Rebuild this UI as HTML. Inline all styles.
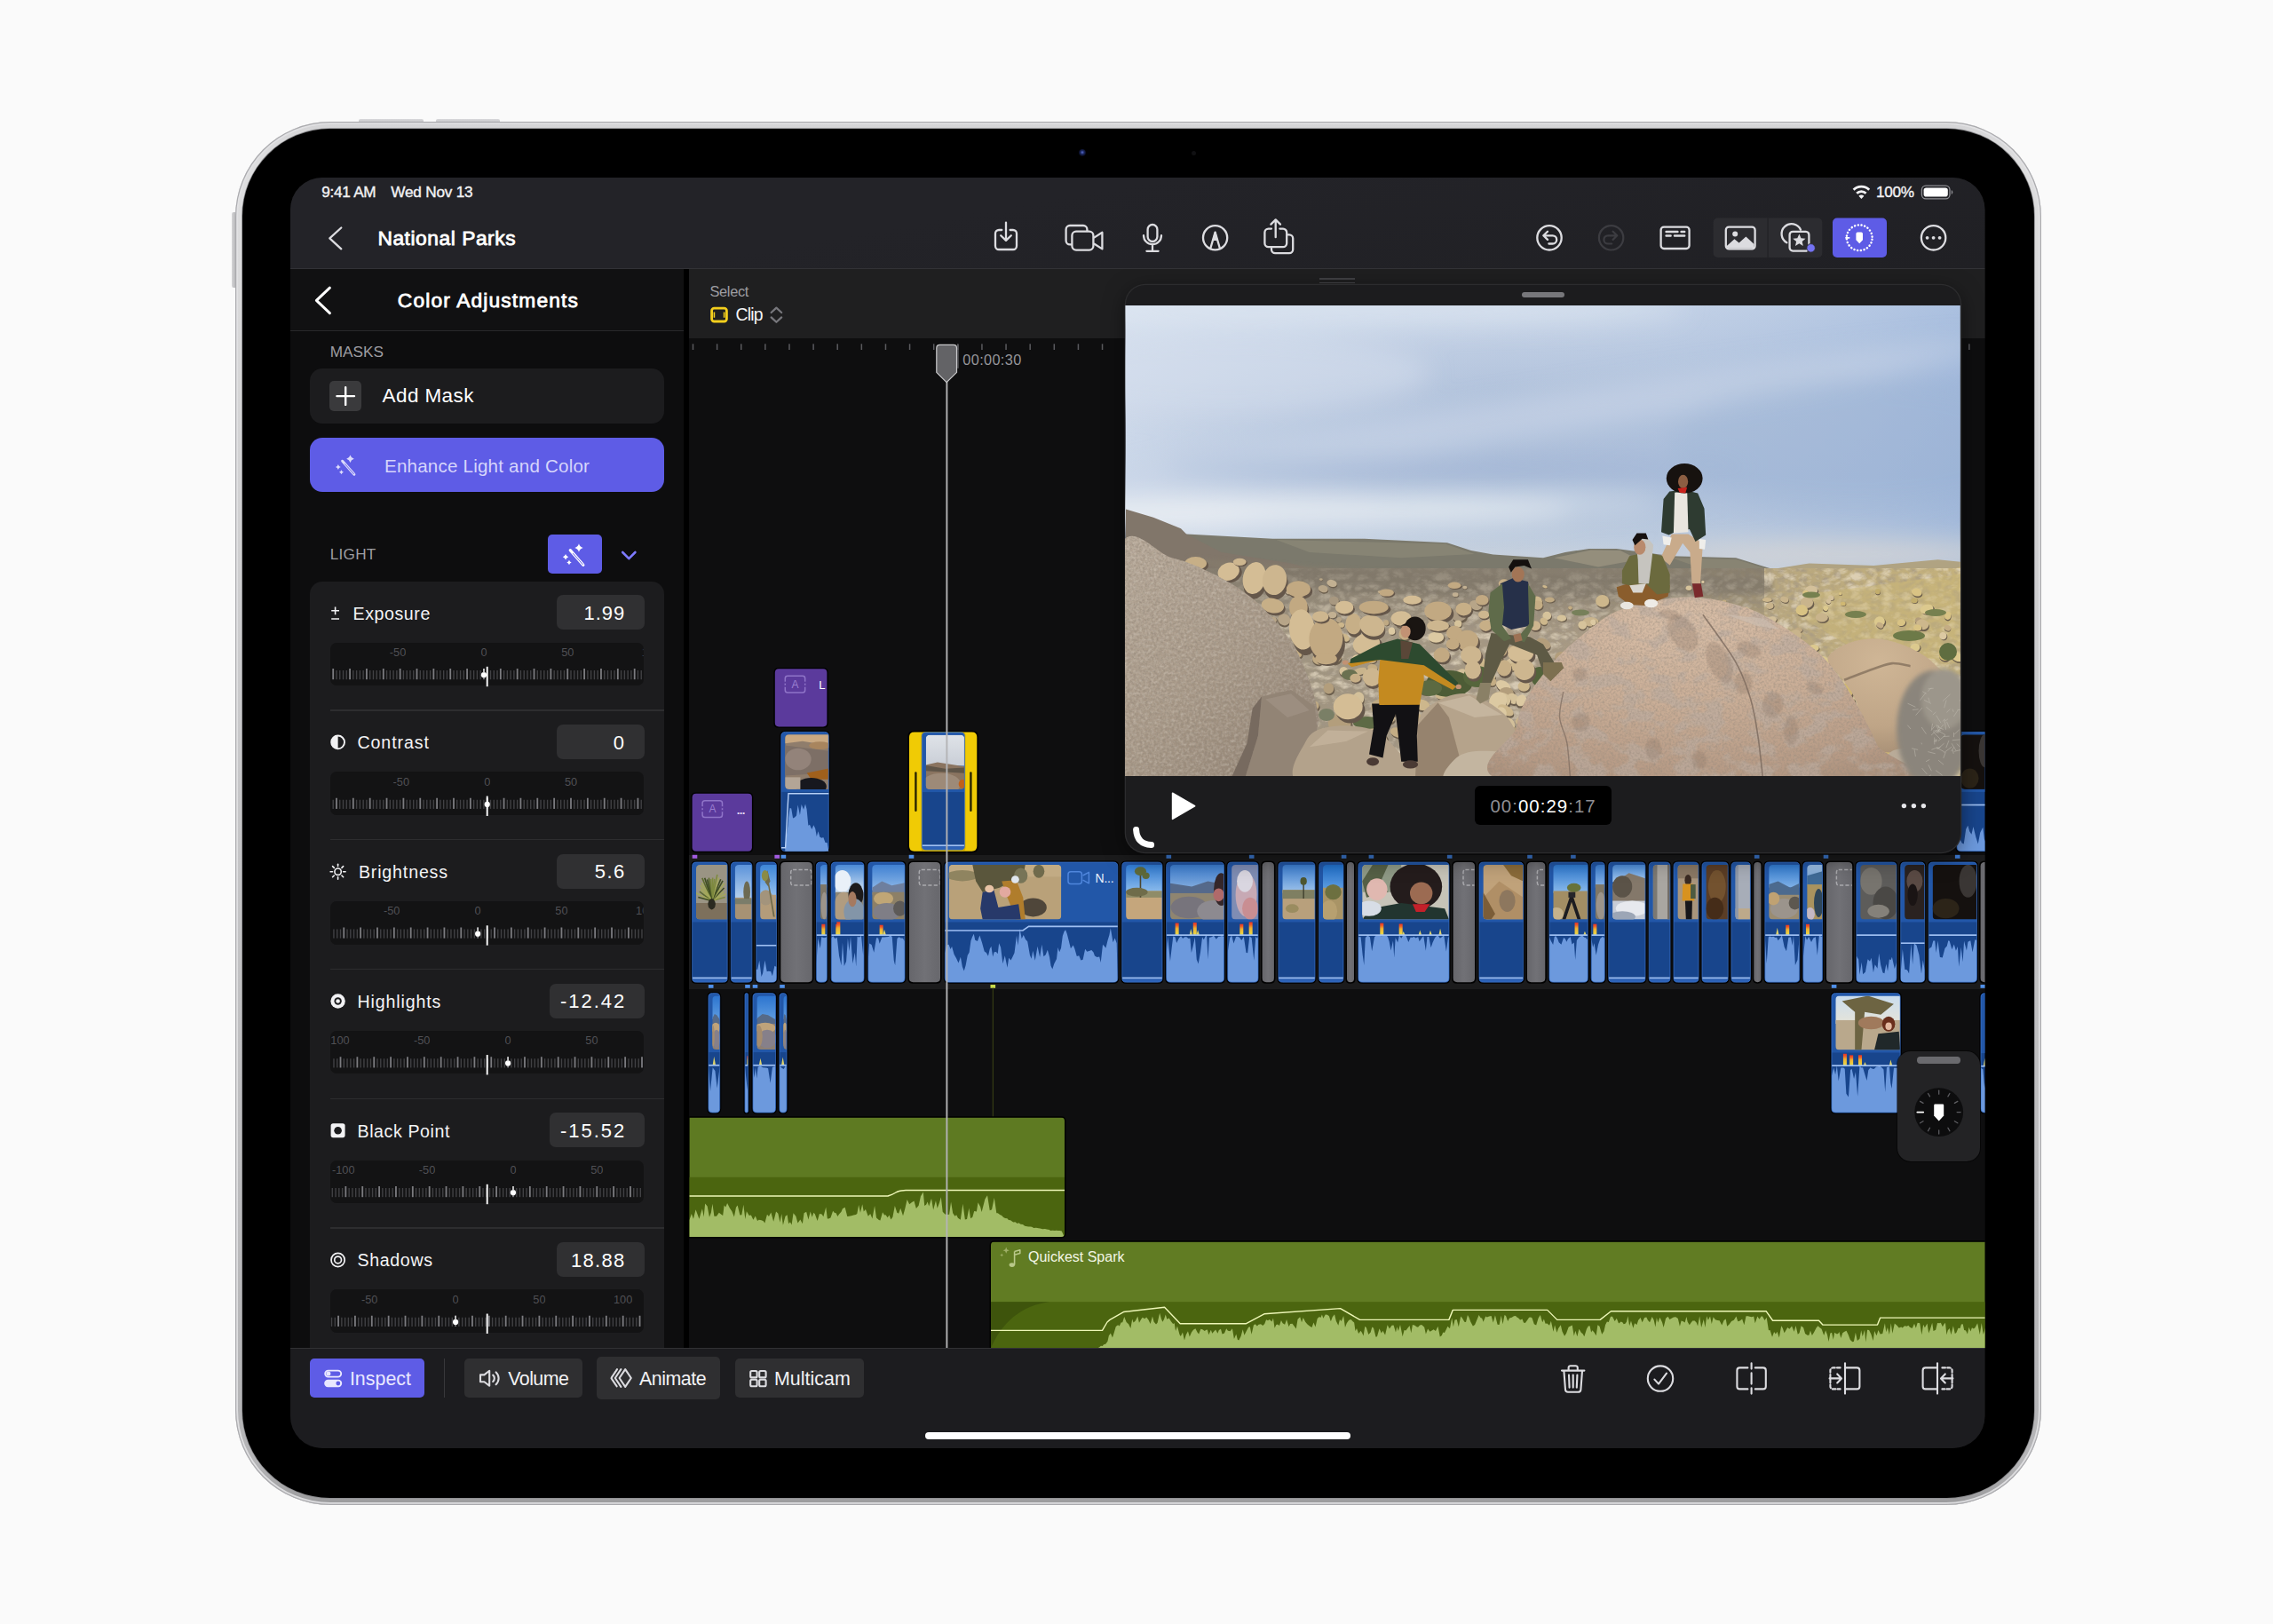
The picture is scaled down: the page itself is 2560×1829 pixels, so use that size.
<!DOCTYPE html><html lang="en"><head><meta charset="utf-8"><title>Final Cut Pro for iPad - Color Adjustments</title><style>
html,body{margin:0;padding:0}
body{width:2560px;height:1829px;background:#fafafa;position:relative;overflow:hidden;font-family:"Liberation Sans",Arial,sans-serif}
.t{position:absolute;white-space:nowrap;line-height:1;font-family:"Liberation Sans",Arial,sans-serif}
.sl{font-size:12.8px;color:#505054}
#screen{position:absolute;left:0;top:0;width:2560px;height:1829px;clip-path:inset(200px 324.5px 198px 327px round 36px)}
</style></head><body>
<div style="position:absolute;left:404.30px;top:133.60px;width:72.30px;height:6.00px;background:linear-gradient(#d9d9db,#b8b8ba);border-radius:2px 2px 0 0"></div>
<div style="position:absolute;left:490.90px;top:133.60px;width:72.30px;height:6.00px;background:linear-gradient(#d9d9db,#b8b8ba);border-radius:2px 2px 0 0"></div>
<div style="position:absolute;left:261.20px;top:238.60px;width:6.00px;height:85.70px;background:linear-gradient(90deg,#d5d5d7,#aaaaac);border-radius:2px 0 0 2px"></div>
<div style="position:absolute;left:264.60px;top:136.60px;width:2034.40px;height:1558.40px;border-radius:107px;background:linear-gradient(180deg,#d4d4d6 0%,#dededf 3%,#c6c6c8 50%,#b4b4b6 97%,#9a9a9c 100%);box-shadow:inset 0 0 0 1.2px rgba(168,168,171,.95), inset 0 0 0 3px rgba(226,226,228,.9)"></div>
<div style="position:absolute;left:272.80px;top:144.80px;width:2018.00px;height:1542.00px;border-radius:98.6px;background:#000;box-shadow:0 0 0 0.8px #8a8a8d"></div>
<div style="position:absolute;left:1215.00px;top:168.00px;width:8.00px;height:8.00px;border-radius:50%;background:radial-gradient(circle at 50% 45%,#5a6fd0 0,#1b2760 35%,#070a1a 70%,#000 100%)"></div>
<div style="position:absolute;left:1341.50px;top:169.50px;width:5.00px;height:5.00px;border-radius:50%;background:#101012"></div>
<div id="screen">
<div style="position:absolute;left:327px;top:200px;width:1909px;height:1431px;background:#0e0e0f"></div>
<div style="position:absolute;left:327.00px;top:303.20px;width:443.40px;height:1215.20px;background:#0d0d0e"></div>
<div style="position:absolute;left:327.00px;top:303.20px;width:443.40px;height:69.00px;background:#111112"></div>
<div style="position:absolute;left:327.00px;top:372.20px;width:443.40px;height:1.20px;background:#29292b"></div>
<div style="position:absolute;left:770.40px;top:303.20px;width:6.00px;height:1215.20px;background:#000"></div>
<div class="t " style="left:447.80px;top:326.70px;font-size:22.80px;font-weight:400;color:#fff;letter-spacing:1.136px;-webkit-text-stroke:0.8px #fff;">Color Adjustments</div>
<div class="t " style="left:371.80px;top:387.84px;font-size:17.20px;font-weight:400;color:#9d9da2;letter-spacing:-0.005px;">MASKS</div>
<div style="position:absolute;left:349.00px;top:415.40px;width:399.40px;height:61.20px;background:#1c1c1e;border-radius:14px"></div>
<div style="position:absolute;left:371.00px;top:429.40px;width:36.40px;height:33.40px;background:#3a3a3c;border-radius:5px"></div>
<div class="t " style="left:430.60px;top:435.05px;font-size:22.50px;font-weight:400;color:#fff;letter-spacing:0.394px;">Add Mask</div>
<div style="position:absolute;left:349.00px;top:493.30px;width:399.40px;height:61.00px;background:#5e5ce6;border-radius:14px"></div>
<div class="t " style="left:433.00px;top:514.76px;font-size:20.60px;font-weight:400;color:#d6d5fb;letter-spacing:0.192px;">Enhance Light and Color</div>
<div class="t " style="left:371.80px;top:616.24px;font-size:17.20px;font-weight:400;color:#9d9da2;letter-spacing:0.237px;">LIGHT</div>
<div style="position:absolute;left:617.40px;top:602.30px;width:61.00px;height:44.00px;background:#5e5ce6;border-radius:5px"></div>
<div style="position:absolute;left:349.00px;top:654.80px;width:399.40px;height:880.00px;background:#1c1c1e;border-radius:14px"></div>
<div class="t " style="left:397.50px;top:681.61px;font-size:19.60px;font-weight:400;color:#f4f4f6;letter-spacing:0.571px;">Exposure</div>
<div style="position:absolute;left:627.00px;top:670.30px;width:99.20px;height:39.10px;background:#303032;border-radius:7px"></div>
<div class="t " style="left:657.50px;top:679.88px;font-size:22.00px;font-weight:400;color:#fff;letter-spacing:0.994px;">1.99</div>
<div class="trk" style="position:absolute;left:372.00px;top:723.60px;width:353.20px;height:48.60px;background:#131314;border-radius:7px;overflow:hidden"></div>
<svg style="position:absolute;left:0;top:0;overflow:visible" width="1" height="1"><g><rect x="374.31" y="753.00" width="1.8" height="12.2" fill="#7c7c80"/><rect x="378.28" y="755.00" width="1.4" height="10.2" fill="#414144"/><rect x="382.05" y="755.00" width="1.4" height="10.2" fill="#414144"/><rect x="385.82" y="755.00" width="1.4" height="10.2" fill="#414144"/><rect x="389.59" y="755.00" width="1.4" height="10.2" fill="#414144"/><rect x="393.17" y="753.00" width="1.8" height="12.2" fill="#7c7c80"/><rect x="397.14" y="755.00" width="1.4" height="10.2" fill="#414144"/><rect x="400.91" y="755.00" width="1.4" height="10.2" fill="#414144"/><rect x="404.68" y="755.00" width="1.4" height="10.2" fill="#414144"/><rect x="408.45" y="755.00" width="1.4" height="10.2" fill="#414144"/><rect x="412.03" y="753.00" width="1.8" height="12.2" fill="#7c7c80"/><rect x="416.00" y="755.00" width="1.4" height="10.2" fill="#414144"/><rect x="419.77" y="755.00" width="1.4" height="10.2" fill="#414144"/><rect x="423.54" y="755.00" width="1.4" height="10.2" fill="#414144"/><rect x="427.31" y="755.00" width="1.4" height="10.2" fill="#414144"/><rect x="430.89" y="753.00" width="1.8" height="12.2" fill="#7c7c80"/><rect x="434.86" y="755.00" width="1.4" height="10.2" fill="#414144"/><rect x="438.63" y="755.00" width="1.4" height="10.2" fill="#414144"/><rect x="442.40" y="755.00" width="1.4" height="10.2" fill="#414144"/><rect x="446.17" y="755.00" width="1.4" height="10.2" fill="#414144"/><rect x="449.75" y="753.00" width="1.8" height="12.2" fill="#7c7c80"/><rect x="453.72" y="755.00" width="1.4" height="10.2" fill="#414144"/><rect x="457.49" y="755.00" width="1.4" height="10.2" fill="#414144"/><rect x="461.26" y="755.00" width="1.4" height="10.2" fill="#414144"/><rect x="465.03" y="755.00" width="1.4" height="10.2" fill="#414144"/><rect x="468.61" y="753.00" width="1.8" height="12.2" fill="#7c7c80"/><rect x="472.58" y="755.00" width="1.4" height="10.2" fill="#414144"/><rect x="476.35" y="755.00" width="1.4" height="10.2" fill="#414144"/><rect x="480.12" y="755.00" width="1.4" height="10.2" fill="#414144"/><rect x="483.89" y="755.00" width="1.4" height="10.2" fill="#414144"/><rect x="487.47" y="753.00" width="1.8" height="12.2" fill="#7c7c80"/><rect x="491.44" y="755.00" width="1.4" height="10.2" fill="#414144"/><rect x="495.21" y="755.00" width="1.4" height="10.2" fill="#414144"/><rect x="498.98" y="755.00" width="1.4" height="10.2" fill="#414144"/><rect x="502.75" y="755.00" width="1.4" height="10.2" fill="#414144"/><rect x="506.33" y="753.00" width="1.8" height="12.2" fill="#7c7c80"/><rect x="510.30" y="755.00" width="1.4" height="10.2" fill="#414144"/><rect x="514.07" y="755.00" width="1.4" height="10.2" fill="#414144"/><rect x="517.84" y="755.00" width="1.4" height="10.2" fill="#414144"/><rect x="521.61" y="755.00" width="1.4" height="10.2" fill="#414144"/><rect x="525.19" y="753.00" width="1.8" height="12.2" fill="#7c7c80"/><rect x="529.16" y="755.00" width="1.4" height="10.2" fill="#414144"/><rect x="532.93" y="755.00" width="1.4" height="10.2" fill="#414144"/><rect x="536.70" y="755.00" width="1.4" height="10.2" fill="#414144"/><rect x="540.47" y="755.00" width="1.4" height="10.2" fill="#414144"/><rect x="544.05" y="753.00" width="1.8" height="12.2" fill="#7c7c80"/><rect x="548.02" y="755.00" width="1.4" height="10.2" fill="#414144"/><rect x="551.79" y="755.00" width="1.4" height="10.2" fill="#414144"/><rect x="555.56" y="755.00" width="1.4" height="10.2" fill="#414144"/><rect x="559.33" y="755.00" width="1.4" height="10.2" fill="#414144"/><rect x="562.91" y="753.00" width="1.8" height="12.2" fill="#7c7c80"/><rect x="566.88" y="755.00" width="1.4" height="10.2" fill="#414144"/><rect x="570.65" y="755.00" width="1.4" height="10.2" fill="#414144"/><rect x="574.42" y="755.00" width="1.4" height="10.2" fill="#414144"/><rect x="578.19" y="755.00" width="1.4" height="10.2" fill="#414144"/><rect x="581.77" y="753.00" width="1.8" height="12.2" fill="#7c7c80"/><rect x="585.74" y="755.00" width="1.4" height="10.2" fill="#414144"/><rect x="589.51" y="755.00" width="1.4" height="10.2" fill="#414144"/><rect x="593.28" y="755.00" width="1.4" height="10.2" fill="#414144"/><rect x="597.05" y="755.00" width="1.4" height="10.2" fill="#414144"/><rect x="600.63" y="753.00" width="1.8" height="12.2" fill="#7c7c80"/><rect x="604.60" y="755.00" width="1.4" height="10.2" fill="#414144"/><rect x="608.37" y="755.00" width="1.4" height="10.2" fill="#414144"/><rect x="612.14" y="755.00" width="1.4" height="10.2" fill="#414144"/><rect x="615.91" y="755.00" width="1.4" height="10.2" fill="#414144"/><rect x="619.49" y="753.00" width="1.8" height="12.2" fill="#7c7c80"/><rect x="623.46" y="755.00" width="1.4" height="10.2" fill="#414144"/><rect x="627.23" y="755.00" width="1.4" height="10.2" fill="#414144"/><rect x="631.00" y="755.00" width="1.4" height="10.2" fill="#414144"/><rect x="634.77" y="755.00" width="1.4" height="10.2" fill="#414144"/><rect x="638.35" y="753.00" width="1.8" height="12.2" fill="#7c7c80"/><rect x="642.32" y="755.00" width="1.4" height="10.2" fill="#414144"/><rect x="646.09" y="755.00" width="1.4" height="10.2" fill="#414144"/><rect x="649.86" y="755.00" width="1.4" height="10.2" fill="#414144"/><rect x="653.63" y="755.00" width="1.4" height="10.2" fill="#414144"/><rect x="657.21" y="753.00" width="1.8" height="12.2" fill="#7c7c80"/><rect x="661.18" y="755.00" width="1.4" height="10.2" fill="#414144"/><rect x="664.95" y="755.00" width="1.4" height="10.2" fill="#414144"/><rect x="668.72" y="755.00" width="1.4" height="10.2" fill="#414144"/><rect x="672.49" y="755.00" width="1.4" height="10.2" fill="#414144"/><rect x="676.07" y="753.00" width="1.8" height="12.2" fill="#7c7c80"/><rect x="680.04" y="755.00" width="1.4" height="10.2" fill="#414144"/><rect x="683.81" y="755.00" width="1.4" height="10.2" fill="#414144"/><rect x="687.58" y="755.00" width="1.4" height="10.2" fill="#414144"/><rect x="691.35" y="755.00" width="1.4" height="10.2" fill="#414144"/><rect x="694.93" y="753.00" width="1.8" height="12.2" fill="#7c7c80"/><rect x="698.90" y="755.00" width="1.4" height="10.2" fill="#414144"/><rect x="702.67" y="755.00" width="1.4" height="10.2" fill="#414144"/><rect x="706.44" y="755.00" width="1.4" height="10.2" fill="#414144"/><rect x="710.21" y="755.00" width="1.4" height="10.2" fill="#414144"/><rect x="713.79" y="753.00" width="1.8" height="12.2" fill="#7c7c80"/><rect x="717.76" y="755.00" width="1.4" height="10.2" fill="#414144"/><rect x="721.53" y="755.00" width="1.4" height="10.2" fill="#414144"/><circle cx="544.95" cy="760.20" r="3.1" fill="#fff"/><rect x="544.15" y="753.00" width="1.6" height="5" fill="#d0d0d0"/><rect x="547.75" y="750.80" width="1.9" height="22.4" fill="#fff"/></g></svg>
<div class="t sl" style="left:438.80px;top:728.80px;clip-path:inset(-2px 0.00px -2px 0.00px)">-50</div>
<div class="t sl" style="left:541.39px;top:728.80px;clip-path:inset(-2px 0.00px -2px 0.00px)">0</div>
<div class="t sl" style="left:632.13px;top:728.80px;clip-path:inset(-2px 0.00px -2px 0.00px)">50</div>
<div class="t sl" style="left:722.87px;top:728.80px;clip-path:inset(-2px 19.63px -2px 0.00px)">100</div>
<div class="t " style="left:402.50px;top:827.36px;font-size:19.60px;font-weight:400;color:#f4f4f6;letter-spacing:0.903px;">Contrast</div>
<div style="position:absolute;left:627.00px;top:816.05px;width:99.20px;height:39.10px;background:#303032;border-radius:7px"></div>
<div class="t " style="left:690.80px;top:825.63px;font-size:22.00px;font-weight:400;color:#fff;letter-spacing:0.000px;">0</div>
<div class="trk" style="position:absolute;left:372.00px;top:869.35px;width:353.20px;height:48.60px;background:#131314;border-radius:7px;overflow:hidden"></div>
<svg style="position:absolute;left:0;top:0;overflow:visible" width="1" height="1"><g><rect x="374.49" y="900.75" width="1.4" height="10.2" fill="#414144"/><rect x="378.06" y="898.75" width="1.8" height="12.2" fill="#7c7c80"/><rect x="382.03" y="900.75" width="1.4" height="10.2" fill="#414144"/><rect x="385.80" y="900.75" width="1.4" height="10.2" fill="#414144"/><rect x="389.58" y="900.75" width="1.4" height="10.2" fill="#414144"/><rect x="393.35" y="900.75" width="1.4" height="10.2" fill="#414144"/><rect x="396.92" y="898.75" width="1.8" height="12.2" fill="#7c7c80"/><rect x="400.89" y="900.75" width="1.4" height="10.2" fill="#414144"/><rect x="404.66" y="900.75" width="1.4" height="10.2" fill="#414144"/><rect x="408.44" y="900.75" width="1.4" height="10.2" fill="#414144"/><rect x="412.21" y="900.75" width="1.4" height="10.2" fill="#414144"/><rect x="415.78" y="898.75" width="1.8" height="12.2" fill="#7c7c80"/><rect x="419.75" y="900.75" width="1.4" height="10.2" fill="#414144"/><rect x="423.52" y="900.75" width="1.4" height="10.2" fill="#414144"/><rect x="427.30" y="900.75" width="1.4" height="10.2" fill="#414144"/><rect x="431.07" y="900.75" width="1.4" height="10.2" fill="#414144"/><rect x="434.64" y="898.75" width="1.8" height="12.2" fill="#7c7c80"/><rect x="438.61" y="900.75" width="1.4" height="10.2" fill="#414144"/><rect x="442.38" y="900.75" width="1.4" height="10.2" fill="#414144"/><rect x="446.16" y="900.75" width="1.4" height="10.2" fill="#414144"/><rect x="449.93" y="900.75" width="1.4" height="10.2" fill="#414144"/><rect x="453.50" y="898.75" width="1.8" height="12.2" fill="#7c7c80"/><rect x="457.47" y="900.75" width="1.4" height="10.2" fill="#414144"/><rect x="461.24" y="900.75" width="1.4" height="10.2" fill="#414144"/><rect x="465.02" y="900.75" width="1.4" height="10.2" fill="#414144"/><rect x="468.79" y="900.75" width="1.4" height="10.2" fill="#414144"/><rect x="472.36" y="898.75" width="1.8" height="12.2" fill="#7c7c80"/><rect x="476.33" y="900.75" width="1.4" height="10.2" fill="#414144"/><rect x="480.10" y="900.75" width="1.4" height="10.2" fill="#414144"/><rect x="483.88" y="900.75" width="1.4" height="10.2" fill="#414144"/><rect x="487.65" y="900.75" width="1.4" height="10.2" fill="#414144"/><rect x="491.22" y="898.75" width="1.8" height="12.2" fill="#7c7c80"/><rect x="495.19" y="900.75" width="1.4" height="10.2" fill="#414144"/><rect x="498.96" y="900.75" width="1.4" height="10.2" fill="#414144"/><rect x="502.74" y="900.75" width="1.4" height="10.2" fill="#414144"/><rect x="506.51" y="900.75" width="1.4" height="10.2" fill="#414144"/><rect x="510.08" y="898.75" width="1.8" height="12.2" fill="#7c7c80"/><rect x="514.05" y="900.75" width="1.4" height="10.2" fill="#414144"/><rect x="517.82" y="900.75" width="1.4" height="10.2" fill="#414144"/><rect x="521.60" y="900.75" width="1.4" height="10.2" fill="#414144"/><rect x="525.37" y="900.75" width="1.4" height="10.2" fill="#414144"/><rect x="528.94" y="898.75" width="1.8" height="12.2" fill="#7c7c80"/><rect x="532.91" y="900.75" width="1.4" height="10.2" fill="#414144"/><rect x="536.68" y="900.75" width="1.4" height="10.2" fill="#414144"/><rect x="540.46" y="900.75" width="1.4" height="10.2" fill="#414144"/><rect x="544.23" y="900.75" width="1.4" height="10.2" fill="#414144"/><rect x="547.80" y="898.75" width="1.8" height="12.2" fill="#7c7c80"/><rect x="551.77" y="900.75" width="1.4" height="10.2" fill="#414144"/><rect x="555.54" y="900.75" width="1.4" height="10.2" fill="#414144"/><rect x="559.32" y="900.75" width="1.4" height="10.2" fill="#414144"/><rect x="563.09" y="900.75" width="1.4" height="10.2" fill="#414144"/><rect x="566.66" y="898.75" width="1.8" height="12.2" fill="#7c7c80"/><rect x="570.63" y="900.75" width="1.4" height="10.2" fill="#414144"/><rect x="574.40" y="900.75" width="1.4" height="10.2" fill="#414144"/><rect x="578.18" y="900.75" width="1.4" height="10.2" fill="#414144"/><rect x="581.95" y="900.75" width="1.4" height="10.2" fill="#414144"/><rect x="585.52" y="898.75" width="1.8" height="12.2" fill="#7c7c80"/><rect x="589.49" y="900.75" width="1.4" height="10.2" fill="#414144"/><rect x="593.26" y="900.75" width="1.4" height="10.2" fill="#414144"/><rect x="597.04" y="900.75" width="1.4" height="10.2" fill="#414144"/><rect x="600.81" y="900.75" width="1.4" height="10.2" fill="#414144"/><rect x="604.38" y="898.75" width="1.8" height="12.2" fill="#7c7c80"/><rect x="608.35" y="900.75" width="1.4" height="10.2" fill="#414144"/><rect x="612.12" y="900.75" width="1.4" height="10.2" fill="#414144"/><rect x="615.90" y="900.75" width="1.4" height="10.2" fill="#414144"/><rect x="619.67" y="900.75" width="1.4" height="10.2" fill="#414144"/><rect x="623.24" y="898.75" width="1.8" height="12.2" fill="#7c7c80"/><rect x="627.21" y="900.75" width="1.4" height="10.2" fill="#414144"/><rect x="630.98" y="900.75" width="1.4" height="10.2" fill="#414144"/><rect x="634.76" y="900.75" width="1.4" height="10.2" fill="#414144"/><rect x="638.53" y="900.75" width="1.4" height="10.2" fill="#414144"/><rect x="642.10" y="898.75" width="1.8" height="12.2" fill="#7c7c80"/><rect x="646.07" y="900.75" width="1.4" height="10.2" fill="#414144"/><rect x="649.84" y="900.75" width="1.4" height="10.2" fill="#414144"/><rect x="653.62" y="900.75" width="1.4" height="10.2" fill="#414144"/><rect x="657.39" y="900.75" width="1.4" height="10.2" fill="#414144"/><rect x="660.96" y="898.75" width="1.8" height="12.2" fill="#7c7c80"/><rect x="664.93" y="900.75" width="1.4" height="10.2" fill="#414144"/><rect x="668.70" y="900.75" width="1.4" height="10.2" fill="#414144"/><rect x="672.48" y="900.75" width="1.4" height="10.2" fill="#414144"/><rect x="676.25" y="900.75" width="1.4" height="10.2" fill="#414144"/><rect x="679.82" y="898.75" width="1.8" height="12.2" fill="#7c7c80"/><rect x="683.79" y="900.75" width="1.4" height="10.2" fill="#414144"/><rect x="687.56" y="900.75" width="1.4" height="10.2" fill="#414144"/><rect x="691.34" y="900.75" width="1.4" height="10.2" fill="#414144"/><rect x="695.11" y="900.75" width="1.4" height="10.2" fill="#414144"/><rect x="698.68" y="898.75" width="1.8" height="12.2" fill="#7c7c80"/><rect x="702.65" y="900.75" width="1.4" height="10.2" fill="#414144"/><rect x="706.42" y="900.75" width="1.4" height="10.2" fill="#414144"/><rect x="710.20" y="900.75" width="1.4" height="10.2" fill="#414144"/><rect x="713.97" y="900.75" width="1.4" height="10.2" fill="#414144"/><rect x="717.54" y="898.75" width="1.8" height="12.2" fill="#7c7c80"/><rect x="721.51" y="900.75" width="1.4" height="10.2" fill="#414144"/><circle cx="548.70" cy="905.95" r="3.1" fill="#fff"/><rect x="547.90" y="898.75" width="1.6" height="5" fill="#d0d0d0"/><rect x="547.75" y="896.55" width="1.9" height="22.4" fill="#fff"/></g></svg>
<div class="t sl" style="left:442.55px;top:874.55px;clip-path:inset(-2px 0.00px -2px 0.00px)">-50</div>
<div class="t sl" style="left:545.14px;top:874.55px;clip-path:inset(-2px 0.00px -2px 0.00px)">0</div>
<div class="t sl" style="left:635.88px;top:874.55px;clip-path:inset(-2px 0.00px -2px 0.00px)">50</div>
<div style="position:absolute;left:372.00px;top:799.40px;width:376.40px;height:1.30px;background:#2d2d2f"></div>
<div class="t " style="left:403.90px;top:973.11px;font-size:19.60px;font-weight:400;color:#f4f4f6;letter-spacing:0.844px;">Brightness</div>
<div style="position:absolute;left:627.00px;top:961.80px;width:99.20px;height:39.10px;background:#303032;border-radius:7px"></div>
<div class="t " style="left:669.70px;top:971.38px;font-size:22.00px;font-weight:400;color:#fff;letter-spacing:1.508px;">5.6</div>
<div class="trk" style="position:absolute;left:372.00px;top:1015.10px;width:353.20px;height:48.60px;background:#131314;border-radius:7px;overflow:hidden"></div>
<svg style="position:absolute;left:0;top:0;overflow:visible" width="1" height="1"><g><rect x="375.24" y="1046.50" width="1.4" height="10.2" fill="#414144"/><rect x="379.01" y="1046.50" width="1.4" height="10.2" fill="#414144"/><rect x="382.79" y="1046.50" width="1.4" height="10.2" fill="#414144"/><rect x="386.36" y="1044.50" width="1.8" height="12.2" fill="#7c7c80"/><rect x="390.33" y="1046.50" width="1.4" height="10.2" fill="#414144"/><rect x="394.10" y="1046.50" width="1.4" height="10.2" fill="#414144"/><rect x="397.87" y="1046.50" width="1.4" height="10.2" fill="#414144"/><rect x="401.65" y="1046.50" width="1.4" height="10.2" fill="#414144"/><rect x="405.22" y="1044.50" width="1.8" height="12.2" fill="#7c7c80"/><rect x="409.19" y="1046.50" width="1.4" height="10.2" fill="#414144"/><rect x="412.96" y="1046.50" width="1.4" height="10.2" fill="#414144"/><rect x="416.73" y="1046.50" width="1.4" height="10.2" fill="#414144"/><rect x="420.51" y="1046.50" width="1.4" height="10.2" fill="#414144"/><rect x="424.08" y="1044.50" width="1.8" height="12.2" fill="#7c7c80"/><rect x="428.05" y="1046.50" width="1.4" height="10.2" fill="#414144"/><rect x="431.82" y="1046.50" width="1.4" height="10.2" fill="#414144"/><rect x="435.59" y="1046.50" width="1.4" height="10.2" fill="#414144"/><rect x="439.37" y="1046.50" width="1.4" height="10.2" fill="#414144"/><rect x="442.94" y="1044.50" width="1.8" height="12.2" fill="#7c7c80"/><rect x="446.91" y="1046.50" width="1.4" height="10.2" fill="#414144"/><rect x="450.68" y="1046.50" width="1.4" height="10.2" fill="#414144"/><rect x="454.45" y="1046.50" width="1.4" height="10.2" fill="#414144"/><rect x="458.23" y="1046.50" width="1.4" height="10.2" fill="#414144"/><rect x="461.80" y="1044.50" width="1.8" height="12.2" fill="#7c7c80"/><rect x="465.77" y="1046.50" width="1.4" height="10.2" fill="#414144"/><rect x="469.54" y="1046.50" width="1.4" height="10.2" fill="#414144"/><rect x="473.31" y="1046.50" width="1.4" height="10.2" fill="#414144"/><rect x="477.09" y="1046.50" width="1.4" height="10.2" fill="#414144"/><rect x="480.66" y="1044.50" width="1.8" height="12.2" fill="#7c7c80"/><rect x="484.63" y="1046.50" width="1.4" height="10.2" fill="#414144"/><rect x="488.40" y="1046.50" width="1.4" height="10.2" fill="#414144"/><rect x="492.17" y="1046.50" width="1.4" height="10.2" fill="#414144"/><rect x="495.95" y="1046.50" width="1.4" height="10.2" fill="#414144"/><rect x="499.52" y="1044.50" width="1.8" height="12.2" fill="#7c7c80"/><rect x="503.49" y="1046.50" width="1.4" height="10.2" fill="#414144"/><rect x="507.26" y="1046.50" width="1.4" height="10.2" fill="#414144"/><rect x="511.03" y="1046.50" width="1.4" height="10.2" fill="#414144"/><rect x="514.81" y="1046.50" width="1.4" height="10.2" fill="#414144"/><rect x="518.38" y="1044.50" width="1.8" height="12.2" fill="#7c7c80"/><rect x="522.35" y="1046.50" width="1.4" height="10.2" fill="#414144"/><rect x="526.12" y="1046.50" width="1.4" height="10.2" fill="#414144"/><rect x="529.89" y="1046.50" width="1.4" height="10.2" fill="#414144"/><rect x="533.67" y="1046.50" width="1.4" height="10.2" fill="#414144"/><rect x="537.24" y="1044.50" width="1.8" height="12.2" fill="#7c7c80"/><rect x="541.21" y="1046.50" width="1.4" height="10.2" fill="#414144"/><rect x="544.98" y="1046.50" width="1.4" height="10.2" fill="#414144"/><rect x="548.75" y="1046.50" width="1.4" height="10.2" fill="#414144"/><rect x="552.53" y="1046.50" width="1.4" height="10.2" fill="#414144"/><rect x="556.10" y="1044.50" width="1.8" height="12.2" fill="#7c7c80"/><rect x="560.07" y="1046.50" width="1.4" height="10.2" fill="#414144"/><rect x="563.84" y="1046.50" width="1.4" height="10.2" fill="#414144"/><rect x="567.61" y="1046.50" width="1.4" height="10.2" fill="#414144"/><rect x="571.39" y="1046.50" width="1.4" height="10.2" fill="#414144"/><rect x="574.96" y="1044.50" width="1.8" height="12.2" fill="#7c7c80"/><rect x="578.93" y="1046.50" width="1.4" height="10.2" fill="#414144"/><rect x="582.70" y="1046.50" width="1.4" height="10.2" fill="#414144"/><rect x="586.47" y="1046.50" width="1.4" height="10.2" fill="#414144"/><rect x="590.25" y="1046.50" width="1.4" height="10.2" fill="#414144"/><rect x="593.82" y="1044.50" width="1.8" height="12.2" fill="#7c7c80"/><rect x="597.79" y="1046.50" width="1.4" height="10.2" fill="#414144"/><rect x="601.56" y="1046.50" width="1.4" height="10.2" fill="#414144"/><rect x="605.33" y="1046.50" width="1.4" height="10.2" fill="#414144"/><rect x="609.11" y="1046.50" width="1.4" height="10.2" fill="#414144"/><rect x="612.68" y="1044.50" width="1.8" height="12.2" fill="#7c7c80"/><rect x="616.65" y="1046.50" width="1.4" height="10.2" fill="#414144"/><rect x="620.42" y="1046.50" width="1.4" height="10.2" fill="#414144"/><rect x="624.19" y="1046.50" width="1.4" height="10.2" fill="#414144"/><rect x="627.97" y="1046.50" width="1.4" height="10.2" fill="#414144"/><rect x="631.54" y="1044.50" width="1.8" height="12.2" fill="#7c7c80"/><rect x="635.51" y="1046.50" width="1.4" height="10.2" fill="#414144"/><rect x="639.28" y="1046.50" width="1.4" height="10.2" fill="#414144"/><rect x="643.05" y="1046.50" width="1.4" height="10.2" fill="#414144"/><rect x="646.83" y="1046.50" width="1.4" height="10.2" fill="#414144"/><rect x="650.40" y="1044.50" width="1.8" height="12.2" fill="#7c7c80"/><rect x="654.37" y="1046.50" width="1.4" height="10.2" fill="#414144"/><rect x="658.14" y="1046.50" width="1.4" height="10.2" fill="#414144"/><rect x="661.91" y="1046.50" width="1.4" height="10.2" fill="#414144"/><rect x="665.69" y="1046.50" width="1.4" height="10.2" fill="#414144"/><rect x="669.26" y="1044.50" width="1.8" height="12.2" fill="#7c7c80"/><rect x="673.23" y="1046.50" width="1.4" height="10.2" fill="#414144"/><rect x="677.00" y="1046.50" width="1.4" height="10.2" fill="#414144"/><rect x="680.77" y="1046.50" width="1.4" height="10.2" fill="#414144"/><rect x="684.55" y="1046.50" width="1.4" height="10.2" fill="#414144"/><rect x="688.12" y="1044.50" width="1.8" height="12.2" fill="#7c7c80"/><rect x="692.09" y="1046.50" width="1.4" height="10.2" fill="#414144"/><rect x="695.86" y="1046.50" width="1.4" height="10.2" fill="#414144"/><rect x="699.63" y="1046.50" width="1.4" height="10.2" fill="#414144"/><rect x="703.41" y="1046.50" width="1.4" height="10.2" fill="#414144"/><rect x="706.98" y="1044.50" width="1.8" height="12.2" fill="#7c7c80"/><rect x="710.95" y="1046.50" width="1.4" height="10.2" fill="#414144"/><rect x="714.72" y="1046.50" width="1.4" height="10.2" fill="#414144"/><rect x="718.49" y="1046.50" width="1.4" height="10.2" fill="#414144"/><rect x="722.27" y="1046.50" width="1.4" height="10.2" fill="#414144"/><circle cx="538.14" cy="1051.70" r="3.1" fill="#fff"/><rect x="537.34" y="1044.50" width="1.6" height="5" fill="#d0d0d0"/><rect x="547.75" y="1042.30" width="1.9" height="22.4" fill="#fff"/></g></svg>
<div class="t sl" style="left:431.99px;top:1020.30px;clip-path:inset(-2px 0.00px -2px 0.00px)">-50</div>
<div class="t sl" style="left:534.58px;top:1020.30px;clip-path:inset(-2px 0.00px -2px 0.00px)">0</div>
<div class="t sl" style="left:625.32px;top:1020.30px;clip-path:inset(-2px 0.00px -2px 0.00px)">50</div>
<div class="t sl" style="left:716.06px;top:1020.30px;clip-path:inset(-2px 12.82px -2px 0.00px)">100</div>
<div style="position:absolute;left:372.00px;top:945.15px;width:376.40px;height:1.30px;background:#2d2d2f"></div>
<div class="t " style="left:402.50px;top:1118.86px;font-size:19.60px;font-weight:400;color:#f4f4f6;letter-spacing:0.870px;">Highlights</div>
<div style="position:absolute;left:618.80px;top:1107.55px;width:107.40px;height:39.10px;background:#303032;border-radius:7px"></div>
<div class="t " style="left:631.00px;top:1117.13px;font-size:22.00px;font-weight:400;color:#fff;letter-spacing:1.984px;">-12.42</div>
<div class="trk" style="position:absolute;left:372.00px;top:1160.85px;width:353.20px;height:48.60px;background:#131314;border-radius:7px;overflow:hidden"></div>
<svg style="position:absolute;left:0;top:0;overflow:visible" width="1" height="1"><g><rect x="375.28" y="1192.25" width="1.4" height="10.2" fill="#414144"/><rect x="379.05" y="1192.25" width="1.4" height="10.2" fill="#414144"/><rect x="382.62" y="1190.25" width="1.8" height="12.2" fill="#7c7c80"/><rect x="386.60" y="1192.25" width="1.4" height="10.2" fill="#414144"/><rect x="390.37" y="1192.25" width="1.4" height="10.2" fill="#414144"/><rect x="394.14" y="1192.25" width="1.4" height="10.2" fill="#414144"/><rect x="397.91" y="1192.25" width="1.4" height="10.2" fill="#414144"/><rect x="401.48" y="1190.25" width="1.8" height="12.2" fill="#7c7c80"/><rect x="405.46" y="1192.25" width="1.4" height="10.2" fill="#414144"/><rect x="409.23" y="1192.25" width="1.4" height="10.2" fill="#414144"/><rect x="413.00" y="1192.25" width="1.4" height="10.2" fill="#414144"/><rect x="416.77" y="1192.25" width="1.4" height="10.2" fill="#414144"/><rect x="420.34" y="1190.25" width="1.8" height="12.2" fill="#7c7c80"/><rect x="424.32" y="1192.25" width="1.4" height="10.2" fill="#414144"/><rect x="428.09" y="1192.25" width="1.4" height="10.2" fill="#414144"/><rect x="431.86" y="1192.25" width="1.4" height="10.2" fill="#414144"/><rect x="435.63" y="1192.25" width="1.4" height="10.2" fill="#414144"/><rect x="439.20" y="1190.25" width="1.8" height="12.2" fill="#7c7c80"/><rect x="443.18" y="1192.25" width="1.4" height="10.2" fill="#414144"/><rect x="446.95" y="1192.25" width="1.4" height="10.2" fill="#414144"/><rect x="450.72" y="1192.25" width="1.4" height="10.2" fill="#414144"/><rect x="454.49" y="1192.25" width="1.4" height="10.2" fill="#414144"/><rect x="458.06" y="1190.25" width="1.8" height="12.2" fill="#7c7c80"/><rect x="462.04" y="1192.25" width="1.4" height="10.2" fill="#414144"/><rect x="465.81" y="1192.25" width="1.4" height="10.2" fill="#414144"/><rect x="469.58" y="1192.25" width="1.4" height="10.2" fill="#414144"/><rect x="473.35" y="1192.25" width="1.4" height="10.2" fill="#414144"/><rect x="476.92" y="1190.25" width="1.8" height="12.2" fill="#7c7c80"/><rect x="480.90" y="1192.25" width="1.4" height="10.2" fill="#414144"/><rect x="484.67" y="1192.25" width="1.4" height="10.2" fill="#414144"/><rect x="488.44" y="1192.25" width="1.4" height="10.2" fill="#414144"/><rect x="492.21" y="1192.25" width="1.4" height="10.2" fill="#414144"/><rect x="495.78" y="1190.25" width="1.8" height="12.2" fill="#7c7c80"/><rect x="499.76" y="1192.25" width="1.4" height="10.2" fill="#414144"/><rect x="503.53" y="1192.25" width="1.4" height="10.2" fill="#414144"/><rect x="507.30" y="1192.25" width="1.4" height="10.2" fill="#414144"/><rect x="511.07" y="1192.25" width="1.4" height="10.2" fill="#414144"/><rect x="514.64" y="1190.25" width="1.8" height="12.2" fill="#7c7c80"/><rect x="518.62" y="1192.25" width="1.4" height="10.2" fill="#414144"/><rect x="522.39" y="1192.25" width="1.4" height="10.2" fill="#414144"/><rect x="526.16" y="1192.25" width="1.4" height="10.2" fill="#414144"/><rect x="529.93" y="1192.25" width="1.4" height="10.2" fill="#414144"/><rect x="533.50" y="1190.25" width="1.8" height="12.2" fill="#7c7c80"/><rect x="537.48" y="1192.25" width="1.4" height="10.2" fill="#414144"/><rect x="541.25" y="1192.25" width="1.4" height="10.2" fill="#414144"/><rect x="545.02" y="1192.25" width="1.4" height="10.2" fill="#414144"/><rect x="548.79" y="1192.25" width="1.4" height="10.2" fill="#414144"/><rect x="552.36" y="1190.25" width="1.8" height="12.2" fill="#7c7c80"/><rect x="556.34" y="1192.25" width="1.4" height="10.2" fill="#414144"/><rect x="560.11" y="1192.25" width="1.4" height="10.2" fill="#414144"/><rect x="563.88" y="1192.25" width="1.4" height="10.2" fill="#414144"/><rect x="567.65" y="1192.25" width="1.4" height="10.2" fill="#414144"/><rect x="571.22" y="1190.25" width="1.8" height="12.2" fill="#7c7c80"/><rect x="575.20" y="1192.25" width="1.4" height="10.2" fill="#414144"/><rect x="578.97" y="1192.25" width="1.4" height="10.2" fill="#414144"/><rect x="582.74" y="1192.25" width="1.4" height="10.2" fill="#414144"/><rect x="586.51" y="1192.25" width="1.4" height="10.2" fill="#414144"/><rect x="590.08" y="1190.25" width="1.8" height="12.2" fill="#7c7c80"/><rect x="594.06" y="1192.25" width="1.4" height="10.2" fill="#414144"/><rect x="597.83" y="1192.25" width="1.4" height="10.2" fill="#414144"/><rect x="601.60" y="1192.25" width="1.4" height="10.2" fill="#414144"/><rect x="605.37" y="1192.25" width="1.4" height="10.2" fill="#414144"/><rect x="608.94" y="1190.25" width="1.8" height="12.2" fill="#7c7c80"/><rect x="612.92" y="1192.25" width="1.4" height="10.2" fill="#414144"/><rect x="616.69" y="1192.25" width="1.4" height="10.2" fill="#414144"/><rect x="620.46" y="1192.25" width="1.4" height="10.2" fill="#414144"/><rect x="624.23" y="1192.25" width="1.4" height="10.2" fill="#414144"/><rect x="627.80" y="1190.25" width="1.8" height="12.2" fill="#7c7c80"/><rect x="631.78" y="1192.25" width="1.4" height="10.2" fill="#414144"/><rect x="635.55" y="1192.25" width="1.4" height="10.2" fill="#414144"/><rect x="639.32" y="1192.25" width="1.4" height="10.2" fill="#414144"/><rect x="643.09" y="1192.25" width="1.4" height="10.2" fill="#414144"/><rect x="646.66" y="1190.25" width="1.8" height="12.2" fill="#7c7c80"/><rect x="650.64" y="1192.25" width="1.4" height="10.2" fill="#414144"/><rect x="654.41" y="1192.25" width="1.4" height="10.2" fill="#414144"/><rect x="658.18" y="1192.25" width="1.4" height="10.2" fill="#414144"/><rect x="661.95" y="1192.25" width="1.4" height="10.2" fill="#414144"/><rect x="665.52" y="1190.25" width="1.8" height="12.2" fill="#7c7c80"/><rect x="669.50" y="1192.25" width="1.4" height="10.2" fill="#414144"/><rect x="673.27" y="1192.25" width="1.4" height="10.2" fill="#414144"/><rect x="677.04" y="1192.25" width="1.4" height="10.2" fill="#414144"/><rect x="680.81" y="1192.25" width="1.4" height="10.2" fill="#414144"/><rect x="684.38" y="1190.25" width="1.8" height="12.2" fill="#7c7c80"/><rect x="688.36" y="1192.25" width="1.4" height="10.2" fill="#414144"/><rect x="692.13" y="1192.25" width="1.4" height="10.2" fill="#414144"/><rect x="695.90" y="1192.25" width="1.4" height="10.2" fill="#414144"/><rect x="699.67" y="1192.25" width="1.4" height="10.2" fill="#414144"/><rect x="703.24" y="1190.25" width="1.8" height="12.2" fill="#7c7c80"/><rect x="707.22" y="1192.25" width="1.4" height="10.2" fill="#414144"/><rect x="710.99" y="1192.25" width="1.4" height="10.2" fill="#414144"/><rect x="714.76" y="1192.25" width="1.4" height="10.2" fill="#414144"/><rect x="718.53" y="1192.25" width="1.4" height="10.2" fill="#414144"/><rect x="722.10" y="1190.25" width="1.8" height="12.2" fill="#7c7c80"/><circle cx="572.12" cy="1197.45" r="3.1" fill="#fff"/><rect x="571.32" y="1190.25" width="1.6" height="5" fill="#d0d0d0"/><rect x="547.75" y="1188.05" width="1.9" height="22.4" fill="#fff"/></g></svg>
<div class="t sl" style="left:368.11px;top:1166.05px;clip-path:inset(-2px 0.00px -2px 4.49px)">-100</div>
<div class="t sl" style="left:465.97px;top:1166.05px;clip-path:inset(-2px 0.00px -2px 0.00px)">-50</div>
<div class="t sl" style="left:568.56px;top:1166.05px;clip-path:inset(-2px 0.00px -2px 0.00px)">0</div>
<div class="t sl" style="left:659.31px;top:1166.05px;clip-path:inset(-2px 0.00px -2px 0.00px)">50</div>
<div style="position:absolute;left:372.00px;top:1090.90px;width:376.40px;height:1.30px;background:#2d2d2f"></div>
<div class="t " style="left:402.50px;top:1264.61px;font-size:19.60px;font-weight:400;color:#f4f4f6;letter-spacing:0.595px;">Black Point</div>
<div style="position:absolute;left:618.80px;top:1253.30px;width:107.40px;height:39.10px;background:#303032;border-radius:7px"></div>
<div class="t " style="left:631.00px;top:1262.88px;font-size:22.00px;font-weight:400;color:#fff;letter-spacing:1.984px;">-15.52</div>
<div class="trk" style="position:absolute;left:372.00px;top:1306.60px;width:353.20px;height:48.60px;background:#131314;border-radius:7px;overflow:hidden"></div>
<svg style="position:absolute;left:0;top:0;overflow:visible" width="1" height="1"><g><rect x="373.58" y="1338.00" width="1.4" height="10.2" fill="#414144"/><rect x="377.35" y="1338.00" width="1.4" height="10.2" fill="#414144"/><rect x="381.13" y="1338.00" width="1.4" height="10.2" fill="#414144"/><rect x="384.90" y="1338.00" width="1.4" height="10.2" fill="#414144"/><rect x="388.47" y="1336.00" width="1.8" height="12.2" fill="#7c7c80"/><rect x="392.44" y="1338.00" width="1.4" height="10.2" fill="#414144"/><rect x="396.21" y="1338.00" width="1.4" height="10.2" fill="#414144"/><rect x="399.99" y="1338.00" width="1.4" height="10.2" fill="#414144"/><rect x="403.76" y="1338.00" width="1.4" height="10.2" fill="#414144"/><rect x="407.33" y="1336.00" width="1.8" height="12.2" fill="#7c7c80"/><rect x="411.30" y="1338.00" width="1.4" height="10.2" fill="#414144"/><rect x="415.07" y="1338.00" width="1.4" height="10.2" fill="#414144"/><rect x="418.85" y="1338.00" width="1.4" height="10.2" fill="#414144"/><rect x="422.62" y="1338.00" width="1.4" height="10.2" fill="#414144"/><rect x="426.19" y="1336.00" width="1.8" height="12.2" fill="#7c7c80"/><rect x="430.16" y="1338.00" width="1.4" height="10.2" fill="#414144"/><rect x="433.93" y="1338.00" width="1.4" height="10.2" fill="#414144"/><rect x="437.71" y="1338.00" width="1.4" height="10.2" fill="#414144"/><rect x="441.48" y="1338.00" width="1.4" height="10.2" fill="#414144"/><rect x="445.05" y="1336.00" width="1.8" height="12.2" fill="#7c7c80"/><rect x="449.02" y="1338.00" width="1.4" height="10.2" fill="#414144"/><rect x="452.79" y="1338.00" width="1.4" height="10.2" fill="#414144"/><rect x="456.57" y="1338.00" width="1.4" height="10.2" fill="#414144"/><rect x="460.34" y="1338.00" width="1.4" height="10.2" fill="#414144"/><rect x="463.91" y="1336.00" width="1.8" height="12.2" fill="#7c7c80"/><rect x="467.88" y="1338.00" width="1.4" height="10.2" fill="#414144"/><rect x="471.65" y="1338.00" width="1.4" height="10.2" fill="#414144"/><rect x="475.43" y="1338.00" width="1.4" height="10.2" fill="#414144"/><rect x="479.20" y="1338.00" width="1.4" height="10.2" fill="#414144"/><rect x="482.77" y="1336.00" width="1.8" height="12.2" fill="#7c7c80"/><rect x="486.74" y="1338.00" width="1.4" height="10.2" fill="#414144"/><rect x="490.51" y="1338.00" width="1.4" height="10.2" fill="#414144"/><rect x="494.29" y="1338.00" width="1.4" height="10.2" fill="#414144"/><rect x="498.06" y="1338.00" width="1.4" height="10.2" fill="#414144"/><rect x="501.63" y="1336.00" width="1.8" height="12.2" fill="#7c7c80"/><rect x="505.60" y="1338.00" width="1.4" height="10.2" fill="#414144"/><rect x="509.37" y="1338.00" width="1.4" height="10.2" fill="#414144"/><rect x="513.15" y="1338.00" width="1.4" height="10.2" fill="#414144"/><rect x="516.92" y="1338.00" width="1.4" height="10.2" fill="#414144"/><rect x="520.49" y="1336.00" width="1.8" height="12.2" fill="#7c7c80"/><rect x="524.46" y="1338.00" width="1.4" height="10.2" fill="#414144"/><rect x="528.23" y="1338.00" width="1.4" height="10.2" fill="#414144"/><rect x="532.01" y="1338.00" width="1.4" height="10.2" fill="#414144"/><rect x="535.78" y="1338.00" width="1.4" height="10.2" fill="#414144"/><rect x="539.35" y="1336.00" width="1.8" height="12.2" fill="#7c7c80"/><rect x="543.32" y="1338.00" width="1.4" height="10.2" fill="#414144"/><rect x="547.09" y="1338.00" width="1.4" height="10.2" fill="#414144"/><rect x="550.87" y="1338.00" width="1.4" height="10.2" fill="#414144"/><rect x="554.64" y="1338.00" width="1.4" height="10.2" fill="#414144"/><rect x="558.21" y="1336.00" width="1.8" height="12.2" fill="#7c7c80"/><rect x="562.18" y="1338.00" width="1.4" height="10.2" fill="#414144"/><rect x="565.95" y="1338.00" width="1.4" height="10.2" fill="#414144"/><rect x="569.73" y="1338.00" width="1.4" height="10.2" fill="#414144"/><rect x="573.50" y="1338.00" width="1.4" height="10.2" fill="#414144"/><rect x="577.07" y="1336.00" width="1.8" height="12.2" fill="#7c7c80"/><rect x="581.04" y="1338.00" width="1.4" height="10.2" fill="#414144"/><rect x="584.81" y="1338.00" width="1.4" height="10.2" fill="#414144"/><rect x="588.59" y="1338.00" width="1.4" height="10.2" fill="#414144"/><rect x="592.36" y="1338.00" width="1.4" height="10.2" fill="#414144"/><rect x="595.93" y="1336.00" width="1.8" height="12.2" fill="#7c7c80"/><rect x="599.90" y="1338.00" width="1.4" height="10.2" fill="#414144"/><rect x="603.67" y="1338.00" width="1.4" height="10.2" fill="#414144"/><rect x="607.45" y="1338.00" width="1.4" height="10.2" fill="#414144"/><rect x="611.22" y="1338.00" width="1.4" height="10.2" fill="#414144"/><rect x="614.79" y="1336.00" width="1.8" height="12.2" fill="#7c7c80"/><rect x="618.76" y="1338.00" width="1.4" height="10.2" fill="#414144"/><rect x="622.53" y="1338.00" width="1.4" height="10.2" fill="#414144"/><rect x="626.31" y="1338.00" width="1.4" height="10.2" fill="#414144"/><rect x="630.08" y="1338.00" width="1.4" height="10.2" fill="#414144"/><rect x="633.65" y="1336.00" width="1.8" height="12.2" fill="#7c7c80"/><rect x="637.62" y="1338.00" width="1.4" height="10.2" fill="#414144"/><rect x="641.39" y="1338.00" width="1.4" height="10.2" fill="#414144"/><rect x="645.17" y="1338.00" width="1.4" height="10.2" fill="#414144"/><rect x="648.94" y="1338.00" width="1.4" height="10.2" fill="#414144"/><rect x="652.51" y="1336.00" width="1.8" height="12.2" fill="#7c7c80"/><rect x="656.48" y="1338.00" width="1.4" height="10.2" fill="#414144"/><rect x="660.25" y="1338.00" width="1.4" height="10.2" fill="#414144"/><rect x="664.03" y="1338.00" width="1.4" height="10.2" fill="#414144"/><rect x="667.80" y="1338.00" width="1.4" height="10.2" fill="#414144"/><rect x="671.37" y="1336.00" width="1.8" height="12.2" fill="#7c7c80"/><rect x="675.34" y="1338.00" width="1.4" height="10.2" fill="#414144"/><rect x="679.11" y="1338.00" width="1.4" height="10.2" fill="#414144"/><rect x="682.89" y="1338.00" width="1.4" height="10.2" fill="#414144"/><rect x="686.66" y="1338.00" width="1.4" height="10.2" fill="#414144"/><rect x="690.23" y="1336.00" width="1.8" height="12.2" fill="#7c7c80"/><rect x="694.20" y="1338.00" width="1.4" height="10.2" fill="#414144"/><rect x="697.97" y="1338.00" width="1.4" height="10.2" fill="#414144"/><rect x="701.75" y="1338.00" width="1.4" height="10.2" fill="#414144"/><rect x="705.52" y="1338.00" width="1.4" height="10.2" fill="#414144"/><rect x="709.09" y="1336.00" width="1.8" height="12.2" fill="#7c7c80"/><rect x="713.06" y="1338.00" width="1.4" height="10.2" fill="#414144"/><rect x="716.83" y="1338.00" width="1.4" height="10.2" fill="#414144"/><rect x="720.61" y="1338.00" width="1.4" height="10.2" fill="#414144"/><circle cx="577.97" cy="1343.20" r="3.1" fill="#fff"/><rect x="577.17" y="1336.00" width="1.6" height="5" fill="#d0d0d0"/><rect x="547.75" y="1333.80" width="1.9" height="22.4" fill="#fff"/></g></svg>
<div class="t sl" style="left:373.96px;top:1311.80px;clip-path:inset(-2px 0.00px -2px 0.00px)">-100</div>
<div class="t sl" style="left:471.82px;top:1311.80px;clip-path:inset(-2px 0.00px -2px 0.00px)">-50</div>
<div class="t sl" style="left:574.41px;top:1311.80px;clip-path:inset(-2px 0.00px -2px 0.00px)">0</div>
<div class="t sl" style="left:665.15px;top:1311.80px;clip-path:inset(-2px 0.00px -2px 0.00px)">50</div>
<div style="position:absolute;left:372.00px;top:1236.65px;width:376.40px;height:1.30px;background:#2d2d2f"></div>
<div class="t " style="left:402.50px;top:1410.36px;font-size:19.60px;font-weight:400;color:#f4f4f6;letter-spacing:0.645px;">Shadows</div>
<div style="position:absolute;left:627.00px;top:1399.05px;width:99.20px;height:39.10px;background:#303032;border-radius:7px"></div>
<div class="t " style="left:643.00px;top:1408.63px;font-size:22.00px;font-weight:400;color:#fff;letter-spacing:1.311px;">18.88</div>
<div class="trk" style="position:absolute;left:372.00px;top:1452.35px;width:353.20px;height:48.60px;background:#131314;border-radius:7px;overflow:hidden"></div>
<svg style="position:absolute;left:0;top:0;overflow:visible" width="1" height="1"><g><rect x="372.83" y="1483.75" width="1.4" height="10.2" fill="#414144"/><rect x="376.60" y="1483.75" width="1.4" height="10.2" fill="#414144"/><rect x="380.17" y="1481.75" width="1.8" height="12.2" fill="#7c7c80"/><rect x="384.14" y="1483.75" width="1.4" height="10.2" fill="#414144"/><rect x="387.92" y="1483.75" width="1.4" height="10.2" fill="#414144"/><rect x="391.69" y="1483.75" width="1.4" height="10.2" fill="#414144"/><rect x="395.46" y="1483.75" width="1.4" height="10.2" fill="#414144"/><rect x="399.03" y="1481.75" width="1.8" height="12.2" fill="#7c7c80"/><rect x="403.00" y="1483.75" width="1.4" height="10.2" fill="#414144"/><rect x="406.78" y="1483.75" width="1.4" height="10.2" fill="#414144"/><rect x="410.55" y="1483.75" width="1.4" height="10.2" fill="#414144"/><rect x="414.32" y="1483.75" width="1.4" height="10.2" fill="#414144"/><rect x="417.89" y="1481.75" width="1.8" height="12.2" fill="#7c7c80"/><rect x="421.86" y="1483.75" width="1.4" height="10.2" fill="#414144"/><rect x="425.64" y="1483.75" width="1.4" height="10.2" fill="#414144"/><rect x="429.41" y="1483.75" width="1.4" height="10.2" fill="#414144"/><rect x="433.18" y="1483.75" width="1.4" height="10.2" fill="#414144"/><rect x="436.75" y="1481.75" width="1.8" height="12.2" fill="#7c7c80"/><rect x="440.72" y="1483.75" width="1.4" height="10.2" fill="#414144"/><rect x="444.50" y="1483.75" width="1.4" height="10.2" fill="#414144"/><rect x="448.27" y="1483.75" width="1.4" height="10.2" fill="#414144"/><rect x="452.04" y="1483.75" width="1.4" height="10.2" fill="#414144"/><rect x="455.61" y="1481.75" width="1.8" height="12.2" fill="#7c7c80"/><rect x="459.58" y="1483.75" width="1.4" height="10.2" fill="#414144"/><rect x="463.36" y="1483.75" width="1.4" height="10.2" fill="#414144"/><rect x="467.13" y="1483.75" width="1.4" height="10.2" fill="#414144"/><rect x="470.90" y="1483.75" width="1.4" height="10.2" fill="#414144"/><rect x="474.47" y="1481.75" width="1.8" height="12.2" fill="#7c7c80"/><rect x="478.44" y="1483.75" width="1.4" height="10.2" fill="#414144"/><rect x="482.22" y="1483.75" width="1.4" height="10.2" fill="#414144"/><rect x="485.99" y="1483.75" width="1.4" height="10.2" fill="#414144"/><rect x="489.76" y="1483.75" width="1.4" height="10.2" fill="#414144"/><rect x="493.33" y="1481.75" width="1.8" height="12.2" fill="#7c7c80"/><rect x="497.30" y="1483.75" width="1.4" height="10.2" fill="#414144"/><rect x="501.08" y="1483.75" width="1.4" height="10.2" fill="#414144"/><rect x="504.85" y="1483.75" width="1.4" height="10.2" fill="#414144"/><rect x="508.62" y="1483.75" width="1.4" height="10.2" fill="#414144"/><rect x="512.19" y="1481.75" width="1.8" height="12.2" fill="#7c7c80"/><rect x="516.16" y="1483.75" width="1.4" height="10.2" fill="#414144"/><rect x="519.94" y="1483.75" width="1.4" height="10.2" fill="#414144"/><rect x="523.71" y="1483.75" width="1.4" height="10.2" fill="#414144"/><rect x="527.48" y="1483.75" width="1.4" height="10.2" fill="#414144"/><rect x="531.05" y="1481.75" width="1.8" height="12.2" fill="#7c7c80"/><rect x="535.02" y="1483.75" width="1.4" height="10.2" fill="#414144"/><rect x="538.80" y="1483.75" width="1.4" height="10.2" fill="#414144"/><rect x="542.57" y="1483.75" width="1.4" height="10.2" fill="#414144"/><rect x="546.34" y="1483.75" width="1.4" height="10.2" fill="#414144"/><rect x="549.91" y="1481.75" width="1.8" height="12.2" fill="#7c7c80"/><rect x="553.88" y="1483.75" width="1.4" height="10.2" fill="#414144"/><rect x="557.66" y="1483.75" width="1.4" height="10.2" fill="#414144"/><rect x="561.43" y="1483.75" width="1.4" height="10.2" fill="#414144"/><rect x="565.20" y="1483.75" width="1.4" height="10.2" fill="#414144"/><rect x="568.77" y="1481.75" width="1.8" height="12.2" fill="#7c7c80"/><rect x="572.74" y="1483.75" width="1.4" height="10.2" fill="#414144"/><rect x="576.52" y="1483.75" width="1.4" height="10.2" fill="#414144"/><rect x="580.29" y="1483.75" width="1.4" height="10.2" fill="#414144"/><rect x="584.06" y="1483.75" width="1.4" height="10.2" fill="#414144"/><rect x="587.63" y="1481.75" width="1.8" height="12.2" fill="#7c7c80"/><rect x="591.60" y="1483.75" width="1.4" height="10.2" fill="#414144"/><rect x="595.38" y="1483.75" width="1.4" height="10.2" fill="#414144"/><rect x="599.15" y="1483.75" width="1.4" height="10.2" fill="#414144"/><rect x="602.92" y="1483.75" width="1.4" height="10.2" fill="#414144"/><rect x="606.49" y="1481.75" width="1.8" height="12.2" fill="#7c7c80"/><rect x="610.46" y="1483.75" width="1.4" height="10.2" fill="#414144"/><rect x="614.24" y="1483.75" width="1.4" height="10.2" fill="#414144"/><rect x="618.01" y="1483.75" width="1.4" height="10.2" fill="#414144"/><rect x="621.78" y="1483.75" width="1.4" height="10.2" fill="#414144"/><rect x="625.35" y="1481.75" width="1.8" height="12.2" fill="#7c7c80"/><rect x="629.32" y="1483.75" width="1.4" height="10.2" fill="#414144"/><rect x="633.10" y="1483.75" width="1.4" height="10.2" fill="#414144"/><rect x="636.87" y="1483.75" width="1.4" height="10.2" fill="#414144"/><rect x="640.64" y="1483.75" width="1.4" height="10.2" fill="#414144"/><rect x="644.21" y="1481.75" width="1.8" height="12.2" fill="#7c7c80"/><rect x="648.18" y="1483.75" width="1.4" height="10.2" fill="#414144"/><rect x="651.96" y="1483.75" width="1.4" height="10.2" fill="#414144"/><rect x="655.73" y="1483.75" width="1.4" height="10.2" fill="#414144"/><rect x="659.50" y="1483.75" width="1.4" height="10.2" fill="#414144"/><rect x="663.07" y="1481.75" width="1.8" height="12.2" fill="#7c7c80"/><rect x="667.04" y="1483.75" width="1.4" height="10.2" fill="#414144"/><rect x="670.82" y="1483.75" width="1.4" height="10.2" fill="#414144"/><rect x="674.59" y="1483.75" width="1.4" height="10.2" fill="#414144"/><rect x="678.36" y="1483.75" width="1.4" height="10.2" fill="#414144"/><rect x="681.93" y="1481.75" width="1.8" height="12.2" fill="#7c7c80"/><rect x="685.90" y="1483.75" width="1.4" height="10.2" fill="#414144"/><rect x="689.68" y="1483.75" width="1.4" height="10.2" fill="#414144"/><rect x="693.45" y="1483.75" width="1.4" height="10.2" fill="#414144"/><rect x="697.22" y="1483.75" width="1.4" height="10.2" fill="#414144"/><rect x="700.79" y="1481.75" width="1.8" height="12.2" fill="#7c7c80"/><rect x="704.76" y="1483.75" width="1.4" height="10.2" fill="#414144"/><rect x="708.54" y="1483.75" width="1.4" height="10.2" fill="#414144"/><rect x="712.31" y="1483.75" width="1.4" height="10.2" fill="#414144"/><rect x="716.08" y="1483.75" width="1.4" height="10.2" fill="#414144"/><rect x="719.65" y="1481.75" width="1.8" height="12.2" fill="#7c7c80"/><circle cx="513.09" cy="1488.95" r="3.1" fill="#fff"/><rect x="512.29" y="1481.75" width="1.6" height="5" fill="#d0d0d0"/><rect x="547.75" y="1479.55" width="1.9" height="22.4" fill="#fff"/></g></svg>
<div class="t sl" style="left:406.94px;top:1457.55px;clip-path:inset(-2px 0.00px -2px 0.00px)">-50</div>
<div class="t sl" style="left:509.53px;top:1457.55px;clip-path:inset(-2px 0.00px -2px 0.00px)">0</div>
<div class="t sl" style="left:600.27px;top:1457.55px;clip-path:inset(-2px 0.00px -2px 0.00px)">50</div>
<div class="t sl" style="left:691.01px;top:1457.55px;clip-path:inset(-2px 0.00px -2px 0.00px)">100</div>
<div style="position:absolute;left:372.00px;top:1382.40px;width:376.40px;height:1.30px;background:#2d2d2f"></div>
<svg style="position:absolute;left:0;top:0" width="2560" height="1829" viewBox="0 0 2560 1829"><path d="M355.4 324.6 L371.2 338.6 M355.4 352.4 L371.2 338.6" stroke="#fff" stroke-width="0" fill="none"/><path d="M371.4 324.2 L356.4 338.4 L371.4 352.6" stroke="#fff" stroke-width="3" stroke-linecap="round" stroke-linejoin="round" fill="none"/><path d="M379.4 446.1 H399 M389.2 436.3 V455.9" stroke="#fff" stroke-width="2.4" stroke-linecap="round" fill="none"/><path d="M385.63 519.19 L398.91 534.28" stroke="#dcdbfb" stroke-width="2.95" stroke-linecap="round" fill="none"/><path d="M388.58 522.63 L398.42 533.70" stroke="#5e5ce6" stroke-width="0.90" stroke-linecap="round" fill="none"/><path d="M394.48 512.46 Q395.42 515.79 398.75 516.73 Q395.42 517.67 394.48 520.99 Q393.55 517.67 390.22 516.73 Q393.55 515.79 394.48 512.46Z" fill="#dcdbfb"/><path d="M380.87 523.12 Q381.52 525.43 383.82 526.08 Q381.52 526.73 380.87 529.03 Q380.22 526.73 377.92 526.08 Q380.22 525.43 380.87 523.12Z" fill="#dcdbfb"/><path d="M384.48 529.36 Q385.02 531.27 386.94 531.82 Q385.02 532.36 384.48 534.28 Q383.94 532.36 382.02 531.82 Q383.94 531.27 384.48 529.36Z" fill="#dcdbfb"/><path d="M642.26 619.66 L656.84 636.22" stroke="#fff" stroke-width="3.24" stroke-linecap="round" fill="none"/><path d="M645.50 623.44 L656.30 635.59" stroke="#5e5ce6" stroke-width="0.99" stroke-linecap="round" fill="none"/><path d="M651.98 612.28 Q653.01 615.93 656.66 616.96 Q653.01 617.99 651.98 621.64 Q650.95 617.99 647.30 616.96 Q650.95 615.93 651.98 612.28Z" fill="#fff"/><path d="M637.04 623.98 Q637.75 626.51 640.28 627.22 Q637.75 627.93 637.04 630.46 Q636.33 627.93 633.80 627.22 Q636.33 626.51 637.04 623.98Z" fill="#fff"/><path d="M641.00 630.82 Q641.59 632.93 643.70 633.52 Q641.59 634.11 641.00 636.22 Q640.41 634.11 638.30 633.52 Q640.41 632.93 641.00 630.82Z" fill="#fff"/><path d="M701.2 622 L708.3 629.2 L715.4 622" stroke="#7d7aff" stroke-width="2.6" stroke-linecap="round" stroke-linejoin="round" fill="none"/><path d="M377.6 683.40 V692.20 M373.2 687.80 H382 M373.2 697.00 H382" stroke="#f2f2f4" stroke-width="1.6" fill="none"/><circle cx="380.6" cy="835.95" r="7.4" fill="none" stroke="#f2f2f4" stroke-width="1.9"/><path d="M380.6 828.5500000000001 A7.4 7.4 0 0 0 380.6 843.35 Z" fill="#f2f2f4"/><circle cx="380.6" cy="981.7" r="3.7" fill="none" stroke="#f2f2f4" stroke-width="1.6"/><path d="M386.70 981.70 L389.10 981.70" stroke="#f2f2f4" stroke-width="1.6" stroke-linecap="round"/><path d="M384.91 986.01 L386.61 987.71" stroke="#f2f2f4" stroke-width="1.6" stroke-linecap="round"/><path d="M380.60 987.80 L380.60 990.20" stroke="#f2f2f4" stroke-width="1.6" stroke-linecap="round"/><path d="M376.29 986.01 L374.59 987.71" stroke="#f2f2f4" stroke-width="1.6" stroke-linecap="round"/><path d="M374.50 981.70 L372.10 981.70" stroke="#f2f2f4" stroke-width="1.6" stroke-linecap="round"/><path d="M376.29 977.39 L374.59 975.69" stroke="#f2f2f4" stroke-width="1.6" stroke-linecap="round"/><path d="M380.60 975.60 L380.60 973.20" stroke="#f2f2f4" stroke-width="1.6" stroke-linecap="round"/><path d="M384.91 977.39 L386.61 975.69" stroke="#f2f2f4" stroke-width="1.6" stroke-linecap="round"/><circle cx="380.6" cy="1127.45" r="8.2" fill="#f2f2f4"/><circle cx="380.6" cy="1127.45" r="4.2" fill="#1c1c1e"/><circle cx="380.6" cy="1127.45" r="2.3" fill="#f2f2f4"/><rect x="372.6" y="1265.2" width="16" height="16" rx="2.6" fill="#f2f2f4"/><circle cx="380.6" cy="1273.2" r="4.3" fill="#1c1c1e"/><circle cx="380.6" cy="1418.95" r="7.6" fill="none" stroke="#f2f2f4" stroke-width="1.7"/><circle cx="380.6" cy="1418.95" r="3.9" fill="none" stroke="#f2f2f4" stroke-width="1.7"/></svg>
<div style="position:absolute;left:776.40px;top:303.20px;width:1460.00px;height:1215.20px;background:#0e0e0f"></div>
<div style="position:absolute;left:776.40px;top:303.20px;width:1460.00px;height:77.60px;background:#1f1f20"></div>
<div style="position:absolute;left:776.40px;top:962.60px;width:1460.00px;height:151.00px;background:#1b1b1c"></div>
<div class="t " style="left:799.40px;top:319.72px;font-size:16.40px;font-weight:400;color:#9d9da2;letter-spacing:-0.316px;">Select</div>
<div class="t " style="left:828.50px;top:344.98px;font-size:19.40px;font-weight:400;color:#f4f4f6;letter-spacing:-0.774px;">Clip</div>
<div class="t " style="left:1084.30px;top:396.50px;font-size:16.30px;font-weight:400;color:#96969b;letter-spacing:0.364px;">00:00:30</div>
<svg style="position:absolute;left:0;top:0" width="2560" height="1829" viewBox="0 0 2560 1829"><defs><linearGradient id="pk" x1="0" y1="1" x2="0" y2="0"><stop offset="0" stop-color="#e9dc4a"/><stop offset="0.55" stop-color="#f0b030"/><stop offset="0.8" stop-color="#ee5a28"/><stop offset="1" stop-color="#e83326"/></linearGradient></defs><rect x="779.75" y="387.3" width="1.5" height="6.7" fill="#5a5a5e"/><rect x="806.87" y="387.3" width="1.5" height="6.7" fill="#5a5a5e"/><rect x="833.99" y="387.3" width="1.5" height="6.7" fill="#5a5a5e"/><rect x="861.11" y="387.3" width="1.5" height="6.7" fill="#5a5a5e"/><rect x="888.23" y="387.3" width="1.5" height="6.7" fill="#5a5a5e"/><rect x="915.35" y="387.3" width="1.5" height="6.7" fill="#5a5a5e"/><rect x="942.47" y="387.3" width="1.5" height="6.7" fill="#5a5a5e"/><rect x="969.59" y="387.3" width="1.5" height="6.7" fill="#5a5a5e"/><rect x="996.71" y="387.3" width="1.5" height="6.7" fill="#5a5a5e"/><rect x="1023.83" y="387.3" width="1.5" height="6.7" fill="#5a5a5e"/><rect x="1050.95" y="387.3" width="1.5" height="6.7" fill="#5a5a5e"/><rect x="1078.07" y="387.3" width="1.5" height="6.7" fill="#5a5a5e"/><rect x="1105.19" y="387.3" width="1.5" height="6.7" fill="#5a5a5e"/><rect x="1132.31" y="387.3" width="1.5" height="6.7" fill="#5a5a5e"/><rect x="1159.43" y="387.3" width="1.5" height="6.7" fill="#5a5a5e"/><rect x="1186.55" y="387.3" width="1.5" height="6.7" fill="#5a5a5e"/><rect x="1213.67" y="387.3" width="1.5" height="6.7" fill="#5a5a5e"/><rect x="1240.79" y="387.3" width="1.5" height="6.7" fill="#5a5a5e"/><rect x="1267.91" y="387.3" width="1.5" height="6.7" fill="#5a5a5e"/><rect x="1295.03" y="387.3" width="1.5" height="6.7" fill="#5a5a5e"/><rect x="1322.15" y="387.3" width="1.5" height="6.7" fill="#5a5a5e"/><rect x="1349.27" y="387.3" width="1.5" height="6.7" fill="#5a5a5e"/><rect x="1376.39" y="387.3" width="1.5" height="6.7" fill="#5a5a5e"/><rect x="1403.51" y="387.3" width="1.5" height="6.7" fill="#5a5a5e"/><rect x="1430.63" y="387.3" width="1.5" height="6.7" fill="#5a5a5e"/><rect x="1457.75" y="387.3" width="1.5" height="6.7" fill="#5a5a5e"/><rect x="1484.87" y="387.3" width="1.5" height="6.7" fill="#5a5a5e"/><rect x="1511.99" y="387.3" width="1.5" height="6.7" fill="#5a5a5e"/><rect x="1539.11" y="387.3" width="1.5" height="6.7" fill="#5a5a5e"/><rect x="1566.23" y="387.3" width="1.5" height="6.7" fill="#5a5a5e"/><rect x="1593.35" y="387.3" width="1.5" height="6.7" fill="#5a5a5e"/><rect x="1620.47" y="387.3" width="1.5" height="6.7" fill="#5a5a5e"/><rect x="1647.59" y="387.3" width="1.5" height="6.7" fill="#5a5a5e"/><rect x="1674.71" y="387.3" width="1.5" height="6.7" fill="#5a5a5e"/><rect x="1701.83" y="387.3" width="1.5" height="6.7" fill="#5a5a5e"/><rect x="1728.95" y="387.3" width="1.5" height="6.7" fill="#5a5a5e"/><rect x="1756.07" y="387.3" width="1.5" height="6.7" fill="#5a5a5e"/><rect x="1783.19" y="387.3" width="1.5" height="6.7" fill="#5a5a5e"/><rect x="1810.31" y="387.3" width="1.5" height="6.7" fill="#5a5a5e"/><rect x="1837.43" y="387.3" width="1.5" height="6.7" fill="#5a5a5e"/><rect x="1864.55" y="387.3" width="1.5" height="6.7" fill="#5a5a5e"/><rect x="1891.67" y="387.3" width="1.5" height="6.7" fill="#5a5a5e"/><rect x="1918.79" y="387.3" width="1.5" height="6.7" fill="#5a5a5e"/><rect x="1945.91" y="387.3" width="1.5" height="6.7" fill="#5a5a5e"/><rect x="1973.03" y="387.3" width="1.5" height="6.7" fill="#5a5a5e"/><rect x="2000.15" y="387.3" width="1.5" height="6.7" fill="#5a5a5e"/><rect x="2027.27" y="387.3" width="1.5" height="6.7" fill="#5a5a5e"/><rect x="2054.39" y="387.3" width="1.5" height="6.7" fill="#5a5a5e"/><rect x="2081.51" y="387.3" width="1.5" height="6.7" fill="#5a5a5e"/><rect x="2108.63" y="387.3" width="1.5" height="6.7" fill="#5a5a5e"/><rect x="2135.75" y="387.3" width="1.5" height="6.7" fill="#5a5a5e"/><rect x="2162.87" y="387.3" width="1.5" height="6.7" fill="#5a5a5e"/><rect x="2189.99" y="387.3" width="1.5" height="6.7" fill="#5a5a5e"/><rect x="2217.11" y="387.3" width="1.5" height="6.7" fill="#5a5a5e"/><rect x="1078.2" y="387.8" width="1.5" height="27" fill="#5a5a5e"/><rect x="801.6" y="347.2" width="16.8" height="14.8" rx="2.8" fill="none" stroke="#f4cf1d" stroke-width="2.8"/><path d="M804.4 351.4 V357.8 M815.6 351.4 V357.8" stroke="#f4cf1d" stroke-width="1.6" fill="none"/><path d="M868.6 352 L874.4 346.6 L880.2 352 M868.6 357.4 L874.4 362.8 L880.2 357.4" stroke="#77777c" stroke-width="2.2" fill="none" stroke-linecap="round" stroke-linejoin="round"/><path d="M877.00 751.90 H927.20 Q932.80 751.90 932.80 757.50 V814.20 Q932.80 819.80 927.20 819.80 H877.00 Q871.40 819.80 871.40 814.20 V757.50 Q871.40 751.90 877.00 751.90Z" fill="#000"/><path d="M877.20 753.30 H927.00 Q931.40 753.30 931.40 757.70 V814.00 Q931.40 818.40 927.00 818.40 H877.20 Q872.80 818.40 872.80 814.00 V757.70 Q872.80 753.30 877.20 753.30Z" fill="#5b3a9c"/><rect x="884.30" y="761.30" width="22.4" height="18.8" rx="2.8" fill="none" stroke="#8f74c8" stroke-width="1.5"/><rect x="883.10" y="767.70" width="2.4" height="6" fill="#5b3a9c"/><rect x="905.50" y="767.70" width="2.4" height="6" fill="#5b3a9c"/><rect x="883.55" y="769.70" width="1.5" height="2" fill="#8f74c8"/><rect x="905.95" y="769.70" width="1.5" height="2" fill="#8f74c8"/><path d="M783.80 892.40 H842.70 Q848.30 892.40 848.30 898.00 V954.50 Q848.30 960.10 842.70 960.10 H783.80 Q778.20 960.10 778.20 954.50 V898.00 Q778.20 892.40 783.80 892.40Z" fill="#000"/><path d="M784.00 893.80 H842.50 Q846.90 893.80 846.90 898.20 V954.30 Q846.90 958.70 842.50 958.70 H784.00 Q779.60 958.70 779.60 954.30 V898.20 Q779.60 893.80 784.00 893.80Z" fill="#5b3a9c"/><rect x="791.10" y="901.80" width="22.4" height="18.8" rx="2.8" fill="none" stroke="#8f74c8" stroke-width="1.5"/><rect x="789.90" y="908.20" width="2.4" height="6" fill="#5b3a9c"/><rect x="812.30" y="908.20" width="2.4" height="6" fill="#5b3a9c"/><rect x="790.35" y="910.20" width="1.5" height="2" fill="#8f74c8"/><rect x="812.75" y="910.20" width="1.5" height="2" fill="#8f74c8"/><clipPath id="c0"><path d="M884.40 824.40 H928.70 Q933.30 824.40 933.30 829.00 V954.10 Q933.30 958.70 928.70 958.70 H884.40 Q879.80 958.70 879.80 954.10 V829.00 Q879.80 824.40 884.40 824.40Z"/></clipPath><path d="M884.20 822.80 H928.90 Q934.90 822.80 934.90 828.80 V954.30 Q934.90 960.30 928.90 960.30 H884.20 Q878.20 960.30 878.20 954.30 V828.80 Q878.20 822.80 884.20 822.80Z" fill="#000"/><g clip-path="url(#c0)"><rect x="879.80" y="824.40" width="53.50" height="134.30" fill="#18458c"/><rect x="879.80" y="824.40" width="53.50" height="67.50" fill="#2257a8"/><clipPath id="c1"><path d="M888.80 827.30 H941.30 V888.90 H888.80 Q884.20 888.90 884.20 884.30 V831.90 Q884.20 827.30 888.80 827.30Z"/></clipPath><g clip-path="url(#c1)"><rect x="884.20" y="827.30" width="49.10" height="61.60" fill="#8f7d6c" opacity="1"/><polygon points="884.20,827.30 933.30,827.30 933.30,839.62 903.84,834.69 884.20,837.16" fill="#c9a982" opacity="1"/><ellipse cx="923.48" cy="839.62" rx="12.28" ry="4.31" fill="#a8855e" opacity="1"/><polygon points="884.20,839.62 933.30,845.78 933.30,870.42 884.20,873.50" fill="#7d6f66" opacity="1"/><ellipse cx="898.93" cy="855.02" rx="14.73" ry="12.32" fill="#93837a" opacity="1"/><polygon points="908.75,870.42 933.30,865.49 933.30,877.81 913.66,877.81" fill="#a0601c" opacity="1"/><ellipse cx="913.66" cy="885.82" rx="17.19" ry="9.86" fill="#17181e" opacity="1"/><rect x="884.20" y="875.35" width="17.19" height="13.55" fill="#b3a596" opacity="1"/></g></g><path d="M884.40 824.40 H928.70 Q933.30 824.40 933.30 829.00 V954.10 Q933.30 958.70 928.70 958.70 H884.40 Q879.80 958.70 879.80 954.10 V829.00 Q879.80 824.40 884.40 824.40Z" fill="none" stroke="#3a70c8" stroke-width="1" opacity="0.75"/><path d="M884.20 958.70 L884.20 953.00 L887.40 930.00 L888.00 921.23 L889.65 909.98 L891.22 910.38 L893.09 921.61 L895.10 920.58 L897.03 918.38 L898.62 906.39 L900.95 918.05 L902.67 906.05 L905.12 911.83 L907.02 905.44 L908.56 911.33 L910.35 929.85 L911.97 928.63 L914.29 933.99 L916.37 929.21 L918.24 933.37 L919.80 941.94 L921.51 936.29 L923.44 942.76 L925.52 943.70 L927.32 942.93 L929.52 949.05 L931.59 948.89 L933.30 958.70Z" fill="#6c99dd"/><path d="M880 954.8 H884.6 L888 893.8 H933.3" fill="none" stroke="#b5cff6" stroke-width="1.4"/><path d="M1029.40 822.80 H1094.90 Q1101.90 822.80 1101.90 829.80 V953.30 Q1101.90 960.30 1094.90 960.30 H1029.40 Q1022.40 960.30 1022.40 953.30 V829.80 Q1022.40 822.80 1029.40 822.80Z" fill="#000"/><path d="M1029.60 824.40 H1094.70 Q1100.30 824.40 1100.30 830.00 V953.10 Q1100.30 958.70 1094.70 958.70 H1029.60 Q1024.00 958.70 1024.00 953.10 V830.00 Q1024.00 824.40 1029.60 824.40Z" fill="#f0cb05"/><path d="M1041.40 824.40 H1083.40 Q1087.40 824.40 1087.40 828.40 V954.70 Q1087.40 958.70 1083.40 958.70 H1041.40 Q1037.40 958.70 1037.40 954.70 V828.40 Q1037.40 824.40 1041.40 824.40Z" fill="#c9a800"/><clipPath id="c2"><path d="M1043.00 824.80 H1081.80 Q1086.40 824.80 1086.40 829.40 V952.40 Q1086.40 957.00 1081.80 957.00 H1043.00 Q1038.40 957.00 1038.40 952.40 V829.40 Q1038.40 824.80 1043.00 824.80Z"/></clipPath><g clip-path="url(#c2)"><rect x="1038.40" y="824.80" width="48.00" height="132.20" fill="#18458c"/><rect x="1038.40" y="824.80" width="48.00" height="67.30" fill="#2257a8"/><rect x="1038.40" y="951.40" width="48.00" height="1.9" fill="#9fc0f3"/><rect x="1038.40" y="953.30" width="48.00" height="3.7" fill="#2d62b6"/><clipPath id="c3"><path d="M1047.40 827.70 H1081.60 Q1086.20 827.70 1086.20 832.30 V884.50 Q1086.20 889.10 1081.60 889.10 H1047.40 Q1042.80 889.10 1042.80 884.50 V832.30 Q1042.80 827.70 1047.40 827.70Z"/></clipPath><g clip-path="url(#c3)"><linearGradient id="g4" x1="0" y1="0" x2="0" y2="1"><stop offset="0" stop-color="#dfe3e8"/><stop offset="1" stop-color="#c9ced6"/></linearGradient><rect x="1042.80" y="827.70" width="43.40" height="34.77" fill="url(#g4)"/><polygon points="1042.80,861.47 1055.82,858.40 1086.20,863.31 1086.20,889.10 1042.80,889.10" fill="#8a7460" opacity="1"/><polygon points="1042.80,862.08 1064.50,865.77 1086.20,864.54 1086.20,870.68 1042.80,868.22" fill="#5f5548" opacity="1"/><ellipse cx="1060.16" cy="882.96" rx="21.70" ry="12.28" fill="#9d8a78" opacity="1"/><ellipse cx="1084.03" cy="882.96" rx="4.34" ry="4.91" fill="#c0601a" opacity="1"/></g></g><path d="M1043.00 824.80 H1081.80 Q1086.40 824.80 1086.40 829.40 V952.40 Q1086.40 957.00 1081.80 957.00 H1043.00 Q1038.40 957.00 1038.40 952.40 V829.40 Q1038.40 824.80 1043.00 824.80Z" fill="none" stroke="#3a70c8" stroke-width="1" opacity="0.75"/><rect x="1030.2" y="869.3" width="2.4" height="44.6" rx="1.2" fill="#2a2500"/><rect x="1092.2" y="869.3" width="2.4" height="44.6" rx="1.2" fill="#2a2500"/><clipPath id="c5"><path d="M2208.60 824.40 H2237.40 Q2242.00 824.40 2242.00 829.00 V954.10 Q2242.00 958.70 2237.40 958.70 H2208.60 Q2204.00 958.70 2204.00 954.10 V829.00 Q2204.00 824.40 2208.60 824.40Z"/></clipPath><path d="M2208.40 822.80 H2237.60 Q2243.60 822.80 2243.60 828.80 V954.30 Q2243.60 960.30 2237.60 960.30 H2208.40 Q2202.40 960.30 2202.40 954.30 V828.80 Q2202.40 822.80 2208.40 822.80Z" fill="#000"/><g clip-path="url(#c5)"><rect x="2204.00" y="824.40" width="38.00" height="134.30" fill="#18458c"/><rect x="2204.00" y="824.40" width="38.00" height="67.50" fill="#2257a8"/><path d="M2204.00 958.70 L2204.00 935.00 L2205.72 925.52 L2207.13 944.26 L2209.69 949.42 L2211.77 950.55 L2214.18 933.78 L2216.41 929.68 L2218.17 936.16 L2220.44 939.83 L2222.46 931.03 L2225.36 942.82 L2227.76 950.41 L2230.22 937.74 L2233.21 931.70 L2234.92 945.04 L2237.33 950.64 L2239.36 949.20 L2240.77 950.42 L2242.00 950.70 L2242.00 958.70Z" fill="#6c99dd"/><rect x="2204.00" y="905.70" width="38.00" height="1.7" fill="#9fc0f3"/><clipPath id="c6"><path d="M2213.00 827.30 H2250.00 V888.90 H2213.00 Q2208.40 888.90 2208.40 884.30 V831.90 Q2208.40 827.30 2213.00 827.30Z"/></clipPath><g clip-path="url(#c6)"><rect x="2208.40" y="827.30" width="33.60" height="61.60" fill="#15110f" opacity="1"/><ellipse cx="2235.28" cy="845.78" rx="6.72" ry="18.48" fill="#3a3634" opacity="1"/><ellipse cx="2218.48" cy="876.58" rx="10.08" ry="11.09" fill="#2c2418" opacity="1"/></g></g><path d="M2208.60 824.40 H2237.40 Q2242.00 824.40 2242.00 829.00 V954.10 Q2242.00 958.70 2237.40 958.70 H2208.60 Q2204.00 958.70 2204.00 954.10 V829.00 Q2204.00 824.40 2208.60 824.40Z" fill="none" stroke="#3a70c8" stroke-width="1" opacity="0.75"/><rect x="779.70" y="962.8" width="5.6" height="4" fill="#a25be0"/><rect x="872.40" y="962.8" width="5.6" height="4" fill="#a25be0"/><rect x="879.60" y="962.8" width="5.6" height="4" fill="#4f8fe8"/><rect x="1023.70" y="962.8" width="5.6" height="4" fill="#4f8fe8"/><rect x="1313.50" y="962.8" width="5.6" height="4" fill="#3f7fdc"/><rect x="1406.90" y="962.8" width="5.6" height="4" fill="#3f7fdc"/><rect x="1510.80" y="962.8" width="5.6" height="4" fill="#3f7fdc"/><rect x="1541.60" y="962.8" width="5.6" height="4" fill="#3f7fdc"/><rect x="1629.90" y="962.8" width="5.6" height="4" fill="#3f7fdc"/><rect x="1720.20" y="962.8" width="5.6" height="4" fill="#3f7fdc"/><rect x="1769.10" y="962.8" width="5.6" height="4" fill="#3f7fdc"/><rect x="1975.90" y="962.8" width="5.6" height="4" fill="#3f7fdc"/><rect x="2053.70" y="962.8" width="5.6" height="4" fill="#3f7fdc"/><rect x="2201.90" y="962.8" width="5.6" height="4" fill="#3f7fdc"/><rect x="797.90" y="1109" width="5.6" height="3.8" fill="#4f8fe8"/><rect x="839.20" y="1109" width="5.6" height="3.8" fill="#4f8fe8"/><rect x="847.70" y="1109" width="5.6" height="3.8" fill="#4f8fe8"/><rect x="878.20" y="1109" width="5.6" height="3.8" fill="#4f8fe8"/><rect x="1115.50" y="1109" width="5.6" height="3.8" fill="#c8d84a"/><rect x="2062.80" y="1109" width="5.6" height="3.8" fill="#4f8fe8"/><rect x="2230.50" y="1109" width="5.6" height="3.8" fill="#4f8fe8"/><rect x="1117.8" y="1112.6" width="1" height="146" fill="#3d4517"/><clipPath id="c7"><path d="M784.20 971.00 H814.60 Q819.20 971.00 819.20 975.60 V1101.60 Q819.20 1106.20 814.60 1106.20 H784.20 Q779.60 1106.20 779.60 1101.60 V975.60 Q779.60 971.00 784.20 971.00Z"/></clipPath><path d="M784.00 969.40 H814.80 Q820.80 969.40 820.80 975.40 V1101.80 Q820.80 1107.80 814.80 1107.80 H784.00 Q778.00 1107.80 778.00 1101.80 V975.40 Q778.00 969.40 784.00 969.40Z" fill="#000"/><g clip-path="url(#c7)"><rect x="779.60" y="971.00" width="39.60" height="135.20" fill="#18458c"/><rect x="779.60" y="971.00" width="39.60" height="67.50" fill="#2257a8"/><rect x="779.60" y="1100.60" width="39.60" height="1.9" fill="#9fc0f3"/><rect x="779.60" y="1102.50" width="39.60" height="3.7" fill="#2d62b6"/><clipPath id="c8"><path d="M788.60 973.90 H827.20 V1035.50 H788.60 Q784.00 1035.50 784.00 1030.90 V978.50 Q784.00 973.90 788.60 973.90Z"/></clipPath><g clip-path="url(#c8)"><rect x="784.00" y="973.90" width="35.20" height="61.60" fill="#9a9484" opacity="1"/><rect x="784.00" y="1017.02" width="35.20" height="18.48" fill="#7d705c" opacity="1"/><path d="M801.60 1014.56 L816.74 1010.57" stroke="#7e8a3f" stroke-width="1.6"/><path d="M801.60 1014.56 L817.37 1006.68" stroke="#a3a85a" stroke-width="1.6"/><path d="M801.60 1014.56 L815.37 1004.16" stroke="#a3a85a" stroke-width="1.6"/><path d="M801.60 1014.56 L815.55 999.98" stroke="#3f4d22" stroke-width="1.6"/><path d="M801.60 1014.56 L815.81 994.83" stroke="#a3a85a" stroke-width="1.6"/><path d="M801.60 1014.56 L814.04 991.94" stroke="#3f4d22" stroke-width="1.6"/><path d="M801.60 1014.56 L811.72 990.27" stroke="#3f4d22" stroke-width="1.6"/><path d="M801.60 1014.56 L809.62 988.38" stroke="#a3a85a" stroke-width="1.6"/><path d="M801.60 1014.56 L807.82 985.01" stroke="#7e8a3f" stroke-width="1.6"/><path d="M801.60 1014.56 L804.64 989.91" stroke="#7e8a3f" stroke-width="1.6"/><path d="M801.60 1014.56 L802.66 988.41" stroke="#7e8a3f" stroke-width="1.6"/><path d="M801.60 1014.56 L800.60 989.95" stroke="#7e8a3f" stroke-width="1.6"/><path d="M801.60 1014.56 L798.41 988.67" stroke="#5c6b2e" stroke-width="1.6"/><path d="M801.60 1014.56 L796.51 990.39" stroke="#3f4d22" stroke-width="1.6"/><path d="M801.60 1014.56 L793.72 988.84" stroke="#3f4d22" stroke-width="1.6"/><path d="M801.60 1014.56 L790.89 988.85" stroke="#5c6b2e" stroke-width="1.6"/><path d="M801.60 1014.56 L790.32 994.05" stroke="#a3a85a" stroke-width="1.6"/><path d="M801.60 1014.56 L788.96 997.01" stroke="#a3a85a" stroke-width="1.6"/><path d="M801.60 1014.56 L788.71 1001.09" stroke="#a3a85a" stroke-width="1.6"/><path d="M801.60 1014.56 L787.90 1004.21" stroke="#5c6b2e" stroke-width="1.6"/><path d="M801.60 1014.56 L783.46 1005.50" stroke="#a3a85a" stroke-width="1.6"/><path d="M801.60 1014.56 L786.32 1010.53" stroke="#3f4d22" stroke-width="1.6"/><ellipse cx="801.60" cy="1018.25" rx="4.22" ry="6.16" fill="#2b2a20" opacity="1"/></g></g><path d="M784.20 971.00 H814.60 Q819.20 971.00 819.20 975.60 V1101.60 Q819.20 1106.20 814.60 1106.20 H784.20 Q779.60 1106.20 779.60 1101.60 V975.60 Q779.60 971.00 784.20 971.00Z" fill="none" stroke="#3a70c8" stroke-width="1" opacity="0.75"/><clipPath id="c9"><path d="M827.90 971.00 H842.30 Q846.90 971.00 846.90 975.60 V1101.60 Q846.90 1106.20 842.30 1106.20 H827.90 Q823.30 1106.20 823.30 1101.60 V975.60 Q823.30 971.00 827.90 971.00Z"/></clipPath><path d="M827.70 969.40 H842.50 Q848.50 969.40 848.50 975.40 V1101.80 Q848.50 1107.80 842.50 1107.80 H827.70 Q821.70 1107.80 821.70 1101.80 V975.40 Q821.70 969.40 827.70 969.40Z" fill="#000"/><g clip-path="url(#c9)"><rect x="823.30" y="971.00" width="23.60" height="135.20" fill="#18458c"/><rect x="823.30" y="971.00" width="23.60" height="67.50" fill="#2257a8"/><rect x="823.30" y="1100.60" width="23.60" height="1.9" fill="#9fc0f3"/><rect x="823.30" y="1102.50" width="23.60" height="3.7" fill="#2d62b6"/><clipPath id="c10"><path d="M832.30 973.90 H854.90 V1035.50 H832.30 Q827.70 1035.50 827.70 1030.90 V978.50 Q827.70 973.90 832.30 973.90Z"/></clipPath><g clip-path="url(#c10)"><linearGradient id="g11" x1="0" y1="0" x2="0" y2="1"><stop offset="0" stop-color="#5b93da"/><stop offset="1" stop-color="#b9d2ee"/></linearGradient><rect x="827.70" y="973.90" width="19.20" height="39.19" fill="url(#g11)"/><rect x="827.70" y="1010.86" width="19.20" height="24.64" fill="#a79274" opacity="1"/><ellipse cx="841.14" cy="1004.70" rx="3.84" ry="12.32" fill="#6d6a52" opacity="1"/><rect x="827.70" y="1012.09" width="19.20" height="6.16" fill="#7b7d6a" opacity="1"/></g></g><path d="M827.90 971.00 H842.30 Q846.90 971.00 846.90 975.60 V1101.60 Q846.90 1106.20 842.30 1106.20 H827.90 Q823.30 1106.20 823.30 1101.60 V975.60 Q823.30 971.00 827.90 971.00Z" fill="none" stroke="#3a70c8" stroke-width="1" opacity="0.75"/><clipPath id="c12"><path d="M856.30 971.00 H869.90 Q874.50 971.00 874.50 975.60 V1101.60 Q874.50 1106.20 869.90 1106.20 H856.30 Q851.70 1106.20 851.70 1101.60 V975.60 Q851.70 971.00 856.30 971.00Z"/></clipPath><path d="M856.10 969.40 H870.10 Q876.10 969.40 876.10 975.40 V1101.80 Q876.10 1107.80 870.10 1107.80 H856.10 Q850.10 1107.80 850.10 1101.80 V975.40 Q850.10 969.40 856.10 969.40Z" fill="#000"/><g clip-path="url(#c12)"><rect x="851.70" y="971.00" width="22.80" height="135.20" fill="#18458c"/><rect x="851.70" y="971.00" width="22.80" height="67.50" fill="#2257a8"/><clipPath id="c13"><path d="M860.70 973.90 H882.50 V1035.50 H860.70 Q856.10 1035.50 856.10 1030.90 V978.50 Q856.10 973.90 860.70 973.90Z"/></clipPath><g clip-path="url(#c13)"><linearGradient id="g14" x1="0" y1="0" x2="0" y2="1"><stop offset="0" stop-color="#3d86d8"/><stop offset="1" stop-color="#9cc4ee"/></linearGradient><rect x="856.10" y="973.90" width="18.40" height="37.96" fill="url(#g14)"/><rect x="856.10" y="1007.78" width="18.40" height="27.72" fill="#b39c7a" opacity="1"/><ellipse cx="862.54" cy="1010.86" rx="7.36" ry="8.62" fill="#a3947c" opacity="1"/><polygon points="864.38,980.06 867.51,992.38 866.22,994.84 872.66,1032.42 870.82,1032.42 865.30,998.54 861.62,993.61" fill="#6f6a4a" opacity="1"/><ellipse cx="861.62" cy="986.22" rx="3.68" ry="6.16" fill="#8a8b45" opacity="1"/></g></g><path d="M856.30 971.00 H869.90 Q874.50 971.00 874.50 975.60 V1101.60 Q874.50 1106.20 869.90 1106.20 H856.30 Q851.70 1106.20 851.70 1101.60 V975.60 Q851.70 971.00 856.30 971.00Z" fill="none" stroke="#3a70c8" stroke-width="1" opacity="0.75"/><clipPath id="c15"><path d="M856.30 971.00 H869.90 Q874.50 971.00 874.50 975.60 V1101.60 Q874.50 1106.20 869.90 1106.20 H856.30 Q851.70 1106.20 851.70 1101.60 V975.60 Q851.70 971.00 856.30 971.00Z"/></clipPath><g clip-path="url(#c15)"><path d="M851.70 1106.20 L851.70 1091.35 L853.08 1092.14 L855.25 1081.81 L857.55 1099.91 L859.13 1096.01 L861.47 1081.61 L863.76 1094.14 L865.16 1093.85 L868.12 1094.01 L869.88 1099.30 L872.43 1087.84 L874.50 1089.10 L874.50 1100.20 L874.50 1106.20Z" fill="#6c99dd"/><rect x="851.7" y="1064" width="22.799999999999955" height="1.6" fill="#9fc0f3"/></g><path d="M883.70 969.40 H910.40 Q916.40 969.40 916.40 975.40 V1101.80 Q916.40 1107.80 910.40 1107.80 H883.70 Q877.70 1107.80 877.70 1101.80 V975.40 Q877.70 969.40 883.70 969.40Z" fill="#000"/><linearGradient id="g16" x1="0" y1="0" x2="1" y2="0"><stop offset="0" stop-color="#66666b"/><stop offset="0.5" stop-color="#717176"/><stop offset="1" stop-color="#67676c"/></linearGradient><path d="M883.90 971.00 H910.20 Q914.80 971.00 914.80 975.60 V1101.60 Q914.80 1106.20 910.20 1106.20 H883.90 Q879.30 1106.20 879.30 1101.60 V975.60 Q879.30 971.00 883.90 971.00Z" fill="url(#g16)"/><clipPath id="c17"><rect x="879.3" y="971.0" width="35.0" height="40"/></clipPath><rect clip-path="url(#c17)" x="890.70" y="979.60" width="23.4" height="17.4" rx="2.4" fill="none" stroke="#a9a9ad" stroke-width="1.5" stroke-dasharray="4.2 2.2"/><clipPath id="c18"><path d="M924.00 971.00 H926.80 Q931.40 971.00 931.40 975.60 V1101.60 Q931.40 1106.20 926.80 1106.20 H924.00 Q919.40 1106.20 919.40 1101.60 V975.60 Q919.40 971.00 924.00 971.00Z"/></clipPath><path d="M923.80 969.40 H927.00 Q933.00 969.40 933.00 975.40 V1101.80 Q933.00 1107.80 927.00 1107.80 H923.80 Q917.80 1107.80 917.80 1101.80 V975.40 Q917.80 969.40 923.80 969.40Z" fill="#000"/><g clip-path="url(#c18)"><rect x="919.40" y="971.00" width="12.00" height="135.20" fill="#18458c"/><rect x="919.40" y="971.00" width="12.00" height="67.50" fill="#2257a8"/><path d="M919.40 1106.20 L919.40 1085.61 L921.28 1056.76 L923.79 1067.97 L925.24 1055.17 L927.99 1056.35 L930.16 1055.65 L931.40 1055.10 L931.40 1106.20Z" fill="#6c99dd"/><rect x="925.34" y="1040.76" width="4" height="12.34" fill="url(#pk)"/><rect x="919.40" y="1052.30" width="12.00" height="1.7" fill="#9fc0f3"/><clipPath id="c19"><path d="M928.40 973.90 H939.40 V1035.50 H928.40 Q923.80 1035.50 923.80 1030.90 V978.50 Q923.80 973.90 928.40 973.90Z"/></clipPath><g clip-path="url(#c19)"><linearGradient id="g20" x1="0" y1="0" x2="0" y2="1"><stop offset="0" stop-color="#3b7fd2"/><stop offset="1" stop-color="#8cb5e6"/></linearGradient><rect x="923.80" y="973.90" width="7.60" height="25.64" fill="url(#g20)"/><rect x="923.80" y="996.08" width="7.60" height="39.42" fill="#7f7767" opacity="1"/><ellipse cx="928.36" cy="1020.10" rx="3.80" ry="15.40" fill="#9c948a" opacity="1"/></g></g><path d="M924.00 971.00 H926.80 Q931.40 971.00 931.40 975.60 V1101.60 Q931.40 1106.20 926.80 1106.20 H924.00 Q919.40 1106.20 919.40 1101.60 V975.60 Q919.40 971.00 924.00 971.00Z" fill="none" stroke="#3a70c8" stroke-width="1" opacity="0.75"/><clipPath id="c21"><path d="M940.80 971.00 H968.40 Q973.00 971.00 973.00 975.60 V1101.60 Q973.00 1106.20 968.40 1106.20 H940.80 Q936.20 1106.20 936.20 1101.60 V975.60 Q936.20 971.00 940.80 971.00Z"/></clipPath><path d="M940.60 969.40 H968.60 Q974.60 969.40 974.60 975.40 V1101.80 Q974.60 1107.80 968.60 1107.80 H940.60 Q934.60 1107.80 934.60 1101.80 V975.40 Q934.60 969.40 940.60 969.40Z" fill="#000"/><g clip-path="url(#c21)"><rect x="936.20" y="971.00" width="36.80" height="135.20" fill="#18458c"/><rect x="936.20" y="971.00" width="36.80" height="67.50" fill="#2257a8"/><path d="M936.20 1106.20 L936.20 1056.56 L938.14 1053.90 L940.23 1057.06 L942.79 1056.02 L945.06 1076.40 L947.52 1087.22 L948.95 1061.56 L950.79 1088.01 L953.06 1082.68 L954.92 1056.44 L956.41 1071.18 L958.03 1054.84 L960.34 1085.20 L962.80 1072.81 L964.23 1088.59 L965.58 1054.96 L967.93 1055.48 L969.99 1053.72 L972.16 1075.87 L973.00 1055.10 L973.00 1106.20Z" fill="#6c99dd"/><rect x="941.26" y="1040.86" width="4" height="12.24" fill="url(#pk)"/><rect x="942.35" y="1038.25" width="4" height="14.85" fill="url(#pk)"/><rect x="936.20" y="1052.30" width="36.80" height="1.7" fill="#9fc0f3"/><clipPath id="c22"><path d="M945.20 973.90 H981.00 V1035.50 H945.20 Q940.60 1035.50 940.60 1030.90 V978.50 Q940.60 973.90 945.20 973.90Z"/></clipPath><g clip-path="url(#c22)"><linearGradient id="g23" x1="0" y1="0" x2="0" y2="1"><stop offset="0" stop-color="#4a8ad6"/><stop offset="1" stop-color="#d4e4f4"/></linearGradient><rect x="940.60" y="973.90" width="32.40" height="31.80" fill="url(#g23)"/><ellipse cx="948.70" cy="992.38" rx="9.72" ry="12.32" fill="#e9f0f8" opacity="1"/><rect x="940.60" y="1004.70" width="32.40" height="30.80" fill="#8a8577" opacity="1"/><ellipse cx="950.32" cy="1023.18" rx="11.34" ry="18.48" fill="#b09c80" opacity="1"/><ellipse cx="963.93" cy="1007.78" rx="8.42" ry="13.55" fill="#1d1b1c" opacity="1"/><ellipse cx="961.98" cy="1026.88" rx="11.66" ry="14.78" fill="#8395a8" opacity="1"/><ellipse cx="960.04" cy="1012.71" rx="4.54" ry="8.62" fill="#a57a60" opacity="1"/></g></g><path d="M940.80 971.00 H968.40 Q973.00 971.00 973.00 975.60 V1101.60 Q973.00 1106.20 968.40 1106.20 H940.80 Q936.20 1106.20 936.20 1101.60 V975.60 Q936.20 971.00 940.80 971.00Z" fill="none" stroke="#3a70c8" stroke-width="1" opacity="0.75"/><clipPath id="c24"><path d="M982.40 971.00 H1014.40 Q1019.00 971.00 1019.00 975.60 V1101.60 Q1019.00 1106.20 1014.40 1106.20 H982.40 Q977.80 1106.20 977.80 1101.60 V975.60 Q977.80 971.00 982.40 971.00Z"/></clipPath><path d="M982.20 969.40 H1014.60 Q1020.60 969.40 1020.60 975.40 V1101.80 Q1020.60 1107.80 1014.60 1107.80 H982.20 Q976.20 1107.80 976.20 1101.80 V975.40 Q976.20 969.40 982.20 969.40Z" fill="#000"/><g clip-path="url(#c24)"><rect x="977.80" y="971.00" width="41.20" height="135.20" fill="#18458c"/><rect x="977.80" y="971.00" width="41.20" height="67.50" fill="#2257a8"/><path d="M977.80 1106.20 L977.80 1080.38 L979.14 1062.54 L981.67 1064.02 L984.30 1072.63 L987.04 1056.36 L989.16 1056.61 L990.67 1062.85 L993.37 1055.53 L995.91 1055.56 L998.20 1055.17 L1000.59 1055.03 L1003.14 1053.33 L1004.74 1055.30 L1006.77 1081.67 L1008.17 1087.14 L1010.44 1057.12 L1012.55 1055.13 L1014.25 1056.60 L1017.03 1056.67 L1018.66 1060.05 L1019.00 1055.10 L1019.00 1106.20Z" fill="#6c99dd"/><rect x="990.61" y="1041.72" width="4" height="11.38" fill="url(#pk)"/><path d="M994.45 1053.10 L996.05 1046.76 L997.85 1053.10Z" fill="#dfd36a"/><rect x="977.80" y="1052.30" width="41.20" height="1.7" fill="#9fc0f3"/><clipPath id="c25"><path d="M986.80 973.90 H1027.00 V1035.50 H986.80 Q982.20 1035.50 982.20 1030.90 V978.50 Q982.20 973.90 986.80 973.90Z"/></clipPath><g clip-path="url(#c25)"><linearGradient id="g26" x1="0" y1="0" x2="0" y2="1"><stop offset="0" stop-color="#3f80d2"/><stop offset="1" stop-color="#8fb9e8"/></linearGradient><rect x="982.20" y="973.90" width="36.80" height="28.72" fill="url(#g26)"/><polygon points="982.20,999.77 993.24,992.38 1004.28,997.31 1019.00,994.23 1019.00,1007.78 982.20,1007.78" fill="#6e7f9e" opacity="1"/><rect x="982.20" y="1004.70" width="36.80" height="30.80" fill="#8d8067" opacity="1"/><ellipse cx="995.08" cy="1012.09" rx="11.04" ry="7.39" fill="#c0a676" opacity="1"/><ellipse cx="998.76" cy="1026.88" rx="15.46" ry="9.86" fill="#7f7e86" opacity="1"/><ellipse cx="1013.48" cy="1023.18" rx="7.36" ry="8.62" fill="#5d5a58" opacity="1"/></g></g><path d="M982.40 971.00 H1014.40 Q1019.00 971.00 1019.00 975.60 V1101.60 Q1019.00 1106.20 1014.40 1106.20 H982.40 Q977.80 1106.20 977.80 1101.60 V975.60 Q977.80 971.00 982.40 971.00Z" fill="none" stroke="#3a70c8" stroke-width="1" opacity="0.75"/><path d="M1028.30 969.40 H1054.60 Q1060.60 969.40 1060.60 975.40 V1101.80 Q1060.60 1107.80 1054.60 1107.80 H1028.30 Q1022.30 1107.80 1022.30 1101.80 V975.40 Q1022.30 969.40 1028.30 969.40Z" fill="#000"/><linearGradient id="g27" x1="0" y1="0" x2="1" y2="0"><stop offset="0" stop-color="#66666b"/><stop offset="0.5" stop-color="#717176"/><stop offset="1" stop-color="#67676c"/></linearGradient><path d="M1028.50 971.00 H1054.40 Q1059.00 971.00 1059.00 975.60 V1101.60 Q1059.00 1106.20 1054.40 1106.20 H1028.50 Q1023.90 1106.20 1023.90 1101.60 V975.60 Q1023.90 971.00 1028.50 971.00Z" fill="url(#g27)"/><clipPath id="c28"><rect x="1023.9" y="971.0" width="34.60000000000002" height="40"/></clipPath><rect clip-path="url(#c28)" x="1035.30" y="979.60" width="23.4" height="17.4" rx="2.4" fill="none" stroke="#a9a9ad" stroke-width="1.5" stroke-dasharray="4.2 2.2"/><clipPath id="c29"><path d="M1068.90 971.00 H1254.20 Q1258.80 971.00 1258.80 975.60 V1101.60 Q1258.80 1106.20 1254.20 1106.20 H1068.90 Q1064.30 1106.20 1064.30 1101.60 V975.60 Q1064.30 971.00 1068.90 971.00Z"/></clipPath><path d="M1068.70 969.40 H1254.40 Q1260.40 969.40 1260.40 975.40 V1101.80 Q1260.40 1107.80 1254.40 1107.80 H1068.70 Q1062.70 1107.80 1062.70 1101.80 V975.40 Q1062.70 969.40 1068.70 969.40Z" fill="#000"/><g clip-path="url(#c29)"><rect x="1064.30" y="971.00" width="194.50" height="135.20" fill="#18458c"/><rect x="1064.30" y="971.00" width="194.50" height="67.50" fill="#2257a8"/><clipPath id="c30"><path d="M1073.30 973.90 H1190.70 Q1195.30 973.90 1195.30 978.50 V1030.90 Q1195.30 1035.50 1190.70 1035.50 H1073.30 Q1068.70 1035.50 1068.70 1030.90 V978.50 Q1068.70 973.90 1073.30 973.90Z"/></clipPath><g clip-path="url(#c30)"><rect x="1068.70" y="973.90" width="126.60" height="61.60" fill="#b9a179" opacity="1"/><rect x="1068.70" y="973.90" width="126.60" height="13.55" fill="#c2ab84" opacity="1"/><ellipse cx="1083.89" cy="986.22" rx="17.72" ry="6.16" fill="#8f8460" opacity="1"/><ellipse cx="1169.98" cy="981.29" rx="6.33" ry="7.39" fill="#6f6a4c" opacity="1"/><ellipse cx="1163.65" cy="1021.95" rx="15.19" ry="10.47" fill="#4f463a" opacity="1"/><polygon points="1095.29,973.90 1154.79,973.90 1152.26,987.45 1139.60,992.38 1125.67,999.77 1106.68,1004.70 1099.08,992.38" fill="#5a563c" opacity="1"/><ellipse cx="1149.72" cy="986.22" rx="7.60" ry="8.62" fill="#777457" opacity="1"/><polygon points="1128.20,992.38 1144.66,991.15 1152.26,1010.86 1154.79,1035.50 1144.66,1035.50 1134.53,1010.86" fill="#b07d2c" opacity="1"/><polygon points="1106.68,1004.70 1119.34,1002.24 1124.40,1021.95 1147.19,1018.25 1149.72,1035.50 1106.68,1035.50 1104.15,1023.18" fill="#27396a" opacity="1"/><ellipse cx="1132.00" cy="1004.70" rx="6.33" ry="6.16" fill="#e2a9a0" opacity="1"/><ellipse cx="1114.28" cy="1001.00" rx="5.06" ry="4.31" fill="#e7c3a6" opacity="1"/><ellipse cx="1143.39" cy="990.53" rx="4.43" ry="4.31" fill="#dfe6ee" opacity="1"/></g></g><path d="M1068.90 971.00 H1254.20 Q1258.80 971.00 1258.80 975.60 V1101.60 Q1258.80 1106.20 1254.20 1106.20 H1068.90 Q1064.30 1106.20 1064.30 1101.60 V975.60 Q1064.30 971.00 1068.90 971.00Z" fill="none" stroke="#3a70c8" stroke-width="1" opacity="0.75"/><clipPath id="c31"><path d="M1068.90 971.00 H1254.20 Q1258.80 971.00 1258.80 975.60 V1101.60 Q1258.80 1106.20 1254.20 1106.20 H1068.90 Q1064.30 1106.20 1064.30 1101.60 V975.60 Q1064.30 971.00 1068.90 971.00Z"/></clipPath><path clip-path="url(#c31)" d="M1064.3 1106.2 L1064.30 1073.61 L1065.87 1064.61 L1068.59 1063.82 L1070.50 1068.90 L1072.09 1065.93 L1074.54 1074.64 L1077.18 1079.40 L1079.51 1084.49 L1081.90 1077.68 L1083.86 1088.75 L1085.76 1093.60 L1087.68 1087.04 L1089.72 1076.08 L1091.66 1072.53 L1093.47 1059.38 L1095.03 1055.16 L1096.75 1051.66 L1098.27 1058.81 L1100.93 1060.00 L1103.39 1053.57 L1105.98 1061.53 L1108.71 1071.57 L1110.86 1072.89 L1112.95 1076.75 L1114.74 1068.77 L1116.40 1065.84 L1118.17 1077.54 L1119.70 1072.31 L1121.95 1071.93 L1123.72 1074.17 L1125.14 1062.20 L1127.12 1066.88 L1129.39 1085.37 L1131.78 1076.36 L1134.54 1089.69 L1136.19 1078.84 L1138.47 1081.50 L1140.16 1078.31 L1142.50 1073.23 L1145.03 1053.59 L1146.48 1064.80 L1148.59 1046.35 L1150.71 1057.16 L1152.73 1053.02 L1155.04 1058.09 L1157.21 1060.26 L1159.97 1075.79 L1161.67 1079.63 L1163.35 1070.73 L1165.77 1081.67 L1168.55 1065.79 L1171.12 1078.07 L1173.40 1063.68 L1175.40 1077.31 L1177.73 1075.22 L1179.84 1069.86 L1182.08 1078.11 L1183.54 1087.82 L1185.32 1091.53 L1187.23 1085.39 L1190.01 1079.99 L1191.46 1067.05 L1193.16 1072.24 L1195.03 1067.66 L1196.82 1053.92 L1198.57 1048.94 L1200.10 1047.26 L1201.70 1051.53 L1203.65 1059.09 L1205.93 1068.34 L1208.67 1064.56 L1210.29 1068.16 L1212.79 1077.06 L1215.26 1076.14 L1217.35 1081.51 L1219.62 1080.80 L1222.17 1068.73 L1224.29 1071.70 L1226.67 1070.98 L1229.34 1070.08 L1231.54 1072.48 L1232.96 1076.40 L1235.48 1077.92 L1238.22 1077.41 L1239.74 1084.04 L1242.03 1063.81 L1243.96 1065.66 L1245.43 1067.86 L1247.57 1059.01 L1249.34 1053.16 L1250.84 1045.29 L1253.50 1061.35 L1255.63 1056.61 L1257.70 1062.17 L1258.8 1106.2Z" fill="#6c99dd"/><path d="M1064.3 1048 H1152 L1158.6 1043.4 H1258.8" fill="none" stroke="#9fc0f3" stroke-width="1.6"/><rect x="1203" y="981.8" width="15.4" height="13.6" rx="3" fill="none" stroke="#4f86dc" stroke-width="1.5"/><path d="M1219.6 986 L1226.4 982.4 V994.8 L1219.6 991.2" fill="none" stroke="#4f86dc" stroke-width="1.5" stroke-linejoin="round"/><clipPath id="c32"><path d="M1268.30 971.00 H1304.40 Q1309.00 971.00 1309.00 975.60 V1101.60 Q1309.00 1106.20 1304.40 1106.20 H1268.30 Q1263.70 1106.20 1263.70 1101.60 V975.60 Q1263.70 971.00 1268.30 971.00Z"/></clipPath><path d="M1268.10 969.40 H1304.60 Q1310.60 969.40 1310.60 975.40 V1101.80 Q1310.60 1107.80 1304.60 1107.80 H1268.10 Q1262.10 1107.80 1262.10 1101.80 V975.40 Q1262.10 969.40 1268.10 969.40Z" fill="#000"/><g clip-path="url(#c32)"><rect x="1263.70" y="971.00" width="45.30" height="135.20" fill="#18458c"/><rect x="1263.70" y="971.00" width="45.30" height="67.50" fill="#2257a8"/><rect x="1263.70" y="1100.60" width="45.30" height="1.9" fill="#9fc0f3"/><rect x="1263.70" y="1102.50" width="45.30" height="3.7" fill="#2d62b6"/><clipPath id="c33"><path d="M1272.70 973.90 H1317.00 V1035.50 H1272.70 Q1268.10 1035.50 1268.10 1030.90 V978.50 Q1268.10 973.90 1272.70 973.90Z"/></clipPath><g clip-path="url(#c33)"><linearGradient id="g34" x1="0" y1="0" x2="0" y2="1"><stop offset="0" stop-color="#2f7bd4"/><stop offset="1" stop-color="#8fbdec"/></linearGradient><rect x="1268.10" y="973.90" width="40.90" height="31.80" fill="url(#g34)"/><rect x="1268.10" y="1003.47" width="40.90" height="32.03" fill="#c5a67c" opacity="1"/><rect x="1268.10" y="1003.47" width="40.90" height="7.39" fill="#8f8c68" opacity="1"/><path d="M1284.46 1010.86 V981.29" stroke="#4b4630" stroke-width="1.6"/><ellipse cx="1284.46" cy="981.29" rx="6.54" ry="4.93" fill="#5f6a3a" opacity="1"/><ellipse cx="1290.60" cy="986.22" rx="4.09" ry="3.70" fill="#5f6a3a" opacity="1"/><ellipse cx="1280.37" cy="1004.70" rx="12.27" ry="4.93" fill="#6f6c4a" opacity="1"/></g></g><path d="M1268.30 971.00 H1304.40 Q1309.00 971.00 1309.00 975.60 V1101.60 Q1309.00 1106.20 1304.40 1106.20 H1268.30 Q1263.70 1106.20 1263.70 1101.60 V975.60 Q1263.70 971.00 1268.30 971.00Z" fill="none" stroke="#3a70c8" stroke-width="1" opacity="0.75"/><clipPath id="c35"><path d="M1318.20 971.00 H1374.00 Q1378.60 971.00 1378.60 975.60 V1101.60 Q1378.60 1106.20 1374.00 1106.20 H1318.20 Q1313.60 1106.20 1313.60 1101.60 V975.60 Q1313.60 971.00 1318.20 971.00Z"/></clipPath><path d="M1318.00 969.40 H1374.20 Q1380.20 969.40 1380.20 975.40 V1101.80 Q1380.20 1107.80 1374.20 1107.80 H1318.00 Q1312.00 1107.80 1312.00 1101.80 V975.40 Q1312.00 969.40 1318.00 969.40Z" fill="#000"/><g clip-path="url(#c35)"><rect x="1313.60" y="971.00" width="65.00" height="135.20" fill="#18458c"/><rect x="1313.60" y="971.00" width="65.00" height="67.50" fill="#2257a8"/><path d="M1313.60 1106.20 L1313.60 1073.50 L1315.27 1054.94 L1317.92 1082.76 L1319.68 1067.52 L1321.30 1054.43 L1323.64 1055.58 L1325.15 1062.05 L1328.01 1056.29 L1330.09 1054.24 L1332.14 1057.07 L1334.32 1055.25 L1336.38 1055.22 L1338.49 1057.08 L1340.40 1056.82 L1341.82 1073.02 L1343.54 1066.29 L1345.85 1055.38 L1347.74 1080.52 L1349.67 1085.47 L1352.06 1071.97 L1354.02 1055.43 L1355.85 1058.23 L1357.79 1053.88 L1359.11 1054.11 L1360.51 1080.13 L1361.94 1056.12 L1364.60 1055.15 L1366.96 1053.70 L1369.82 1057.79 L1372.35 1054.81 L1373.70 1054.70 L1376.40 1053.91 L1377.83 1054.74 L1378.60 1055.10 L1378.60 1106.20Z" fill="#6c99dd"/><rect x="1323.64" y="1039.54" width="4" height="13.56" fill="url(#pk)"/><rect x="1343.76" y="1039.07" width="4" height="14.03" fill="url(#pk)"/><path d="M1347.51 1053.10 L1349.11 1047.22 L1350.91 1053.10Z" fill="#dfd36a"/><path d="M1339.66 1053.10 L1341.26 1046.00 L1343.06 1053.10Z" fill="#dfd36a"/><rect x="1313.60" y="1052.30" width="65.00" height="1.7" fill="#9fc0f3"/><clipPath id="c36"><path d="M1322.60 973.90 H1386.60 V1035.50 H1322.60 Q1318.00 1035.50 1318.00 1030.90 V978.50 Q1318.00 973.90 1322.60 973.90Z"/></clipPath><g clip-path="url(#c36)"><linearGradient id="g37" x1="0" y1="0" x2="0" y2="1"><stop offset="0" stop-color="#3a7ccf"/><stop offset="1" stop-color="#7fa9dc"/></linearGradient><rect x="1318.00" y="973.90" width="60.60" height="25.64" fill="url(#g37)"/><polygon points="1318.00,994.84 1342.24,998.54 1360.42,992.38 1378.60,996.08 1378.60,1010.86 1318.00,1010.86" fill="#55698a" opacity="1"/><rect x="1318.00" y="1005.93" width="60.60" height="29.57" fill="#8f8570" opacity="1"/><ellipse cx="1339.21" cy="1021.95" rx="20.60" ry="12.32" fill="#77747c" opacity="1"/><ellipse cx="1366.48" cy="1026.26" rx="18.18" ry="12.32" fill="#8d8a90" opacity="1"/><ellipse cx="1375.57" cy="1001.62" rx="8.48" ry="18.48" fill="#35272a" opacity="1"/><ellipse cx="1372.54" cy="1007.78" rx="6.06" ry="7.39" fill="#b06a6a" opacity="1"/></g></g><path d="M1318.20 971.00 H1374.00 Q1378.60 971.00 1378.60 975.60 V1101.60 Q1378.60 1106.20 1374.00 1106.20 H1318.20 Q1313.60 1106.20 1313.60 1101.60 V975.60 Q1313.60 971.00 1318.20 971.00Z" fill="none" stroke="#3a70c8" stroke-width="1" opacity="0.75"/><clipPath id="c38"><path d="M1387.30 971.00 H1412.40 Q1417.00 971.00 1417.00 975.60 V1101.60 Q1417.00 1106.20 1412.40 1106.20 H1387.30 Q1382.70 1106.20 1382.70 1101.60 V975.60 Q1382.70 971.00 1387.30 971.00Z"/></clipPath><path d="M1387.10 969.40 H1412.60 Q1418.60 969.40 1418.60 975.40 V1101.80 Q1418.60 1107.80 1412.60 1107.80 H1387.10 Q1381.10 1107.80 1381.10 1101.80 V975.40 Q1381.10 969.40 1387.10 969.40Z" fill="#000"/><g clip-path="url(#c38)"><rect x="1382.70" y="971.00" width="34.30" height="135.20" fill="#18458c"/><rect x="1382.70" y="971.00" width="34.30" height="67.50" fill="#2257a8"/><path d="M1382.70 1106.20 L1382.70 1072.56 L1385.04 1056.55 L1387.12 1053.58 L1389.45 1062.52 L1392.05 1054.91 L1393.88 1054.81 L1396.05 1055.83 L1398.24 1058.88 L1400.84 1055.11 L1403.53 1072.94 L1405.17 1073.27 L1407.27 1054.54 L1409.66 1056.26 L1412.32 1081.85 L1414.24 1054.83 L1416.04 1056.97 L1417.00 1055.10 L1417.00 1106.20Z" fill="#6c99dd"/><rect x="1396.31" y="1040.70" width="4" height="12.40" fill="url(#pk)"/><rect x="1406.66" y="1038.45" width="4" height="14.65" fill="url(#pk)"/><rect x="1382.70" y="1052.30" width="34.30" height="1.7" fill="#9fc0f3"/><clipPath id="c39"><path d="M1391.70 973.90 H1425.00 V1035.50 H1391.70 Q1387.10 1035.50 1387.10 1030.90 V978.50 Q1387.10 973.90 1391.70 973.90Z"/></clipPath><g clip-path="url(#c39)"><rect x="1387.10" y="973.90" width="29.90" height="61.60" fill="#7f8db4" opacity="1"/><ellipse cx="1403.55" cy="1007.78" rx="11.96" ry="24.64" fill="#c7a9b4" opacity="1"/><ellipse cx="1402.05" cy="992.38" rx="8.97" ry="12.32" fill="#d9d6e0" opacity="1"/><ellipse cx="1408.03" cy="1023.18" rx="8.97" ry="12.32" fill="#c98e92" opacity="1"/></g></g><path d="M1387.30 971.00 H1412.40 Q1417.00 971.00 1417.00 975.60 V1101.60 Q1417.00 1106.20 1412.40 1106.20 H1387.30 Q1382.70 1106.20 1382.70 1101.60 V975.60 Q1382.70 971.00 1387.30 971.00Z" fill="none" stroke="#3a70c8" stroke-width="1" opacity="0.75"/><path d="M1426.00 969.40 H1430.50 Q1436.50 969.40 1436.50 975.40 V1101.80 Q1436.50 1107.80 1430.50 1107.80 H1426.00 Q1420.00 1107.80 1420.00 1101.80 V975.40 Q1420.00 969.40 1426.00 969.40Z" fill="#000"/><linearGradient id="g40" x1="0" y1="0" x2="1" y2="0"><stop offset="0" stop-color="#66666b"/><stop offset="0.5" stop-color="#717176"/><stop offset="1" stop-color="#67676c"/></linearGradient><path d="M1426.20 971.00 H1430.30 Q1434.90 971.00 1434.90 975.60 V1101.60 Q1434.90 1106.20 1430.30 1106.20 H1426.20 Q1421.60 1106.20 1421.60 1101.60 V975.60 Q1421.60 971.00 1426.20 971.00Z" fill="url(#g40)"/><clipPath id="c41"><path d="M1444.50 971.00 H1476.40 Q1481.00 971.00 1481.00 975.60 V1101.60 Q1481.00 1106.20 1476.40 1106.20 H1444.50 Q1439.90 1106.20 1439.90 1101.60 V975.60 Q1439.90 971.00 1444.50 971.00Z"/></clipPath><path d="M1444.30 969.40 H1476.60 Q1482.60 969.40 1482.60 975.40 V1101.80 Q1482.60 1107.80 1476.60 1107.80 H1444.30 Q1438.30 1107.80 1438.30 1101.80 V975.40 Q1438.30 969.40 1444.30 969.40Z" fill="#000"/><g clip-path="url(#c41)"><rect x="1439.90" y="971.00" width="41.10" height="135.20" fill="#18458c"/><rect x="1439.90" y="971.00" width="41.10" height="67.50" fill="#2257a8"/><rect x="1439.90" y="1100.60" width="41.10" height="1.9" fill="#9fc0f3"/><rect x="1439.90" y="1102.50" width="41.10" height="3.7" fill="#2d62b6"/><clipPath id="c42"><path d="M1448.90 973.90 H1489.00 V1035.50 H1448.90 Q1444.30 1035.50 1444.30 1030.90 V978.50 Q1444.30 973.90 1448.90 973.90Z"/></clipPath><g clip-path="url(#c42)"><linearGradient id="g43" x1="0" y1="0" x2="0" y2="1"><stop offset="0" stop-color="#3a7dd0"/><stop offset="1" stop-color="#9fc3ea"/></linearGradient><rect x="1444.30" y="973.90" width="36.70" height="31.80" fill="url(#g43)"/><rect x="1444.30" y="1002.24" width="36.70" height="33.26" fill="#b8a07c" opacity="1"/><rect x="1444.30" y="1002.24" width="36.70" height="9.86" fill="#7f7f62" opacity="1"/><path d="M1468.15 1012.09 V989.30" stroke="#3f3f2c" stroke-width="1.4"/><ellipse cx="1468.15" cy="992.38" rx="3.67" ry="4.31" fill="#4d5630" opacity="1"/><ellipse cx="1455.31" cy="1023.18" rx="7.34" ry="4.93" fill="#9a8c60" opacity="1"/></g></g><path d="M1444.50 971.00 H1476.40 Q1481.00 971.00 1481.00 975.60 V1101.60 Q1481.00 1106.20 1476.40 1106.20 H1444.50 Q1439.90 1106.20 1439.90 1101.60 V975.60 Q1439.90 971.00 1444.50 971.00Z" fill="none" stroke="#3a70c8" stroke-width="1" opacity="0.75"/><clipPath id="c44"><path d="M1490.20 971.00 H1508.40 Q1513.00 971.00 1513.00 975.60 V1101.60 Q1513.00 1106.20 1508.40 1106.20 H1490.20 Q1485.60 1106.20 1485.60 1101.60 V975.60 Q1485.60 971.00 1490.20 971.00Z"/></clipPath><path d="M1490.00 969.40 H1508.60 Q1514.60 969.40 1514.60 975.40 V1101.80 Q1514.60 1107.80 1508.60 1107.80 H1490.00 Q1484.00 1107.80 1484.00 1101.80 V975.40 Q1484.00 969.40 1490.00 969.40Z" fill="#000"/><g clip-path="url(#c44)"><rect x="1485.60" y="971.00" width="27.40" height="135.20" fill="#18458c"/><rect x="1485.60" y="971.00" width="27.40" height="67.50" fill="#2257a8"/><rect x="1485.60" y="1100.60" width="27.40" height="1.9" fill="#9fc0f3"/><rect x="1485.60" y="1102.50" width="27.40" height="3.7" fill="#2d62b6"/><clipPath id="c45"><path d="M1494.60 973.90 H1521.00 V1035.50 H1494.60 Q1490.00 1035.50 1490.00 1030.90 V978.50 Q1490.00 973.90 1494.60 973.90Z"/></clipPath><g clip-path="url(#c45)"><linearGradient id="g46" x1="0" y1="0" x2="0" y2="1"><stop offset="0" stop-color="#1f6fcb"/><stop offset="1" stop-color="#5f9de0"/></linearGradient><rect x="1490.00" y="973.90" width="23.00" height="28.72" fill="url(#g46)"/><rect x="1490.00" y="999.77" width="23.00" height="35.73" fill="#a99466" opacity="1"/><ellipse cx="1501.50" cy="1004.70" rx="9.20" ry="8.62" fill="#6d7040" opacity="1"/><ellipse cx="1496.90" cy="1026.26" rx="9.20" ry="12.32" fill="#b7a070" opacity="1"/></g></g><path d="M1490.20 971.00 H1508.40 Q1513.00 971.00 1513.00 975.60 V1101.60 Q1513.00 1106.20 1508.40 1106.20 H1490.20 Q1485.60 1106.20 1485.60 1101.60 V975.60 Q1485.60 971.00 1490.20 971.00Z" fill="none" stroke="#3a70c8" stroke-width="1" opacity="0.75"/><path d="M1521.00 969.40 H1521.00 Q1526.60 969.40 1526.60 975.00 V1102.20 Q1526.60 1107.80 1521.00 1107.80 H1521.00 Q1515.40 1107.80 1515.40 1102.20 V975.00 Q1515.40 969.40 1521.00 969.40Z" fill="#000"/><linearGradient id="g47" x1="0" y1="0" x2="1" y2="0"><stop offset="0" stop-color="#66666b"/><stop offset="0.5" stop-color="#717176"/><stop offset="1" stop-color="#67676c"/></linearGradient><path d="M1521.00 971.00 H1521.00 Q1525.00 971.00 1525.00 975.00 V1102.20 Q1525.00 1106.20 1521.00 1106.20 H1521.00 Q1517.00 1106.20 1517.00 1102.20 V975.00 Q1517.00 971.00 1521.00 971.00Z" fill="url(#g47)"/><clipPath id="c48"><path d="M1534.40 971.00 H1627.40 Q1632.00 971.00 1632.00 975.60 V1101.60 Q1632.00 1106.20 1627.40 1106.20 H1534.40 Q1529.80 1106.20 1529.80 1101.60 V975.60 Q1529.80 971.00 1534.40 971.00Z"/></clipPath><path d="M1534.20 969.40 H1627.60 Q1633.60 969.40 1633.60 975.40 V1101.80 Q1633.60 1107.80 1627.60 1107.80 H1534.20 Q1528.20 1107.80 1528.20 1101.80 V975.40 Q1528.20 969.40 1534.20 969.40Z" fill="#000"/><g clip-path="url(#c48)"><rect x="1529.80" y="971.00" width="102.20" height="135.20" fill="#18458c"/><rect x="1529.80" y="971.00" width="102.20" height="67.50" fill="#2257a8"/><path d="M1529.80 1106.20 L1529.80 1055.21 L1532.59 1055.21 L1534.64 1074.96 L1536.30 1087.03 L1537.77 1055.90 L1540.42 1053.44 L1542.97 1055.45 L1545.18 1071.35 L1548.02 1055.21 L1550.02 1053.50 L1551.80 1053.87 L1553.52 1053.10 L1555.68 1054.21 L1557.48 1054.07 L1559.62 1053.22 L1561.58 1053.32 L1563.19 1055.69 L1564.62 1060.26 L1566.52 1070.41 L1568.96 1059.54 L1570.28 1078.58 L1571.68 1056.09 L1574.21 1061.41 L1575.93 1053.54 L1578.23 1056.69 L1580.31 1053.33 L1582.56 1053.32 L1583.90 1054.76 L1586.33 1060.96 L1588.77 1055.38 L1590.20 1055.99 L1592.54 1054.97 L1594.34 1056.46 L1597.22 1055.36 L1598.64 1060.15 L1601.36 1056.14 L1603.27 1054.33 L1605.85 1070.87 L1607.47 1054.89 L1609.28 1055.00 L1611.59 1067.21 L1613.54 1061.38 L1616.13 1056.03 L1617.53 1054.55 L1619.36 1053.27 L1621.86 1056.80 L1623.63 1055.48 L1626.22 1053.36 L1628.84 1071.38 L1630.89 1056.26 L1632.00 1055.10 L1632.00 1106.20Z" fill="#6c99dd"/><path d="M1609.37 1053.10 L1610.97 1047.64 L1612.77 1053.10Z" fill="#dfd36a"/><path d="M1579.07 1053.10 L1580.67 1049.00 L1582.47 1053.10Z" fill="#dfd36a"/><path d="M1620.44 1053.10 L1622.04 1045.76 L1623.84 1053.10Z" fill="#dfd36a"/><path d="M1597.69 1053.10 L1599.29 1047.44 L1601.09 1053.10Z" fill="#dfd36a"/><rect x="1554.28" y="1039.63" width="4" height="13.47" fill="url(#pk)"/><rect x="1575.67" y="1040.48" width="4" height="12.62" fill="url(#pk)"/><rect x="1529.80" y="1052.30" width="102.20" height="1.7" fill="#9fc0f3"/><clipPath id="c49"><path d="M1538.80 973.90 H1640.00 V1035.50 H1538.80 Q1534.20 1035.50 1534.20 1030.90 V978.50 Q1534.20 973.90 1538.80 973.90Z"/></clipPath><g clip-path="url(#c49)"><rect x="1534.20" y="973.90" width="97.80" height="61.60" fill="#c7c4b8" opacity="1"/><rect x="1534.20" y="973.90" width="44.01" height="30.80" fill="#8f9a86" opacity="1"/><polygon points="1534.20,992.38 1545.94,973.90 1563.54,973.90 1553.76,995.46 1563.54,1004.70 1539.09,1010.86" fill="#566046" opacity="1"/><ellipse cx="1550.83" cy="1001.62" rx="11.74" ry="12.32" fill="#e0b8b0" opacity="1"/><ellipse cx="1594.84" cy="998.54" rx="29.34" ry="25.87" fill="#241c1c" opacity="1"/><ellipse cx="1600.70" cy="1005.93" rx="12.71" ry="12.32" fill="#9c6b52" opacity="1"/><polygon points="1534.20,1035.50 1543.98,1023.18 1578.21,1017.02 1627.11,1023.18 1632.00,1035.50" fill="#22352f" opacity="1"/><polygon points="1590.92,1018.25 1610.48,1018.25 1604.62,1026.88 1594.84,1026.88" fill="#c4202a" opacity="1"/><ellipse cx="1542.02" cy="1023.18" rx="13.69" ry="8.62" fill="#d7dde6" opacity="1"/></g></g><path d="M1534.40 971.00 H1627.40 Q1632.00 971.00 1632.00 975.60 V1101.60 Q1632.00 1106.20 1627.40 1106.20 H1534.40 Q1529.80 1106.20 1529.80 1101.60 V975.60 Q1529.80 971.00 1534.40 971.00Z" fill="none" stroke="#3a70c8" stroke-width="1" opacity="0.75"/><path d="M1641.00 969.40 H1656.60 Q1662.60 969.40 1662.60 975.40 V1101.80 Q1662.60 1107.80 1656.60 1107.80 H1641.00 Q1635.00 1107.80 1635.00 1101.80 V975.40 Q1635.00 969.40 1641.00 969.40Z" fill="#000"/><linearGradient id="g50" x1="0" y1="0" x2="1" y2="0"><stop offset="0" stop-color="#66666b"/><stop offset="0.5" stop-color="#717176"/><stop offset="1" stop-color="#67676c"/></linearGradient><path d="M1641.20 971.00 H1656.40 Q1661.00 971.00 1661.00 975.60 V1101.60 Q1661.00 1106.20 1656.40 1106.20 H1641.20 Q1636.60 1106.20 1636.60 1101.60 V975.60 Q1636.60 971.00 1641.20 971.00Z" fill="url(#g50)"/><clipPath id="c51"><rect x="1636.6" y="971.0" width="23.90000000000009" height="40"/></clipPath><rect clip-path="url(#c51)" x="1648.00" y="979.60" width="23.4" height="17.4" rx="2.4" fill="none" stroke="#a9a9ad" stroke-width="1.5" stroke-dasharray="4.2 2.2"/><clipPath id="c52"><path d="M1670.60 971.00 H1711.00 Q1715.60 971.00 1715.60 975.60 V1101.60 Q1715.60 1106.20 1711.00 1106.20 H1670.60 Q1666.00 1106.20 1666.00 1101.60 V975.60 Q1666.00 971.00 1670.60 971.00Z"/></clipPath><path d="M1670.40 969.40 H1711.20 Q1717.20 969.40 1717.20 975.40 V1101.80 Q1717.20 1107.80 1711.20 1107.80 H1670.40 Q1664.40 1107.80 1664.40 1101.80 V975.40 Q1664.40 969.40 1670.40 969.40Z" fill="#000"/><g clip-path="url(#c52)"><rect x="1666.00" y="971.00" width="49.60" height="135.20" fill="#18458c"/><rect x="1666.00" y="971.00" width="49.60" height="67.50" fill="#2257a8"/><rect x="1666.00" y="1100.60" width="49.60" height="1.9" fill="#9fc0f3"/><rect x="1666.00" y="1102.50" width="49.60" height="3.7" fill="#2d62b6"/><clipPath id="c53"><path d="M1675.00 973.90 H1723.60 V1035.50 H1675.00 Q1670.40 1035.50 1670.40 1030.90 V978.50 Q1670.40 973.90 1675.00 973.90Z"/></clipPath><g clip-path="url(#c53)"><rect x="1670.40" y="973.90" width="45.20" height="61.60" fill="#c0a27a" opacity="1"/><polygon points="1693.00,973.90 1715.60,973.90 1715.60,992.38 1702.04,986.22" fill="#8a6b3a" opacity="1"/><polygon points="1670.40,1010.86 1688.48,992.38 1715.60,1010.86 1715.60,1035.50 1670.40,1035.50" fill="#b08f66" opacity="1"/><ellipse cx="1697.52" cy="1014.56" rx="9.04" ry="12.32" fill="#8d775e" opacity="1"/><polygon points="1670.40,1004.70 1683.96,1029.34 1679.44,1035.50 1670.40,1035.50" fill="#7b5d38" opacity="1"/></g></g><path d="M1670.60 971.00 H1711.00 Q1715.60 971.00 1715.60 975.60 V1101.60 Q1715.60 1106.20 1711.00 1106.20 H1670.60 Q1666.00 1106.20 1666.00 1101.60 V975.60 Q1666.00 971.00 1670.60 971.00Z" fill="none" stroke="#3a70c8" stroke-width="1" opacity="0.75"/><path d="M1724.40 969.40 H1735.90 Q1741.90 969.40 1741.90 975.40 V1101.80 Q1741.90 1107.80 1735.90 1107.80 H1724.40 Q1718.40 1107.80 1718.40 1101.80 V975.40 Q1718.40 969.40 1724.40 969.40Z" fill="#000"/><linearGradient id="g54" x1="0" y1="0" x2="1" y2="0"><stop offset="0" stop-color="#66666b"/><stop offset="0.5" stop-color="#717176"/><stop offset="1" stop-color="#67676c"/></linearGradient><path d="M1724.60 971.00 H1735.70 Q1740.30 971.00 1740.30 975.60 V1101.60 Q1740.30 1106.20 1735.70 1106.20 H1724.60 Q1720.00 1106.20 1720.00 1101.60 V975.60 Q1720.00 971.00 1724.60 971.00Z" fill="url(#g54)"/><clipPath id="c55"><rect x="1720.0" y="971.0" width="19.799999999999955" height="40"/></clipPath><rect clip-path="url(#c55)" x="1731.40" y="979.60" width="23.4" height="17.4" rx="2.4" fill="none" stroke="#a9a9ad" stroke-width="1.5" stroke-dasharray="4.2 2.2"/><clipPath id="c56"><path d="M1749.50 971.00 H1783.70 Q1788.30 971.00 1788.30 975.60 V1101.60 Q1788.30 1106.20 1783.70 1106.20 H1749.50 Q1744.90 1106.20 1744.90 1101.60 V975.60 Q1744.90 971.00 1749.50 971.00Z"/></clipPath><path d="M1749.30 969.40 H1783.90 Q1789.90 969.40 1789.90 975.40 V1101.80 Q1789.90 1107.80 1783.90 1107.80 H1749.30 Q1743.30 1107.80 1743.30 1101.80 V975.40 Q1743.30 969.40 1749.30 969.40Z" fill="#000"/><g clip-path="url(#c56)"><rect x="1744.90" y="971.00" width="43.40" height="135.20" fill="#18458c"/><rect x="1744.90" y="971.00" width="43.40" height="67.50" fill="#2257a8"/><path d="M1744.90 1106.20 L1744.90 1055.15 L1746.83 1059.82 L1749.17 1064.03 L1750.72 1055.34 L1752.14 1053.93 L1754.11 1056.99 L1755.69 1061.29 L1758.42 1063.81 L1760.95 1056.22 L1762.72 1056.97 L1764.43 1060.67 L1766.03 1057.19 L1768.78 1055.18 L1770.48 1063.38 L1772.82 1061.38 L1774.18 1080.95 L1775.85 1059.00 L1778.55 1055.15 L1780.81 1053.88 L1782.23 1053.81 L1784.50 1055.76 L1785.81 1055.94 L1787.67 1058.27 L1788.30 1055.10 L1788.30 1106.20Z" fill="#6c99dd"/><path d="M1783.30 1053.10 L1784.90 1048.68 L1786.70 1053.10Z" fill="#dfd36a"/><rect x="1773.55" y="1039.05" width="4" height="14.05" fill="url(#pk)"/><rect x="1744.90" y="1052.30" width="43.40" height="1.7" fill="#9fc0f3"/><clipPath id="c57"><path d="M1753.90 973.90 H1796.30 V1035.50 H1753.90 Q1749.30 1035.50 1749.30 1030.90 V978.50 Q1749.30 973.90 1753.90 973.90Z"/></clipPath><g clip-path="url(#c57)"><linearGradient id="g58" x1="0" y1="0" x2="0" y2="1"><stop offset="0" stop-color="#2c78d0"/><stop offset="1" stop-color="#8ab9ea"/></linearGradient><rect x="1749.30" y="973.90" width="39.00" height="31.80" fill="url(#g58)"/><rect x="1749.30" y="1003.47" width="39.00" height="32.03" fill="#a38e64" opacity="1"/><ellipse cx="1772.70" cy="999.77" rx="7.80" ry="4.93" fill="#67733a" opacity="1"/><polygon points="1768.80,1007.78 1771.14,1007.78 1780.50,1035.50 1776.60,1035.50 1769.97,1015.79 1763.34,1035.50 1759.44,1035.50" fill="#1c1c20" opacity="1"/><rect x="1766.46" y="1004.70" width="7.80" height="6.16" fill="#26262a" opacity="1"/><ellipse cx="1753.20" cy="1029.34" rx="7.80" ry="7.39" fill="#c5b28c" opacity="1"/></g></g><path d="M1749.50 971.00 H1783.70 Q1788.30 971.00 1788.30 975.60 V1101.60 Q1788.30 1106.20 1783.70 1106.20 H1749.50 Q1744.90 1106.20 1744.90 1101.60 V975.60 Q1744.90 971.00 1749.50 971.00Z" fill="none" stroke="#3a70c8" stroke-width="1" opacity="0.75"/><clipPath id="c59"><path d="M1796.80 971.00 H1802.70 Q1807.30 971.00 1807.30 975.60 V1101.60 Q1807.30 1106.20 1802.70 1106.20 H1796.80 Q1792.20 1106.20 1792.20 1101.60 V975.60 Q1792.20 971.00 1796.80 971.00Z"/></clipPath><path d="M1796.60 969.40 H1802.90 Q1808.90 969.40 1808.90 975.40 V1101.80 Q1808.90 1107.80 1802.90 1107.80 H1796.60 Q1790.60 1107.80 1790.60 1101.80 V975.40 Q1790.60 969.40 1796.60 969.40Z" fill="#000"/><g clip-path="url(#c59)"><rect x="1792.20" y="971.00" width="15.10" height="135.20" fill="#18458c"/><rect x="1792.20" y="971.00" width="15.10" height="67.50" fill="#2257a8"/><path d="M1792.20 1106.20 L1792.20 1056.38 L1794.15 1067.02 L1795.58 1062.36 L1797.65 1075.67 L1800.02 1063.65 L1802.36 1057.03 L1805.24 1054.77 L1806.62 1056.63 L1807.30 1055.10 L1807.30 1106.20Z" fill="#6c99dd"/><rect x="1794.35" y="1040.67" width="4" height="12.43" fill="url(#pk)"/><rect x="1792.20" y="1052.30" width="15.10" height="1.7" fill="#9fc0f3"/><clipPath id="c60"><path d="M1801.20 973.90 H1815.30 V1035.50 H1801.20 Q1796.60 1035.50 1796.60 1030.90 V978.50 Q1796.60 973.90 1801.20 973.90Z"/></clipPath><g clip-path="url(#c60)"><linearGradient id="g61" x1="0" y1="0" x2="0" y2="1"><stop offset="0" stop-color="#3b7fd2"/><stop offset="1" stop-color="#8cb5e6"/></linearGradient><rect x="1796.60" y="973.90" width="10.70" height="25.64" fill="url(#g61)"/><rect x="1796.60" y="996.08" width="10.70" height="39.42" fill="#7f7767" opacity="1"/><ellipse cx="1803.02" cy="1020.10" rx="5.35" ry="15.40" fill="#9c948a" opacity="1"/></g></g><path d="M1796.80 971.00 H1802.70 Q1807.30 971.00 1807.30 975.60 V1101.60 Q1807.30 1106.20 1802.70 1106.20 H1796.80 Q1792.20 1106.20 1792.20 1101.60 V975.60 Q1792.20 971.00 1796.80 971.00Z" fill="none" stroke="#3a70c8" stroke-width="1" opacity="0.75"/><clipPath id="c62"><path d="M1816.30 971.00 H1848.40 Q1853.00 971.00 1853.00 975.60 V1101.60 Q1853.00 1106.20 1848.40 1106.20 H1816.30 Q1811.70 1106.20 1811.70 1101.60 V975.60 Q1811.70 971.00 1816.30 971.00Z"/></clipPath><path d="M1816.10 969.40 H1848.60 Q1854.60 969.40 1854.60 975.40 V1101.80 Q1854.60 1107.80 1848.60 1107.80 H1816.10 Q1810.10 1107.80 1810.10 1101.80 V975.40 Q1810.10 969.40 1816.10 969.40Z" fill="#000"/><g clip-path="url(#c62)"><rect x="1811.70" y="971.00" width="41.30" height="135.20" fill="#18458c"/><rect x="1811.70" y="971.00" width="41.30" height="67.50" fill="#2257a8"/><rect x="1811.70" y="1100.60" width="41.30" height="1.9" fill="#9fc0f3"/><rect x="1811.70" y="1102.50" width="41.30" height="3.7" fill="#2d62b6"/><clipPath id="c63"><path d="M1820.70 973.90 H1861.00 V1035.50 H1820.70 Q1816.10 1035.50 1816.10 1030.90 V978.50 Q1816.10 973.90 1820.70 973.90Z"/></clipPath><g clip-path="url(#c63)"><linearGradient id="g64" x1="0" y1="0" x2="0" y2="1"><stop offset="0" stop-color="#4a8bd8"/><stop offset="1" stop-color="#a5c8ee"/></linearGradient><rect x="1816.10" y="973.90" width="36.90" height="19.48" fill="url(#g64)"/><polygon points="1816.10,995.46 1834.55,983.14 1853.00,989.30 1853.00,1017.02 1816.10,1017.02" fill="#84786a" opacity="1"/><ellipse cx="1827.17" cy="998.54" rx="11.07" ry="12.32" fill="#5b5348" opacity="1"/><rect x="1816.10" y="1014.56" width="36.90" height="20.94" fill="#c9cdd6" opacity="1"/><ellipse cx="1838.24" cy="1023.18" rx="18.45" ry="8.62" fill="#e7e9ee" opacity="1"/><ellipse cx="1827.17" cy="1032.42" rx="14.76" ry="6.16" fill="#9ca6b6" opacity="1"/></g></g><path d="M1816.30 971.00 H1848.40 Q1853.00 971.00 1853.00 975.60 V1101.60 Q1853.00 1106.20 1848.40 1106.20 H1816.30 Q1811.70 1106.20 1811.70 1101.60 V975.60 Q1811.70 971.00 1816.30 971.00Z" fill="none" stroke="#3a70c8" stroke-width="1" opacity="0.75"/><clipPath id="c65"><path d="M1861.80 971.00 H1876.40 Q1881.00 971.00 1881.00 975.60 V1101.60 Q1881.00 1106.20 1876.40 1106.20 H1861.80 Q1857.20 1106.20 1857.20 1101.60 V975.60 Q1857.20 971.00 1861.80 971.00Z"/></clipPath><path d="M1861.60 969.40 H1876.60 Q1882.60 969.40 1882.60 975.40 V1101.80 Q1882.60 1107.80 1876.60 1107.80 H1861.60 Q1855.60 1107.80 1855.60 1101.80 V975.40 Q1855.60 969.40 1861.60 969.40Z" fill="#000"/><g clip-path="url(#c65)"><rect x="1857.20" y="971.00" width="23.80" height="135.20" fill="#18458c"/><rect x="1857.20" y="971.00" width="23.80" height="67.50" fill="#2257a8"/><rect x="1857.20" y="1100.60" width="23.80" height="1.9" fill="#9fc0f3"/><rect x="1857.20" y="1102.50" width="23.80" height="3.7" fill="#2d62b6"/><clipPath id="c66"><path d="M1866.20 973.90 H1889.00 V1035.50 H1866.20 Q1861.60 1035.50 1861.60 1030.90 V978.50 Q1861.60 973.90 1866.20 973.90Z"/></clipPath><g clip-path="url(#c66)"><rect x="1861.60" y="973.90" width="19.40" height="61.60" fill="#a9a6a1" opacity="1"/><rect x="1861.60" y="973.90" width="4.85" height="61.60" fill="#7b7872" opacity="1"/><rect x="1878.09" y="973.90" width="2.91" height="61.60" fill="#6f6a64" opacity="1"/></g></g><path d="M1861.80 971.00 H1876.40 Q1881.00 971.00 1881.00 975.60 V1101.60 Q1881.00 1106.20 1876.40 1106.20 H1861.80 Q1857.20 1106.20 1857.20 1101.60 V975.60 Q1857.20 971.00 1861.80 971.00Z" fill="none" stroke="#3a70c8" stroke-width="1" opacity="0.75"/><clipPath id="c67"><path d="M1889.60 971.00 H1908.40 Q1913.00 971.00 1913.00 975.60 V1101.60 Q1913.00 1106.20 1908.40 1106.20 H1889.60 Q1885.00 1106.20 1885.00 1101.60 V975.60 Q1885.00 971.00 1889.60 971.00Z"/></clipPath><path d="M1889.40 969.40 H1908.60 Q1914.60 969.40 1914.60 975.40 V1101.80 Q1914.60 1107.80 1908.60 1107.80 H1889.40 Q1883.40 1107.80 1883.40 1101.80 V975.40 Q1883.40 969.40 1889.40 969.40Z" fill="#000"/><g clip-path="url(#c67)"><rect x="1885.00" y="971.00" width="28.00" height="135.20" fill="#18458c"/><rect x="1885.00" y="971.00" width="28.00" height="67.50" fill="#2257a8"/><rect x="1885.00" y="1100.60" width="28.00" height="1.9" fill="#9fc0f3"/><rect x="1885.00" y="1102.50" width="28.00" height="3.7" fill="#2d62b6"/><clipPath id="c68"><path d="M1894.00 973.90 H1921.00 V1035.50 H1894.00 Q1889.40 1035.50 1889.40 1030.90 V978.50 Q1889.40 973.90 1894.00 973.90Z"/></clipPath><g clip-path="url(#c68)"><rect x="1889.40" y="973.90" width="23.60" height="61.60" fill="#a9957c" opacity="1"/><rect x="1889.40" y="973.90" width="23.60" height="15.40" fill="#8a7864" opacity="1"/><ellipse cx="1901.20" cy="991.15" rx="3.78" ry="6.16" fill="#3a2a22" opacity="1"/><polygon points="1895.30,995.46 1907.10,995.46 1908.28,1014.56 1894.59,1014.56" fill="#d8921f" opacity="1"/><rect x="1904.03" y="996.08" width="5.66" height="16.02" fill="#4d5a40" opacity="1"/><polygon points="1897.90,1014.56 1905.92,1014.56 1905.45,1035.50 1898.84,1035.50" fill="#17161a" opacity="1"/></g></g><path d="M1889.60 971.00 H1908.40 Q1913.00 971.00 1913.00 975.60 V1101.60 Q1913.00 1106.20 1908.40 1106.20 H1889.60 Q1885.00 1106.20 1885.00 1101.60 V975.60 Q1885.00 971.00 1889.60 971.00Z" fill="none" stroke="#3a70c8" stroke-width="1" opacity="0.75"/><clipPath id="c69"><path d="M1921.60 971.00 H1941.60 Q1946.20 971.00 1946.20 975.60 V1101.60 Q1946.20 1106.20 1941.60 1106.20 H1921.60 Q1917.00 1106.20 1917.00 1101.60 V975.60 Q1917.00 971.00 1921.60 971.00Z"/></clipPath><path d="M1921.40 969.40 H1941.80 Q1947.80 969.40 1947.80 975.40 V1101.80 Q1947.80 1107.80 1941.80 1107.80 H1921.40 Q1915.40 1107.80 1915.40 1101.80 V975.40 Q1915.40 969.40 1921.40 969.40Z" fill="#000"/><g clip-path="url(#c69)"><rect x="1917.00" y="971.00" width="29.20" height="135.20" fill="#18458c"/><rect x="1917.00" y="971.00" width="29.20" height="67.50" fill="#2257a8"/><rect x="1917.00" y="1100.60" width="29.20" height="1.9" fill="#9fc0f3"/><rect x="1917.00" y="1102.50" width="29.20" height="3.7" fill="#2d62b6"/><clipPath id="c70"><path d="M1926.00 973.90 H1954.20 V1035.50 H1926.00 Q1921.40 1035.50 1921.40 1030.90 V978.50 Q1921.40 973.90 1926.00 973.90Z"/></clipPath><g clip-path="url(#c70)"><rect x="1921.40" y="973.90" width="24.80" height="61.60" fill="#5b3d25" opacity="1"/><ellipse cx="1933.80" cy="998.54" rx="9.92" ry="18.48" fill="#73522f" opacity="1"/><ellipse cx="1931.32" cy="1023.18" rx="9.92" ry="12.32" fill="#452c18" opacity="1"/></g></g><path d="M1921.60 971.00 H1941.60 Q1946.20 971.00 1946.20 975.60 V1101.60 Q1946.20 1106.20 1941.60 1106.20 H1921.60 Q1917.00 1106.20 1917.00 1101.60 V975.60 Q1917.00 971.00 1921.60 971.00Z" fill="none" stroke="#3a70c8" stroke-width="1" opacity="0.75"/><clipPath id="c71"><path d="M1954.60 971.00 H1966.80 Q1971.40 971.00 1971.40 975.60 V1101.60 Q1971.40 1106.20 1966.80 1106.20 H1954.60 Q1950.00 1106.20 1950.00 1101.60 V975.60 Q1950.00 971.00 1954.60 971.00Z"/></clipPath><path d="M1954.40 969.40 H1967.00 Q1973.00 969.40 1973.00 975.40 V1101.80 Q1973.00 1107.80 1967.00 1107.80 H1954.40 Q1948.40 1107.80 1948.40 1101.80 V975.40 Q1948.40 969.40 1954.40 969.40Z" fill="#000"/><g clip-path="url(#c71)"><rect x="1950.00" y="971.00" width="21.40" height="135.20" fill="#18458c"/><rect x="1950.00" y="971.00" width="21.40" height="67.50" fill="#2257a8"/><rect x="1950.00" y="1100.60" width="21.40" height="1.9" fill="#9fc0f3"/><rect x="1950.00" y="1102.50" width="21.40" height="3.7" fill="#2d62b6"/><clipPath id="c72"><path d="M1959.00 973.90 H1979.40 V1035.50 H1959.00 Q1954.40 1035.50 1954.40 1030.90 V978.50 Q1954.40 973.90 1959.00 973.90Z"/></clipPath><g clip-path="url(#c72)"><rect x="1954.40" y="973.90" width="17.00" height="61.60" fill="#a7adb8" opacity="1"/><rect x="1954.40" y="1023.18" width="17.00" height="12.32" fill="#bda98a" opacity="1"/><rect x="1954.40" y="973.90" width="3.40" height="61.60" fill="#8e98a8" opacity="1"/></g></g><path d="M1954.60 971.00 H1966.80 Q1971.40 971.00 1971.40 975.60 V1101.60 Q1971.40 1106.20 1966.80 1106.20 H1954.60 Q1950.00 1106.20 1950.00 1101.60 V975.60 Q1950.00 971.00 1954.60 971.00Z" fill="none" stroke="#3a70c8" stroke-width="1" opacity="0.75"/><path d="M1979.40 969.40 H1979.40 Q1985.10 969.40 1985.10 975.10 V1102.10 Q1985.10 1107.80 1979.40 1107.80 H1979.40 Q1973.70 1107.80 1973.70 1102.10 V975.10 Q1973.70 969.40 1979.40 969.40Z" fill="#000"/><linearGradient id="g73" x1="0" y1="0" x2="1" y2="0"><stop offset="0" stop-color="#66666b"/><stop offset="0.5" stop-color="#717176"/><stop offset="1" stop-color="#67676c"/></linearGradient><path d="M1979.40 971.00 H1979.40 Q1983.50 971.00 1983.50 975.10 V1102.10 Q1983.50 1106.20 1979.40 1106.20 H1979.40 Q1975.30 1106.20 1975.30 1102.10 V975.10 Q1975.30 971.00 1979.40 971.00Z" fill="url(#g73)"/><clipPath id="c74"><path d="M1992.40 971.00 H2022.10 Q2026.70 971.00 2026.70 975.60 V1101.60 Q2026.70 1106.20 2022.10 1106.20 H1992.40 Q1987.80 1106.20 1987.80 1101.60 V975.60 Q1987.80 971.00 1992.40 971.00Z"/></clipPath><path d="M1992.20 969.40 H2022.30 Q2028.30 969.40 2028.30 975.40 V1101.80 Q2028.30 1107.80 2022.30 1107.80 H1992.20 Q1986.20 1107.80 1986.20 1101.80 V975.40 Q1986.20 969.40 1992.20 969.40Z" fill="#000"/><g clip-path="url(#c74)"><rect x="1987.80" y="971.00" width="38.90" height="135.20" fill="#18458c"/><rect x="1987.80" y="971.00" width="38.90" height="67.50" fill="#2257a8"/><path d="M1987.80 1106.20 L1987.80 1055.68 L1989.73 1084.91 L1991.72 1055.38 L1993.16 1054.56 L1995.70 1055.15 L1997.23 1054.69 L1999.45 1056.05 L2001.02 1055.72 L2002.60 1059.23 L2005.10 1056.32 L2006.88 1053.27 L2009.64 1066.46 L2011.96 1071.22 L2014.36 1055.66 L2017.03 1055.56 L2018.65 1064.80 L2020.01 1053.73 L2021.89 1086.95 L2024.49 1081.01 L2026.70 1055.10 L2026.70 1106.20Z" fill="#6c99dd"/><rect x="2011.24" y="1041.75" width="4" height="11.35" fill="url(#pk)"/><path d="M2000.14 1053.10 L2001.74 1044.81 L2003.54 1053.10Z" fill="#dfd36a"/><rect x="1987.80" y="1052.30" width="38.90" height="1.7" fill="#9fc0f3"/><clipPath id="c75"><path d="M1996.80 973.90 H2034.70 V1035.50 H1996.80 Q1992.20 1035.50 1992.20 1030.90 V978.50 Q1992.20 973.90 1996.80 973.90Z"/></clipPath><g clip-path="url(#c75)"><linearGradient id="g76" x1="0" y1="0" x2="0" y2="1"><stop offset="0" stop-color="#2f7ad0"/><stop offset="1" stop-color="#7fb0e6"/></linearGradient><rect x="1992.20" y="973.90" width="34.50" height="25.64" fill="url(#g76)"/><polygon points="1992.20,996.08 2002.55,992.38 2016.35,999.77 2026.70,994.84 2026.70,1010.86 1992.20,1010.86" fill="#4c6a8e" opacity="1"/><rect x="1992.20" y="1007.78" width="34.50" height="27.72" fill="#9a8c72" opacity="1"/><ellipse cx="2009.45" cy="1023.18" rx="15.53" ry="11.09" fill="#9b948c" opacity="1"/><ellipse cx="1997.38" cy="1012.09" rx="6.90" ry="7.39" fill="#c0a272" opacity="1"/><ellipse cx="2021.53" cy="1017.02" rx="6.90" ry="7.39" fill="#5d5850" opacity="1"/></g></g><path d="M1992.40 971.00 H2022.10 Q2026.70 971.00 2026.70 975.60 V1101.60 Q2026.70 1106.20 2022.10 1106.20 H1992.40 Q1987.80 1106.20 1987.80 1101.60 V975.60 Q1987.80 971.00 1992.40 971.00Z" fill="none" stroke="#3a70c8" stroke-width="1" opacity="0.75"/><clipPath id="c77"><path d="M2035.40 971.00 H2048.00 Q2052.60 971.00 2052.60 975.60 V1101.60 Q2052.60 1106.20 2048.00 1106.20 H2035.40 Q2030.80 1106.20 2030.80 1101.60 V975.60 Q2030.80 971.00 2035.40 971.00Z"/></clipPath><path d="M2035.20 969.40 H2048.20 Q2054.20 969.40 2054.20 975.40 V1101.80 Q2054.20 1107.80 2048.20 1107.80 H2035.20 Q2029.20 1107.80 2029.20 1101.80 V975.40 Q2029.20 969.40 2035.20 969.40Z" fill="#000"/><g clip-path="url(#c77)"><rect x="2030.80" y="971.00" width="21.80" height="135.20" fill="#18458c"/><rect x="2030.80" y="971.00" width="21.80" height="67.50" fill="#2257a8"/><path d="M2030.80 1106.20 L2030.80 1078.82 L2033.34 1054.33 L2035.04 1058.86 L2037.15 1055.10 L2040.03 1060.88 L2042.32 1056.45 L2044.91 1055.19 L2046.79 1076.04 L2048.89 1053.26 L2050.40 1054.35 L2052.60 1055.10 L2052.60 1106.20Z" fill="#6c99dd"/><rect x="2033.98" y="1040.83" width="4" height="12.27" fill="url(#pk)"/><rect x="2030.80" y="1052.30" width="21.80" height="1.7" fill="#9fc0f3"/><clipPath id="c78"><path d="M2039.80 973.90 H2060.60 V1035.50 H2039.80 Q2035.20 1035.50 2035.20 1030.90 V978.50 Q2035.20 973.90 2039.80 973.90Z"/></clipPath><g clip-path="url(#c78)"><linearGradient id="g79" x1="0" y1="0" x2="0" y2="1"><stop offset="0" stop-color="#9fc3ea"/><stop offset="1" stop-color="#6d95c4"/></linearGradient><rect x="2035.20" y="973.90" width="17.40" height="22.56" fill="url(#g79)"/><polygon points="2035.20,986.22 2052.60,981.29 2052.60,998.54 2035.20,998.54" fill="#3f6a96" opacity="1"/><rect x="2035.20" y="996.08" width="17.40" height="39.42" fill="#a9935e" opacity="1"/><ellipse cx="2048.25" cy="1017.02" rx="5.22" ry="16.02" fill="#2f4658" opacity="1"/><ellipse cx="2038.68" cy="1029.34" rx="5.22" ry="7.39" fill="#c4b8c4" opacity="1"/></g></g><path d="M2035.40 971.00 H2048.00 Q2052.60 971.00 2052.60 975.60 V1101.60 Q2052.60 1106.20 2048.00 1106.20 H2035.40 Q2030.80 1106.20 2030.80 1101.60 V975.60 Q2030.80 971.00 2035.40 971.00Z" fill="none" stroke="#3a70c8" stroke-width="1" opacity="0.75"/><path d="M2061.40 969.40 H2081.80 Q2087.80 969.40 2087.80 975.40 V1101.80 Q2087.80 1107.80 2081.80 1107.80 H2061.40 Q2055.40 1107.80 2055.40 1101.80 V975.40 Q2055.40 969.40 2061.40 969.40Z" fill="#000"/><linearGradient id="g80" x1="0" y1="0" x2="1" y2="0"><stop offset="0" stop-color="#66666b"/><stop offset="0.5" stop-color="#717176"/><stop offset="1" stop-color="#67676c"/></linearGradient><path d="M2061.60 971.00 H2081.60 Q2086.20 971.00 2086.20 975.60 V1101.60 Q2086.20 1106.20 2081.60 1106.20 H2061.60 Q2057.00 1106.20 2057.00 1101.60 V975.60 Q2057.00 971.00 2061.60 971.00Z" fill="url(#g80)"/><clipPath id="c81"><rect x="2057.0" y="971.0" width="28.699999999999818" height="40"/></clipPath><rect clip-path="url(#c81)" x="2068.40" y="979.60" width="23.4" height="17.4" rx="2.4" fill="none" stroke="#a9a9ad" stroke-width="1.5" stroke-dasharray="4.2 2.2"/><clipPath id="c82"><path d="M2095.40 971.00 H2131.40 Q2136.00 971.00 2136.00 975.60 V1101.60 Q2136.00 1106.20 2131.40 1106.20 H2095.40 Q2090.80 1106.20 2090.80 1101.60 V975.60 Q2090.80 971.00 2095.40 971.00Z"/></clipPath><path d="M2095.20 969.40 H2131.60 Q2137.60 969.40 2137.60 975.40 V1101.80 Q2137.60 1107.80 2131.60 1107.80 H2095.20 Q2089.20 1107.80 2089.20 1101.80 V975.40 Q2089.20 969.40 2095.20 969.40Z" fill="#000"/><g clip-path="url(#c82)"><rect x="2090.80" y="971.00" width="45.20" height="135.20" fill="#18458c"/><rect x="2090.80" y="971.00" width="45.20" height="67.50" fill="#2257a8"/><path d="M2090.80 1106.20 L2090.80 1076.43 L2093.17 1080.58 L2094.42 1097.86 L2096.73 1083.76 L2098.12 1097.19 L2100.92 1094.65 L2103.58 1080.19 L2106.01 1082.79 L2107.61 1078.79 L2109.91 1095.33 L2111.69 1086.30 L2114.52 1090.79 L2116.18 1073.67 L2118.24 1086.97 L2120.55 1095.60 L2122.42 1096.24 L2124.35 1085.58 L2126.05 1093.83 L2127.93 1080.29 L2129.60 1081.15 L2130.89 1077.84 L2133.83 1090.88 L2135.97 1083.88 L2136.00 1098.20 L2136.00 1106.20Z" fill="#6c99dd"/><rect x="2090.80" y="1052.30" width="45.20" height="1.7" fill="#9fc0f3"/><clipPath id="c83"><path d="M2099.80 973.90 H2144.00 V1035.50 H2099.80 Q2095.20 1035.50 2095.20 1030.90 V978.50 Q2095.20 973.90 2099.80 973.90Z"/></clipPath><g clip-path="url(#c83)"><rect x="2095.20" y="973.90" width="40.80" height="61.60" fill="#5d5c5a" opacity="1"/><ellipse cx="2107.44" cy="992.38" rx="12.24" ry="15.40" fill="#77746e" opacity="1"/><ellipse cx="2123.76" cy="1017.02" rx="14.28" ry="18.48" fill="#4a4845" opacity="1"/><ellipse cx="2115.60" cy="1026.26" rx="12.24" ry="7.39" fill="#85817a" opacity="1"/></g></g><path d="M2095.40 971.00 H2131.40 Q2136.00 971.00 2136.00 975.60 V1101.60 Q2136.00 1106.20 2131.40 1106.20 H2095.40 Q2090.80 1106.20 2090.80 1101.60 V975.60 Q2090.80 971.00 2095.40 971.00Z" fill="none" stroke="#3a70c8" stroke-width="1" opacity="0.75"/><clipPath id="c84"><path d="M2145.30 971.00 H2163.10 Q2167.70 971.00 2167.70 975.60 V1101.60 Q2167.70 1106.20 2163.10 1106.20 H2145.30 Q2140.70 1106.20 2140.70 1101.60 V975.60 Q2140.70 971.00 2145.30 971.00Z"/></clipPath><path d="M2145.10 969.40 H2163.30 Q2169.30 969.40 2169.30 975.40 V1101.80 Q2169.30 1107.80 2163.30 1107.80 H2145.10 Q2139.10 1107.80 2139.10 1101.80 V975.40 Q2139.10 969.40 2145.10 969.40Z" fill="#000"/><g clip-path="url(#c84)"><rect x="2140.70" y="971.00" width="27.00" height="135.20" fill="#18458c"/><rect x="2140.70" y="971.00" width="27.00" height="67.50" fill="#2257a8"/><clipPath id="c85"><path d="M2149.70 973.90 H2175.70 V1035.50 H2149.70 Q2145.10 1035.50 2145.10 1030.90 V978.50 Q2145.10 973.90 2149.70 973.90Z"/></clipPath><g clip-path="url(#c85)"><rect x="2145.10" y="973.90" width="22.60" height="61.60" fill="#2a2220" opacity="1"/><ellipse cx="2156.40" cy="992.38" rx="9.04" ry="12.32" fill="#5a4a44" opacity="1"/><ellipse cx="2154.14" cy="1007.78" rx="5.65" ry="12.32" fill="#1a1414" opacity="1"/></g></g><path d="M2145.30 971.00 H2163.10 Q2167.70 971.00 2167.70 975.60 V1101.60 Q2167.70 1106.20 2163.10 1106.20 H2145.30 Q2140.70 1106.20 2140.70 1101.60 V975.60 Q2140.70 971.00 2145.30 971.00Z" fill="none" stroke="#3a70c8" stroke-width="1" opacity="0.75"/><clipPath id="c86"><path d="M2145.30 971.00 H2163.10 Q2167.70 971.00 2167.70 975.60 V1101.60 Q2167.70 1106.20 2163.10 1106.20 H2145.30 Q2140.70 1106.20 2140.70 1101.60 V975.60 Q2140.70 971.00 2145.30 971.00Z"/></clipPath><g clip-path="url(#c86)"><path d="M2140.70 1106.20 L2140.70 1095.79 L2142.86 1068.97 L2145.39 1092.00 L2147.27 1092.09 L2148.73 1093.39 L2150.08 1096.39 L2152.39 1062.86 L2154.12 1086.32 L2155.88 1062.36 L2158.64 1064.68 L2161.46 1075.86 L2164.00 1096.61 L2165.73 1081.31 L2167.68 1092.26 L2167.70 1100.20 L2167.70 1106.20Z" fill="#6c99dd"/><rect x="2140.7" y="1061.4" width="27.0" height="1.6" fill="#9fc0f3"/></g><clipPath id="c87"><path d="M2176.80 971.00 H2221.90 Q2226.50 971.00 2226.50 975.60 V1101.60 Q2226.50 1106.20 2221.90 1106.20 H2176.80 Q2172.20 1106.20 2172.20 1101.60 V975.60 Q2172.20 971.00 2176.80 971.00Z"/></clipPath><path d="M2176.60 969.40 H2222.10 Q2228.10 969.40 2228.10 975.40 V1101.80 Q2228.10 1107.80 2222.10 1107.80 H2176.60 Q2170.60 1107.80 2170.60 1101.80 V975.40 Q2170.60 969.40 2176.60 969.40Z" fill="#000"/><g clip-path="url(#c87)"><rect x="2172.20" y="971.00" width="54.30" height="135.20" fill="#18458c"/><rect x="2172.20" y="971.00" width="54.30" height="67.50" fill="#2257a8"/><path d="M2172.20 1106.20 L2172.20 1069.30 L2173.57 1067.71 L2175.36 1066.65 L2177.32 1059.46 L2179.21 1059.62 L2180.53 1073.11 L2182.55 1059.53 L2184.91 1078.05 L2187.76 1078.53 L2190.49 1068.10 L2192.75 1065.43 L2194.32 1059.17 L2195.66 1059.63 L2198.42 1069.31 L2200.77 1063.39 L2202.90 1070.63 L2204.86 1065.88 L2206.26 1088.71 L2208.72 1066.78 L2210.62 1083.61 L2212.05 1059.75 L2214.95 1070.49 L2216.44 1060.80 L2219.25 1059.15 L2221.57 1072.18 L2224.34 1058.28 L2226.50 1059.10 L2226.50 1106.20Z" fill="#6c99dd"/><rect x="2172.20" y="1052.30" width="54.30" height="1.7" fill="#9fc0f3"/><clipPath id="c88"><path d="M2181.20 973.90 H2234.50 V1035.50 H2181.20 Q2176.60 1035.50 2176.60 1030.90 V978.50 Q2176.60 973.90 2181.20 973.90Z"/></clipPath><g clip-path="url(#c88)"><rect x="2176.60" y="973.90" width="49.90" height="61.60" fill="#15110f" opacity="1"/><ellipse cx="2216.52" cy="992.38" rx="9.98" ry="18.48" fill="#3a3634" opacity="1"/><ellipse cx="2191.57" cy="1023.18" rx="14.97" ry="11.09" fill="#2c2418" opacity="1"/></g></g><path d="M2176.80 971.00 H2221.90 Q2226.50 971.00 2226.50 975.60 V1101.60 Q2226.50 1106.20 2221.90 1106.20 H2176.80 Q2172.20 1106.20 2172.20 1101.60 V975.60 Q2172.20 971.00 2176.80 971.00Z" fill="none" stroke="#3a70c8" stroke-width="1" opacity="0.75"/><path d="M2235.00 969.40 H2237.60 Q2243.60 969.40 2243.60 975.40 V1101.80 Q2243.60 1107.80 2237.60 1107.80 H2235.00 Q2229.00 1107.80 2229.00 1101.80 V975.40 Q2229.00 969.40 2235.00 969.40Z" fill="#000"/><linearGradient id="g89" x1="0" y1="0" x2="1" y2="0"><stop offset="0" stop-color="#66666b"/><stop offset="0.5" stop-color="#717176"/><stop offset="1" stop-color="#67676c"/></linearGradient><path d="M2235.20 971.00 H2237.40 Q2242.00 971.00 2242.00 975.60 V1101.60 Q2242.00 1106.20 2237.40 1106.20 H2235.20 Q2230.60 1106.20 2230.60 1101.60 V975.60 Q2230.60 971.00 2235.20 971.00Z" fill="url(#g89)"/><clipPath id="c90"><path d="M802.50 1118.60 H806.10 Q810.70 1118.60 810.70 1123.20 V1248.40 Q810.70 1253.00 806.10 1253.00 H802.50 Q797.90 1253.00 797.90 1248.40 V1123.20 Q797.90 1118.60 802.50 1118.60Z"/></clipPath><path d="M802.30 1117.00 H806.30 Q812.30 1117.00 812.30 1123.00 V1248.60 Q812.30 1254.60 806.30 1254.60 H802.30 Q796.30 1254.60 796.30 1248.60 V1123.00 Q796.30 1117.00 802.30 1117.00Z" fill="#000"/><g clip-path="url(#c90)"><rect x="797.90" y="1118.60" width="12.80" height="134.40" fill="#18458c"/><rect x="797.90" y="1118.60" width="12.80" height="66.50" fill="#2257a8"/><path d="M797.90 1253.00 L797.90 1200.04 L800.01 1228.98 L802.66 1202.30 L805.42 1205.95 L807.68 1225.60 L810.46 1203.07 L810.70 1201.70 L810.70 1253.00Z" fill="#6c99dd"/><path d="M802.64 1199.70 L804.24 1189.86 L806.04 1199.70Z" fill="#dfd36a"/><rect x="797.90" y="1198.90" width="12.80" height="1.7" fill="#9fc0f3"/><clipPath id="c91"><path d="M806.90 1121.50 H818.70 V1182.10 H806.90 Q802.30 1182.10 802.30 1177.50 V1126.10 Q802.30 1121.50 806.90 1121.50Z"/></clipPath><g clip-path="url(#c91)"><linearGradient id="g92" x1="0" y1="0" x2="0" y2="1"><stop offset="0" stop-color="#2c74cf"/><stop offset="1" stop-color="#5d9be0"/></linearGradient><rect x="802.30" y="1121.50" width="8.40" height="26.45" fill="url(#g92)"/><polygon points="802.30,1146.95 804.82,1142.10 807.34,1143.32 810.70,1148.16 810.70,1155.44 802.30,1155.44" fill="#566a88" opacity="1"/><rect x="802.30" y="1153.01" width="8.40" height="29.09" fill="#8d7f74" opacity="1"/><ellipse cx="806.08" cy="1157.86" rx="4.62" ry="6.06" fill="#bfa37a" opacity="1"/><ellipse cx="806.92" cy="1169.98" rx="4.20" ry="10.30" fill="#86808a" opacity="1"/><ellipse cx="803.14" cy="1166.95" rx="1.68" ry="12.12" fill="#a58c6e" opacity="1"/></g></g><path d="M802.50 1118.60 H806.10 Q810.70 1118.60 810.70 1123.20 V1248.40 Q810.70 1253.00 806.10 1253.00 H802.50 Q797.90 1253.00 797.90 1248.40 V1123.20 Q797.90 1118.60 802.50 1118.60Z" fill="none" stroke="#3a70c8" stroke-width="1" opacity="0.75"/><clipPath id="c93"><path d="M840.80 1118.60 H840.80 Q842.60 1118.60 842.60 1120.40 V1251.20 Q842.60 1253.00 840.80 1253.00 H840.80 Q839.00 1253.00 839.00 1251.20 V1120.40 Q839.00 1118.60 840.80 1118.60Z"/></clipPath><path d="M840.80 1117.00 H840.80 Q844.20 1117.00 844.20 1120.40 V1251.20 Q844.20 1254.60 840.80 1254.60 H840.80 Q837.40 1254.60 837.40 1251.20 V1120.40 Q837.40 1117.00 840.80 1117.00Z" fill="#000"/><g clip-path="url(#c93)"><rect x="839.00" y="1118.60" width="3.60" height="134.40" fill="#18458c"/><rect x="839.00" y="1118.60" width="3.60" height="66.50" fill="#2257a8"/><path d="M839.00 1253.00 L839.00 1201.71 L841.83 1227.67 L842.60 1201.70 L842.60 1253.00Z" fill="#6c99dd"/><rect x="841.39" y="1189.26" width="4" height="10.44" fill="url(#pk)"/><rect x="839.00" y="1198.90" width="3.60" height="1.7" fill="#9fc0f3"/></g><path d="M840.80 1118.60 H840.80 Q842.60 1118.60 842.60 1120.40 V1251.20 Q842.60 1253.00 840.80 1253.00 H840.80 Q839.00 1253.00 839.00 1251.20 V1120.40 Q839.00 1118.60 840.80 1118.60Z" fill="none" stroke="#3a70c8" stroke-width="1" opacity="0.75"/><clipPath id="c94"><path d="M852.60 1118.60 H868.90 Q873.50 1118.60 873.50 1123.20 V1248.40 Q873.50 1253.00 868.90 1253.00 H852.60 Q848.00 1253.00 848.00 1248.40 V1123.20 Q848.00 1118.60 852.60 1118.60Z"/></clipPath><path d="M852.40 1117.00 H869.10 Q875.10 1117.00 875.10 1123.00 V1248.60 Q875.10 1254.60 869.10 1254.60 H852.40 Q846.40 1254.60 846.40 1248.60 V1123.00 Q846.40 1117.00 852.40 1117.00Z" fill="#000"/><g clip-path="url(#c94)"><rect x="848.00" y="1118.60" width="25.50" height="134.40" fill="#18458c"/><rect x="848.00" y="1118.60" width="25.50" height="66.50" fill="#2257a8"/><path d="M848.00 1253.00 L848.00 1200.39 L849.35 1213.66 L850.91 1202.50 L852.26 1214.59 L853.63 1201.74 L856.30 1200.50 L859.13 1202.36 L861.83 1202.54 L863.75 1202.72 L865.10 1203.34 L867.61 1219.83 L869.92 1202.10 L872.49 1200.88 L873.50 1201.70 L873.50 1253.00Z" fill="#6c99dd"/><path d="M854.83 1199.70 L856.43 1191.84 L858.23 1199.70Z" fill="#dfd36a"/><rect x="848.00" y="1198.90" width="25.50" height="1.7" fill="#9fc0f3"/><clipPath id="c95"><path d="M857.00 1121.50 H881.50 V1182.10 H857.00 Q852.40 1182.10 852.40 1177.50 V1126.10 Q852.40 1121.50 857.00 1121.50Z"/></clipPath><g clip-path="url(#c95)"><linearGradient id="g96" x1="0" y1="0" x2="0" y2="1"><stop offset="0" stop-color="#2c74cf"/><stop offset="1" stop-color="#5d9be0"/></linearGradient><rect x="852.40" y="1121.50" width="21.10" height="26.45" fill="url(#g96)"/><polygon points="852.40,1146.95 858.73,1142.10 865.06,1143.32 873.50,1148.16 873.50,1155.44 852.40,1155.44" fill="#566a88" opacity="1"/><rect x="852.40" y="1153.01" width="21.10" height="29.09" fill="#8d7f74" opacity="1"/><ellipse cx="861.89" cy="1157.86" rx="11.61" ry="6.06" fill="#bfa37a" opacity="1"/><ellipse cx="864.00" cy="1169.98" rx="10.55" ry="10.30" fill="#86808a" opacity="1"/><ellipse cx="854.51" cy="1166.95" rx="4.22" ry="12.12" fill="#a58c6e" opacity="1"/></g></g><path d="M852.60 1118.60 H868.90 Q873.50 1118.60 873.50 1123.20 V1248.40 Q873.50 1253.00 868.90 1253.00 H852.60 Q848.00 1253.00 848.00 1248.40 V1123.20 Q848.00 1118.60 852.60 1118.60Z" fill="none" stroke="#3a70c8" stroke-width="1" opacity="0.75"/><clipPath id="c97"><path d="M881.95 1118.60 H881.95 Q886.00 1118.60 886.00 1122.65 V1248.95 Q886.00 1253.00 881.95 1253.00 H881.95 Q877.90 1253.00 877.90 1248.95 V1122.65 Q877.90 1118.60 881.95 1118.60Z"/></clipPath><path d="M881.95 1117.00 H881.95 Q887.60 1117.00 887.60 1122.65 V1248.95 Q887.60 1254.60 881.95 1254.60 H881.95 Q876.30 1254.60 876.30 1248.95 V1122.65 Q876.30 1117.00 881.95 1117.00Z" fill="#000"/><g clip-path="url(#c97)"><rect x="877.90" y="1118.60" width="8.10" height="134.40" fill="#18458c"/><rect x="877.90" y="1118.60" width="8.10" height="66.50" fill="#2257a8"/><path d="M877.90 1253.00 L877.90 1199.89 L880.42 1202.78 L882.68 1203.89 L885.17 1199.82 L886.00 1201.70 L886.00 1253.00Z" fill="#6c99dd"/><path d="M880.01 1199.70 L881.61 1190.54 L883.41 1199.70Z" fill="#dfd36a"/><rect x="877.90" y="1198.90" width="8.10" height="1.7" fill="#9fc0f3"/><clipPath id="c98"><path d="M886.90 1121.50 H894.00 V1182.10 H886.90 Q882.30 1182.10 882.30 1177.50 V1126.10 Q882.30 1121.50 886.90 1121.50Z"/></clipPath><g clip-path="url(#c98)"><linearGradient id="g99" x1="0" y1="0" x2="0" y2="1"><stop offset="0" stop-color="#2c74cf"/><stop offset="1" stop-color="#5d9be0"/></linearGradient><rect x="882.30" y="1121.50" width="3.70" height="26.45" fill="url(#g99)"/><polygon points="882.30,1146.95 883.41,1142.10 884.52,1143.32 886.00,1148.16 886.00,1155.44 882.30,1155.44" fill="#566a88" opacity="1"/><rect x="882.30" y="1153.01" width="3.70" height="29.09" fill="#8d7f74" opacity="1"/><ellipse cx="883.96" cy="1157.86" rx="2.04" ry="6.06" fill="#bfa37a" opacity="1"/><ellipse cx="884.34" cy="1169.98" rx="1.85" ry="10.30" fill="#86808a" opacity="1"/><ellipse cx="882.67" cy="1166.95" rx="0.74" ry="12.12" fill="#a58c6e" opacity="1"/></g></g><path d="M881.95 1118.60 H881.95 Q886.00 1118.60 886.00 1122.65 V1248.95 Q886.00 1253.00 881.95 1253.00 H881.95 Q877.90 1253.00 877.90 1248.95 V1122.65 Q877.90 1118.60 881.95 1118.60Z" fill="none" stroke="#3a70c8" stroke-width="1" opacity="0.75"/><clipPath id="c100"><path d="M2067.50 1118.60 H2135.60 Q2140.20 1118.60 2140.20 1123.20 V1248.40 Q2140.20 1253.00 2135.60 1253.00 H2067.50 Q2062.90 1253.00 2062.90 1248.40 V1123.20 Q2062.90 1118.60 2067.50 1118.60Z"/></clipPath><path d="M2067.30 1117.00 H2135.80 Q2141.80 1117.00 2141.80 1123.00 V1248.60 Q2141.80 1254.60 2135.80 1254.60 H2067.30 Q2061.30 1254.60 2061.30 1248.60 V1123.00 Q2061.30 1117.00 2067.30 1117.00Z" fill="#000"/><g clip-path="url(#c100)"><rect x="2062.90" y="1118.60" width="77.30" height="134.40" fill="#18458c"/><rect x="2062.90" y="1118.60" width="77.30" height="66.90" fill="#2257a8"/><path d="M2062.90 1253.00 L2062.90 1211.82 L2065.34 1202.40 L2067.10 1210.29 L2068.86 1200.32 L2070.72 1217.38 L2073.34 1202.47 L2076.17 1202.41 L2077.73 1203.85 L2079.40 1231.68 L2081.92 1235.44 L2084.12 1205.00 L2085.57 1203.67 L2088.07 1215.10 L2089.96 1207.36 L2092.13 1234.80 L2094.44 1200.61 L2096.69 1202.52 L2098.05 1202.19 L2100.74 1211.36 L2102.55 1217.08 L2104.27 1205.15 L2106.59 1202.13 L2108.32 1203.41 L2110.61 1204.00 L2113.07 1201.49 L2114.74 1201.13 L2117.57 1200.76 L2119.92 1202.63 L2121.46 1204.46 L2123.20 1229.82 L2124.95 1201.96 L2126.27 1201.85 L2127.93 1201.28 L2129.26 1219.54 L2130.57 1226.06 L2132.99 1202.69 L2135.65 1202.71 L2138.35 1202.44 L2140.02 1202.45 L2140.20 1202.10 L2140.20 1253.00Z" fill="#6c99dd"/><rect x="2083.16" y="1188.39" width="4" height="11.71" fill="url(#pk)"/><path d="M2127.80 1200.10 L2129.40 1193.43 L2131.20 1200.10Z" fill="#dfd36a"/><rect x="2093.03" y="1188.26" width="4" height="11.84" fill="url(#pk)"/><rect x="2075.90" y="1186.76" width="4" height="13.34" fill="url(#pk)"/><path d="M2098.84 1200.10 L2100.44 1195.88 L2102.24 1200.10Z" fill="#dfd36a"/><rect x="2062.90" y="1199.30" width="77.30" height="1.7" fill="#9fc0f3"/><clipPath id="c101"><path d="M2071.90 1121.50 H2148.20 V1182.50 H2071.90 Q2067.30 1182.50 2067.30 1177.90 V1126.10 Q2067.30 1121.50 2071.90 1121.50Z"/></clipPath><g clip-path="url(#c101)"><linearGradient id="g102" x1="0" y1="0" x2="0" y2="1"><stop offset="0" stop-color="#c9dcee"/><stop offset="1" stop-color="#e6e4d8"/></linearGradient><rect x="2067.30" y="1121.50" width="72.90" height="31.50" fill="url(#g102)"/><rect x="2067.30" y="1148.95" width="72.90" height="33.55" fill="#b9a88c" opacity="1"/><polygon points="2074.59,1127.60 2103.75,1121.50 2132.91,1130.65 2118.33,1142.85 2100.11,1139.80 2096.46,1182.50 2089.17,1182.50 2089.17,1139.80" fill="#6d6442" opacity="1"/><ellipse cx="2107.39" cy="1152.00" rx="14.58" ry="7.32" fill="#a07a5c" opacity="1"/><ellipse cx="2127.08" cy="1153.22" rx="7.29" ry="8.54" fill="#6a2f1c" opacity="1"/><polygon points="2115.41,1164.20 2138.74,1161.76 2140.20,1182.50 2111.04,1182.50" fill="#20282a" opacity="1"/><ellipse cx="2127.08" cy="1155.66" rx="3.64" ry="4.27" fill="#e3b9a0" opacity="1"/></g></g><path d="M2067.50 1118.60 H2135.60 Q2140.20 1118.60 2140.20 1123.20 V1248.40 Q2140.20 1253.00 2135.60 1253.00 H2067.50 Q2062.90 1253.00 2062.90 1248.40 V1123.20 Q2062.90 1118.60 2067.50 1118.60Z" fill="none" stroke="#3a70c8" stroke-width="1" opacity="0.75"/><clipPath id="c103"><path d="M2235.60 1118.60 H2237.40 Q2242.00 1118.60 2242.00 1123.20 V1248.40 Q2242.00 1253.00 2237.40 1253.00 H2235.60 Q2231.00 1253.00 2231.00 1248.40 V1123.20 Q2231.00 1118.60 2235.60 1118.60Z"/></clipPath><path d="M2235.40 1117.00 H2237.60 Q2243.60 1117.00 2243.60 1123.00 V1248.60 Q2243.60 1254.60 2237.60 1254.60 H2235.40 Q2229.40 1254.60 2229.40 1248.60 V1123.00 Q2229.40 1117.00 2235.40 1117.00Z" fill="#000"/><g clip-path="url(#c103)"><rect x="2231.00" y="1118.60" width="11.00" height="134.40" fill="#18458c"/><rect x="2231.00" y="1118.60" width="11.00" height="67.50" fill="#2257a8"/><path d="M2231.00 1253.00 L2231.00 1202.77 L2233.36 1204.28 L2235.18 1225.38 L2237.94 1204.33 L2239.58 1204.51 L2241.20 1226.30 L2242.00 1202.70 L2242.00 1253.00Z" fill="#6c99dd"/><path d="M2233.82 1200.70 L2235.42 1191.47 L2237.22 1200.70Z" fill="#dfd36a"/><rect x="2231.00" y="1199.90" width="11.00" height="1.7" fill="#9fc0f3"/></g><path d="M2235.60 1118.60 H2237.40 Q2242.00 1118.60 2242.00 1123.20 V1248.40 Q2242.00 1253.00 2237.40 1253.00 H2235.60 Q2231.00 1253.00 2231.00 1248.40 V1123.20 Q2231.00 1118.60 2235.60 1118.60Z" fill="none" stroke="#3a70c8" stroke-width="1" opacity="0.75"/></svg>
<div class="t " style="left:922.20px;top:764.90px;font-size:13.00px;font-weight:400;color:#fff;letter-spacing:0.000px;">L</div>
<div class="t " style="left:891.50px;top:765.04px;font-size:12.00px;font-weight:400;color:#9a7fd0;letter-spacing:0.000px;">A</div>
<div class="t " style="left:798.50px;top:905.44px;font-size:12.00px;font-weight:400;color:#9a7fd0;letter-spacing:0.000px;">A</div>
<div class="t " style="left:829.80px;top:906.00px;font-size:13.00px;font-weight:700;color:#e4dcf6;letter-spacing:-0.617px;">...</div>
<div class="t " style="left:1233.60px;top:982.35px;font-size:14.00px;font-weight:400;color:#e8f0fc;letter-spacing:-0.260px;">N...</div>
<svg style="position:absolute;left:0;top:0" width="2560" height="1829" viewBox="0 0 2560 1829"><path d="M776.4 1257.1999999999998 H1195.0 Q1200.4 1257.1999999999998 1200.4 1262.6 V1389.0 Q1200.4 1394.4 1195.0 1394.4 H776.4Z" fill="#000"/><clipPath id="au1"><path d="M776.4 1258.6 H1195.0 Q1199.0 1258.6 1199.0 1262.6 V1389.0 Q1199.0 1393.0 1195.0 1393.0 H776.4Z"/></clipPath><g clip-path="url(#au1)"><rect x="776.4" y="1258.6" width="422.6" height="134.4000000000001" fill="#5e7a22"/><rect x="776.4" y="1325.8" width="422.6" height="67.20000000000005" fill="#4b650f"/><path d="M776.4 1393.0 L776.40 1374.25 L778.83 1367.08 L780.95 1372.83 L783.54 1362.34 L785.71 1368.02 L787.47 1372.69 L789.42 1365.88 L790.93 1361.24 L792.67 1370.41 L794.14 1355.58 L796.65 1358.39 L798.97 1370.79 L800.86 1365.75 L802.44 1355.76 L804.39 1369.64 L807.02 1369.68 L809.81 1365.87 L812.04 1367.41 L814.16 1369.09 L815.62 1357.52 L817.37 1359.62 L819.08 1355.04 L821.82 1360.48 L824.37 1364.30 L826.86 1370.49 L828.98 1359.64 L830.68 1357.51 L833.41 1368.41 L835.36 1368.13 L837.34 1356.78 L839.32 1372.99 L840.86 1364.22 L843.75 1369.08 L845.88 1368.60 L848.41 1373.71 L850.72 1369.54 L853.05 1375.08 L854.71 1373.64 L857.50 1374.23 L859.79 1375.18 L861.35 1377.47 L863.97 1367.67 L865.93 1370.04 L868.35 1365.43 L871.18 1375.68 L874.07 1364.50 L876.35 1366.71 L878.49 1376.79 L880.26 1367.12 L881.90 1379.79 L884.51 1369.65 L886.64 1368.16 L888.11 1378.35 L889.95 1376.22 L891.61 1379.61 L893.51 1366.29 L896.39 1369.66 L898.51 1377.60 L901.34 1373.40 L903.84 1378.34 L905.56 1366.24 L908.15 1364.72 L910.45 1373.44 L912.72 1364.62 L914.58 1370.85 L916.40 1365.75 L917.81 1367.26 L920.64 1375.03 L922.93 1366.99 L925.61 1367.57 L927.40 1370.16 L930.24 1359.51 L931.84 1372.42 L933.38 1372.39 L935.45 1371.48 L938.15 1363.79 L939.74 1365.76 L941.62 1366.26 L943.35 1370.10 L945.03 1367.61 L947.49 1364.63 L948.96 1361.35 L951.68 1359.78 L954.26 1370.03 L956.36 1369.85 L958.90 1369.19 L961.37 1368.54 L963.82 1367.99 L965.28 1367.11 L967.14 1357.08 L968.98 1365.68 L971.21 1356.30 L972.76 1364.39 L974.92 1361.97 L977.77 1369.71 L980.22 1366.97 L982.46 1372.61 L985.08 1357.90 L987.01 1371.39 L989.90 1373.93 L991.42 1374.43 L994.04 1365.16 L996.11 1368.51 L997.54 1368.36 L999.61 1371.16 L1001.59 1368.42 L1003.33 1373.61 L1005.38 1370.84 L1007.84 1358.12 L1010.32 1365.87 L1012.08 1366.70 L1014.21 1360.65 L1017.05 1369.35 L1019.17 1361.64 L1021.65 1350.90 L1024.21 1356.33 L1026.75 1354.25 L1029.44 1352.42 L1031.87 1360.89 L1034.64 1357.63 L1036.96 1347.15 L1039.81 1342.38 L1041.22 1358.08 L1043.09 1356.65 L1044.70 1353.41 L1046.22 1358.58 L1049.04 1349.71 L1051.13 1362.57 L1053.97 1352.18 L1055.67 1360.75 L1058.04 1354.38 L1059.83 1348.22 L1061.71 1364.80 L1064.38 1367.51 L1066.80 1367.94 L1069.10 1367.68 L1071.07 1353.39 L1073.17 1366.18 L1075.49 1369.72 L1077.15 1368.21 L1078.96 1371.82 L1081.80 1373.81 L1084.42 1355.75 L1086.88 1373.62 L1089.03 1373.09 L1091.34 1360.58 L1093.10 1372.16 L1095.32 1370.66 L1097.18 1364.03 L1099.92 1364.49 L1101.52 1354.32 L1104.16 1359.31 L1105.63 1364.93 L1107.64 1357.26 L1109.37 1350.53 L1112.04 1346.26 L1114.76 1363.25 L1117.04 1362.15 L1119.79 1348.96 L1122.33 1366.33 L1123.82 1366.37 L1126.13 1368.10 L1128.23 1369.07 L1130.14 1370.92 L1132.07 1371.90 L1134.41 1372.17 L1135.92 1374.11 L1138.08 1374.17 L1139.77 1375.50 L1141.26 1376.45 L1143.40 1376.32 L1145.78 1377.97 L1147.33 1377.34 L1149.54 1378.85 L1151.98 1379.12 L1154.17 1380.72 L1156.81 1381.23 L1158.27 1381.39 L1160.47 1381.51 L1162.13 1381.77 L1164.27 1383.06 L1166.94 1382.64 L1169.70 1383.35 L1171.43 1383.51 L1174.18 1384.34 L1176.95 1384.11 L1178.93 1384.45 L1181.74 1385.05 L1183.15 1385.89 L1185.47 1385.79 L1188.01 1386.02 L1189.65 1385.77 L1191.85 1386.07 L1193.56 1386.06 L1195.80 1386.60 L1198.31 1392.37 L1199.0 1393.0Z" fill="#a2bc66"/><path d="M776.4 1347 H1000 Q1006 1345 1009 1343 T1020 1340.6 H1199.0" fill="none" stroke="#eef7b8" stroke-width="1.5"/></g><path d="M1120.0 1397.1999999999998 H2242.0 V1518.3 H1114.6 V1402.6 Q1114.6 1397.1999999999998 1120.0 1397.1999999999998Z" fill="#000"/><clipPath id="au2"><path d="M1120.0 1398.6 H2242.0 V1518.3 H1116.0 V1402.6 Q1116.0 1398.6 1120.0 1398.6Z"/></clipPath><g clip-path="url(#au2)"><rect x="1116.0" y="1398.6" width="1126.0" height="119.70000000000005" fill="#617c23"/><rect x="1116.0" y="1466.2" width="1126.0" height="52.09999999999991" fill="#4b650f"/><path d="M1116.0 1518.3 C1128 1490 1150 1470 1182 1466.2 H1116.0 Z" fill="#3e540c"/><path d="M1236 1518.3 L1236.00 1518.30 L1237.87 1517.52 L1239.92 1515.78 L1241.73 1515.96 L1243.07 1514.22 L1245.18 1513.83 L1247.41 1510.82 L1248.86 1504.27 L1250.89 1501.50 L1252.91 1506.58 L1254.55 1501.52 L1256.75 1494.08 L1259.10 1492.17 L1260.75 1493.40 L1262.58 1489.48 L1264.25 1489.25 L1266.20 1483.07 L1268.65 1488.99 L1271.07 1491.27 L1273.40 1496.02 L1275.22 1485.41 L1276.53 1489.38 L1278.64 1487.68 L1281.34 1482.47 L1282.96 1489.87 L1285.40 1485.48 L1286.77 1483.79 L1289.23 1485.30 L1291.18 1483.53 L1293.35 1486.36 L1295.63 1490.89 L1297.98 1482.56 L1299.63 1488.84 L1302.04 1491.40 L1303.62 1489.63 L1306.16 1478.71 L1307.89 1485.28 L1309.40 1488.65 L1311.07 1485.74 L1312.78 1480.47 L1314.37 1485.63 L1316.67 1484.55 L1318.93 1488.21 L1321.14 1490.95 L1322.71 1490.21 L1324.09 1499.05 L1325.97 1493.50 L1328.50 1502.97 L1329.83 1504.91 L1331.97 1500.41 L1333.97 1509.48 L1335.79 1503.37 L1337.98 1499.37 L1339.77 1505.45 L1341.96 1500.59 L1343.98 1497.75 L1346.38 1496.31 L1348.58 1500.57 L1350.19 1502.56 L1352.31 1496.63 L1354.29 1497.21 L1356.71 1498.89 L1358.47 1497.67 L1359.84 1497.40 L1361.35 1503.17 L1363.84 1497.72 L1365.29 1501.74 L1366.76 1499.88 L1369.12 1497.55 L1371.40 1501.81 L1372.82 1497.94 L1374.96 1496.69 L1376.54 1502.40 L1378.99 1501.53 L1381.22 1496.28 L1382.94 1498.78 L1385.52 1499.26 L1387.92 1496.36 L1389.92 1508.05 L1392.30 1502.45 L1393.85 1508.75 L1395.26 1509.54 L1397.65 1504.82 L1399.69 1497.20 L1401.47 1503.84 L1403.69 1499.36 L1406.11 1494.84 L1407.81 1494.14 L1409.57 1502.72 L1411.92 1492.39 L1413.65 1491.18 L1415.88 1493.59 L1417.51 1491.81 L1420.02 1491.15 L1422.28 1493.03 L1424.25 1491.05 L1426.06 1486.34 L1428.05 1487.32 L1429.81 1485.97 L1432.39 1488.54 L1433.97 1484.62 L1435.57 1495.76 L1437.34 1491.92 L1438.96 1491.53 L1440.89 1492.89 L1442.93 1487.12 L1444.63 1490.19 L1447.09 1491.65 L1449.06 1486.09 L1451.61 1494.17 L1453.11 1491.00 L1455.50 1490.77 L1458.15 1494.34 L1459.79 1496.62 L1461.55 1485.84 L1464.22 1483.33 L1466.07 1489.17 L1467.75 1484.05 L1470.16 1488.65 L1472.51 1491.60 L1475.03 1493.42 L1477.48 1494.97 L1479.48 1489.50 L1481.50 1494.49 L1483.71 1484.92 L1485.94 1483.05 L1487.43 1484.06 L1488.92 1480.60 L1490.35 1484.78 L1492.72 1480.47 L1494.91 1480.68 L1496.92 1482.27 L1498.85 1488.29 L1500.72 1483.18 L1503.04 1480.13 L1504.83 1487.68 L1507.30 1492.84 L1508.96 1486.08 L1510.70 1488.00 L1513.18 1481.90 L1514.97 1494.93 L1516.76 1490.32 L1519.21 1486.76 L1521.60 1486.09 L1523.38 1488.08 L1525.16 1489.53 L1526.50 1499.01 L1528.04 1495.90 L1530.12 1501.99 L1532.60 1498.73 L1534.14 1501.16 L1535.58 1504.40 L1537.31 1493.65 L1538.91 1495.36 L1541.32 1502.94 L1543.66 1500.59 L1545.31 1494.42 L1547.03 1495.86 L1549.56 1505.79 L1550.97 1505.13 L1553.56 1496.25 L1555.83 1501.60 L1557.39 1498.64 L1560.06 1503.43 L1562.64 1492.22 L1564.94 1496.62 L1567.51 1492.82 L1569.58 1492.46 L1572.01 1500.47 L1573.35 1494.28 L1574.85 1498.96 L1577.03 1492.09 L1579.66 1505.15 L1581.58 1497.96 L1583.39 1498.48 L1585.25 1495.97 L1587.60 1493.00 L1589.31 1501.21 L1590.93 1492.12 L1593.51 1492.76 L1595.38 1494.33 L1597.05 1494.80 L1599.10 1492.42 L1601.15 1492.03 L1602.56 1493.14 L1604.19 1494.66 L1605.90 1502.59 L1608.12 1496.43 L1610.50 1499.82 L1612.24 1498.64 L1614.59 1497.34 L1616.94 1498.92 L1619.54 1493.77 L1621.78 1505.39 L1623.82 1503.93 L1625.25 1500.49 L1626.92 1500.97 L1628.82 1497.35 L1630.46 1493.69 L1632.98 1496.34 L1635.16 1484.22 L1636.87 1494.21 L1638.45 1486.39 L1640.73 1485.98 L1642.80 1494.25 L1645.20 1482.49 L1647.10 1484.68 L1649.36 1488.64 L1651.02 1488.94 L1652.93 1480.90 L1654.63 1484.11 L1656.21 1488.56 L1658.90 1493.46 L1661.08 1491.98 L1663.07 1487.16 L1665.62 1481.08 L1667.43 1484.08 L1669.20 1484.79 L1670.58 1488.71 L1673.22 1482.46 L1674.78 1483.58 L1677.20 1482.38 L1679.58 1481.88 L1681.71 1489.45 L1683.95 1481.22 L1686.59 1491.80 L1688.57 1492.03 L1690.71 1481.84 L1692.56 1491.28 L1694.51 1480.99 L1696.05 1482.00 L1698.17 1488.10 L1700.09 1484.46 L1702.74 1483.68 L1704.98 1482.17 L1707.00 1481.94 L1708.46 1483.61 L1709.92 1484.17 L1712.14 1486.57 L1714.55 1485.49 L1715.97 1489.56 L1717.83 1489.99 L1720.50 1486.19 L1722.15 1483.87 L1724.14 1483.40 L1725.59 1484.39 L1727.80 1491.19 L1730.17 1492.51 L1732.59 1484.57 L1734.79 1481.05 L1737.21 1489.21 L1738.88 1485.42 L1740.56 1490.80 L1742.46 1490.53 L1745.05 1492.78 L1746.88 1487.82 L1749.51 1499.68 L1751.07 1492.25 L1753.47 1500.82 L1755.17 1496.04 L1757.82 1492.25 L1759.50 1499.45 L1762.07 1504.77 L1764.03 1501.71 L1766.69 1494.52 L1768.31 1493.72 L1770.70 1492.60 L1772.77 1504.42 L1774.35 1498.85 L1776.39 1505.17 L1778.41 1496.69 L1780.98 1501.01 L1782.48 1501.96 L1784.34 1505.22 L1786.99 1496.72 L1788.87 1493.38 L1790.56 1493.18 L1792.09 1500.61 L1793.46 1498.36 L1795.60 1500.70 L1797.69 1504.37 L1799.39 1492.27 L1801.50 1493.83 L1804.19 1502.65 L1806.45 1499.14 L1808.09 1491.92 L1809.93 1488.59 L1811.75 1488.94 L1813.97 1482.63 L1816.02 1482.83 L1818.68 1487.93 L1820.80 1484.67 L1823.09 1490.57 L1825.67 1488.39 L1827.34 1489.17 L1828.71 1491.18 L1830.44 1490.73 L1831.93 1488.66 L1833.46 1482.29 L1835.13 1493.13 L1836.98 1487.48 L1839.38 1495.74 L1841.05 1490.29 L1843.44 1492.09 L1845.23 1486.77 L1847.62 1483.95 L1849.60 1489.25 L1852.10 1483.88 L1854.33 1483.61 L1855.85 1486.80 L1858.05 1489.36 L1860.68 1483.12 L1862.72 1486.85 L1864.39 1494.50 L1865.89 1484.05 L1867.24 1489.42 L1869.46 1483.67 L1872.06 1489.27 L1873.64 1494.99 L1876.13 1484.65 L1878.64 1482.85 L1880.43 1485.99 L1883.07 1484.48 L1884.91 1483.51 L1887.35 1483.29 L1889.84 1484.98 L1891.91 1493.68 L1893.58 1487.57 L1895.77 1488.34 L1897.65 1489.46 L1899.39 1483.05 L1900.70 1488.79 L1902.80 1492.20 L1904.32 1489.92 L1906.26 1487.52 L1908.72 1487.43 L1910.63 1489.45 L1912.14 1493.61 L1914.16 1482.31 L1916.14 1495.06 L1918.81 1486.09 L1920.48 1494.88 L1922.18 1482.23 L1923.82 1486.71 L1926.06 1482.43 L1927.83 1490.88 L1929.61 1483.22 L1931.91 1486.23 L1934.18 1486.91 L1936.62 1487.32 L1939.29 1492.46 L1941.60 1487.00 L1943.75 1485.43 L1945.16 1493.84 L1947.59 1491.60 L1950.09 1487.92 L1952.78 1486.75 L1955.45 1482.51 L1957.28 1488.23 L1959.73 1487.45 L1962.14 1485.39 L1964.38 1492.15 L1966.52 1482.23 L1968.74 1482.19 L1970.47 1482.74 L1972.84 1483.16 L1975.14 1482.46 L1976.73 1490.30 L1979.33 1482.46 L1981.49 1485.70 L1983.66 1482.49 L1984.98 1482.50 L1987.53 1487.00 L1989.69 1483.69 L1991.95 1498.17 L1993.52 1498.08 L1996.01 1505.77 L1998.10 1500.00 L1999.89 1502.41 L2001.62 1499.64 L2003.80 1506.53 L2006.20 1493.17 L2007.75 1495.74 L2009.60 1501.25 L2011.27 1498.60 L2013.20 1495.11 L2015.40 1496.75 L2018.07 1493.40 L2020.63 1499.87 L2022.57 1493.05 L2024.78 1502.83 L2026.57 1501.17 L2028.61 1493.13 L2031.12 1495.19 L2033.09 1502.05 L2035.61 1503.80 L2037.43 1503.67 L2038.94 1498.49 L2040.85 1504.03 L2043.16 1500.24 L2045.59 1495.62 L2047.52 1493.21 L2049.31 1494.88 L2051.63 1496.84 L2054.21 1504.10 L2056.14 1498.17 L2058.06 1503.52 L2059.56 1511.10 L2061.37 1501.60 L2063.07 1500.78 L2064.76 1508.64 L2066.16 1500.67 L2068.29 1502.24 L2070.05 1502.31 L2071.43 1499.97 L2073.34 1506.99 L2075.25 1501.34 L2077.46 1499.63 L2079.53 1498.79 L2081.70 1503.13 L2083.91 1509.04 L2086.32 1511.35 L2087.95 1510.63 L2089.87 1500.70 L2091.81 1509.97 L2094.45 1507.70 L2096.17 1498.16 L2097.75 1505.31 L2100.04 1497.83 L2101.34 1511.49 L2103.11 1497.71 L2105.07 1498.02 L2107.51 1502.98 L2109.66 1510.09 L2111.14 1498.99 L2113.54 1504.21 L2115.45 1498.10 L2117.62 1502.53 L2120.25 1501.97 L2122.92 1490.34 L2124.26 1500.24 L2125.91 1494.95 L2127.86 1503.12 L2129.78 1490.36 L2131.37 1501.70 L2133.81 1490.40 L2136.46 1492.84 L2138.78 1495.61 L2141.28 1494.46 L2142.62 1495.50 L2145.11 1493.36 L2147.57 1493.85 L2149.37 1492.68 L2150.99 1494.63 L2153.63 1496.03 L2156.01 1490.73 L2157.82 1495.86 L2159.66 1489.68 L2162.18 1490.32 L2164.40 1503.27 L2166.11 1491.63 L2167.87 1495.26 L2170.54 1490.44 L2172.18 1501.55 L2173.87 1497.30 L2176.18 1489.67 L2177.52 1498.93 L2180.11 1497.78 L2182.06 1490.12 L2184.10 1490.18 L2185.85 1489.76 L2187.87 1494.14 L2189.57 1491.13 L2190.96 1489.74 L2192.44 1503.30 L2193.79 1498.16 L2195.73 1495.98 L2197.45 1503.27 L2199.88 1493.27 L2201.79 1501.98 L2203.31 1501.11 L2205.47 1495.65 L2207.52 1496.03 L2208.95 1491.41 L2210.74 1491.13 L2212.16 1498.09 L2214.05 1498.60 L2215.90 1502.46 L2217.54 1494.81 L2219.43 1499.52 L2220.92 1495.32 L2222.85 1496.58 L2224.48 1495.27 L2227.16 1490.13 L2229.82 1502.98 L2231.75 1489.99 L2233.74 1502.90 L2235.04 1498.82 L2237.43 1490.22 L2239.58 1490.47 L2241.02 1494.94 L2242.0 1518.3Z" fill="#a2bc66"/><path d="M1116.00 1498.40 L1241.50 1498.40 L1247.00 1489.00 L1250.00 1486.37 L1265.40 1477.57 L1311.59 1472.29 L1329.19 1490.77 L1403.10 1490.77 L1423.78 1479.77 L1509.57 1473.61 L1531.57 1486.37 L1631.87 1486.37 L1636.27 1475.37 L1742.74 1475.37 L1753.74 1486.37 L1802.13 1486.37 L1814.45 1476.69 L1989.11 1476.69 L1996.59 1487.25 L2048.50 1487.25 L2052.90 1492.09 L2114.50 1492.09 L2117.58 1484.17 L2237.68 1484.17" fill="none" stroke="#eef7b8" stroke-width="1.4" stroke-linejoin="round"/></g><path d="M1142.6 1409.6 V1424.4 M1142.6 1409.6 L1148.8 1407.8 V1411.4 L1142.6 1413.2" fill="none" stroke="#b9c88a" stroke-width="1.6" stroke-linejoin="round"/><ellipse cx="1139.8" cy="1424.6" rx="3.2" ry="2.4" fill="#b9c88a"/><path d="M1133.2 1404.6 l1 2.6 2.6 1 -2.6 1 -1 2.6 -1 -2.6 -2.6 -1 2.6 -1Z M1128.2 1411.4 l.6 1.5 1.5 .6 -1.5 .6 -.6 1.5 -.6 -1.5 -1.5 -.6 1.5 -.6Z" fill="#9fb068"/></svg>
<div class="t " style="left:1158.00px;top:1408.46px;font-size:16.00px;font-weight:400;color:#f3f6e6;letter-spacing:0.001px;">Quickest Spark</div>
<svg style="position:absolute;left:0;top:0" width="2560" height="1829" viewBox="0 0 2560 1829"><rect x="1065.45" y="428" width="1.9" height="1090.4" fill="#b4b4b6"/><path d="M1058.4 388.4 H1073.9 Q1077.5 388.4 1077.5 392 V419.4 L1066.1 430.6 L1054.8 419.4 V392 Q1054.8 388.4 1058.4 388.4Z" fill="#636366" stroke="#c9c9cb" stroke-width="1.2" stroke-linejoin="round"/></svg>
<div style="position:absolute;left:2136.60px;top:1184.00px;width:93.80px;height:124.00px;background:#232325;border-radius:15px;box-shadow:0 0 0 1px rgba(0,0,0,.5)"></div>
<div style="position:absolute;left:2158.60px;top:1190.20px;width:49.40px;height:7.40px;background:#6a6a6e;border-radius:3.7px"></div>
<svg style="position:absolute;left:0;top:0" width="2560" height="1829" viewBox="0 0 2560 1829"><circle cx="2183.7" cy="1252.6" r="27.4" fill="#0d0d0e"/><path d="M2204.10 1252.60 L2208.10 1252.60" stroke="#5d5d61" stroke-width="1.3" stroke-linecap="round"/><path d="M2201.37 1262.80 L2204.83 1264.80" stroke="#5d5d61" stroke-width="1.3" stroke-linecap="round"/><path d="M2193.90 1270.27 L2195.90 1273.73" stroke="#5d5d61" stroke-width="1.3" stroke-linecap="round"/><path d="M2183.70 1273.00 L2183.70 1277.00" stroke="#5d5d61" stroke-width="1.3" stroke-linecap="round"/><path d="M2173.50 1270.27 L2171.50 1273.73" stroke="#5d5d61" stroke-width="1.3" stroke-linecap="round"/><path d="M2166.03 1262.80 L2162.57 1264.80" stroke="#5d5d61" stroke-width="1.3" stroke-linecap="round"/><path d="M2166.20 1252.60 L2159.30 1252.60" stroke="#fff" stroke-width="1.8" stroke-linecap="round"/><path d="M2166.03 1242.40 L2162.57 1240.40" stroke="#5d5d61" stroke-width="1.3" stroke-linecap="round"/><path d="M2173.50 1234.93 L2171.50 1231.47" stroke="#5d5d61" stroke-width="1.3" stroke-linecap="round"/><path d="M2183.70 1232.20 L2183.70 1228.20" stroke="#5d5d61" stroke-width="1.3" stroke-linecap="round"/><path d="M2193.90 1234.93 L2195.90 1231.47" stroke="#5d5d61" stroke-width="1.3" stroke-linecap="round"/><path d="M2201.37 1242.40 L2204.83 1240.40" stroke="#5d5d61" stroke-width="1.3" stroke-linecap="round"/><path d="M2179.4 1243.6 H2188 Q2189.2 1243.6 2189.2 1244.8 V1256.6 L2183.7 1262.6 L2178.2 1256.6 V1244.8 Q2178.2 1243.6 2179.4 1243.6Z" fill="#fff"/></svg>
<div style="position:absolute;left:1267.60px;top:321.00px;width:940.20px;height:639.00px;background:#1c1c1e;border-radius:22px;box-shadow:0 0 0 1.3px #2c2c2e, 0 6px 24px rgba(0,0,0,.5)"></div>
<div style="position:absolute;left:1714.20px;top:328.80px;width:47.40px;height:6.60px;background:#77777b;border-radius:3.3px"></div>
<div style="position:absolute;left:1486.40px;top:313.40px;width:40.00px;height:1.40px;background:#3c3c3f"></div>
<div style="position:absolute;left:1486.40px;top:317.60px;width:40.00px;height:1.40px;background:#3c3c3f"></div>
<svg style="position:absolute;left:0;top:0" width="2560" height="1000" viewBox="0 0 2560 1000"><defs><linearGradient id="sky" x1="0" y1="0" x2="0" y2="1"><stop offset="0" stop-color="#c8d5e8"/><stop offset="0.3" stop-color="#b0c1db"/><stop offset="0.62" stop-color="#a7bad7"/><stop offset="0.84" stop-color="#bdcbdd"/><stop offset="1" stop-color="#d4d7db"/></linearGradient><linearGradient id="skyr" x1="0" y1="0" x2="1" y2="0"><stop offset="0" stop-color="#e0e8f3" stop-opacity="0.62"/><stop offset="0.45" stop-color="#c6d3e6" stop-opacity="0.12"/><stop offset="1" stop-color="#93afd9" stop-opacity="0.55"/></linearGradient><radialGradient id="dome" cx="0.45" cy="0.12" r="1.0"><stop offset="0" stop-color="#d8bea7"/><stop offset="0.45" stop-color="#c9ad96"/><stop offset="0.8" stop-color="#b69a85"/><stop offset="1" stop-color="#a18874"/></radialGradient><linearGradient id="bigl" x1="0.1" y1="0" x2="0.9" y2="1"><stop offset="0" stop-color="#b5a797"/><stop offset="0.5" stop-color="#a69786"/><stop offset="1" stop-color="#8a7b6c"/></linearGradient><radialGradient id="b2" cx="0.4" cy="0.2" r="0.95"><stop offset="0" stop-color="#cfb696"/><stop offset="0.6" stop-color="#bfa587"/><stop offset="1" stop-color="#9d866e"/></radialGradient><linearGradient id="fld" x1="0" y1="0" x2="1" y2="0"><stop offset="0" stop-color="#9b917e"/><stop offset="0.55" stop-color="#a89a84"/><stop offset="0.78" stop-color="#b8a77f"/><stop offset="1" stop-color="#c4b17c"/></linearGradient><filter id="grain" x="0" y="0" width="1" height="1"><feTurbulence type="fractalNoise" baseFrequency="0.4" numOctaves="2" seed="4" result="n"/><feColorMatrix in="n" type="matrix" values="0 0 0 0 0.3  0 0 0 0 0.25  0 0 0 0 0.2  1.1 1.1 0 0 -0.92"/><feComposite operator="in" in2="SourceGraphic"/></filter><filter id="grainl" x="0" y="0" width="1" height="1"><feTurbulence type="fractalNoise" baseFrequency="0.3" numOctaves="2" seed="9" result="n"/><feColorMatrix in="n" type="matrix" values="0 0 0 0 0.93  0 0 0 0 0.88  0 0 0 0 0.8  0 1.2 1.2 0 -0.98"/><feComposite operator="in" in2="SourceGraphic"/></filter><filter id="mott" x="0" y="0" width="1" height="1"><feTurbulence type="fractalNoise" baseFrequency="0.035 0.05" numOctaves="3" seed="23" result="n"/><feColorMatrix in="n" type="matrix" values="0 0 0 0 0.5  0 0 0 0 0.42  0 0 0 0 0.36  0 0 7 0 -3.35"/><feComposite operator="in" in2="SourceGraphic"/></filter><filter id="rocky" x="0" y="0" width="1" height="1"><feTurbulence type="turbulence" baseFrequency="0.06 0.09" numOctaves="3" seed="11" result="n"/><feColorMatrix in="n" type="matrix" values="0 0 0 0 0.83  0 0 0 0 0.74  0 0 0 0 0.58  2.2 0 0 0 -0.5"/><feComposite operator="in" in2="SourceGraphic"/></filter><filter id="rocky2" x="0" y="0" width="1" height="1"><feTurbulence type="turbulence" baseFrequency="0.08 0.11" numOctaves="2" seed="5" result="n"/><feColorMatrix in="n" type="matrix" values="0 0 0 0 0.35  0 0 0 0 0.3  0 0 0 0 0.24  0 2.4 0 0 -0.3"/><feComposite operator="in" in2="SourceGraphic"/></filter><filter id="soft" x="-20%" y="-80%" width="140%" height="260%"><feGaussianBlur stdDeviation="14"/></filter><filter id="soft3" x="-20%" y="-20%" width="140%" height="140%"><feGaussianBlur stdDeviation="2.4"/></filter><filter id="soft1"><feGaussianBlur stdDeviation="0.8"/></filter><clipPath id="vclip"><rect x="1267.6" y="344.0" width="940.2000000000003" height="529.8"/></clipPath></defs><g clip-path="url(#vclip)"><rect x="1267.6" y="344.0" width="940.2000000000003" height="310" fill="url(#sky)"/><rect x="1267.6" y="344.0" width="940.2000000000003" height="310" fill="url(#skyr)"/><g filter="url(#soft)"><ellipse cx="1440" cy="575" rx="330" ry="16" fill="#e6ebf1" opacity="0.95"/><ellipse cx="1320" cy="582" rx="120" ry="13" fill="#eaeef3" opacity="0.9"/><ellipse cx="1700" cy="566" rx="170" ry="9" fill="#dde5ee" opacity="0.7"/><ellipse cx="1720" cy="470" rx="520" ry="22" transform="rotate(-9 1720 470)" fill="#c9d5e7" opacity="0.6"/><ellipse cx="1500" cy="348" rx="400" ry="20" fill="#e0e8f2" opacity="0.6"/><ellipse cx="1380" cy="420" rx="230" ry="44" fill="#d5dfed" opacity="0.55"/><ellipse cx="2090" cy="500" rx="210" ry="75" fill="#9fb3d2" opacity="0.32"/><ellipse cx="1640" cy="528" rx="330" ry="13" fill="#9fb4d3" opacity="0.5"/><ellipse cx="2080" cy="624" rx="200" ry="14" fill="#d9d7d4" opacity="0.8"/></g><polygon points="1336.2,601.4 1433.4,606.7 1536.8,606.7 1629.9,611.3 1656.8,620.0 1681.6,624.5 1738.0,628.2 1738.0,628.2 1762.8,622.0 1789.7,617.9 1820.7,617.9 1882.7,626.2 1955.1,628.2 1996.5,641.1 1996.5,667.5 1336.2,667.5" fill="#7b796c" /><polygon points="1437.6,608.0 1627.8,612.5 1660.9,624.1 1578.2,628.2 1474.8,622.0" fill="#8b8877" opacity="0.75"/><polygon points="1750.4,628.2 1791.8,619.6 1824.8,620.0 1845.5,630.3 1800.0,638.6" fill="#a09783" opacity="0.7"/><polygon points="1882.7,628.2 1955.1,629.9 1994.4,641.9 1924.1,642.7" fill="#8f8976" opacity="0.7"/><polygon points="1996.5,641.1 2037.8,634.4 2110.2,636.9 2182.6,630.3 2208.0,632.8 2208.0,667.5 1996.5,667.5" fill="#b0a382" /><polygon points="1996.5,651.0 2013.0,642.7 2031.6,646.8 2048.2,657.2" fill="#c1a98c" /><polygon points="2118.5,659.3 2135.0,646.8 2151.6,657.2 2155.7,667.5 2118.5,667.5" fill="#bfae8c" /><polygon points="2164.0,657.2 2186.7,644.8 2208.0,638.6 2208.0,675.8 2164.0,675.8" fill="#c8b57e" /><polygon points="1268.0,573.4 1299.0,582.7 1330.0,595.2 1336.2,601.4 1375.5,622.0 1454.1,634.4 1536.8,657.2 1268.0,659.3" fill="#81766a" /><rect x="1267.6" y="640" width="940.2000000000003" height="240" fill="url(#fld)"/><polygon points="1336.2,628.2 1536.8,642.7 1738.0,646.8 1862.1,646.8 1996.5,651.0 1996.5,667.5 1738.0,675.8 1516.1,667.5 1392.1,646.8" fill="#857c6c" opacity="0.8" filter="url(#soft3)"/><rect x="1267.6" y="640" width="940.2000000000003" height="238" fill="#fff" filter="url(#rocky2)" opacity="0.55"/><rect x="1267.6" y="640" width="940.2000000000003" height="238" fill="#fff" filter="url(#rocky)" opacity="0.7"/><linearGradient id="farf" x1="0" y1="0" x2="0" y2="1"><stop offset="0" stop-color="#7d7568" stop-opacity="0.8"/><stop offset="1" stop-color="#7d7568" stop-opacity="0"/></linearGradient><rect x="1267" y="640" width="720" height="74" fill="url(#farf)"/><polygon points="2048.2,667.5 2208.0,646.8 2208.0,746.1 2089.5,731.6 2027.5,694.4" fill="#cdb877" opacity="0.45"/><ellipse cx="1488.1" cy="653.1" rx="2.0" ry="1.4" fill="#6b5e4d"/><ellipse cx="1487.8" cy="652.6" rx="2.0" ry="1.4" fill="#b7a588"/><ellipse cx="1842.6" cy="654.2" rx="1.8" ry="1.9" fill="#6b5e4d" transform="rotate(30 1842 654)"/><ellipse cx="1842.3" cy="653.6" rx="1.8" ry="1.9" fill="#cdb78c" transform="rotate(30 1842 654)"/><ellipse cx="1918.1" cy="655.9" rx="1.7" ry="1.7" fill="#6b5e4d"/><ellipse cx="1917.9" cy="655.4" rx="1.7" ry="1.7" fill="#dcc9a2"/><ellipse cx="1501.0" cy="658.1" rx="5.8" ry="3.9" fill="#6b5e4d" transform="rotate(15 1500 657)"/><ellipse cx="1500.0" cy="656.9" rx="5.8" ry="3.9" fill="#c2b092" transform="rotate(15 1500 657)"/><ellipse cx="1740.4" cy="661.3" rx="2.8" ry="1.5" fill="#6b5e4d" transform="rotate(15 1740 661)"/><ellipse cx="1739.9" cy="660.8" rx="2.8" ry="1.5" fill="#cdb78c" transform="rotate(15 1740 661)"/><ellipse cx="1650.2" cy="662.2" rx="2.6" ry="1.8" fill="#6b5e4d"/><ellipse cx="1649.8" cy="661.6" rx="2.6" ry="1.8" fill="#c2b092"/><ellipse cx="1902.6" cy="663.0" rx="3.5" ry="2.7" fill="#6b5e4d"/><ellipse cx="1902.1" cy="662.2" rx="3.5" ry="2.7" fill="#d6c39b"/><ellipse cx="1491.1" cy="664.3" rx="5.6" ry="4.0" fill="#6b5e4d" transform="rotate(15 1490 663)"/><ellipse cx="1490.2" cy="663.1" rx="5.6" ry="4.0" fill="#b7a588" transform="rotate(15 1490 663)"/><ellipse cx="1452.1" cy="666.0" rx="4.1" ry="4.6" fill="#6b5e4d" transform="rotate(15 1451 665)"/><ellipse cx="1451.4" cy="664.6" rx="4.1" ry="4.6" fill="#c2b092" transform="rotate(15 1451 665)"/><ellipse cx="2041.1" cy="666.6" rx="7.1" ry="5.5" fill="#6b5e4d"/><ellipse cx="2040.0" cy="665.0" rx="7.1" ry="5.5" fill="#d3c09a"/><ellipse cx="1295.3" cy="667.2" rx="6.2" ry="5.0" fill="#6b5e4d" transform="rotate(30 1294 666)"/><ellipse cx="1294.3" cy="665.7" rx="6.2" ry="5.0" fill="#b7a588" transform="rotate(30 1294 666)"/><ellipse cx="1276.5" cy="666.5" rx="4.3" ry="2.6" fill="#6b5e4d" transform="rotate(30 1276 666)"/><ellipse cx="1275.8" cy="665.7" rx="4.3" ry="2.6" fill="#a89880" transform="rotate(30 1276 666)"/><ellipse cx="2115.4" cy="667.2" rx="3.0" ry="3.0" fill="#6b5e4d" transform="rotate(15 2115 666)"/><ellipse cx="2114.9" cy="666.3" rx="3.0" ry="3.0" fill="#c2ad6c" transform="rotate(15 2115 666)"/><ellipse cx="1438.9" cy="667.7" rx="4.6" ry="3.6" fill="#6b5e4d" transform="rotate(-15 1438 667)"/><ellipse cx="1438.2" cy="666.6" rx="4.6" ry="3.6" fill="#a89880" transform="rotate(-15 1438 667)"/><ellipse cx="1555.2" cy="667.0" rx="3.0" ry="1.5" fill="#6b5e4d"/><ellipse cx="1554.7" cy="666.6" rx="3.0" ry="1.5" fill="#c2b092"/><ellipse cx="2159.8" cy="668.5" rx="6.0" ry="4.4" fill="#6b5e4d" transform="rotate(15 2159 667)"/><ellipse cx="2158.8" cy="667.1" rx="6.0" ry="4.4" fill="#d9c384" transform="rotate(15 2159 667)"/><ellipse cx="2034.1" cy="668.3" rx="3.4" ry="2.7" fill="#6b5e4d"/><ellipse cx="2033.6" cy="667.5" rx="3.4" ry="2.7" fill="#d9c384"/><ellipse cx="1280.0" cy="669.1" rx="3.5" ry="2.8" fill="#6b5e4d" transform="rotate(15 1279 668)"/><ellipse cx="1279.4" cy="668.3" rx="3.5" ry="2.8" fill="#c2b092" transform="rotate(15 1279 668)"/><ellipse cx="2073.0" cy="669.4" rx="1.9" ry="1.7" fill="#6b5e4d"/><ellipse cx="2072.7" cy="668.8" rx="1.9" ry="1.7" fill="#d9c384"/><ellipse cx="1319.5" cy="670.0" rx="3.2" ry="3.2" fill="#6b5e4d" transform="rotate(-15 1319 669)"/><ellipse cx="1319.0" cy="669.1" rx="3.2" ry="3.2" fill="#b7a588" transform="rotate(-15 1319 669)"/><ellipse cx="1639.8" cy="670.4" rx="3.4" ry="2.4" fill="#6b5e4d"/><ellipse cx="1639.2" cy="669.7" rx="3.4" ry="2.4" fill="#c2b092"/><ellipse cx="1361.9" cy="673.8" rx="3.5" ry="4.0" fill="#6b5e4d"/><ellipse cx="1361.4" cy="672.6" rx="3.5" ry="4.0" fill="#c2b092"/><ellipse cx="2062.8" cy="674.2" rx="3.3" ry="2.6" fill="#6b5e4d"/><ellipse cx="2062.3" cy="673.4" rx="3.3" ry="2.6" fill="#d3c09a"/><ellipse cx="2010.7" cy="676.2" rx="4.7" ry="3.4" fill="#6b5e4d" transform="rotate(15 2010 675)"/><ellipse cx="2009.9" cy="675.2" rx="4.7" ry="3.4" fill="#c9b48c" transform="rotate(15 2010 675)"/><ellipse cx="1327.8" cy="676.1" rx="3.4" ry="2.9" fill="#6b5e4d"/><ellipse cx="1327.3" cy="675.3" rx="3.4" ry="2.9" fill="#c2b092"/><ellipse cx="1746.3" cy="676.4" rx="5.5" ry="3.0" fill="#6b5e4d"/><ellipse cx="1745.4" cy="675.5" rx="5.5" ry="3.0" fill="#bfa983"/><ellipse cx="1991.2" cy="676.3" rx="5.4" ry="2.5" fill="#6b5e4d"/><ellipse cx="1990.3" cy="675.6" rx="5.4" ry="2.5" fill="#cdb78c"/><ellipse cx="2156.7" cy="677.1" rx="3.6" ry="2.9" fill="#6b5e4d"/><ellipse cx="2156.1" cy="676.3" rx="3.6" ry="2.9" fill="#c2ad6c"/><ellipse cx="1503.3" cy="677.9" rx="5.5" ry="4.8" fill="#6b5e4d"/><ellipse cx="1502.4" cy="676.5" rx="5.5" ry="4.8" fill="#a89880"/><ellipse cx="1805.9" cy="678.9" rx="7.6" ry="6.8" fill="#6b5e4d"/><ellipse cx="1804.7" cy="676.9" rx="7.6" ry="6.8" fill="#cdb78c"/><ellipse cx="2060.0" cy="678.3" rx="2.8" ry="2.6" fill="#6b5e4d" transform="rotate(30 2060 677)"/><ellipse cx="2059.6" cy="677.5" rx="2.8" ry="2.6" fill="#d3c09a" transform="rotate(30 2060 677)"/><ellipse cx="1731.8" cy="679.4" rx="6.1" ry="6.0" fill="#6b5e4d"/><ellipse cx="1730.8" cy="677.6" rx="6.1" ry="6.0" fill="#cdb78c"/><ellipse cx="1942.5" cy="678.5" rx="2.5" ry="2.2" fill="#6b5e4d"/><ellipse cx="1942.1" cy="677.8" rx="2.5" ry="2.2" fill="#c4ad84"/><ellipse cx="2036.2" cy="680.5" rx="7.1" ry="6.4" fill="#6b5e4d"/><ellipse cx="2035.0" cy="678.5" rx="7.1" ry="6.4" fill="#c9b48c"/><ellipse cx="2076.3" cy="680.5" rx="3.0" ry="2.2" fill="#6b5e4d"/><ellipse cx="2075.8" cy="679.9" rx="3.0" ry="2.2" fill="#d0b873"/><ellipse cx="1689.4" cy="681.6" rx="3.0" ry="2.3" fill="#6b5e4d"/><ellipse cx="1688.9" cy="681.0" rx="3.0" ry="2.3" fill="#a89880"/><ellipse cx="1663.2" cy="683.1" rx="7.2" ry="5.3" fill="#6b5e4d" transform="rotate(15 1662 682)"/><ellipse cx="1662.0" cy="681.5" rx="7.2" ry="5.3" fill="#b7a588" transform="rotate(15 1662 682)"/><ellipse cx="1732.7" cy="683.2" rx="5.8" ry="5.1" fill="#6b5e4d"/><ellipse cx="1731.8" cy="681.6" rx="5.8" ry="5.1" fill="#c4ad84"/><ellipse cx="1900.0" cy="683.8" rx="6.4" ry="5.2" fill="#6b5e4d"/><ellipse cx="1899.0" cy="682.2" rx="6.4" ry="5.2" fill="#b39e7c"/><ellipse cx="1284.1" cy="684.1" rx="4.6" ry="6.1" fill="#6b5e4d"/><ellipse cx="1283.4" cy="682.2" rx="4.6" ry="6.1" fill="#c2b092"/><ellipse cx="1993.9" cy="683.4" rx="4.3" ry="3.6" fill="#6b5e4d" transform="rotate(-15 1993 682)"/><ellipse cx="1993.2" cy="682.3" rx="4.3" ry="3.6" fill="#c9b48c" transform="rotate(-15 1993 682)"/><ellipse cx="1833.8" cy="684.9" rx="4.5" ry="3.9" fill="#6b5e4d" transform="rotate(30 1833 684)"/><ellipse cx="1833.1" cy="683.8" rx="4.5" ry="3.9" fill="#cdb78c" transform="rotate(30 1833 684)"/><ellipse cx="1324.8" cy="685.2" rx="6.8" ry="3.8" fill="#6b5e4d" transform="rotate(-15 1324 684)"/><ellipse cx="1323.7" cy="684.0" rx="6.8" ry="3.8" fill="#b7a588" transform="rotate(-15 1324 684)"/><ellipse cx="1768.8" cy="685.3" rx="2.4" ry="2.2" fill="#6b5e4d"/><ellipse cx="1768.5" cy="684.6" rx="2.4" ry="2.2" fill="#c4ad84"/><ellipse cx="2056.7" cy="685.9" rx="3.0" ry="2.9" fill="#6b5e4d" transform="rotate(30 2056 685)"/><ellipse cx="2056.2" cy="685.0" rx="3.0" ry="2.9" fill="#dcc98e" transform="rotate(30 2056 685)"/><ellipse cx="1872.2" cy="686.8" rx="6.3" ry="5.1" fill="#6b5e4d"/><ellipse cx="1871.2" cy="685.3" rx="6.3" ry="5.1" fill="#b39e7c"/><ellipse cx="1464.6" cy="687.7" rx="4.3" ry="5.5" fill="#6b5e4d"/><ellipse cx="1463.9" cy="686.0" rx="4.3" ry="5.5" fill="#c2b092"/><ellipse cx="2171.2" cy="687.6" rx="7.5" ry="5.2" fill="#6b5e4d" transform="rotate(-15 2170 686)"/><ellipse cx="2170.0" cy="686.0" rx="7.5" ry="5.2" fill="#dcc98e" transform="rotate(-15 2170 686)"/><ellipse cx="1968.2" cy="686.8" rx="3.0" ry="2.0" fill="#6b5e4d" transform="rotate(30 1968 686)"/><ellipse cx="1967.7" cy="686.1" rx="3.0" ry="2.0" fill="#cdb78c" transform="rotate(30 1968 686)"/><ellipse cx="2030.3" cy="689.0" rx="6.7" ry="6.1" fill="#6b5e4d"/><ellipse cx="2029.3" cy="687.2" rx="6.7" ry="6.1" fill="#d9c384"/><ellipse cx="2184.7" cy="689.5" rx="3.8" ry="3.2" fill="#6b5e4d"/><ellipse cx="2184.1" cy="688.6" rx="3.8" ry="3.2" fill="#d9c384"/><ellipse cx="1841.9" cy="690.8" rx="3.9" ry="3.9" fill="#6b5e4d"/><ellipse cx="1841.3" cy="689.7" rx="3.9" ry="3.9" fill="#dcc9a2"/><ellipse cx="1294.0" cy="692.3" rx="5.4" ry="5.3" fill="#6b5e4d" transform="rotate(30 1293 691)"/><ellipse cx="1293.2" cy="690.7" rx="5.4" ry="5.3" fill="#a89880" transform="rotate(30 1293 691)"/><ellipse cx="1862.4" cy="692.7" rx="5.5" ry="5.0" fill="#6b5e4d"/><ellipse cx="1861.6" cy="691.2" rx="5.5" ry="5.0" fill="#d3c09a"/><ellipse cx="1701.8" cy="692.7" rx="3.7" ry="4.7" fill="#6b5e4d" transform="rotate(15 1701 691)"/><ellipse cx="1701.2" cy="691.3" rx="3.7" ry="4.7" fill="#dcc9a2" transform="rotate(15 1701 691)"/><ellipse cx="1501.3" cy="693.7" rx="5.0" ry="3.7" fill="#6b5e4d"/><ellipse cx="1500.5" cy="692.6" rx="5.0" ry="3.7" fill="#c2b092"/><ellipse cx="1644.2" cy="694.9" rx="8.8" ry="7.3" fill="#6b5e4d"/><ellipse cx="1642.8" cy="692.7" rx="8.8" ry="7.3" fill="#a89880"/><ellipse cx="2194.6" cy="694.8" rx="3.6" ry="4.5" fill="#6b5e4d" transform="rotate(15 2194 693)"/><ellipse cx="2194.0" cy="693.4" rx="3.6" ry="4.5" fill="#d9c384" transform="rotate(15 2194 693)"/><ellipse cx="1743.1" cy="694.9" rx="4.9" ry="4.7" fill="#6b5e4d"/><ellipse cx="1742.3" cy="693.5" rx="4.9" ry="4.7" fill="#d6c39b"/><ellipse cx="1822.7" cy="694.3" rx="2.6" ry="2.4" fill="#6b5e4d"/><ellipse cx="1822.3" cy="693.6" rx="2.6" ry="2.4" fill="#bfa983"/><ellipse cx="1695.7" cy="695.2" rx="4.1" ry="3.5" fill="#6b5e4d"/><ellipse cx="1695.1" cy="694.2" rx="4.1" ry="3.5" fill="#a89880"/><ellipse cx="2052.9" cy="696.9" rx="7.0" ry="5.2" fill="#6b5e4d"/><ellipse cx="2051.8" cy="695.4" rx="7.0" ry="5.2" fill="#c9b48c"/><ellipse cx="1406.2" cy="697.2" rx="4.7" ry="3.7" fill="#6b5e4d" transform="rotate(30 1405 696)"/><ellipse cx="1405.4" cy="696.1" rx="4.7" ry="3.7" fill="#a89880" transform="rotate(30 1405 696)"/><ellipse cx="1759.8" cy="697.4" rx="5.2" ry="3.7" fill="#6b5e4d"/><ellipse cx="1758.9" cy="696.2" rx="5.2" ry="3.7" fill="#d6c39b"/><ellipse cx="1403.8" cy="698.8" rx="11.2" ry="7.2" fill="#6b5e4d" transform="rotate(15 1402 697)"/><ellipse cx="1402.0" cy="696.6" rx="11.2" ry="7.2" fill="#c2b092" transform="rotate(15 1402 697)"/><ellipse cx="1468.2" cy="699.2" rx="8.9" ry="7.2" fill="#6b5e4d"/><ellipse cx="1466.8" cy="697.0" rx="8.9" ry="7.2" fill="#a89880"/><ellipse cx="1297.7" cy="698.2" rx="4.6" ry="2.9" fill="#6b5e4d"/><ellipse cx="1297.0" cy="697.3" rx="4.6" ry="2.9" fill="#a89880"/><ellipse cx="1677.6" cy="698.1" rx="4.1" ry="2.5" fill="#6b5e4d" transform="rotate(-15 1677 697)"/><ellipse cx="1677.0" cy="697.4" rx="4.1" ry="2.5" fill="#c2b092" transform="rotate(-15 1677 697)"/><ellipse cx="1997.0" cy="698.6" rx="4.8" ry="3.4" fill="#6b5e4d"/><ellipse cx="1996.2" cy="697.6" rx="4.8" ry="3.4" fill="#d3c09a"/><ellipse cx="1447.2" cy="699.6" rx="7.1" ry="6.4" fill="#6b5e4d" transform="rotate(30 1446 698)"/><ellipse cx="1446.1" cy="697.7" rx="7.1" ry="6.4" fill="#b7a588" transform="rotate(30 1446 698)"/><ellipse cx="1508.4" cy="699.0" rx="2.8" ry="3.2" fill="#6b5e4d" transform="rotate(30 1508 698)"/><ellipse cx="1508.0" cy="698.0" rx="2.8" ry="3.2" fill="#b7a588" transform="rotate(30 1508 698)"/><ellipse cx="1434.7" cy="699.3" rx="3.7" ry="3.4" fill="#6b5e4d" transform="rotate(-15 1434 698)"/><ellipse cx="1434.1" cy="698.2" rx="3.7" ry="3.4" fill="#b7a588" transform="rotate(-15 1434 698)"/><ellipse cx="1380.5" cy="699.9" rx="4.4" ry="3.4" fill="#6b5e4d" transform="rotate(30 1380 699)"/><ellipse cx="1379.8" cy="698.8" rx="4.4" ry="3.4" fill="#a89880" transform="rotate(30 1380 699)"/><ellipse cx="2161.6" cy="700.2" rx="4.1" ry="3.8" fill="#6b5e4d" transform="rotate(15 2161 699)"/><ellipse cx="2161.0" cy="699.1" rx="4.1" ry="3.8" fill="#b39e7c" transform="rotate(15 2161 699)"/><ellipse cx="1330.1" cy="700.9" rx="7.6" ry="5.9" fill="#6b5e4d" transform="rotate(30 1329 699)"/><ellipse cx="1328.9" cy="699.1" rx="7.6" ry="5.9" fill="#b7a588" transform="rotate(30 1329 699)"/><ellipse cx="1613.1" cy="700.3" rx="3.9" ry="3.9" fill="#6b5e4d" transform="rotate(-15 1612 699)"/><ellipse cx="1612.4" cy="699.1" rx="3.9" ry="3.9" fill="#b7a588" transform="rotate(-15 1612 699)"/><ellipse cx="1739.4" cy="701.1" rx="4.5" ry="3.9" fill="#6b5e4d" transform="rotate(30 1739 700)"/><ellipse cx="1738.7" cy="699.9" rx="4.5" ry="3.9" fill="#cdb78c" transform="rotate(30 1739 700)"/><ellipse cx="2117.8" cy="701.8" rx="6.0" ry="5.7" fill="#6b5e4d" transform="rotate(-15 2117 700)"/><ellipse cx="2116.9" cy="700.0" rx="6.0" ry="5.7" fill="#dcc98e" transform="rotate(-15 2117 700)"/><ellipse cx="1793.0" cy="701.9" rx="9.0" ry="5.2" fill="#6b5e4d"/><ellipse cx="1791.6" cy="700.3" rx="9.0" ry="5.2" fill="#c9b48c"/><ellipse cx="1851.4" cy="703.1" rx="6.5" ry="8.2" fill="#6b5e4d" transform="rotate(30 1850 701)"/><ellipse cx="1850.4" cy="700.7" rx="6.5" ry="8.2" fill="#c4ad84" transform="rotate(30 1850 701)"/><ellipse cx="1795.0" cy="701.9" rx="3.2" ry="3.4" fill="#6b5e4d" transform="rotate(-15 1795 701)"/><ellipse cx="1794.5" cy="700.8" rx="3.2" ry="3.4" fill="#dcc9a2" transform="rotate(-15 1795 701)"/><ellipse cx="2142.1" cy="702.5" rx="4.8" ry="3.8" fill="#6b5e4d" transform="rotate(-15 2141 701)"/><ellipse cx="2141.3" cy="701.3" rx="4.8" ry="3.8" fill="#d9c384" transform="rotate(-15 2141 701)"/><ellipse cx="1980.9" cy="702.4" rx="4.4" ry="3.3" fill="#6b5e4d" transform="rotate(15 1980 701)"/><ellipse cx="1980.2" cy="701.4" rx="4.4" ry="3.3" fill="#c9b48c" transform="rotate(15 1980 701)"/><ellipse cx="1561.9" cy="702.5" rx="3.1" ry="3.2" fill="#6b5e4d" transform="rotate(-15 1561 702)"/><ellipse cx="1561.4" cy="701.5" rx="3.1" ry="3.2" fill="#bfa983" transform="rotate(-15 1561 702)"/><ellipse cx="1642.9" cy="703.7" rx="4.2" ry="4.0" fill="#6b5e4d"/><ellipse cx="1642.2" cy="702.5" rx="4.2" ry="4.0" fill="#d6c39b"/><ellipse cx="1872.7" cy="704.2" rx="5.7" ry="5.6" fill="#6b5e4d"/><ellipse cx="1871.7" cy="702.5" rx="5.7" ry="5.6" fill="#cdb78c"/><ellipse cx="1302.8" cy="703.8" rx="3.6" ry="4.3" fill="#6b5e4d"/><ellipse cx="1302.2" cy="702.5" rx="3.6" ry="4.3" fill="#dcc9a2"/><ellipse cx="2166.4" cy="704.9" rx="7.2" ry="5.8" fill="#6b5e4d" transform="rotate(15 2165 703)"/><ellipse cx="2165.2" cy="703.2" rx="7.2" ry="5.8" fill="#cdb78c" transform="rotate(15 2165 703)"/><ellipse cx="1577.1" cy="704.2" rx="3.7" ry="3.3" fill="#6b5e4d" transform="rotate(15 1576 703)"/><ellipse cx="1576.5" cy="703.2" rx="3.7" ry="3.3" fill="#c4ad84" transform="rotate(15 1576 703)"/><ellipse cx="1783.0" cy="705.3" rx="4.9" ry="4.8" fill="#6b5e4d" transform="rotate(15 1782 704)"/><ellipse cx="1782.2" cy="703.9" rx="4.9" ry="4.8" fill="#d6c39b" transform="rotate(15 1782 704)"/><ellipse cx="1510.9" cy="704.8" rx="3.8" ry="2.9" fill="#6b5e4d"/><ellipse cx="1510.3" cy="703.9" rx="3.8" ry="2.9" fill="#cdb78c"/><ellipse cx="2118.1" cy="704.9" rx="4.1" ry="3.0" fill="#6b5e4d" transform="rotate(30 2117 704)"/><ellipse cx="2117.4" cy="704.0" rx="4.1" ry="3.0" fill="#c4ad84" transform="rotate(30 2117 704)"/><ellipse cx="1497.3" cy="706.9" rx="5.8" ry="3.6" fill="#6b5e4d"/><ellipse cx="1496.3" cy="705.9" rx="5.8" ry="3.6" fill="#cdb78c"/><ellipse cx="2160.5" cy="708.0" rx="4.6" ry="3.5" fill="#6b5e4d"/><ellipse cx="2159.7" cy="707.0" rx="4.6" ry="3.5" fill="#d9c384"/><ellipse cx="2194.1" cy="707.9" rx="3.8" ry="3.2" fill="#6b5e4d" transform="rotate(30 2193 707)"/><ellipse cx="2193.5" cy="707.0" rx="3.8" ry="3.2" fill="#c4ad84" transform="rotate(30 2193 707)"/><ellipse cx="1795.0" cy="710.1" rx="5.0" ry="3.2" fill="#6b5e4d" transform="rotate(-15 1794 709)"/><ellipse cx="1794.2" cy="709.1" rx="5.0" ry="3.2" fill="#d6c39b" transform="rotate(-15 1794 709)"/><ellipse cx="2026.5" cy="710.2" rx="4.1" ry="2.6" fill="#6b5e4d"/><ellipse cx="2025.9" cy="709.4" rx="4.1" ry="2.6" fill="#bfa983"/><ellipse cx="1813.5" cy="710.3" rx="3.4" ry="2.5" fill="#6b5e4d" transform="rotate(30 1813 710)"/><ellipse cx="1813.0" cy="709.6" rx="3.4" ry="2.5" fill="#cdb78c" transform="rotate(30 1813 710)"/><ellipse cx="1949.6" cy="711.0" rx="4.4" ry="4.6" fill="#6b5e4d"/><ellipse cx="1948.9" cy="709.6" rx="4.4" ry="4.6" fill="#c4ad84"/><ellipse cx="1927.5" cy="710.9" rx="5.3" ry="3.4" fill="#6b5e4d"/><ellipse cx="1926.6" cy="709.9" rx="5.3" ry="3.4" fill="#d3c09a"/><ellipse cx="1568.2" cy="711.9" rx="3.8" ry="4.1" fill="#6b5e4d" transform="rotate(-15 1568 711)"/><ellipse cx="1567.6" cy="710.6" rx="3.8" ry="4.1" fill="#dcc9a2" transform="rotate(-15 1568 711)"/><ellipse cx="1408.1" cy="711.8" rx="5.0" ry="2.8" fill="#6b5e4d" transform="rotate(-15 1407 711)"/><ellipse cx="1407.3" cy="710.9" rx="5.0" ry="2.8" fill="#d6c39b" transform="rotate(-15 1407 711)"/><ellipse cx="1949.6" cy="712.6" rx="7.2" ry="5.0" fill="#6b5e4d" transform="rotate(-15 1948 711)"/><ellipse cx="1948.5" cy="711.1" rx="7.2" ry="5.0" fill="#d3c09a" transform="rotate(-15 1948 711)"/><ellipse cx="1373.4" cy="712.9" rx="5.0" ry="5.0" fill="#6b5e4d"/><ellipse cx="1372.6" cy="711.4" rx="5.0" ry="5.0" fill="#c4ad84"/><ellipse cx="1591.8" cy="713.0" rx="5.3" ry="4.3" fill="#6b5e4d"/><ellipse cx="1591.0" cy="711.7" rx="5.3" ry="4.3" fill="#c9b48c"/><ellipse cx="1813.7" cy="714.2" rx="9.2" ry="5.4" fill="#6b5e4d" transform="rotate(15 1812 713)"/><ellipse cx="1812.2" cy="712.6" rx="9.2" ry="5.4" fill="#c4ad84" transform="rotate(15 1812 713)"/><ellipse cx="1583.2" cy="716.1" rx="6.6" ry="6.7" fill="#6b5e4d"/><ellipse cx="1582.1" cy="714.1" rx="6.6" ry="6.7" fill="#c4ad84"/><ellipse cx="1340.6" cy="715.4" rx="3.9" ry="3.6" fill="#6b5e4d" transform="rotate(30 1340 714)"/><ellipse cx="1340.0" cy="714.3" rx="3.9" ry="3.6" fill="#c9b48c" transform="rotate(30 1340 714)"/><ellipse cx="1876.0" cy="715.5" rx="3.6" ry="3.1" fill="#6b5e4d" transform="rotate(-15 1875 715)"/><ellipse cx="1875.4" cy="714.5" rx="3.6" ry="3.1" fill="#d3c09a" transform="rotate(-15 1875 715)"/><ellipse cx="1585.4" cy="715.4" rx="4.3" ry="2.7" fill="#6b5e4d"/><ellipse cx="1584.7" cy="714.5" rx="4.3" ry="2.7" fill="#c9b48c"/><ellipse cx="2188.9" cy="717.4" rx="4.1" ry="4.2" fill="#6b5e4d" transform="rotate(-15 2188 716)"/><ellipse cx="2188.3" cy="716.2" rx="4.1" ry="4.2" fill="#dcc9a2" transform="rotate(-15 2188 716)"/><ellipse cx="2001.0" cy="718.2" rx="4.2" ry="4.2" fill="#6b5e4d" transform="rotate(30 2000 717)"/><ellipse cx="2000.4" cy="716.9" rx="4.2" ry="4.2" fill="#bfa983" transform="rotate(30 2000 717)"/><ellipse cx="2022.6" cy="719.5" rx="6.8" ry="8.1" fill="#6b5e4d" transform="rotate(30 2022 717)"/><ellipse cx="2021.5" cy="717.0" rx="6.8" ry="8.1" fill="#c9b48c" transform="rotate(30 2022 717)"/><ellipse cx="1432.1" cy="719.0" rx="5.4" ry="3.9" fill="#6b5e4d"/><ellipse cx="1431.3" cy="717.8" rx="5.4" ry="3.9" fill="#bfa983"/><ellipse cx="1618.7" cy="719.6" rx="8.9" ry="6.0" fill="#6b5e4d"/><ellipse cx="1617.3" cy="717.8" rx="8.9" ry="6.0" fill="#dcc9a2"/><ellipse cx="1640.0" cy="718.8" rx="4.9" ry="3.4" fill="#6b5e4d"/><ellipse cx="1639.2" cy="717.8" rx="4.9" ry="3.4" fill="#c9b48c"/><ellipse cx="1515.3" cy="719.1" rx="6.1" ry="4.0" fill="#6b5e4d" transform="rotate(30 1514 718)"/><ellipse cx="1514.3" cy="717.9" rx="6.1" ry="4.0" fill="#cdb78c" transform="rotate(30 1514 718)"/><ellipse cx="1696.6" cy="721.3" rx="3.5" ry="4.3" fill="#6b5e4d" transform="rotate(30 1696 720)"/><ellipse cx="1696.1" cy="720.0" rx="3.5" ry="4.3" fill="#d6c39b" transform="rotate(30 1696 720)"/><ellipse cx="1312.0" cy="723.1" rx="5.6" ry="3.2" fill="#6b5e4d" transform="rotate(-15 1311 722)"/><ellipse cx="1311.1" cy="722.2" rx="5.6" ry="3.2" fill="#c4ad84" transform="rotate(-15 1311 722)"/><ellipse cx="1357.4" cy="723.5" rx="5.5" ry="3.4" fill="#6b5e4d" transform="rotate(15 1357 722)"/><ellipse cx="1356.5" cy="722.5" rx="5.5" ry="3.4" fill="#b39e7c" transform="rotate(15 1357 722)"/><ellipse cx="1335.6" cy="724.1" rx="8.3" ry="5.4" fill="#6b5e4d" transform="rotate(30 1334 723)"/><ellipse cx="1334.3" cy="722.5" rx="8.3" ry="5.4" fill="#d6c39b" transform="rotate(30 1334 723)"/><ellipse cx="1965.6" cy="726.0" rx="10.1" ry="5.6" fill="#6b5e4d"/><ellipse cx="1964.0" cy="724.4" rx="10.1" ry="5.6" fill="#c4ad84"/><ellipse cx="1739.7" cy="726.3" rx="8.6" ry="5.5" fill="#6b5e4d" transform="rotate(30 1738 725)"/><ellipse cx="1738.3" cy="724.6" rx="8.6" ry="5.5" fill="#b39e7c" transform="rotate(30 1738 725)"/><ellipse cx="1992.5" cy="726.8" rx="8.0" ry="5.0" fill="#6b5e4d"/><ellipse cx="1991.2" cy="725.3" rx="8.0" ry="5.0" fill="#dcc9a2"/><ellipse cx="1892.4" cy="727.7" rx="5.5" ry="5.8" fill="#6b5e4d" transform="rotate(15 1892 726)"/><ellipse cx="1891.5" cy="725.9" rx="5.5" ry="5.8" fill="#d3c09a" transform="rotate(15 1892 726)"/><ellipse cx="1421.9" cy="729.7" rx="4.3" ry="4.4" fill="#6b5e4d"/><ellipse cx="1421.3" cy="728.4" rx="4.3" ry="4.4" fill="#d6c39b"/><ellipse cx="1841.2" cy="730.3" rx="5.5" ry="4.1" fill="#6b5e4d" transform="rotate(-15 1840 729)"/><ellipse cx="1840.3" cy="729.0" rx="5.5" ry="4.1" fill="#dcc9a2" transform="rotate(-15 1840 729)"/><ellipse cx="2157.7" cy="730.6" rx="5.6" ry="4.5" fill="#6b5e4d" transform="rotate(-15 2157 729)"/><ellipse cx="2156.8" cy="729.3" rx="5.6" ry="4.5" fill="#dcc98e" transform="rotate(-15 2157 729)"/><ellipse cx="1941.2" cy="730.8" rx="6.1" ry="3.9" fill="#6b5e4d" transform="rotate(-15 1940 730)"/><ellipse cx="1940.2" cy="729.7" rx="6.1" ry="3.9" fill="#d3c09a" transform="rotate(-15 1940 730)"/><ellipse cx="1903.4" cy="731.9" rx="8.7" ry="7.3" fill="#6b5e4d"/><ellipse cx="1902.1" cy="729.7" rx="8.7" ry="7.3" fill="#d3c09a"/><ellipse cx="2043.4" cy="730.9" rx="6.2" ry="3.7" fill="#6b5e4d"/><ellipse cx="2042.5" cy="729.8" rx="6.2" ry="3.7" fill="#dcc98e"/><ellipse cx="1411.7" cy="731.8" rx="8.0" ry="5.5" fill="#6b5e4d" transform="rotate(30 1410 730)"/><ellipse cx="1410.5" cy="730.1" rx="8.0" ry="5.5" fill="#bfa983" transform="rotate(30 1410 730)"/><ellipse cx="1870.9" cy="733.0" rx="9.8" ry="8.4" fill="#6b5e4d" transform="rotate(30 1869 731)"/><ellipse cx="1869.3" cy="730.5" rx="9.8" ry="8.4" fill="#cdb78c" transform="rotate(30 1869 731)"/><ellipse cx="1845.8" cy="733.0" rx="6.2" ry="6.7" fill="#6b5e4d" transform="rotate(30 1845 731)"/><ellipse cx="1844.8" cy="731.0" rx="6.2" ry="6.7" fill="#dcc9a2" transform="rotate(30 1845 731)"/><ellipse cx="1890.4" cy="732.5" rx="6.2" ry="3.4" fill="#6b5e4d" transform="rotate(15 1889 731)"/><ellipse cx="1889.4" cy="731.4" rx="6.2" ry="3.4" fill="#bfa983" transform="rotate(15 1889 731)"/><ellipse cx="1703.2" cy="733.4" rx="4.8" ry="4.5" fill="#6b5e4d" transform="rotate(-15 1702 732)"/><ellipse cx="1702.4" cy="732.1" rx="4.8" ry="4.5" fill="#bfa983" transform="rotate(-15 1702 732)"/><ellipse cx="2077.7" cy="733.4" rx="5.6" ry="3.0" fill="#6b5e4d"/><ellipse cx="2076.8" cy="732.5" rx="5.6" ry="3.0" fill="#b39e7c"/><ellipse cx="1584.9" cy="734.3" rx="6.4" ry="5.7" fill="#6b5e4d" transform="rotate(-15 1584 733)"/><ellipse cx="1583.9" cy="732.6" rx="6.4" ry="5.7" fill="#b39e7c" transform="rotate(-15 1584 733)"/><ellipse cx="1449.3" cy="736.0" rx="9.2" ry="7.6" fill="#6b5e4d" transform="rotate(-15 1448 734)"/><ellipse cx="1447.9" cy="733.7" rx="9.2" ry="7.6" fill="#bfa983" transform="rotate(-15 1448 734)"/><ellipse cx="1330.2" cy="735.1" rx="7.2" ry="3.8" fill="#6b5e4d" transform="rotate(-15 1329 734)"/><ellipse cx="1329.0" cy="734.0" rx="7.2" ry="3.8" fill="#dcc9a2" transform="rotate(-15 1329 734)"/><ellipse cx="1381.6" cy="736.3" rx="5.5" ry="5.0" fill="#6b5e4d" transform="rotate(30 1381 735)"/><ellipse cx="1380.8" cy="734.8" rx="5.5" ry="5.0" fill="#d6c39b" transform="rotate(30 1381 735)"/><ellipse cx="2142.2" cy="737.4" rx="6.8" ry="4.4" fill="#6b5e4d"/><ellipse cx="2141.1" cy="736.1" rx="6.8" ry="4.4" fill="#cdb78c"/><ellipse cx="1502.3" cy="739.3" rx="11.2" ry="8.3" fill="#6b5e4d" transform="rotate(30 1500 737)"/><ellipse cx="1500.5" cy="736.8" rx="11.2" ry="8.3" fill="#b39e7c" transform="rotate(30 1500 737)"/><ellipse cx="1459.5" cy="738.5" rx="8.1" ry="5.1" fill="#6b5e4d"/><ellipse cx="1458.2" cy="737.0" rx="8.1" ry="5.1" fill="#c4ad84"/><ellipse cx="1376.0" cy="738.9" rx="6.4" ry="6.0" fill="#6b5e4d"/><ellipse cx="1375.0" cy="737.1" rx="6.4" ry="6.0" fill="#bfa983"/><ellipse cx="1277.5" cy="739.7" rx="6.0" ry="5.2" fill="#6b5e4d"/><ellipse cx="1276.6" cy="738.2" rx="6.0" ry="5.2" fill="#cdb78c"/><ellipse cx="2190.9" cy="740.3" rx="6.2" ry="5.2" fill="#6b5e4d" transform="rotate(15 2190 739)"/><ellipse cx="2189.9" cy="738.8" rx="6.2" ry="5.2" fill="#d0b873" transform="rotate(15 2190 739)"/><ellipse cx="2072.4" cy="740.7" rx="9.5" ry="6.2" fill="#6b5e4d" transform="rotate(-15 2071 739)"/><ellipse cx="2070.9" cy="738.9" rx="9.5" ry="6.2" fill="#d6c39b" transform="rotate(-15 2071 739)"/><ellipse cx="1561.3" cy="739.9" rx="5.0" ry="3.3" fill="#6b5e4d" transform="rotate(-15 1560 739)"/><ellipse cx="1560.5" cy="738.9" rx="5.0" ry="3.3" fill="#d3c09a" transform="rotate(-15 1560 739)"/><ellipse cx="2034.6" cy="740.5" rx="6.3" ry="5.1" fill="#6b5e4d" transform="rotate(30 2034 739)"/><ellipse cx="2033.6" cy="739.0" rx="6.3" ry="5.1" fill="#c2ad6c" transform="rotate(30 2034 739)"/><ellipse cx="2205.0" cy="741.1" rx="7.7" ry="4.7" fill="#6b5e4d" transform="rotate(30 2204 740)"/><ellipse cx="2203.7" cy="739.7" rx="7.7" ry="4.7" fill="#dcc98e" transform="rotate(30 2204 740)"/><ellipse cx="1810.0" cy="742.7" rx="6.9" ry="4.9" fill="#6b5e4d" transform="rotate(-15 1809 741)"/><ellipse cx="1808.9" cy="741.3" rx="6.9" ry="4.9" fill="#c4ad84" transform="rotate(-15 1809 741)"/><ellipse cx="1798.5" cy="742.6" rx="6.4" ry="4.1" fill="#6b5e4d" transform="rotate(30 1798 741)"/><ellipse cx="1797.5" cy="741.3" rx="6.4" ry="4.1" fill="#bfa983" transform="rotate(30 1798 741)"/><ellipse cx="1334.1" cy="743.7" rx="5.8" ry="6.2" fill="#6b5e4d"/><ellipse cx="1333.2" cy="741.8" rx="5.8" ry="6.2" fill="#c9b48c"/><ellipse cx="1423.9" cy="742.9" rx="5.3" ry="3.2" fill="#6b5e4d" transform="rotate(-15 1423 742)"/><ellipse cx="1423.0" cy="741.9" rx="5.3" ry="3.2" fill="#d3c09a" transform="rotate(-15 1423 742)"/><ellipse cx="1761.4" cy="744.2" rx="9.3" ry="7.5" fill="#6b5e4d" transform="rotate(30 1760 742)"/><ellipse cx="1759.9" cy="741.9" rx="9.3" ry="7.5" fill="#b39e7c" transform="rotate(30 1760 742)"/><ellipse cx="2040.5" cy="744.8" rx="10.3" ry="7.6" fill="#6b5e4d"/><ellipse cx="2038.8" cy="742.5" rx="10.3" ry="7.6" fill="#d9c384"/><ellipse cx="1527.8" cy="744.3" rx="4.7" ry="5.7" fill="#6b5e4d" transform="rotate(30 1527 743)"/><ellipse cx="1527.0" cy="742.6" rx="4.7" ry="5.7" fill="#dcc9a2" transform="rotate(30 1527 743)"/><ellipse cx="1485.2" cy="744.7" rx="6.4" ry="4.8" fill="#6b5e4d" transform="rotate(30 1484 743)"/><ellipse cx="1484.2" cy="743.2" rx="6.4" ry="4.8" fill="#bfa983" transform="rotate(30 1484 743)"/><ellipse cx="1684.6" cy="744.7" rx="8.9" ry="4.6" fill="#6b5e4d" transform="rotate(-15 1683 743)"/><ellipse cx="1683.2" cy="743.3" rx="8.9" ry="4.6" fill="#cdb78c" transform="rotate(-15 1683 743)"/><ellipse cx="1663.8" cy="745.0" rx="5.7" ry="4.9" fill="#6b5e4d"/><ellipse cx="1662.9" cy="743.5" rx="5.7" ry="4.9" fill="#dcc9a2"/><ellipse cx="1546.3" cy="744.7" rx="4.7" ry="3.4" fill="#6b5e4d" transform="rotate(-15 1546 744)"/><ellipse cx="1545.6" cy="743.7" rx="4.7" ry="3.4" fill="#bfa983" transform="rotate(-15 1546 744)"/><ellipse cx="1582.8" cy="746.3" rx="5.7" ry="4.4" fill="#6b5e4d"/><ellipse cx="1581.8" cy="745.0" rx="5.7" ry="4.4" fill="#d3c09a"/><ellipse cx="1773.7" cy="746.6" rx="6.4" ry="4.7" fill="#6b5e4d" transform="rotate(-15 1773 745)"/><ellipse cx="1772.7" cy="745.2" rx="6.4" ry="4.7" fill="#d3c09a" transform="rotate(-15 1773 745)"/><ellipse cx="2023.4" cy="746.4" rx="4.7" ry="3.9" fill="#6b5e4d" transform="rotate(15 2023 745)"/><ellipse cx="2022.7" cy="745.3" rx="4.7" ry="3.9" fill="#dcc98e" transform="rotate(15 2023 745)"/><ellipse cx="1718.2" cy="747.2" rx="4.7" ry="6.3" fill="#6b5e4d" transform="rotate(30 1717 745)"/><ellipse cx="1717.4" cy="745.3" rx="4.7" ry="6.3" fill="#cdb78c" transform="rotate(30 1717 745)"/><ellipse cx="1368.5" cy="747.9" rx="9.0" ry="7.7" fill="#6b5e4d" transform="rotate(-15 1367 746)"/><ellipse cx="1367.0" cy="745.6" rx="9.0" ry="7.7" fill="#dcc9a2" transform="rotate(-15 1367 746)"/><ellipse cx="1767.8" cy="747.4" rx="6.9" ry="5.5" fill="#6b5e4d" transform="rotate(15 1767 746)"/><ellipse cx="1766.7" cy="745.8" rx="6.9" ry="5.5" fill="#cdb78c" transform="rotate(15 1767 746)"/><ellipse cx="2051.8" cy="748.7" rx="10.2" ry="7.7" fill="#6b5e4d"/><ellipse cx="2050.2" cy="746.4" rx="10.2" ry="7.7" fill="#dcc98e"/><ellipse cx="1835.8" cy="748.5" rx="8.1" ry="5.7" fill="#6b5e4d" transform="rotate(-15 1834 747)"/><ellipse cx="1834.5" cy="746.8" rx="8.1" ry="5.7" fill="#c4ad84" transform="rotate(-15 1834 747)"/><ellipse cx="1872.3" cy="748.7" rx="9.5" ry="5.3" fill="#6b5e4d"/><ellipse cx="1870.8" cy="747.1" rx="9.5" ry="5.3" fill="#bfa983"/><ellipse cx="1910.4" cy="749.2" rx="5.3" ry="6.5" fill="#6b5e4d" transform="rotate(30 1910 747)"/><ellipse cx="1909.5" cy="747.3" rx="5.3" ry="6.5" fill="#dcc9a2" transform="rotate(30 1910 747)"/><ellipse cx="2045.4" cy="748.7" rx="6.1" ry="4.8" fill="#6b5e4d"/><ellipse cx="2044.4" cy="747.3" rx="6.1" ry="4.8" fill="#dcc98e"/><ellipse cx="1704.2" cy="749.6" rx="7.4" ry="6.5" fill="#6b5e4d"/><ellipse cx="1703.0" cy="747.7" rx="7.4" ry="6.5" fill="#d3c09a"/><ellipse cx="2041.8" cy="750.3" rx="6.4" ry="5.0" fill="#6b5e4d"/><ellipse cx="2040.8" cy="748.8" rx="6.4" ry="5.0" fill="#dcc98e"/><ellipse cx="1677.4" cy="750.4" rx="6.3" ry="4.4" fill="#6b5e4d"/><ellipse cx="1676.4" cy="749.1" rx="6.3" ry="4.4" fill="#d3c09a"/><ellipse cx="1667.5" cy="752.0" rx="8.1" ry="9.0" fill="#6b5e4d" transform="rotate(30 1666 749)"/><ellipse cx="1666.2" cy="749.3" rx="8.1" ry="9.0" fill="#cdb78c" transform="rotate(30 1666 749)"/><ellipse cx="1810.7" cy="752.5" rx="12.5" ry="8.9" fill="#6b5e4d" transform="rotate(30 1809 750)"/><ellipse cx="1808.7" cy="749.8" rx="12.5" ry="8.9" fill="#d3c09a" transform="rotate(30 1809 750)"/><ellipse cx="1792.8" cy="752.7" rx="6.0" ry="7.2" fill="#6b5e4d" transform="rotate(30 1792 751)"/><ellipse cx="1791.8" cy="750.5" rx="6.0" ry="7.2" fill="#c9b48c" transform="rotate(30 1792 751)"/><ellipse cx="1756.1" cy="751.8" rx="6.7" ry="3.5" fill="#6b5e4d"/><ellipse cx="1755.0" cy="750.7" rx="6.7" ry="3.5" fill="#d3c09a"/><ellipse cx="2001.1" cy="752.8" rx="6.0" ry="6.2" fill="#6b5e4d" transform="rotate(15 2000 751)"/><ellipse cx="2000.1" cy="750.9" rx="6.0" ry="6.2" fill="#cdb78c" transform="rotate(15 2000 751)"/><ellipse cx="1704.0" cy="752.6" rx="5.6" ry="4.4" fill="#6b5e4d" transform="rotate(-15 1703 751)"/><ellipse cx="1703.1" cy="751.3" rx="5.6" ry="4.4" fill="#cdb78c" transform="rotate(-15 1703 751)"/><ellipse cx="1546.9" cy="753.5" rx="5.7" ry="4.2" fill="#6b5e4d" transform="rotate(15 1546 752)"/><ellipse cx="1546.0" cy="752.3" rx="5.7" ry="4.2" fill="#c4ad84" transform="rotate(15 1546 752)"/><ellipse cx="1756.6" cy="753.8" rx="6.2" ry="4.9" fill="#6b5e4d" transform="rotate(30 1756 752)"/><ellipse cx="1755.7" cy="752.4" rx="6.2" ry="4.9" fill="#cdb78c" transform="rotate(30 1756 752)"/><ellipse cx="1721.1" cy="754.0" rx="7.4" ry="4.2" fill="#6b5e4d"/><ellipse cx="1719.9" cy="752.8" rx="7.4" ry="4.2" fill="#bfa983"/><ellipse cx="1388.4" cy="754.3" rx="4.6" ry="4.7" fill="#6b5e4d"/><ellipse cx="1387.6" cy="752.9" rx="4.6" ry="4.7" fill="#bfa983"/><ellipse cx="2081.3" cy="754.6" rx="7.3" ry="5.2" fill="#6b5e4d"/><ellipse cx="2080.2" cy="753.1" rx="7.3" ry="5.2" fill="#dcc98e"/><ellipse cx="1749.5" cy="756.4" rx="8.3" ry="6.4" fill="#6b5e4d" transform="rotate(30 1748 754)"/><ellipse cx="1748.2" cy="754.5" rx="8.3" ry="6.4" fill="#dcc9a2" transform="rotate(30 1748 754)"/><ellipse cx="1366.5" cy="757.1" rx="8.4" ry="6.0" fill="#6b5e4d"/><ellipse cx="1365.1" cy="755.3" rx="8.4" ry="6.0" fill="#c9b48c"/><ellipse cx="2171.0" cy="757.0" rx="6.2" ry="5.3" fill="#6b5e4d" transform="rotate(15 2170 755)"/><ellipse cx="2170.0" cy="755.4" rx="6.2" ry="5.3" fill="#d9c384" transform="rotate(15 2170 755)"/><ellipse cx="1514.2" cy="757.2" rx="5.0" ry="4.9" fill="#6b5e4d" transform="rotate(30 1513 756)"/><ellipse cx="1513.4" cy="755.8" rx="5.0" ry="4.9" fill="#d6c39b" transform="rotate(30 1513 756)"/><ellipse cx="1533.3" cy="757.2" rx="7.8" ry="4.0" fill="#6b5e4d" transform="rotate(-15 1532 756)"/><ellipse cx="1532.0" cy="756.0" rx="7.8" ry="4.0" fill="#c9b48c" transform="rotate(-15 1532 756)"/><ellipse cx="2087.0" cy="758.3" rx="7.3" ry="5.4" fill="#6b5e4d" transform="rotate(-15 2086 757)"/><ellipse cx="2085.8" cy="756.7" rx="7.3" ry="5.4" fill="#c2ad6c" transform="rotate(-15 2086 757)"/><ellipse cx="1916.2" cy="758.4" rx="7.7" ry="5.4" fill="#6b5e4d" transform="rotate(15 1915 757)"/><ellipse cx="1915.0" cy="756.7" rx="7.7" ry="5.4" fill="#d6c39b" transform="rotate(15 1915 757)"/><ellipse cx="1375.4" cy="758.4" rx="5.2" ry="3.8" fill="#6b5e4d" transform="rotate(15 1375 757)"/><ellipse cx="1374.5" cy="757.3" rx="5.2" ry="3.8" fill="#c4ad84" transform="rotate(15 1375 757)"/><ellipse cx="1454.9" cy="759.9" rx="4.6" ry="5.5" fill="#6b5e4d" transform="rotate(-15 1454 758)"/><ellipse cx="1454.2" cy="758.2" rx="4.6" ry="5.5" fill="#d6c39b" transform="rotate(-15 1454 758)"/><ellipse cx="1327.9" cy="760.0" rx="5.0" ry="5.7" fill="#6b5e4d" transform="rotate(-15 1327 758)"/><ellipse cx="1327.1" cy="758.3" rx="5.0" ry="5.7" fill="#d6c39b" transform="rotate(-15 1327 758)"/><ellipse cx="2042.6" cy="760.4" rx="8.6" ry="6.1" fill="#6b5e4d"/><ellipse cx="2041.2" cy="758.6" rx="8.6" ry="6.1" fill="#c9b48c"/><ellipse cx="1987.5" cy="761.7" rx="11.2" ry="9.7" fill="#6b5e4d" transform="rotate(15 1986 759)"/><ellipse cx="1985.7" cy="758.8" rx="11.2" ry="9.7" fill="#cdb78c" transform="rotate(15 1986 759)"/><ellipse cx="1307.5" cy="761.2" rx="7.8" ry="5.2" fill="#6b5e4d"/><ellipse cx="1306.2" cy="759.7" rx="7.8" ry="5.2" fill="#dcc9a2"/><ellipse cx="1812.7" cy="761.3" rx="6.3" ry="4.7" fill="#6b5e4d" transform="rotate(30 1812 760)"/><ellipse cx="1811.7" cy="759.9" rx="6.3" ry="4.7" fill="#dcc9a2" transform="rotate(30 1812 760)"/><ellipse cx="1583.8" cy="762.3" rx="9.6" ry="7.2" fill="#6b5e4d" transform="rotate(30 1582 760)"/><ellipse cx="1582.3" cy="760.1" rx="9.6" ry="7.2" fill="#d3c09a" transform="rotate(30 1582 760)"/><ellipse cx="1671.0" cy="763.2" rx="11.7" ry="9.8" fill="#6b5e4d"/><ellipse cx="1669.1" cy="760.2" rx="11.7" ry="9.8" fill="#d3c09a"/><ellipse cx="2110.8" cy="761.7" rx="6.7" ry="4.8" fill="#6b5e4d" transform="rotate(15 2110 760)"/><ellipse cx="2109.7" cy="760.3" rx="6.7" ry="4.8" fill="#dcc9a2" transform="rotate(15 2110 760)"/><ellipse cx="1764.9" cy="762.2" rx="5.8" ry="5.7" fill="#6b5e4d"/><ellipse cx="1763.9" cy="760.5" rx="5.8" ry="5.7" fill="#b39e7c"/><ellipse cx="1678.3" cy="762.4" rx="7.3" ry="3.7" fill="#6b5e4d" transform="rotate(15 1677 761)"/><ellipse cx="1677.1" cy="761.2" rx="7.3" ry="3.7" fill="#d6c39b" transform="rotate(15 1677 761)"/><ellipse cx="1405.0" cy="762.5" rx="7.3" ry="3.8" fill="#6b5e4d" transform="rotate(-15 1404 761)"/><ellipse cx="1403.8" cy="761.4" rx="7.3" ry="3.8" fill="#dcc9a2" transform="rotate(-15 1404 761)"/><ellipse cx="1344.5" cy="763.3" rx="6.6" ry="5.4" fill="#6b5e4d"/><ellipse cx="1343.4" cy="761.7" rx="6.6" ry="5.4" fill="#b39e7c"/><ellipse cx="1755.6" cy="763.1" rx="7.6" ry="3.9" fill="#6b5e4d" transform="rotate(15 1754 762)"/><ellipse cx="1754.4" cy="761.9" rx="7.6" ry="3.9" fill="#cdb78c" transform="rotate(15 1754 762)"/><ellipse cx="1618.6" cy="763.7" rx="8.9" ry="5.9" fill="#6b5e4d" transform="rotate(30 1617 762)"/><ellipse cx="1617.2" cy="762.0" rx="8.9" ry="5.9" fill="#b39e7c" transform="rotate(30 1617 762)"/><ellipse cx="1648.0" cy="764.7" rx="8.1" ry="8.7" fill="#6b5e4d" transform="rotate(-15 1647 762)"/><ellipse cx="1646.8" cy="762.0" rx="8.1" ry="8.7" fill="#d3c09a" transform="rotate(-15 1647 762)"/><ellipse cx="1616.0" cy="764.0" rx="6.9" ry="5.7" fill="#6b5e4d" transform="rotate(30 1615 762)"/><ellipse cx="1614.9" cy="762.3" rx="6.9" ry="5.7" fill="#bfa983" transform="rotate(30 1615 762)"/><ellipse cx="1719.5" cy="764.1" rx="6.4" ry="4.4" fill="#6b5e4d"/><ellipse cx="1718.5" cy="762.8" rx="6.4" ry="4.4" fill="#c4ad84"/><ellipse cx="1620.3" cy="765.7" rx="8.3" ry="8.2" fill="#6b5e4d"/><ellipse cx="1618.9" cy="763.2" rx="8.3" ry="8.2" fill="#b39e7c"/><ellipse cx="1565.2" cy="765.2" rx="7.2" ry="6.2" fill="#6b5e4d" transform="rotate(15 1564 763)"/><ellipse cx="1564.1" cy="763.3" rx="7.2" ry="6.2" fill="#c4ad84" transform="rotate(15 1564 763)"/><ellipse cx="1662.3" cy="766.7" rx="9.5" ry="6.6" fill="#6b5e4d"/><ellipse cx="1660.8" cy="764.7" rx="9.5" ry="6.6" fill="#d6c39b"/><ellipse cx="1326.9" cy="768.4" rx="12.5" ry="10.8" fill="#6b5e4d"/><ellipse cx="1324.9" cy="765.2" rx="12.5" ry="10.8" fill="#bfa983"/><ellipse cx="1374.3" cy="767.5" rx="11.6" ry="7.0" fill="#6b5e4d" transform="rotate(30 1372 765)"/><ellipse cx="1372.5" cy="765.4" rx="11.6" ry="7.0" fill="#d6c39b" transform="rotate(30 1372 765)"/><ellipse cx="1868.8" cy="767.7" rx="7.6" ry="6.7" fill="#6b5e4d"/><ellipse cx="1867.6" cy="765.7" rx="7.6" ry="6.7" fill="#cdb78c"/><ellipse cx="1679.9" cy="768.4" rx="6.8" ry="5.1" fill="#6b5e4d" transform="rotate(30 1679 767)"/><ellipse cx="1678.9" cy="766.9" rx="6.8" ry="5.1" fill="#c4ad84" transform="rotate(30 1679 767)"/><ellipse cx="1735.9" cy="768.3" rx="5.0" ry="3.9" fill="#6b5e4d"/><ellipse cx="1735.1" cy="767.1" rx="5.0" ry="3.9" fill="#c4ad84"/><ellipse cx="1279.2" cy="769.0" rx="7.2" ry="4.8" fill="#6b5e4d"/><ellipse cx="1278.0" cy="767.5" rx="7.2" ry="4.8" fill="#c9b48c"/><ellipse cx="1872.0" cy="769.2" rx="5.4" ry="5.4" fill="#6b5e4d"/><ellipse cx="1871.1" cy="767.6" rx="5.4" ry="5.4" fill="#c9b48c"/><ellipse cx="2040.9" cy="770.6" rx="8.5" ry="8.7" fill="#6b5e4d"/><ellipse cx="2039.5" cy="768.0" rx="8.5" ry="8.7" fill="#dcc98e"/><ellipse cx="1337.2" cy="770.3" rx="6.3" ry="6.2" fill="#6b5e4d"/><ellipse cx="1336.2" cy="768.4" rx="6.3" ry="6.2" fill="#c9b48c"/><ellipse cx="1592.2" cy="770.4" rx="5.9" ry="4.9" fill="#6b5e4d"/><ellipse cx="1591.2" cy="768.9" rx="5.9" ry="4.9" fill="#c4ad84"/><ellipse cx="1640.3" cy="770.5" rx="8.6" ry="5.1" fill="#6b5e4d" transform="rotate(15 1639 769)"/><ellipse cx="1639.0" cy="769.0" rx="8.6" ry="5.1" fill="#cdb78c" transform="rotate(15 1639 769)"/><ellipse cx="1780.1" cy="770.9" rx="7.6" ry="5.5" fill="#6b5e4d" transform="rotate(-15 1779 769)"/><ellipse cx="1778.9" cy="769.2" rx="7.6" ry="5.5" fill="#cdb78c" transform="rotate(-15 1779 769)"/><ellipse cx="2083.5" cy="771.0" rx="7.8" ry="4.4" fill="#6b5e4d" transform="rotate(30 2082 770)"/><ellipse cx="2082.2" cy="769.7" rx="7.8" ry="4.4" fill="#d6c39b" transform="rotate(30 2082 770)"/><ellipse cx="1430.0" cy="771.7" rx="8.5" ry="6.6" fill="#6b5e4d" transform="rotate(-15 1429 770)"/><ellipse cx="1428.6" cy="769.7" rx="8.5" ry="6.6" fill="#dcc9a2" transform="rotate(-15 1429 770)"/><ellipse cx="1735.7" cy="771.1" rx="5.3" ry="4.1" fill="#6b5e4d"/><ellipse cx="1734.8" cy="769.9" rx="5.3" ry="4.1" fill="#c4ad84"/><ellipse cx="1753.8" cy="772.2" rx="8.6" ry="6.8" fill="#6b5e4d"/><ellipse cx="1752.4" cy="770.2" rx="8.6" ry="6.8" fill="#dcc9a2"/><ellipse cx="1813.5" cy="771.8" rx="6.8" ry="4.5" fill="#6b5e4d" transform="rotate(30 1812 770)"/><ellipse cx="1812.4" cy="770.4" rx="6.8" ry="4.5" fill="#c4ad84" transform="rotate(30 1812 770)"/><ellipse cx="1443.3" cy="772.4" rx="7.4" ry="6.2" fill="#6b5e4d" transform="rotate(30 1442 770)"/><ellipse cx="1442.1" cy="770.5" rx="7.4" ry="6.2" fill="#d6c39b" transform="rotate(30 1442 770)"/><ellipse cx="1823.5" cy="771.9" rx="8.4" ry="4.7" fill="#6b5e4d" transform="rotate(-15 1822 771)"/><ellipse cx="1822.1" cy="770.5" rx="8.4" ry="4.7" fill="#c4ad84" transform="rotate(-15 1822 771)"/><ellipse cx="2094.0" cy="771.8" rx="8.0" ry="4.1" fill="#6b5e4d" transform="rotate(30 2093 771)"/><ellipse cx="2092.7" cy="770.6" rx="8.0" ry="4.1" fill="#dcc98e" transform="rotate(30 2093 771)"/><ellipse cx="2097.6" cy="773.5" rx="6.9" ry="7.6" fill="#6b5e4d" transform="rotate(-15 2096 771)"/><ellipse cx="2096.4" cy="771.3" rx="6.9" ry="7.6" fill="#d9c384" transform="rotate(-15 2096 771)"/><ellipse cx="1610.7" cy="772.8" rx="10.4" ry="4.8" fill="#6b5e4d" transform="rotate(-15 1609 771)"/><ellipse cx="1609.1" cy="771.4" rx="10.4" ry="4.8" fill="#b39e7c" transform="rotate(-15 1609 771)"/><ellipse cx="2093.9" cy="773.6" rx="8.3" ry="7.2" fill="#6b5e4d" transform="rotate(-15 2093 771)"/><ellipse cx="2092.6" cy="771.5" rx="8.3" ry="7.2" fill="#dcc98e" transform="rotate(-15 2093 771)"/><ellipse cx="2177.6" cy="773.3" rx="8.1" ry="5.9" fill="#6b5e4d"/><ellipse cx="2176.3" cy="771.5" rx="8.1" ry="5.9" fill="#c2ad6c"/><ellipse cx="1569.0" cy="773.0" rx="5.8" ry="4.4" fill="#6b5e4d"/><ellipse cx="1568.0" cy="771.7" rx="5.8" ry="4.4" fill="#c4ad84"/><ellipse cx="1652.3" cy="773.0" rx="5.2" ry="4.1" fill="#6b5e4d"/><ellipse cx="1651.5" cy="771.8" rx="5.2" ry="4.1" fill="#dcc9a2"/><ellipse cx="1317.3" cy="773.8" rx="7.3" ry="5.5" fill="#6b5e4d" transform="rotate(-15 1316 772)"/><ellipse cx="1316.1" cy="772.2" rx="7.3" ry="5.5" fill="#d3c09a" transform="rotate(-15 1316 772)"/><ellipse cx="1694.9" cy="774.1" rx="8.8" ry="5.7" fill="#6b5e4d" transform="rotate(30 1693 772)"/><ellipse cx="1693.5" cy="772.4" rx="8.8" ry="5.7" fill="#dcc9a2" transform="rotate(30 1693 772)"/><ellipse cx="2014.6" cy="774.0" rx="5.9" ry="4.3" fill="#6b5e4d" transform="rotate(30 2014 773)"/><ellipse cx="2013.7" cy="772.8" rx="5.9" ry="4.3" fill="#d9c384" transform="rotate(30 2014 773)"/><ellipse cx="1717.2" cy="774.5" rx="6.7" ry="5.9" fill="#6b5e4d"/><ellipse cx="1716.2" cy="772.8" rx="6.7" ry="5.9" fill="#cdb78c"/><ellipse cx="2163.3" cy="775.6" rx="11.5" ry="9.2" fill="#6b5e4d"/><ellipse cx="2161.5" cy="772.8" rx="11.5" ry="9.2" fill="#dcc9a2"/><ellipse cx="1605.8" cy="775.2" rx="9.9" ry="7.5" fill="#6b5e4d" transform="rotate(30 1604 773)"/><ellipse cx="1604.2" cy="773.0" rx="9.9" ry="7.5" fill="#b39e7c" transform="rotate(30 1604 773)"/><ellipse cx="2051.9" cy="775.9" rx="8.7" ry="9.8" fill="#6b5e4d"/><ellipse cx="2050.5" cy="773.0" rx="8.7" ry="9.8" fill="#bfa983"/><ellipse cx="2082.5" cy="774.3" rx="8.3" ry="4.0" fill="#6b5e4d" transform="rotate(-15 2081 773)"/><ellipse cx="2081.2" cy="773.2" rx="8.3" ry="4.0" fill="#c2ad6c" transform="rotate(-15 2081 773)"/><ellipse cx="1982.8" cy="775.5" rx="6.5" ry="6.5" fill="#6b5e4d"/><ellipse cx="1981.8" cy="773.6" rx="6.5" ry="6.5" fill="#dcc9a2"/><ellipse cx="1377.8" cy="775.3" rx="5.5" ry="4.7" fill="#6b5e4d" transform="rotate(15 1377 774)"/><ellipse cx="1377.0" cy="773.9" rx="5.5" ry="4.7" fill="#c9b48c" transform="rotate(15 1377 774)"/><ellipse cx="2146.2" cy="776.3" rx="5.8" ry="7.0" fill="#6b5e4d"/><ellipse cx="2145.3" cy="774.2" rx="5.8" ry="7.0" fill="#bfa983"/><ellipse cx="1623.8" cy="776.6" rx="10.6" ry="7.5" fill="#6b5e4d" transform="rotate(15 1622 774)"/><ellipse cx="1622.1" cy="774.4" rx="10.6" ry="7.5" fill="#dcc9a2" transform="rotate(15 1622 774)"/><ellipse cx="1839.6" cy="775.9" rx="5.0" ry="5.1" fill="#6b5e4d"/><ellipse cx="1838.8" cy="774.4" rx="5.0" ry="5.1" fill="#b39e7c"/><ellipse cx="1792.3" cy="775.9" rx="7.6" ry="4.7" fill="#6b5e4d"/><ellipse cx="1791.1" cy="774.5" rx="7.6" ry="4.7" fill="#b39e7c"/><ellipse cx="1308.6" cy="777.1" rx="9.7" ry="6.1" fill="#6b5e4d" transform="rotate(-15 1307 775)"/><ellipse cx="1307.1" cy="775.3" rx="9.7" ry="6.1" fill="#d3c09a" transform="rotate(-15 1307 775)"/><ellipse cx="1497.4" cy="777.2" rx="5.8" ry="6.1" fill="#6b5e4d"/><ellipse cx="1496.4" cy="775.4" rx="5.8" ry="6.1" fill="#b39e7c"/><ellipse cx="1810.0" cy="778.0" rx="7.0" ry="6.5" fill="#6b5e4d" transform="rotate(15 1809 776)"/><ellipse cx="1808.9" cy="776.1" rx="7.0" ry="6.5" fill="#c9b48c" transform="rotate(15 1809 776)"/><ellipse cx="1310.3" cy="777.7" rx="8.7" ry="4.3" fill="#6b5e4d" transform="rotate(15 1309 776)"/><ellipse cx="1308.9" cy="776.4" rx="8.7" ry="4.3" fill="#dcc9a2" transform="rotate(15 1309 776)"/><ellipse cx="1306.7" cy="778.4" rx="5.1" ry="5.1" fill="#6b5e4d" transform="rotate(-15 1306 777)"/><ellipse cx="1305.9" cy="776.9" rx="5.1" ry="5.1" fill="#c9b48c" transform="rotate(-15 1306 777)"/><ellipse cx="2127.9" cy="779.5" rx="5.9" ry="7.3" fill="#6b5e4d"/><ellipse cx="2126.9" cy="777.3" rx="5.9" ry="7.3" fill="#d6c39b"/><ellipse cx="1871.3" cy="779.4" rx="8.5" ry="6.6" fill="#6b5e4d"/><ellipse cx="1870.0" cy="777.4" rx="8.5" ry="6.6" fill="#cdb78c"/><ellipse cx="1870.6" cy="779.9" rx="7.6" ry="7.3" fill="#6b5e4d" transform="rotate(-15 1869 778)"/><ellipse cx="1869.3" cy="777.7" rx="7.6" ry="7.3" fill="#d3c09a" transform="rotate(-15 1869 778)"/><ellipse cx="2004.9" cy="779.6" rx="7.9" ry="5.9" fill="#6b5e4d" transform="rotate(30 2004 778)"/><ellipse cx="2003.7" cy="777.9" rx="7.9" ry="5.9" fill="#cdb78c" transform="rotate(30 2004 778)"/><ellipse cx="2077.7" cy="780.6" rx="10.9" ry="8.4" fill="#6b5e4d" transform="rotate(15 2076 778)"/><ellipse cx="2076.0" cy="778.1" rx="10.9" ry="8.4" fill="#d0b873" transform="rotate(15 2076 778)"/><ellipse cx="1403.8" cy="780.2" rx="6.7" ry="6.3" fill="#6b5e4d"/><ellipse cx="1402.8" cy="778.3" rx="6.7" ry="6.3" fill="#d3c09a"/><ellipse cx="1283.0" cy="781.2" rx="8.4" ry="7.0" fill="#6b5e4d"/><ellipse cx="1281.6" cy="779.1" rx="8.4" ry="7.0" fill="#d6c39b"/><ellipse cx="1282.9" cy="783.2" rx="9.6" ry="6.8" fill="#6b5e4d" transform="rotate(-15 1281 781)"/><ellipse cx="1281.3" cy="781.2" rx="9.6" ry="6.8" fill="#dcc9a2" transform="rotate(-15 1281 781)"/><ellipse cx="1943.6" cy="783.5" rx="10.6" ry="6.0" fill="#6b5e4d"/><ellipse cx="1941.9" cy="781.7" rx="10.6" ry="6.0" fill="#d3c09a"/><ellipse cx="1697.5" cy="784.3" rx="8.9" ry="7.8" fill="#6b5e4d" transform="rotate(-15 1696 782)"/><ellipse cx="1696.0" cy="781.9" rx="8.9" ry="7.8" fill="#b39e7c" transform="rotate(-15 1696 782)"/><ellipse cx="2129.6" cy="784.0" rx="10.1" ry="5.1" fill="#6b5e4d"/><ellipse cx="2128.0" cy="782.4" rx="10.1" ry="5.1" fill="#dcc9a2"/><ellipse cx="1626.0" cy="784.1" rx="8.2" ry="5.4" fill="#6b5e4d"/><ellipse cx="1624.7" cy="782.5" rx="8.2" ry="5.4" fill="#cdb78c"/><ellipse cx="2049.5" cy="785.1" rx="8.2" ry="4.8" fill="#6b5e4d" transform="rotate(-15 2048 784)"/><ellipse cx="2048.2" cy="783.6" rx="8.2" ry="4.8" fill="#dcc98e" transform="rotate(-15 2048 784)"/><ellipse cx="2011.4" cy="786.6" rx="9.2" ry="9.3" fill="#6b5e4d"/><ellipse cx="2009.9" cy="783.8" rx="9.2" ry="9.3" fill="#cdb78c"/><ellipse cx="1421.9" cy="786.0" rx="9.0" ry="7.2" fill="#6b5e4d" transform="rotate(15 1420 784)"/><ellipse cx="1420.4" cy="783.8" rx="9.0" ry="7.2" fill="#c4ad84" transform="rotate(15 1420 784)"/><ellipse cx="1851.3" cy="786.1" rx="7.7" ry="7.3" fill="#6b5e4d"/><ellipse cx="1850.0" cy="783.9" rx="7.7" ry="7.3" fill="#c4ad84"/><ellipse cx="1394.5" cy="785.6" rx="8.1" ry="5.2" fill="#6b5e4d"/><ellipse cx="1393.2" cy="784.1" rx="8.1" ry="5.2" fill="#dcc9a2"/><ellipse cx="1399.8" cy="785.5" rx="5.8" ry="4.7" fill="#6b5e4d"/><ellipse cx="1398.9" cy="784.1" rx="5.8" ry="4.7" fill="#d6c39b"/><ellipse cx="1955.6" cy="785.9" rx="6.8" ry="5.2" fill="#6b5e4d"/><ellipse cx="1954.6" cy="784.3" rx="6.8" ry="5.2" fill="#dcc9a2"/><ellipse cx="1688.3" cy="786.5" rx="7.4" ry="5.3" fill="#6b5e4d"/><ellipse cx="1687.1" cy="784.9" rx="7.4" ry="5.3" fill="#b39e7c"/><ellipse cx="1304.1" cy="786.6" rx="5.1" ry="4.1" fill="#6b5e4d" transform="rotate(-15 1303 785)"/><ellipse cx="1303.3" cy="785.3" rx="5.1" ry="4.1" fill="#c9b48c" transform="rotate(-15 1303 785)"/><ellipse cx="1287.0" cy="787.6" rx="7.8" ry="6.7" fill="#6b5e4d" transform="rotate(30 1286 786)"/><ellipse cx="1285.7" cy="785.6" rx="7.8" ry="6.7" fill="#c9b48c" transform="rotate(30 1286 786)"/><ellipse cx="1817.8" cy="787.5" rx="6.4" ry="4.3" fill="#6b5e4d" transform="rotate(-15 1817 786)"/><ellipse cx="1816.8" cy="786.2" rx="6.4" ry="4.3" fill="#d3c09a" transform="rotate(-15 1817 786)"/><ellipse cx="1591.2" cy="788.1" rx="7.9" ry="4.8" fill="#6b5e4d"/><ellipse cx="1590.0" cy="786.7" rx="7.9" ry="4.8" fill="#bfa983"/><ellipse cx="1530.9" cy="789.1" rx="6.4" ry="7.5" fill="#6b5e4d" transform="rotate(15 1530 787)"/><ellipse cx="1529.8" cy="786.8" rx="6.4" ry="7.5" fill="#d3c09a" transform="rotate(15 1530 787)"/><ellipse cx="1760.2" cy="789.0" rx="5.3" ry="6.9" fill="#6b5e4d" transform="rotate(30 1759 787)"/><ellipse cx="1759.4" cy="786.9" rx="5.3" ry="6.9" fill="#c4ad84" transform="rotate(30 1759 787)"/><ellipse cx="1704.9" cy="788.7" rx="7.0" ry="5.7" fill="#6b5e4d" transform="rotate(30 1704 787)"/><ellipse cx="1703.8" cy="787.0" rx="7.0" ry="5.7" fill="#d6c39b" transform="rotate(30 1704 787)"/><ellipse cx="2076.5" cy="789.7" rx="9.8" ry="8.9" fill="#6b5e4d" transform="rotate(30 2075 787)"/><ellipse cx="2074.9" cy="787.0" rx="9.8" ry="8.9" fill="#d9c384" transform="rotate(30 2075 787)"/><ellipse cx="1463.0" cy="789.9" rx="10.5" ry="7.0" fill="#6b5e4d"/><ellipse cx="1461.3" cy="787.8" rx="10.5" ry="7.0" fill="#dcc9a2"/><ellipse cx="1693.9" cy="790.4" rx="8.9" ry="8.0" fill="#6b5e4d" transform="rotate(15 1692 788)"/><ellipse cx="1692.4" cy="788.0" rx="8.9" ry="8.0" fill="#d6c39b" transform="rotate(15 1692 788)"/><ellipse cx="1438.1" cy="790.3" rx="9.1" ry="7.4" fill="#6b5e4d"/><ellipse cx="1436.6" cy="788.1" rx="9.1" ry="7.4" fill="#cdb78c"/><ellipse cx="1875.5" cy="791.3" rx="10.4" ry="9.2" fill="#6b5e4d"/><ellipse cx="1873.9" cy="788.6" rx="10.4" ry="9.2" fill="#d3c09a"/><ellipse cx="1399.9" cy="791.0" rx="11.2" ry="7.8" fill="#6b5e4d" transform="rotate(30 1398 789)"/><ellipse cx="1398.1" cy="788.7" rx="11.2" ry="7.8" fill="#c9b48c" transform="rotate(30 1398 789)"/><ellipse cx="1714.0" cy="790.8" rx="5.5" ry="6.8" fill="#6b5e4d" transform="rotate(30 1713 789)"/><ellipse cx="1713.2" cy="788.7" rx="5.5" ry="6.8" fill="#dcc9a2" transform="rotate(30 1713 789)"/><ellipse cx="2206.4" cy="791.1" rx="11.9" ry="7.5" fill="#6b5e4d" transform="rotate(30 2205 789)"/><ellipse cx="2204.5" cy="788.8" rx="11.9" ry="7.5" fill="#d9c384" transform="rotate(30 2205 789)"/><ellipse cx="2194.2" cy="791.8" rx="7.0" ry="8.7" fill="#6b5e4d" transform="rotate(15 2193 789)"/><ellipse cx="2193.1" cy="789.2" rx="7.0" ry="8.7" fill="#d0b873" transform="rotate(15 2193 789)"/><ellipse cx="2068.1" cy="791.4" rx="13.8" ry="6.6" fill="#6b5e4d" transform="rotate(-15 2066 789)"/><ellipse cx="2065.9" cy="789.4" rx="13.8" ry="6.6" fill="#c4ad84" transform="rotate(-15 2066 789)"/><ellipse cx="1688.7" cy="793.3" rx="9.7" ry="11.1" fill="#6b5e4d" transform="rotate(30 1687 790)"/><ellipse cx="1687.1" cy="789.9" rx="9.7" ry="11.1" fill="#dcc9a2" transform="rotate(30 1687 790)"/><ellipse cx="2065.5" cy="792.6" rx="9.6" ry="8.3" fill="#6b5e4d" transform="rotate(15 2064 790)"/><ellipse cx="2064.0" cy="790.1" rx="9.6" ry="8.3" fill="#dcc98e" transform="rotate(15 2064 790)"/><ellipse cx="1825.5" cy="791.7" rx="7.6" ry="5.1" fill="#6b5e4d" transform="rotate(-15 1824 790)"/><ellipse cx="1824.3" cy="790.2" rx="7.6" ry="5.1" fill="#c9b48c" transform="rotate(-15 1824 790)"/><ellipse cx="1516.9" cy="792.3" rx="7.4" ry="5.7" fill="#6b5e4d" transform="rotate(15 1516 791)"/><ellipse cx="1515.7" cy="790.6" rx="7.4" ry="5.7" fill="#bfa983" transform="rotate(15 1516 791)"/><ellipse cx="2082.2" cy="792.6" rx="8.0" ry="5.7" fill="#6b5e4d" transform="rotate(-15 2081 791)"/><ellipse cx="2080.9" cy="790.9" rx="8.0" ry="5.7" fill="#d9c384" transform="rotate(-15 2081 791)"/><ellipse cx="2033.0" cy="793.3" rx="7.5" ry="7.6" fill="#6b5e4d" transform="rotate(-15 2032 791)"/><ellipse cx="2031.8" cy="791.0" rx="7.5" ry="7.6" fill="#d0b873" transform="rotate(-15 2032 791)"/><ellipse cx="2171.9" cy="793.8" rx="10.3" ry="7.4" fill="#6b5e4d" transform="rotate(-15 2170 792)"/><ellipse cx="2170.2" cy="791.6" rx="10.3" ry="7.4" fill="#dcc98e" transform="rotate(-15 2170 792)"/><ellipse cx="1363.8" cy="794.0" rx="6.8" ry="6.7" fill="#6b5e4d"/><ellipse cx="1362.7" cy="792.0" rx="6.8" ry="6.7" fill="#dcc9a2"/><ellipse cx="1765.6" cy="793.8" rx="9.5" ry="5.4" fill="#6b5e4d"/><ellipse cx="1764.0" cy="792.2" rx="9.5" ry="5.4" fill="#cdb78c"/><ellipse cx="1329.2" cy="794.5" rx="5.9" ry="7.1" fill="#6b5e4d" transform="rotate(30 1328 792)"/><ellipse cx="1328.3" cy="792.4" rx="5.9" ry="7.1" fill="#c4ad84" transform="rotate(30 1328 792)"/><ellipse cx="1881.5" cy="794.0" rx="8.1" ry="4.9" fill="#6b5e4d" transform="rotate(15 1880 793)"/><ellipse cx="1880.2" cy="792.6" rx="8.1" ry="4.9" fill="#dcc9a2" transform="rotate(15 1880 793)"/><ellipse cx="2177.8" cy="794.8" rx="5.8" ry="6.6" fill="#6b5e4d" transform="rotate(15 2177 793)"/><ellipse cx="2176.9" cy="792.9" rx="5.8" ry="6.6" fill="#d3c09a" transform="rotate(15 2177 793)"/><ellipse cx="1727.9" cy="794.9" rx="8.6" ry="5.0" fill="#6b5e4d" transform="rotate(-15 1727 793)"/><ellipse cx="1726.5" cy="793.4" rx="8.6" ry="5.0" fill="#b39e7c" transform="rotate(-15 1727 793)"/><ellipse cx="1602.8" cy="795.6" rx="9.3" ry="6.1" fill="#6b5e4d" transform="rotate(15 1601 794)"/><ellipse cx="1601.3" cy="793.8" rx="9.3" ry="6.1" fill="#cdb78c" transform="rotate(15 1601 794)"/><ellipse cx="1996.0" cy="795.9" rx="8.5" ry="6.5" fill="#6b5e4d" transform="rotate(-15 1995 794)"/><ellipse cx="1994.7" cy="794.0" rx="8.5" ry="6.5" fill="#d3c09a" transform="rotate(-15 1995 794)"/><ellipse cx="1997.7" cy="795.9" rx="7.9" ry="6.2" fill="#6b5e4d" transform="rotate(15 1996 794)"/><ellipse cx="1996.4" cy="794.0" rx="7.9" ry="6.2" fill="#bfa983" transform="rotate(15 1996 794)"/><ellipse cx="1479.1" cy="796.7" rx="7.7" ry="6.1" fill="#6b5e4d"/><ellipse cx="1477.9" cy="794.8" rx="7.7" ry="6.1" fill="#bfa983"/><ellipse cx="1522.5" cy="797.6" rx="9.1" ry="7.1" fill="#6b5e4d"/><ellipse cx="1521.1" cy="795.5" rx="9.1" ry="7.1" fill="#c4ad84"/><ellipse cx="2176.1" cy="797.3" rx="8.5" ry="5.2" fill="#6b5e4d" transform="rotate(15 2175 796)"/><ellipse cx="2174.7" cy="795.7" rx="8.5" ry="5.2" fill="#c2ad6c" transform="rotate(15 2175 796)"/><ellipse cx="1561.9" cy="799.6" rx="15.5" ry="10.2" fill="#6b5e4d"/><ellipse cx="1559.4" cy="796.5" rx="15.5" ry="10.2" fill="#bfa983"/><ellipse cx="1877.5" cy="799.7" rx="7.4" ry="8.9" fill="#6b5e4d"/><ellipse cx="1876.4" cy="797.0" rx="7.4" ry="8.9" fill="#dcc9a2"/><ellipse cx="2173.7" cy="799.4" rx="8.5" ry="6.5" fill="#6b5e4d" transform="rotate(15 2172 797)"/><ellipse cx="2172.4" cy="797.4" rx="8.5" ry="6.5" fill="#c4ad84" transform="rotate(15 2172 797)"/><ellipse cx="1958.8" cy="800.4" rx="6.4" ry="7.4" fill="#6b5e4d" transform="rotate(30 1958 798)"/><ellipse cx="1957.8" cy="798.2" rx="6.4" ry="7.4" fill="#bfa983" transform="rotate(30 1958 798)"/><ellipse cx="2181.1" cy="800.5" rx="12.4" ry="6.2" fill="#6b5e4d" transform="rotate(30 2179 799)"/><ellipse cx="2179.1" cy="798.6" rx="12.4" ry="6.2" fill="#d9c384" transform="rotate(30 2179 799)"/><ellipse cx="1299.4" cy="800.8" rx="8.7" ry="6.9" fill="#6b5e4d"/><ellipse cx="1298.0" cy="798.8" rx="8.7" ry="6.9" fill="#b39e7c"/><ellipse cx="2162.0" cy="800.7" rx="6.1" ry="6.2" fill="#6b5e4d" transform="rotate(-15 2161 799)"/><ellipse cx="2161.0" cy="798.8" rx="6.1" ry="6.2" fill="#c2ad6c" transform="rotate(-15 2161 799)"/><ellipse cx="1856.5" cy="801.4" rx="11.0" ry="7.8" fill="#6b5e4d"/><ellipse cx="1854.8" cy="799.1" rx="11.0" ry="7.8" fill="#c9b48c"/><ellipse cx="2156.9" cy="801.6" rx="10.7" ry="7.6" fill="#6b5e4d"/><ellipse cx="2155.2" cy="799.4" rx="10.7" ry="7.6" fill="#dcc98e"/><ellipse cx="1854.4" cy="802.8" rx="8.8" ry="11.3" fill="#6b5e4d" transform="rotate(30 1853 799)"/><ellipse cx="1853.0" cy="799.4" rx="8.8" ry="11.3" fill="#dcc9a2" transform="rotate(30 1853 799)"/><ellipse cx="1353.3" cy="802.4" rx="11.4" ry="8.2" fill="#6b5e4d"/><ellipse cx="1351.5" cy="799.9" rx="11.4" ry="8.2" fill="#c9b48c"/><ellipse cx="1697.3" cy="801.6" rx="9.8" ry="5.2" fill="#6b5e4d" transform="rotate(30 1696 800)"/><ellipse cx="1695.8" cy="800.0" rx="9.8" ry="5.2" fill="#cdb78c" transform="rotate(30 1696 800)"/><ellipse cx="1661.7" cy="802.4" rx="8.0" ry="5.0" fill="#6b5e4d" transform="rotate(30 1660 801)"/><ellipse cx="1660.4" cy="800.9" rx="8.0" ry="5.0" fill="#d6c39b" transform="rotate(30 1660 801)"/><ellipse cx="1432.9" cy="803.1" rx="6.8" ry="6.6" fill="#6b5e4d"/><ellipse cx="1431.8" cy="801.1" rx="6.8" ry="6.6" fill="#c9b48c"/><ellipse cx="1942.0" cy="803.3" rx="6.5" ry="5.4" fill="#6b5e4d" transform="rotate(30 1941 802)"/><ellipse cx="1941.0" cy="801.7" rx="6.5" ry="5.4" fill="#c9b48c" transform="rotate(30 1941 802)"/><ellipse cx="1319.8" cy="803.0" rx="8.0" ry="4.5" fill="#6b5e4d"/><ellipse cx="1318.5" cy="801.7" rx="8.0" ry="4.5" fill="#c9b48c"/><ellipse cx="1983.2" cy="803.5" rx="8.3" ry="5.0" fill="#6b5e4d"/><ellipse cx="1981.8" cy="802.0" rx="8.3" ry="5.0" fill="#d3c09a"/><ellipse cx="1269.3" cy="805.9" rx="9.6" ry="10.2" fill="#6b5e4d"/><ellipse cx="1267.8" cy="802.8" rx="9.6" ry="10.2" fill="#d3c09a"/><ellipse cx="2167.2" cy="805.5" rx="12.6" ry="7.9" fill="#6b5e4d"/><ellipse cx="2165.2" cy="803.1" rx="12.6" ry="7.9" fill="#d9c384"/><ellipse cx="1772.1" cy="805.5" rx="8.6" ry="5.0" fill="#6b5e4d"/><ellipse cx="1770.7" cy="804.0" rx="8.6" ry="5.0" fill="#c4ad84"/><ellipse cx="1764.7" cy="806.2" rx="7.1" ry="5.8" fill="#6b5e4d"/><ellipse cx="1763.5" cy="804.5" rx="7.1" ry="5.8" fill="#b39e7c"/><ellipse cx="1771.1" cy="806.0" rx="8.9" ry="4.8" fill="#6b5e4d"/><ellipse cx="1769.7" cy="804.6" rx="8.9" ry="4.8" fill="#c9b48c"/><ellipse cx="1320.1" cy="807.1" rx="9.3" ry="7.6" fill="#6b5e4d" transform="rotate(30 1319 805)"/><ellipse cx="1318.6" cy="804.8" rx="9.3" ry="7.6" fill="#dcc9a2" transform="rotate(30 1319 805)"/><ellipse cx="1813.2" cy="808.0" rx="9.3" ry="8.8" fill="#6b5e4d"/><ellipse cx="1811.7" cy="805.3" rx="9.3" ry="8.8" fill="#b39e7c"/><ellipse cx="1689.5" cy="808.6" rx="7.7" ry="10.1" fill="#6b5e4d" transform="rotate(30 1688 806)"/><ellipse cx="1688.3" cy="805.6" rx="7.7" ry="10.1" fill="#dcc9a2" transform="rotate(30 1688 806)"/><ellipse cx="1454.2" cy="808.0" rx="6.0" ry="7.7" fill="#6b5e4d" transform="rotate(30 1453 806)"/><ellipse cx="1453.3" cy="805.7" rx="6.0" ry="7.7" fill="#bfa983" transform="rotate(30 1453 806)"/><ellipse cx="1443.0" cy="807.7" rx="8.6" ry="6.1" fill="#6b5e4d"/><ellipse cx="1441.6" cy="805.8" rx="8.6" ry="6.1" fill="#c4ad84"/><ellipse cx="1469.5" cy="808.1" rx="7.1" ry="6.7" fill="#6b5e4d"/><ellipse cx="1468.4" cy="806.0" rx="7.1" ry="6.7" fill="#d3c09a"/><ellipse cx="2036.2" cy="808.1" rx="8.6" ry="6.9" fill="#6b5e4d" transform="rotate(-15 2035 806)"/><ellipse cx="2034.8" cy="806.1" rx="8.6" ry="6.9" fill="#dcc98e" transform="rotate(-15 2035 806)"/><ellipse cx="2001.4" cy="808.3" rx="8.2" ry="5.7" fill="#6b5e4d" transform="rotate(15 2000 807)"/><ellipse cx="2000.1" cy="806.6" rx="8.2" ry="5.7" fill="#b39e7c" transform="rotate(15 2000 807)"/><ellipse cx="1563.3" cy="808.5" rx="9.9" ry="6.2" fill="#6b5e4d" transform="rotate(30 1562 807)"/><ellipse cx="1561.7" cy="806.6" rx="9.9" ry="6.2" fill="#c9b48c" transform="rotate(30 1562 807)"/><ellipse cx="1949.9" cy="810.4" rx="8.0" ry="8.9" fill="#6b5e4d"/><ellipse cx="1948.6" cy="807.7" rx="8.0" ry="8.9" fill="#c9b48c"/><ellipse cx="1417.9" cy="809.4" rx="8.0" ry="5.2" fill="#6b5e4d" transform="rotate(15 1417 808)"/><ellipse cx="1416.7" cy="807.8" rx="8.0" ry="5.2" fill="#b39e7c" transform="rotate(15 1417 808)"/><ellipse cx="1821.2" cy="810.3" rx="9.4" ry="6.8" fill="#6b5e4d" transform="rotate(15 1820 808)"/><ellipse cx="1819.7" cy="808.2" rx="9.4" ry="6.8" fill="#cdb78c" transform="rotate(15 1820 808)"/><ellipse cx="1985.6" cy="811.2" rx="8.0" ry="8.2" fill="#6b5e4d"/><ellipse cx="1984.4" cy="808.7" rx="8.0" ry="8.2" fill="#c4ad84"/><ellipse cx="1594.4" cy="810.9" rx="8.9" ry="7.2" fill="#6b5e4d" transform="rotate(30 1593 809)"/><ellipse cx="1593.0" cy="808.7" rx="8.9" ry="7.2" fill="#c4ad84" transform="rotate(30 1593 809)"/><ellipse cx="1392.4" cy="812.5" rx="10.8" ry="11.6" fill="#6b5e4d"/><ellipse cx="1390.7" cy="809.0" rx="10.8" ry="11.6" fill="#d6c39b"/><ellipse cx="1891.2" cy="813.4" rx="10.4" ry="7.9" fill="#6b5e4d"/><ellipse cx="1889.5" cy="811.1" rx="10.4" ry="7.9" fill="#bfa983"/><ellipse cx="1951.5" cy="813.3" rx="13.7" ry="6.7" fill="#6b5e4d" transform="rotate(-15 1949 811)"/><ellipse cx="1949.3" cy="811.3" rx="13.7" ry="6.7" fill="#d3c09a" transform="rotate(-15 1949 811)"/><ellipse cx="1586.8" cy="813.5" rx="7.4" ry="7.1" fill="#6b5e4d" transform="rotate(-15 1586 811)"/><ellipse cx="1585.6" cy="811.4" rx="7.4" ry="7.1" fill="#cdb78c" transform="rotate(-15 1586 811)"/><ellipse cx="1752.1" cy="815.0" rx="14.2" ry="11.7" fill="#6b5e4d" transform="rotate(-15 1750 812)"/><ellipse cx="1749.8" cy="811.5" rx="14.2" ry="11.7" fill="#bfa983" transform="rotate(-15 1750 812)"/><ellipse cx="1715.6" cy="813.2" rx="7.7" ry="5.0" fill="#6b5e4d" transform="rotate(-15 1714 812)"/><ellipse cx="1714.4" cy="811.7" rx="7.7" ry="5.0" fill="#c9b48c" transform="rotate(-15 1714 812)"/><ellipse cx="1432.8" cy="813.9" rx="9.7" ry="6.7" fill="#6b5e4d"/><ellipse cx="1431.2" cy="811.9" rx="9.7" ry="6.7" fill="#b39e7c"/><ellipse cx="2081.9" cy="814.3" rx="8.4" ry="7.5" fill="#6b5e4d"/><ellipse cx="2080.6" cy="812.0" rx="8.4" ry="7.5" fill="#c9b48c"/><ellipse cx="2155.6" cy="815.7" rx="8.6" ry="6.8" fill="#6b5e4d"/><ellipse cx="2154.3" cy="813.7" rx="8.6" ry="6.8" fill="#c4ad84"/><ellipse cx="1882.8" cy="816.5" rx="8.6" ry="8.1" fill="#6b5e4d" transform="rotate(-15 1881 814)"/><ellipse cx="1881.4" cy="814.0" rx="8.6" ry="8.1" fill="#b39e7c" transform="rotate(-15 1881 814)"/><ellipse cx="1987.0" cy="816.4" rx="8.4" ry="7.9" fill="#6b5e4d" transform="rotate(30 1986 814)"/><ellipse cx="1985.7" cy="814.0" rx="8.4" ry="7.9" fill="#c4ad84" transform="rotate(30 1986 814)"/><ellipse cx="2124.7" cy="816.3" rx="8.5" ry="6.9" fill="#6b5e4d" transform="rotate(30 2123 814)"/><ellipse cx="2123.4" cy="814.2" rx="8.5" ry="6.9" fill="#d9c384" transform="rotate(30 2123 814)"/><ellipse cx="1510.8" cy="817.6" rx="12.9" ry="10.8" fill="#6b5e4d"/><ellipse cx="1508.7" cy="814.3" rx="12.9" ry="10.8" fill="#b39e7c"/><ellipse cx="1627.3" cy="816.1" rx="8.8" ry="5.7" fill="#6b5e4d"/><ellipse cx="1625.8" cy="814.4" rx="8.8" ry="5.7" fill="#d6c39b"/><ellipse cx="1927.4" cy="816.3" rx="7.4" ry="6.4" fill="#6b5e4d" transform="rotate(15 1926 814)"/><ellipse cx="1926.2" cy="814.4" rx="7.4" ry="6.4" fill="#bfa983" transform="rotate(15 1926 814)"/><ellipse cx="1464.5" cy="816.2" rx="8.8" ry="5.6" fill="#6b5e4d"/><ellipse cx="1463.1" cy="814.5" rx="8.8" ry="5.6" fill="#cdb78c"/><ellipse cx="1743.7" cy="816.8" rx="11.8" ry="7.6" fill="#6b5e4d"/><ellipse cx="1741.8" cy="814.6" rx="11.8" ry="7.6" fill="#b39e7c"/><ellipse cx="2038.3" cy="816.9" rx="11.4" ry="5.8" fill="#6b5e4d" transform="rotate(15 2036 815)"/><ellipse cx="2036.4" cy="815.2" rx="11.4" ry="5.8" fill="#bfa983" transform="rotate(15 2036 815)"/><ellipse cx="1654.7" cy="819.7" rx="7.4" ry="9.5" fill="#6b5e4d" transform="rotate(30 1654 817)"/><ellipse cx="1653.5" cy="816.9" rx="7.4" ry="9.5" fill="#c4ad84" transform="rotate(30 1654 817)"/><ellipse cx="2185.6" cy="819.9" rx="15.3" ry="9.1" fill="#6b5e4d" transform="rotate(30 2183 817)"/><ellipse cx="2183.2" cy="817.2" rx="15.3" ry="9.1" fill="#c4ad84" transform="rotate(30 2183 817)"/><ellipse cx="1341.9" cy="819.2" rx="6.7" ry="6.0" fill="#6b5e4d" transform="rotate(15 1341 817)"/><ellipse cx="1340.8" cy="817.4" rx="6.7" ry="6.0" fill="#d3c09a" transform="rotate(15 1341 817)"/><ellipse cx="1699.0" cy="820.3" rx="8.6" ry="9.2" fill="#6b5e4d" transform="rotate(15 1698 817)"/><ellipse cx="1697.7" cy="817.5" rx="8.6" ry="9.2" fill="#d3c09a" transform="rotate(15 1698 817)"/><ellipse cx="1542.4" cy="820.3" rx="6.8" ry="7.6" fill="#6b5e4d" transform="rotate(30 1541 818)"/><ellipse cx="1541.3" cy="818.0" rx="6.8" ry="7.6" fill="#cdb78c" transform="rotate(30 1541 818)"/><ellipse cx="1975.0" cy="821.8" rx="8.2" ry="10.7" fill="#6b5e4d" transform="rotate(-15 1974 819)"/><ellipse cx="1973.7" cy="818.6" rx="8.2" ry="10.7" fill="#bfa983" transform="rotate(-15 1974 819)"/><ellipse cx="1270.8" cy="820.6" rx="10.0" ry="6.4" fill="#6b5e4d"/><ellipse cx="1269.2" cy="818.7" rx="10.0" ry="6.4" fill="#c9b48c"/><ellipse cx="1365.9" cy="822.1" rx="11.7" ry="11.2" fill="#6b5e4d" transform="rotate(-15 1364 819)"/><ellipse cx="1364.0" cy="818.8" rx="11.7" ry="11.2" fill="#d6c39b" transform="rotate(-15 1364 819)"/><ellipse cx="1883.0" cy="822.2" rx="14.0" ry="10.5" fill="#6b5e4d" transform="rotate(30 1881 819)"/><ellipse cx="1880.8" cy="819.0" rx="14.0" ry="10.5" fill="#c4ad84" transform="rotate(30 1881 819)"/><ellipse cx="1652.8" cy="820.8" rx="8.7" ry="5.4" fill="#6b5e4d" transform="rotate(-15 1651 819)"/><ellipse cx="1651.4" cy="819.2" rx="8.7" ry="5.4" fill="#bfa983" transform="rotate(-15 1651 819)"/><ellipse cx="1589.2" cy="822.0" rx="6.0" ry="7.7" fill="#6b5e4d" transform="rotate(30 1588 820)"/><ellipse cx="1588.2" cy="819.6" rx="6.0" ry="7.7" fill="#dcc9a2" transform="rotate(30 1588 820)"/><ellipse cx="1367.1" cy="821.7" rx="9.3" ry="6.6" fill="#6b5e4d" transform="rotate(30 1366 820)"/><ellipse cx="1365.6" cy="819.8" rx="9.3" ry="6.6" fill="#d6c39b" transform="rotate(30 1366 820)"/><ellipse cx="1666.2" cy="823.0" rx="11.4" ry="7.6" fill="#6b5e4d" transform="rotate(-15 1664 821)"/><ellipse cx="1664.4" cy="820.7" rx="11.4" ry="7.6" fill="#c9b48c" transform="rotate(-15 1664 821)"/><ellipse cx="1637.2" cy="822.6" rx="8.1" ry="6.2" fill="#6b5e4d"/><ellipse cx="1635.9" cy="820.8" rx="8.1" ry="6.2" fill="#bfa983"/><ellipse cx="2154.0" cy="823.8" rx="10.1" ry="7.7" fill="#6b5e4d"/><ellipse cx="2152.3" cy="821.6" rx="10.1" ry="7.7" fill="#dcc98e"/><ellipse cx="1460.8" cy="823.3" rx="7.2" ry="5.1" fill="#6b5e4d"/><ellipse cx="1459.6" cy="821.8" rx="7.2" ry="5.1" fill="#b39e7c"/><ellipse cx="1390.0" cy="823.6" rx="8.2" ry="5.6" fill="#6b5e4d"/><ellipse cx="1388.7" cy="821.9" rx="8.2" ry="5.6" fill="#cdb78c"/><ellipse cx="1880.7" cy="824.4" rx="8.0" ry="7.3" fill="#6b5e4d" transform="rotate(15 1879 822)"/><ellipse cx="1879.5" cy="822.2" rx="8.0" ry="7.3" fill="#bfa983" transform="rotate(15 1879 822)"/><ellipse cx="1624.4" cy="824.6" rx="10.1" ry="6.7" fill="#6b5e4d" transform="rotate(30 1623 823)"/><ellipse cx="1622.8" cy="822.6" rx="10.1" ry="6.7" fill="#b39e7c" transform="rotate(30 1623 823)"/><ellipse cx="1368.2" cy="824.2" rx="7.6" ry="5.0" fill="#6b5e4d" transform="rotate(-15 1367 823)"/><ellipse cx="1367.0" cy="822.7" rx="7.6" ry="5.0" fill="#d3c09a" transform="rotate(-15 1367 823)"/><ellipse cx="1444.1" cy="824.4" rx="8.4" ry="5.0" fill="#6b5e4d"/><ellipse cx="1442.7" cy="822.9" rx="8.4" ry="5.0" fill="#c9b48c"/><ellipse cx="1287.7" cy="825.1" rx="7.0" ry="6.4" fill="#6b5e4d" transform="rotate(-15 1287 823)"/><ellipse cx="1286.6" cy="823.2" rx="7.0" ry="6.4" fill="#dcc9a2" transform="rotate(-15 1287 823)"/><ellipse cx="2145.9" cy="825.7" rx="8.1" ry="7.7" fill="#6b5e4d"/><ellipse cx="2144.6" cy="823.4" rx="8.1" ry="7.7" fill="#bfa983"/><ellipse cx="1319.6" cy="825.7" rx="9.5" ry="7.0" fill="#6b5e4d"/><ellipse cx="1318.1" cy="823.6" rx="9.5" ry="7.0" fill="#bfa983"/><ellipse cx="1594.4" cy="827.4" rx="13.0" ry="11.1" fill="#6b5e4d" transform="rotate(30 1592 824)"/><ellipse cx="1592.3" cy="824.1" rx="13.0" ry="11.1" fill="#d3c09a" transform="rotate(30 1592 824)"/><ellipse cx="2025.3" cy="825.7" rx="10.0" ry="4.9" fill="#6b5e4d" transform="rotate(-15 2024 824)"/><ellipse cx="2023.7" cy="824.2" rx="10.0" ry="4.9" fill="#b39e7c" transform="rotate(-15 2024 824)"/><ellipse cx="1642.0" cy="827.2" rx="9.3" ry="9.0" fill="#6b5e4d" transform="rotate(15 1641 824)"/><ellipse cx="1640.5" cy="824.5" rx="9.3" ry="9.0" fill="#c4ad84" transform="rotate(15 1641 824)"/><ellipse cx="1411.8" cy="827.6" rx="12.8" ry="8.5" fill="#6b5e4d"/><ellipse cx="1409.7" cy="825.0" rx="12.8" ry="8.5" fill="#c9b48c"/><ellipse cx="1576.0" cy="826.7" rx="9.0" ry="5.5" fill="#6b5e4d" transform="rotate(15 1575 825)"/><ellipse cx="1574.6" cy="825.1" rx="9.0" ry="5.5" fill="#c4ad84" transform="rotate(15 1575 825)"/><ellipse cx="2031.5" cy="827.3" rx="8.5" ry="7.0" fill="#6b5e4d" transform="rotate(15 2030 825)"/><ellipse cx="2030.1" cy="825.2" rx="8.5" ry="7.0" fill="#c2ad6c" transform="rotate(15 2030 825)"/><ellipse cx="2140.6" cy="827.9" rx="11.2" ry="6.8" fill="#6b5e4d" transform="rotate(15 2139 826)"/><ellipse cx="2138.8" cy="825.9" rx="11.2" ry="6.8" fill="#d0b873" transform="rotate(15 2139 826)"/><ellipse cx="1876.6" cy="828.5" rx="7.7" ry="7.9" fill="#6b5e4d" transform="rotate(30 1875 826)"/><ellipse cx="1875.4" cy="826.1" rx="7.7" ry="7.9" fill="#d6c39b" transform="rotate(30 1875 826)"/><ellipse cx="2143.8" cy="829.5" rx="13.6" ry="10.6" fill="#6b5e4d"/><ellipse cx="2141.6" cy="826.3" rx="13.6" ry="10.6" fill="#d3c09a"/><ellipse cx="1994.0" cy="829.7" rx="13.4" ry="9.8" fill="#6b5e4d"/><ellipse cx="1991.9" cy="826.8" rx="13.4" ry="9.8" fill="#c9b48c"/><ellipse cx="1333.2" cy="829.1" rx="10.5" ry="7.1" fill="#6b5e4d" transform="rotate(15 1332 827)"/><ellipse cx="1331.5" cy="826.9" rx="10.5" ry="7.1" fill="#dcc9a2" transform="rotate(15 1332 827)"/><ellipse cx="1702.4" cy="829.9" rx="11.9" ry="8.2" fill="#6b5e4d" transform="rotate(-15 1700 827)"/><ellipse cx="1700.5" cy="827.4" rx="11.9" ry="8.2" fill="#b39e7c" transform="rotate(-15 1700 827)"/><ellipse cx="2022.8" cy="830.6" rx="11.0" ry="7.5" fill="#6b5e4d"/><ellipse cx="2021.0" cy="828.4" rx="11.0" ry="7.5" fill="#c2ad6c"/><ellipse cx="1468.9" cy="830.8" rx="13.6" ry="8.0" fill="#6b5e4d"/><ellipse cx="1466.7" cy="828.4" rx="13.6" ry="8.0" fill="#d6c39b"/><ellipse cx="2022.1" cy="831.6" rx="11.0" ry="7.8" fill="#6b5e4d" transform="rotate(-15 2020 829)"/><ellipse cx="2020.3" cy="829.2" rx="11.0" ry="7.8" fill="#c2ad6c" transform="rotate(-15 2020 829)"/><ellipse cx="1878.2" cy="832.0" rx="10.4" ry="7.6" fill="#6b5e4d" transform="rotate(30 1877 830)"/><ellipse cx="1876.5" cy="829.7" rx="10.4" ry="7.6" fill="#dcc9a2" transform="rotate(30 1877 830)"/><ellipse cx="1977.2" cy="832.6" rx="9.8" ry="8.4" fill="#6b5e4d" transform="rotate(15 1976 830)"/><ellipse cx="1975.6" cy="830.0" rx="9.8" ry="8.4" fill="#cdb78c" transform="rotate(15 1976 830)"/><ellipse cx="1676.1" cy="832.6" rx="10.2" ry="7.1" fill="#6b5e4d" transform="rotate(15 1674 830)"/><ellipse cx="1674.5" cy="830.5" rx="10.2" ry="7.1" fill="#d6c39b" transform="rotate(15 1674 830)"/><ellipse cx="1554.3" cy="832.7" rx="8.0" ry="6.6" fill="#6b5e4d" transform="rotate(15 1553 831)"/><ellipse cx="1553.0" cy="830.7" rx="8.0" ry="6.6" fill="#c9b48c" transform="rotate(15 1553 831)"/><ellipse cx="1778.9" cy="833.4" rx="7.7" ry="8.3" fill="#6b5e4d" transform="rotate(-15 1778 831)"/><ellipse cx="1777.7" cy="830.9" rx="7.7" ry="8.3" fill="#c9b48c" transform="rotate(-15 1778 831)"/><ellipse cx="1661.6" cy="833.4" rx="9.7" ry="6.5" fill="#6b5e4d" transform="rotate(30 1660 831)"/><ellipse cx="1660.1" cy="831.4" rx="9.7" ry="6.5" fill="#c4ad84" transform="rotate(30 1660 831)"/><ellipse cx="1552.2" cy="833.4" rx="11.6" ry="6.5" fill="#6b5e4d"/><ellipse cx="1550.3" cy="831.5" rx="11.6" ry="6.5" fill="#b39e7c"/><ellipse cx="2008.5" cy="834.3" rx="6.9" ry="5.8" fill="#6b5e4d" transform="rotate(30 2007 833)"/><ellipse cx="2007.4" cy="832.6" rx="6.9" ry="5.8" fill="#c9b48c" transform="rotate(30 2007 833)"/><ellipse cx="1778.8" cy="834.9" rx="11.4" ry="6.7" fill="#6b5e4d" transform="rotate(30 1777 833)"/><ellipse cx="1777.0" cy="832.9" rx="11.4" ry="6.7" fill="#d3c09a" transform="rotate(30 1777 833)"/><ellipse cx="1595.1" cy="836.5" rx="16.6" ry="11.1" fill="#6b5e4d"/><ellipse cx="1592.4" cy="833.2" rx="16.6" ry="11.1" fill="#c9b48c"/><ellipse cx="2114.2" cy="836.2" rx="12.7" ry="9.4" fill="#6b5e4d"/><ellipse cx="2112.2" cy="833.4" rx="12.7" ry="9.4" fill="#dcc98e"/><ellipse cx="1975.7" cy="835.5" rx="10.7" ry="6.3" fill="#6b5e4d" transform="rotate(-15 1974 834)"/><ellipse cx="1974.0" cy="833.6" rx="10.7" ry="6.3" fill="#dcc9a2" transform="rotate(-15 1974 834)"/><ellipse cx="1470.6" cy="836.0" rx="8.6" ry="5.6" fill="#6b5e4d"/><ellipse cx="1469.2" cy="834.3" rx="8.6" ry="5.6" fill="#b39e7c"/><ellipse cx="2084.8" cy="837.3" rx="8.7" ry="9.8" fill="#6b5e4d" transform="rotate(15 2083 834)"/><ellipse cx="2083.4" cy="834.3" rx="8.7" ry="9.8" fill="#dcc98e" transform="rotate(15 2083 834)"/><ellipse cx="1333.6" cy="836.6" rx="7.2" ry="6.1" fill="#6b5e4d" transform="rotate(15 1332 835)"/><ellipse cx="1332.5" cy="834.8" rx="7.2" ry="6.1" fill="#cdb78c" transform="rotate(15 1332 835)"/><ellipse cx="1492.9" cy="837.1" rx="10.6" ry="7.0" fill="#6b5e4d"/><ellipse cx="1491.3" cy="835.0" rx="10.6" ry="7.0" fill="#c4ad84"/><ellipse cx="1361.9" cy="838.6" rx="11.3" ry="8.4" fill="#6b5e4d" transform="rotate(-15 1360 836)"/><ellipse cx="1360.1" cy="836.1" rx="11.3" ry="8.4" fill="#bfa983" transform="rotate(-15 1360 836)"/><ellipse cx="1553.7" cy="839.5" rx="9.2" ry="9.4" fill="#6b5e4d" transform="rotate(30 1552 837)"/><ellipse cx="1552.2" cy="836.7" rx="9.2" ry="9.4" fill="#b39e7c" transform="rotate(30 1552 837)"/><ellipse cx="1776.3" cy="838.7" rx="9.3" ry="5.8" fill="#6b5e4d"/><ellipse cx="1774.8" cy="837.0" rx="9.3" ry="5.8" fill="#b39e7c"/><ellipse cx="1980.8" cy="840.3" rx="8.8" ry="11.0" fill="#6b5e4d"/><ellipse cx="1979.4" cy="837.0" rx="8.8" ry="11.0" fill="#dcc9a2"/><ellipse cx="1744.8" cy="840.6" rx="15.0" ry="11.0" fill="#6b5e4d" transform="rotate(-15 1742 837)"/><ellipse cx="1742.4" cy="837.3" rx="15.0" ry="11.0" fill="#dcc9a2" transform="rotate(-15 1742 837)"/><ellipse cx="1538.8" cy="840.3" rx="10.4" ry="7.8" fill="#6b5e4d" transform="rotate(-15 1537 838)"/><ellipse cx="1537.1" cy="838.0" rx="10.4" ry="7.8" fill="#c9b48c" transform="rotate(-15 1537 838)"/><ellipse cx="1935.8" cy="840.4" rx="8.3" ry="7.1" fill="#6b5e4d" transform="rotate(15 1934 838)"/><ellipse cx="1934.4" cy="838.3" rx="8.3" ry="7.1" fill="#bfa983" transform="rotate(15 1934 838)"/><ellipse cx="2053.4" cy="840.6" rx="10.7" ry="7.1" fill="#6b5e4d" transform="rotate(15 2052 838)"/><ellipse cx="2051.7" cy="838.5" rx="10.7" ry="7.1" fill="#c2ad6c" transform="rotate(15 2052 838)"/><ellipse cx="1786.6" cy="840.6" rx="12.5" ry="6.9" fill="#6b5e4d" transform="rotate(15 1785 839)"/><ellipse cx="1784.6" cy="838.5" rx="12.5" ry="6.9" fill="#c4ad84" transform="rotate(15 1785 839)"/><ellipse cx="1556.0" cy="841.5" rx="10.2" ry="9.7" fill="#6b5e4d"/><ellipse cx="1554.3" cy="838.6" rx="10.2" ry="9.7" fill="#dcc9a2"/><ellipse cx="1544.7" cy="841.2" rx="10.3" ry="8.2" fill="#6b5e4d" transform="rotate(-15 1543 839)"/><ellipse cx="1543.0" cy="838.8" rx="10.3" ry="8.2" fill="#d3c09a" transform="rotate(-15 1543 839)"/><ellipse cx="1934.2" cy="841.2" rx="10.9" ry="8.1" fill="#6b5e4d"/><ellipse cx="1932.4" cy="838.8" rx="10.9" ry="8.1" fill="#c9b48c"/><ellipse cx="2000.0" cy="842.7" rx="11.5" ry="9.6" fill="#6b5e4d" transform="rotate(-15 1998 840)"/><ellipse cx="1998.2" cy="839.8" rx="11.5" ry="9.6" fill="#cdb78c" transform="rotate(-15 1998 840)"/><ellipse cx="1595.9" cy="842.7" rx="8.5" ry="8.9" fill="#6b5e4d"/><ellipse cx="1594.6" cy="840.0" rx="8.5" ry="8.9" fill="#c4ad84"/><ellipse cx="2194.9" cy="843.3" rx="8.1" ry="9.0" fill="#6b5e4d" transform="rotate(30 2194 841)"/><ellipse cx="2193.6" cy="840.6" rx="8.1" ry="9.0" fill="#c9b48c" transform="rotate(30 2194 841)"/><ellipse cx="1426.2" cy="843.3" rx="7.0" ry="8.4" fill="#6b5e4d" transform="rotate(30 1425 841)"/><ellipse cx="1425.1" cy="840.8" rx="7.0" ry="8.4" fill="#c9b48c" transform="rotate(30 1425 841)"/><ellipse cx="1998.9" cy="843.3" rx="12.5" ry="7.4" fill="#6b5e4d"/><ellipse cx="1996.9" cy="841.1" rx="12.5" ry="7.4" fill="#dcc9a2"/><ellipse cx="1971.7" cy="844.0" rx="15.7" ry="9.3" fill="#6b5e4d"/><ellipse cx="1969.1" cy="841.2" rx="15.7" ry="9.3" fill="#b39e7c"/><ellipse cx="1315.5" cy="843.9" rx="11.6" ry="7.3" fill="#6b5e4d"/><ellipse cx="1313.6" cy="841.7" rx="11.6" ry="7.3" fill="#c9b48c"/><ellipse cx="1315.8" cy="844.8" rx="12.1" ry="8.7" fill="#6b5e4d"/><ellipse cx="1313.8" cy="842.2" rx="12.1" ry="8.7" fill="#c9b48c"/><ellipse cx="1927.5" cy="845.7" rx="13.6" ry="10.9" fill="#6b5e4d" transform="rotate(30 1925 842)"/><ellipse cx="1925.3" cy="842.5" rx="13.6" ry="10.9" fill="#dcc9a2" transform="rotate(30 1925 842)"/><ellipse cx="1729.0" cy="845.2" rx="13.1" ry="9.0" fill="#6b5e4d" transform="rotate(15 1727 842)"/><ellipse cx="1726.9" cy="842.5" rx="13.1" ry="9.0" fill="#c4ad84" transform="rotate(15 1727 842)"/><ellipse cx="2071.1" cy="845.5" rx="16.3" ry="10.2" fill="#6b5e4d" transform="rotate(15 2068 842)"/><ellipse cx="2068.5" cy="842.5" rx="16.3" ry="10.2" fill="#cdb78c" transform="rotate(15 2068 842)"/><ellipse cx="2077.5" cy="844.7" rx="12.1" ry="6.3" fill="#6b5e4d"/><ellipse cx="2075.5" cy="842.8" rx="12.1" ry="6.3" fill="#dcc98e"/><ellipse cx="1949.8" cy="845.7" rx="8.1" ry="9.2" fill="#6b5e4d" transform="rotate(-15 1949 843)"/><ellipse cx="1948.5" cy="842.9" rx="8.1" ry="9.2" fill="#b39e7c" transform="rotate(-15 1949 843)"/><ellipse cx="2123.7" cy="845.8" rx="7.1" ry="9.1" fill="#6b5e4d" transform="rotate(-15 2123 843)"/><ellipse cx="2122.6" cy="843.1" rx="7.1" ry="9.1" fill="#d0b873" transform="rotate(-15 2123 843)"/><ellipse cx="1399.4" cy="845.4" rx="10.1" ry="7.3" fill="#6b5e4d"/><ellipse cx="1397.8" cy="843.2" rx="10.1" ry="7.3" fill="#bfa983"/><ellipse cx="1608.5" cy="846.3" rx="10.5" ry="10.2" fill="#6b5e4d"/><ellipse cx="1606.8" cy="843.3" rx="10.5" ry="10.2" fill="#c9b48c"/><ellipse cx="1756.5" cy="845.7" rx="9.3" ry="7.9" fill="#6b5e4d" transform="rotate(-15 1755 843)"/><ellipse cx="1755.0" cy="843.3" rx="9.3" ry="7.9" fill="#dcc9a2" transform="rotate(-15 1755 843)"/><ellipse cx="1301.3" cy="846.7" rx="9.9" ry="8.5" fill="#6b5e4d"/><ellipse cx="1299.7" cy="844.1" rx="9.9" ry="8.5" fill="#bfa983"/><ellipse cx="1857.2" cy="846.3" rx="9.7" ry="7.3" fill="#6b5e4d" transform="rotate(-15 1856 844)"/><ellipse cx="1855.6" cy="844.2" rx="9.7" ry="7.3" fill="#cdb78c" transform="rotate(-15 1856 844)"/><ellipse cx="1451.8" cy="846.7" rx="8.1" ry="5.9" fill="#6b5e4d"/><ellipse cx="1450.5" cy="844.9" rx="8.1" ry="5.9" fill="#d6c39b"/><ellipse cx="1590.7" cy="847.1" rx="11.4" ry="6.0" fill="#6b5e4d"/><ellipse cx="1588.9" cy="845.3" rx="11.4" ry="6.0" fill="#c9b48c"/><ellipse cx="1831.5" cy="847.6" rx="10.0" ry="6.6" fill="#6b5e4d" transform="rotate(-15 1830 846)"/><ellipse cx="1829.9" cy="845.6" rx="10.0" ry="6.6" fill="#c4ad84" transform="rotate(-15 1830 846)"/><ellipse cx="1739.3" cy="848.2" rx="7.0" ry="8.5" fill="#6b5e4d" transform="rotate(15 1738 846)"/><ellipse cx="1738.2" cy="845.6" rx="7.0" ry="8.5" fill="#cdb78c" transform="rotate(15 1738 846)"/><ellipse cx="1593.8" cy="847.9" rx="10.3" ry="5.5" fill="#6b5e4d" transform="rotate(30 1592 846)"/><ellipse cx="1592.2" cy="846.2" rx="10.3" ry="5.5" fill="#c9b48c" transform="rotate(30 1592 846)"/><ellipse cx="1269.5" cy="848.5" rx="10.5" ry="7.0" fill="#6b5e4d" transform="rotate(-15 1268 846)"/><ellipse cx="1267.8" cy="846.4" rx="10.5" ry="7.0" fill="#cdb78c" transform="rotate(-15 1268 846)"/><ellipse cx="2150.2" cy="849.1" rx="9.2" ry="8.5" fill="#6b5e4d"/><ellipse cx="2148.7" cy="846.6" rx="9.2" ry="8.5" fill="#d0b873"/><ellipse cx="1448.4" cy="850.0" rx="16.3" ry="10.7" fill="#6b5e4d" transform="rotate(30 1446 847)"/><ellipse cx="1445.8" cy="846.8" rx="16.3" ry="10.7" fill="#b39e7c" transform="rotate(30 1446 847)"/><ellipse cx="1821.5" cy="850.4" rx="11.5" ry="9.9" fill="#6b5e4d"/><ellipse cx="1819.7" cy="847.4" rx="11.5" ry="9.9" fill="#c4ad84"/><ellipse cx="1766.9" cy="850.2" rx="7.4" ry="8.6" fill="#6b5e4d" transform="rotate(15 1766 848)"/><ellipse cx="1765.7" cy="847.6" rx="7.4" ry="8.6" fill="#dcc9a2" transform="rotate(15 1766 848)"/><ellipse cx="2036.3" cy="850.1" rx="10.7" ry="7.6" fill="#6b5e4d"/><ellipse cx="2034.6" cy="847.8" rx="10.7" ry="7.6" fill="#c9b48c"/><ellipse cx="1520.8" cy="851.3" rx="14.4" ry="11.6" fill="#6b5e4d" transform="rotate(30 1518 848)"/><ellipse cx="1518.5" cy="847.8" rx="14.4" ry="11.6" fill="#cdb78c" transform="rotate(30 1518 848)"/><ellipse cx="1299.5" cy="850.9" rx="12.5" ry="8.2" fill="#6b5e4d"/><ellipse cx="1297.5" cy="848.5" rx="12.5" ry="8.2" fill="#c4ad84"/><ellipse cx="2186.2" cy="851.7" rx="11.6" ry="8.7" fill="#6b5e4d" transform="rotate(30 2184 849)"/><ellipse cx="2184.4" cy="849.1" rx="11.6" ry="8.7" fill="#dcc98e" transform="rotate(30 2184 849)"/><ellipse cx="2164.1" cy="851.8" rx="11.4" ry="8.0" fill="#6b5e4d"/><ellipse cx="2162.3" cy="849.4" rx="11.4" ry="8.0" fill="#c4ad84"/><ellipse cx="1480.6" cy="852.1" rx="8.2" ry="8.6" fill="#6b5e4d" transform="rotate(-15 1479 850)"/><ellipse cx="1479.3" cy="849.5" rx="8.2" ry="8.6" fill="#bfa983" transform="rotate(-15 1479 850)"/><ellipse cx="1813.4" cy="852.0" rx="9.6" ry="7.8" fill="#6b5e4d" transform="rotate(15 1812 850)"/><ellipse cx="1811.9" cy="849.6" rx="9.6" ry="7.8" fill="#dcc9a2" transform="rotate(15 1812 850)"/><ellipse cx="1415.2" cy="851.7" rx="12.3" ry="6.7" fill="#6b5e4d"/><ellipse cx="1413.2" cy="849.6" rx="12.3" ry="6.7" fill="#c9b48c"/><ellipse cx="1864.6" cy="852.6" rx="7.4" ry="7.5" fill="#6b5e4d" transform="rotate(-15 1863 850)"/><ellipse cx="1863.4" cy="850.3" rx="7.4" ry="7.5" fill="#bfa983" transform="rotate(-15 1863 850)"/><ellipse cx="1872.1" cy="855.4" rx="13.1" ry="9.2" fill="#6b5e4d"/><ellipse cx="1870.0" cy="852.7" rx="13.1" ry="9.2" fill="#d6c39b"/><ellipse cx="1655.1" cy="855.5" rx="11.2" ry="9.1" fill="#6b5e4d"/><ellipse cx="1653.3" cy="852.8" rx="11.2" ry="9.1" fill="#bfa983"/><ellipse cx="2183.5" cy="855.6" rx="8.7" ry="9.1" fill="#6b5e4d"/><ellipse cx="2182.1" cy="852.8" rx="8.7" ry="9.1" fill="#b39e7c"/><ellipse cx="2177.2" cy="855.0" rx="11.8" ry="6.5" fill="#6b5e4d"/><ellipse cx="2175.3" cy="853.1" rx="11.8" ry="6.5" fill="#d0b873"/><ellipse cx="2078.5" cy="856.9" rx="13.1" ry="9.7" fill="#6b5e4d" transform="rotate(15 2076 854)"/><ellipse cx="2076.4" cy="854.0" rx="13.1" ry="9.7" fill="#dcc98e" transform="rotate(15 2076 854)"/><ellipse cx="1902.8" cy="857.4" rx="12.3" ry="11.3" fill="#6b5e4d" transform="rotate(30 1901 854)"/><ellipse cx="1900.9" cy="854.0" rx="12.3" ry="11.3" fill="#dcc9a2" transform="rotate(30 1901 854)"/><ellipse cx="2171.7" cy="856.5" rx="9.6" ry="5.6" fill="#6b5e4d" transform="rotate(30 2170 855)"/><ellipse cx="2170.2" cy="854.8" rx="9.6" ry="5.6" fill="#b39e7c" transform="rotate(30 2170 855)"/><ellipse cx="2084.0" cy="858.2" rx="12.4" ry="6.2" fill="#6b5e4d"/><ellipse cx="2082.0" cy="856.3" rx="12.4" ry="6.2" fill="#d3c09a"/><ellipse cx="1807.2" cy="859.6" rx="9.7" ry="8.6" fill="#6b5e4d"/><ellipse cx="1805.7" cy="857.0" rx="9.7" ry="8.6" fill="#dcc9a2"/><ellipse cx="1978.2" cy="859.9" rx="9.7" ry="8.6" fill="#6b5e4d"/><ellipse cx="1976.7" cy="857.3" rx="9.7" ry="8.6" fill="#cdb78c"/><ellipse cx="1661.6" cy="859.9" rx="13.1" ry="7.5" fill="#6b5e4d"/><ellipse cx="1659.5" cy="857.7" rx="13.1" ry="7.5" fill="#c4ad84"/><ellipse cx="1905.1" cy="860.9" rx="12.8" ry="10.0" fill="#6b5e4d" transform="rotate(15 1903 858)"/><ellipse cx="1903.1" cy="857.9" rx="12.8" ry="10.0" fill="#c4ad84" transform="rotate(15 1903 858)"/><ellipse cx="1482.0" cy="861.5" rx="12.5" ry="11.2" fill="#6b5e4d"/><ellipse cx="1480.0" cy="858.1" rx="12.5" ry="11.2" fill="#d6c39b"/><ellipse cx="1358.3" cy="861.2" rx="14.4" ry="9.4" fill="#6b5e4d" transform="rotate(15 1356 858)"/><ellipse cx="1356.0" cy="858.3" rx="14.4" ry="9.4" fill="#dcc9a2" transform="rotate(15 1356 858)"/><ellipse cx="1361.9" cy="861.4" rx="9.9" ry="8.6" fill="#6b5e4d" transform="rotate(30 1360 859)"/><ellipse cx="1360.3" cy="858.8" rx="9.9" ry="8.6" fill="#bfa983" transform="rotate(30 1360 859)"/><ellipse cx="1281.1" cy="862.8" rx="12.5" ry="8.4" fill="#6b5e4d" transform="rotate(-15 1279 860)"/><ellipse cx="1279.1" cy="860.3" rx="12.5" ry="8.4" fill="#c9b48c" transform="rotate(-15 1279 860)"/><ellipse cx="1287.9" cy="864.3" rx="15.9" ry="12.7" fill="#6b5e4d" transform="rotate(30 1285 860)"/><ellipse cx="1285.3" cy="860.4" rx="15.9" ry="12.7" fill="#c4ad84" transform="rotate(30 1285 860)"/><ellipse cx="1369.3" cy="862.8" rx="8.7" ry="7.4" fill="#6b5e4d"/><ellipse cx="1367.9" cy="860.5" rx="8.7" ry="7.4" fill="#c9b48c"/><ellipse cx="1516.4" cy="864.7" rx="12.1" ry="12.5" fill="#6b5e4d" transform="rotate(30 1514 861)"/><ellipse cx="1514.5" cy="860.9" rx="12.1" ry="12.5" fill="#c9b48c" transform="rotate(30 1514 861)"/><ellipse cx="1316.4" cy="864.9" rx="12.6" ry="12.9" fill="#6b5e4d"/><ellipse cx="1314.4" cy="861.0" rx="12.6" ry="12.9" fill="#cdb78c"/><ellipse cx="1510.5" cy="863.8" rx="11.4" ry="7.5" fill="#6b5e4d"/><ellipse cx="1508.6" cy="861.6" rx="11.4" ry="7.5" fill="#dcc9a2"/><ellipse cx="1416.6" cy="863.9" rx="7.4" ry="7.1" fill="#6b5e4d"/><ellipse cx="1415.4" cy="861.8" rx="7.4" ry="7.1" fill="#c9b48c"/><ellipse cx="2073.8" cy="865.7" rx="12.8" ry="12.8" fill="#6b5e4d"/><ellipse cx="2071.8" cy="861.9" rx="12.8" ry="12.8" fill="#dcc98e"/><ellipse cx="1925.7" cy="864.5" rx="11.3" ry="8.1" fill="#6b5e4d" transform="rotate(-15 1924 862)"/><ellipse cx="1923.9" cy="862.1" rx="11.3" ry="8.1" fill="#b39e7c" transform="rotate(-15 1924 862)"/><ellipse cx="1699.2" cy="865.6" rx="12.5" ry="11.0" fill="#6b5e4d" transform="rotate(15 1697 862)"/><ellipse cx="1697.1" cy="862.3" rx="12.5" ry="11.0" fill="#bfa983" transform="rotate(15 1697 862)"/><ellipse cx="1341.3" cy="865.5" rx="11.9" ry="9.9" fill="#6b5e4d"/><ellipse cx="1339.4" cy="862.5" rx="11.9" ry="9.9" fill="#c9b48c"/><ellipse cx="1842.5" cy="865.8" rx="11.1" ry="10.6" fill="#6b5e4d" transform="rotate(15 1841 863)"/><ellipse cx="1840.7" cy="862.6" rx="11.1" ry="10.6" fill="#cdb78c" transform="rotate(15 1841 863)"/><ellipse cx="1521.6" cy="866.7" rx="18.1" ry="10.9" fill="#6b5e4d"/><ellipse cx="1518.7" cy="863.4" rx="18.1" ry="10.9" fill="#b39e7c"/><ellipse cx="1839.1" cy="865.9" rx="10.2" ry="6.2" fill="#6b5e4d" transform="rotate(15 1837 864)"/><ellipse cx="1837.5" cy="864.0" rx="10.2" ry="6.2" fill="#dcc9a2" transform="rotate(15 1837 864)"/><ellipse cx="1416.2" cy="866.1" rx="11.8" ry="6.7" fill="#6b5e4d" transform="rotate(30 1414 864)"/><ellipse cx="1414.4" cy="864.1" rx="11.8" ry="6.7" fill="#cdb78c" transform="rotate(30 1414 864)"/><ellipse cx="2046.8" cy="867.4" rx="15.6" ry="10.5" fill="#6b5e4d" transform="rotate(30 2044 864)"/><ellipse cx="2044.3" cy="864.2" rx="15.6" ry="10.5" fill="#dcc98e" transform="rotate(30 2044 864)"/><ellipse cx="1830.7" cy="868.4" rx="13.6" ry="13.9" fill="#6b5e4d" transform="rotate(15 1829 864)"/><ellipse cx="1828.5" cy="864.2" rx="13.6" ry="13.9" fill="#b39e7c" transform="rotate(15 1829 864)"/><ellipse cx="2170.7" cy="866.6" rx="9.6" ry="7.9" fill="#6b5e4d"/><ellipse cx="2169.2" cy="864.2" rx="9.6" ry="7.9" fill="#cdb78c"/><ellipse cx="1636.7" cy="866.7" rx="8.6" ry="8.1" fill="#6b5e4d"/><ellipse cx="1635.3" cy="864.3" rx="8.6" ry="8.1" fill="#c9b48c"/><ellipse cx="1622.8" cy="867.6" rx="13.4" ry="9.1" fill="#6b5e4d"/><ellipse cx="1620.7" cy="864.9" rx="13.4" ry="9.1" fill="#b39e7c"/><ellipse cx="1566.9" cy="869.0" rx="12.6" ry="13.7" fill="#6b5e4d" transform="rotate(-15 1565 865)"/><ellipse cx="1564.9" cy="864.9" rx="12.6" ry="13.7" fill="#cdb78c" transform="rotate(-15 1565 865)"/><ellipse cx="1931.4" cy="868.1" rx="12.8" ry="10.4" fill="#6b5e4d"/><ellipse cx="1929.3" cy="865.0" rx="12.8" ry="10.4" fill="#d6c39b"/><ellipse cx="1618.8" cy="868.4" rx="10.8" ry="9.0" fill="#6b5e4d" transform="rotate(30 1617 866)"/><ellipse cx="1617.1" cy="865.7" rx="10.8" ry="9.0" fill="#b39e7c" transform="rotate(30 1617 866)"/><ellipse cx="1714.5" cy="870.1" rx="14.3" ry="13.9" fill="#6b5e4d" transform="rotate(-15 1712 866)"/><ellipse cx="1712.2" cy="865.9" rx="14.3" ry="13.9" fill="#c9b48c" transform="rotate(-15 1712 866)"/><ellipse cx="2040.5" cy="869.4" rx="11.0" ry="9.2" fill="#6b5e4d"/><ellipse cx="2038.8" cy="866.6" rx="11.0" ry="9.2" fill="#d9c384"/><ellipse cx="1994.2" cy="869.0" rx="13.2" ry="7.6" fill="#6b5e4d"/><ellipse cx="1992.1" cy="866.7" rx="13.2" ry="7.6" fill="#d6c39b"/><ellipse cx="1659.7" cy="869.2" rx="8.4" ry="8.2" fill="#6b5e4d"/><ellipse cx="1658.4" cy="866.7" rx="8.4" ry="8.2" fill="#cdb78c"/><ellipse cx="1747.4" cy="869.7" rx="11.1" ry="9.5" fill="#6b5e4d"/><ellipse cx="1745.6" cy="866.9" rx="11.1" ry="9.5" fill="#c4ad84"/><ellipse cx="2125.8" cy="870.5" rx="10.5" ry="10.4" fill="#6b5e4d" transform="rotate(30 2124 867)"/><ellipse cx="2124.1" cy="867.4" rx="10.5" ry="10.4" fill="#d0b873" transform="rotate(30 2124 867)"/><ellipse cx="1595.3" cy="870.1" rx="13.7" ry="9.1" fill="#6b5e4d" transform="rotate(30 1593 867)"/><ellipse cx="1593.1" cy="867.4" rx="13.7" ry="9.1" fill="#dcc9a2" transform="rotate(30 1593 867)"/><ellipse cx="2149.7" cy="871.1" rx="16.5" ry="11.5" fill="#6b5e4d" transform="rotate(-15 2147 868)"/><ellipse cx="2147.0" cy="867.7" rx="16.5" ry="11.5" fill="#c4ad84" transform="rotate(-15 2147 868)"/><ellipse cx="1568.1" cy="872.0" rx="11.7" ry="13.3" fill="#6b5e4d" transform="rotate(-15 1566 868)"/><ellipse cx="1566.2" cy="868.0" rx="11.7" ry="13.3" fill="#d6c39b" transform="rotate(-15 1566 868)"/><ellipse cx="1927.7" cy="871.4" rx="11.2" ry="10.8" fill="#6b5e4d" transform="rotate(30 1926 868)"/><ellipse cx="1925.9" cy="868.2" rx="11.2" ry="10.8" fill="#c9b48c" transform="rotate(30 1926 868)"/><ellipse cx="1433.6" cy="871.6" rx="13.6" ry="10.2" fill="#6b5e4d" transform="rotate(-15 1431 869)"/><ellipse cx="1431.4" cy="868.5" rx="13.6" ry="10.2" fill="#d3c09a" transform="rotate(-15 1431 869)"/><ellipse cx="1579.8" cy="870.7" rx="8.5" ry="7.1" fill="#6b5e4d"/><ellipse cx="1578.4" cy="868.5" rx="8.5" ry="7.1" fill="#dcc9a2"/><ellipse cx="1312.0" cy="871.8" rx="11.9" ry="10.2" fill="#6b5e4d" transform="rotate(30 1310 869)"/><ellipse cx="1310.1" cy="868.7" rx="11.9" ry="10.2" fill="#dcc9a2" transform="rotate(30 1310 869)"/><ellipse cx="2085.3" cy="872.5" rx="13.9" ry="10.0" fill="#6b5e4d"/><ellipse cx="2083.1" cy="869.6" rx="13.9" ry="10.0" fill="#d9c384"/><ellipse cx="1510.8" cy="872.7" rx="11.2" ry="7.9" fill="#6b5e4d"/><ellipse cx="1509.0" cy="870.3" rx="11.2" ry="7.9" fill="#d3c09a"/><ellipse cx="1585.3" cy="873.9" rx="15.5" ry="11.5" fill="#6b5e4d" transform="rotate(-15 1583 870)"/><ellipse cx="1582.9" cy="870.4" rx="15.5" ry="11.5" fill="#b39e7c" transform="rotate(-15 1583 870)"/><ellipse cx="2002.8" cy="874.0" rx="14.5" ry="11.9" fill="#6b5e4d" transform="rotate(-15 2000 870)"/><ellipse cx="2000.5" cy="870.4" rx="14.5" ry="11.9" fill="#d6c39b" transform="rotate(-15 2000 870)"/><ellipse cx="1994.5" cy="872.7" rx="12.6" ry="7.4" fill="#6b5e4d" transform="rotate(15 1992 870)"/><ellipse cx="1992.5" cy="870.5" rx="12.6" ry="7.4" fill="#d6c39b" transform="rotate(15 1992 870)"/><ellipse cx="1757.3" cy="873.1" rx="11.1" ry="8.4" fill="#6b5e4d"/><ellipse cx="1755.6" cy="870.6" rx="11.1" ry="8.4" fill="#dcc9a2"/><ellipse cx="1338.6" cy="873.8" rx="13.2" ry="8.9" fill="#6b5e4d"/><ellipse cx="1336.5" cy="871.1" rx="13.2" ry="8.9" fill="#d3c09a"/><ellipse cx="1683.4" cy="873.7" rx="8.8" ry="8.5" fill="#6b5e4d"/><ellipse cx="1682.0" cy="871.1" rx="8.8" ry="8.5" fill="#cdb78c"/><ellipse cx="1927.4" cy="873.8" rx="14.6" ry="8.7" fill="#6b5e4d"/><ellipse cx="1925.1" cy="871.2" rx="14.6" ry="8.7" fill="#b39e7c"/><ellipse cx="1800.4" cy="874.7" rx="11.0" ry="11.6" fill="#6b5e4d" transform="rotate(-15 1799 871)"/><ellipse cx="1798.6" cy="871.2" rx="11.0" ry="11.6" fill="#c4ad84" transform="rotate(-15 1799 871)"/><ellipse cx="1863.8" cy="874.6" rx="8.7" ry="9.4" fill="#6b5e4d" transform="rotate(30 1862 872)"/><ellipse cx="1862.4" cy="871.8" rx="8.7" ry="9.4" fill="#b39e7c" transform="rotate(30 1862 872)"/><ellipse cx="1759.0" cy="875.6" rx="10.3" ry="10.0" fill="#6b5e4d" transform="rotate(-15 1757 873)"/><ellipse cx="1757.3" cy="872.6" rx="10.3" ry="10.0" fill="#bfa983" transform="rotate(-15 1757 873)"/><ellipse cx="1687.5" cy="876.0" rx="11.9" ry="10.8" fill="#6b5e4d"/><ellipse cx="1685.6" cy="872.7" rx="11.9" ry="10.8" fill="#dcc9a2"/><ellipse cx="1297.0" cy="875.6" rx="10.9" ry="9.1" fill="#6b5e4d" transform="rotate(15 1295 873)"/><ellipse cx="1295.2" cy="872.9" rx="10.9" ry="9.1" fill="#d3c09a" transform="rotate(15 1295 873)"/><ellipse cx="1709.5" cy="875.9" rx="12.2" ry="9.6" fill="#6b5e4d"/><ellipse cx="1707.5" cy="873.0" rx="12.2" ry="9.6" fill="#c4ad84"/><ellipse cx="1521.8" cy="875.2" rx="11.8" ry="7.1" fill="#6b5e4d" transform="rotate(15 1520 873)"/><ellipse cx="1519.9" cy="873.1" rx="11.8" ry="7.1" fill="#c9b48c" transform="rotate(15 1520 873)"/><ellipse cx="1425.8" cy="875.6" rx="11.6" ry="8.2" fill="#6b5e4d" transform="rotate(15 1424 873)"/><ellipse cx="1423.9" cy="873.2" rx="11.6" ry="8.2" fill="#b39e7c" transform="rotate(15 1424 873)"/><ellipse cx="1665.3" cy="876.9" rx="10.9" ry="11.6" fill="#6b5e4d" transform="rotate(-15 1664 873)"/><ellipse cx="1663.6" cy="873.4" rx="10.9" ry="11.6" fill="#c9b48c" transform="rotate(-15 1664 873)"/><ellipse cx="1822.0" cy="875.9" rx="11.8" ry="8.4" fill="#6b5e4d"/><ellipse cx="1820.1" cy="873.4" rx="11.8" ry="8.4" fill="#b39e7c"/><ellipse cx="2139.7" cy="876.4" rx="11.3" ry="7.6" fill="#6b5e4d" transform="rotate(15 2138 874)"/><ellipse cx="2137.9" cy="874.1" rx="11.3" ry="7.6" fill="#dcc98e" transform="rotate(15 2138 874)"/><ellipse cx="2172.7" cy="876.4" rx="11.1" ry="7.1" fill="#6b5e4d"/><ellipse cx="2171.0" cy="874.2" rx="11.1" ry="7.1" fill="#d9c384"/><ellipse cx="1536.4" cy="877.3" rx="8.7" ry="9.7" fill="#6b5e4d" transform="rotate(-15 1535 874)"/><ellipse cx="1535.0" cy="874.4" rx="8.7" ry="9.7" fill="#d3c09a" transform="rotate(-15 1535 874)"/><ellipse cx="1822.3" cy="877.7" rx="11.8" ry="10.6" fill="#6b5e4d"/><ellipse cx="1820.5" cy="874.5" rx="11.8" ry="10.6" fill="#d3c09a"/><ellipse cx="1800.1" cy="877.3" rx="11.8" ry="7.2" fill="#6b5e4d"/><ellipse cx="1798.2" cy="875.2" rx="11.8" ry="7.2" fill="#c4ad84"/><ellipse cx="2055.1" cy="878.2" rx="16.4" ry="8.1" fill="#6b5e4d"/><ellipse cx="2052.5" cy="875.8" rx="16.4" ry="8.1" fill="#c4ad84"/><ellipse cx="1316.0" cy="879.3" rx="8.9" ry="11.5" fill="#6b5e4d"/><ellipse cx="1314.6" cy="875.9" rx="8.9" ry="11.5" fill="#c9b48c"/><ellipse cx="1776.6" cy="878.1" rx="13.0" ry="6.4" fill="#6b5e4d" transform="rotate(30 1775 876)"/><ellipse cx="1774.5" cy="876.2" rx="13.0" ry="6.4" fill="#dcc9a2" transform="rotate(30 1775 876)"/><ellipse cx="1454.1" cy="878.8" rx="11.2" ry="8.3" fill="#6b5e4d" transform="rotate(15 1452 876)"/><ellipse cx="1452.3" cy="876.3" rx="11.2" ry="8.3" fill="#dcc9a2" transform="rotate(15 1452 876)"/><ellipse cx="1277.6" cy="879.6" rx="8.2" ry="10.5" fill="#6b5e4d" transform="rotate(15 1276 876)"/><ellipse cx="1276.3" cy="876.4" rx="8.2" ry="10.5" fill="#d6c39b" transform="rotate(15 1276 876)"/><ellipse cx="1829.2" cy="878.8" rx="11.8" ry="7.8" fill="#6b5e4d" transform="rotate(-15 1827 876)"/><ellipse cx="1827.4" cy="876.5" rx="11.8" ry="7.8" fill="#d3c09a" transform="rotate(-15 1827 876)"/><ellipse cx="1892.7" cy="878.7" rx="9.9" ry="6.6" fill="#6b5e4d"/><ellipse cx="1891.1" cy="876.7" rx="9.9" ry="6.6" fill="#cdb78c"/><ellipse cx="1470.9" cy="880.3" rx="12.3" ry="11.4" fill="#6b5e4d"/><ellipse cx="1468.9" cy="876.8" rx="12.3" ry="11.4" fill="#c4ad84"/><ellipse cx="1959.5" cy="881.1" rx="13.8" ry="10.3" fill="#6b5e4d" transform="rotate(15 1957 878)"/><ellipse cx="1957.3" cy="878.0" rx="13.8" ry="10.3" fill="#dcc9a2" transform="rotate(15 1957 878)"/><ellipse cx="1632" cy="770" rx="26" ry="15" fill="#4d5c36"/><ellipse cx="1664" cy="762" rx="16" ry="12" fill="#56663c"/><ellipse cx="1610" cy="775" rx="14" ry="9" fill="#5c6a42"/><ellipse cx="1540" cy="814" rx="16" ry="7" fill="#5d6a45"/><ellipse cx="1494" cy="805" rx="9" ry="7" fill="#7a7f66"/><ellipse cx="1734" cy="762" rx="10" ry="11" fill="#53633b"/><ellipse cx="2150" cy="716" rx="18" ry="6" fill="#6d7a48"/><ellipse cx="2090" cy="692" rx="12" ry="4" fill="#76804f"/><ellipse cx="2040" cy="670" rx="10" ry="3.5" fill="#76804f"/><ellipse cx="2180" cy="690" rx="12" ry="4" fill="#76804f"/><ellipse cx="1520" cy="760" rx="9" ry="6" fill="#6a7150"/><ellipse cx="2120" cy="742" rx="14" ry="5" fill="#6d7a48"/><ellipse cx="1780" cy="690" rx="10" ry="3.4" fill="#77805a"/><ellipse cx="2194" cy="734" rx="10" ry="10" fill="#5f6d40"/><ellipse cx="1348.6" cy="636.7" rx="12.4" ry="7.4" fill="#65574a"/><ellipse cx="1346.6" cy="634.4" rx="12.4" ry="7.4" fill="#c7af87"/><ellipse cx="1385.8" cy="646.7" rx="12.4" ry="9.9" fill="#65574a" transform="rotate(-20 1384 644)"/><ellipse cx="1383.8" cy="643.7" rx="12.4" ry="9.9" fill="#d4bd95" transform="rotate(-20 1384 644)"/><ellipse cx="1414.8" cy="656.4" rx="12.8" ry="18.2" fill="#65574a" transform="rotate(12 1413 651)"/><ellipse cx="1412.7" cy="651.0" rx="12.8" ry="18.2" fill="#d4bd95" transform="rotate(12 1413 651)"/><ellipse cx="1437.7" cy="658.1" rx="13.6" ry="17.0" fill="#65574a" transform="rotate(8 1435 653)"/><ellipse cx="1435.5" cy="653.1" rx="13.6" ry="17.0" fill="#cdb68f" transform="rotate(8 1435 653)"/><ellipse cx="1397.4" cy="634.0" rx="7.4" ry="4.1" fill="#65574a"/><ellipse cx="1396.2" cy="632.8" rx="7.4" ry="4.1" fill="#cdb68f"/><ellipse cx="1464.6" cy="666.1" rx="13.6" ry="9.1" fill="#65574a"/><ellipse cx="1462.4" cy="663.4" rx="13.6" ry="9.1" fill="#c2a982"/><ellipse cx="1435.5" cy="684.5" rx="12.8" ry="8.3" fill="#65574a" transform="rotate(10 1433 682)"/><ellipse cx="1433.4" cy="682.0" rx="12.8" ry="8.3" fill="#c7af87" transform="rotate(10 1433 682)"/><ellipse cx="1464.0" cy="688.0" rx="10.3" ry="13.2" fill="#65574a"/><ellipse cx="1462.4" cy="684.1" rx="10.3" ry="13.2" fill="#c2a982"/><ellipse cx="1468.8" cy="715.7" rx="14.5" ry="22.7" fill="#65574a" transform="rotate(-6 1467 709)"/><ellipse cx="1466.5" cy="708.9" rx="14.5" ry="22.7" fill="#d4bd95" transform="rotate(-6 1467 709)"/><ellipse cx="1496.4" cy="726.2" rx="19.0" ry="23.2" fill="#65574a" transform="rotate(4 1493 719)"/><ellipse cx="1493.4" cy="719.2" rx="19.0" ry="23.2" fill="#c2a982" transform="rotate(4 1493 719)"/><ellipse cx="1525.9" cy="706.2" rx="9.1" ry="11.6" fill="#65574a"/><ellipse cx="1524.4" cy="702.7" rx="9.1" ry="11.6" fill="#c7af87"/><ellipse cx="1488.6" cy="696.3" rx="9.1" ry="6.2" fill="#65574a"/><ellipse cx="1487.2" cy="694.4" rx="9.1" ry="6.2" fill="#cdb68f"/><ellipse cx="1541.3" cy="729.0" rx="15.3" ry="12.0" fill="#65574a" transform="rotate(-10 1539 725)"/><ellipse cx="1538.9" cy="725.4" rx="15.3" ry="12.0" fill="#d4bd95" transform="rotate(-10 1539 725)"/><ellipse cx="1547.4" cy="708.2" rx="14.5" ry="11.6" fill="#65574a" transform="rotate(20 1545 705)"/><ellipse cx="1545.1" cy="704.7" rx="14.5" ry="11.6" fill="#cdb68f" transform="rotate(20 1545 705)"/><ellipse cx="1549.8" cy="686.3" rx="16.5" ry="7.4" fill="#65574a"/><ellipse cx="1547.2" cy="684.1" rx="16.5" ry="7.4" fill="#c2a982"/><ellipse cx="1515.7" cy="686.3" rx="10.3" ry="7.4" fill="#65574a"/><ellipse cx="1514.1" cy="684.1" rx="10.3" ry="7.4" fill="#d4bd95"/><ellipse cx="1580.0" cy="699.0" rx="11.6" ry="8.3" fill="#65574a"/><ellipse cx="1578.2" cy="696.5" rx="11.6" ry="8.3" fill="#d4bd95"/><ellipse cx="1622.0" cy="691.4" rx="15.3" ry="10.8" fill="#65574a"/><ellipse cx="1619.5" cy="688.2" rx="15.3" ry="10.8" fill="#c2a982"/><ellipse cx="1621.5" cy="706.6" rx="12.4" ry="6.2" fill="#65574a"/><ellipse cx="1619.5" cy="704.7" rx="12.4" ry="6.2" fill="#cdb68f"/><ellipse cx="1639.6" cy="715.5" rx="9.1" ry="8.3" fill="#65574a"/><ellipse cx="1638.1" cy="713.0" rx="9.1" ry="8.3" fill="#c2a982"/><ellipse cx="1654.6" cy="724.8" rx="12.4" ry="11.6" fill="#65574a"/><ellipse cx="1652.6" cy="721.3" rx="12.4" ry="11.6" fill="#c2a982"/><ellipse cx="1658.6" cy="740.9" rx="11.6" ry="10.3" fill="#65574a"/><ellipse cx="1656.8" cy="737.8" rx="11.6" ry="10.3" fill="#cdb68f"/><ellipse cx="1625.1" cy="740.3" rx="9.1" ry="8.3" fill="#65574a"/><ellipse cx="1623.7" cy="737.8" rx="9.1" ry="8.3" fill="#c2a982"/><ellipse cx="1637.3" cy="727.3" rx="7.4" ry="6.2" fill="#65574a"/><ellipse cx="1636.1" cy="725.4" rx="7.4" ry="6.2" fill="#c2a982"/><ellipse cx="1660.3" cy="757.5" rx="9.1" ry="10.3" fill="#65574a"/><ellipse cx="1658.8" cy="754.4" rx="9.1" ry="10.3" fill="#cdb68f"/><ellipse cx="1649.9" cy="688.4" rx="9.1" ry="7.4" fill="#65574a"/><ellipse cx="1648.5" cy="686.1" rx="9.1" ry="7.4" fill="#c7af87"/><ellipse cx="1670.3" cy="677.5" rx="7.4" ry="5.8" fill="#65574a"/><ellipse cx="1669.2" cy="675.8" rx="7.4" ry="5.8" fill="#c2a982"/><ellipse cx="1592.2" cy="677.3" rx="10.3" ry="5.0" fill="#65574a"/><ellipse cx="1590.6" cy="675.8" rx="10.3" ry="5.0" fill="#d4bd95"/><ellipse cx="1563.0" cy="668.8" rx="8.3" ry="4.1" fill="#65574a"/><ellipse cx="1561.6" cy="667.5" rx="8.3" ry="4.1" fill="#c2a982"/><ellipse cx="1639.3" cy="660.4" rx="7.4" ry="3.7" fill="#65574a"/><ellipse cx="1638.1" cy="659.3" rx="7.4" ry="3.7" fill="#c2a982"/><ellipse cx="1714.9" cy="738.9" rx="14.5" ry="10.3" fill="#65574a"/><ellipse cx="1712.6" cy="735.8" rx="14.5" ry="10.3" fill="#d4bd95"/><ellipse cx="1718.6" cy="757.8" rx="11.6" ry="11.6" fill="#65574a"/><ellipse cx="1716.7" cy="754.4" rx="11.6" ry="11.6" fill="#cdb68f"/><ellipse cx="1695.3" cy="755.0" rx="8.3" ry="9.1" fill="#65574a"/><ellipse cx="1694.0" cy="752.3" rx="8.3" ry="9.1" fill="#c7af87"/><ellipse cx="1691.0" cy="735.6" rx="7.4" ry="6.2" fill="#65574a"/><ellipse cx="1689.8" cy="733.7" rx="7.4" ry="6.2" fill="#c2a982"/><ellipse cx="1495.4" cy="743.8" rx="12.4" ry="6.2" fill="#65574a"/><ellipse cx="1493.4" cy="742.0" rx="12.4" ry="6.2" fill="#c2a982"/><ellipse cx="1546.7" cy="765.7" rx="10.3" ry="10.3" fill="#65574a"/><ellipse cx="1545.1" cy="762.6" rx="10.3" ry="10.3" fill="#cdb68f"/><ellipse cx="1527.5" cy="765.2" rx="6.2" ry="5.0" fill="#65574a"/><ellipse cx="1526.5" cy="763.7" rx="6.2" ry="5.0" fill="#c7af87"/><ellipse cx="1674.4" cy="706.6" rx="7.0" ry="6.2" fill="#65574a"/><ellipse cx="1673.3" cy="704.7" rx="7.0" ry="6.2" fill="#c7af87"/><ellipse cx="1672.2" cy="693.7" rx="6.2" ry="4.5" fill="#65574a"/><ellipse cx="1671.2" cy="692.3" rx="6.2" ry="4.5" fill="#cdb68f"/><ellipse cx="1730.1" cy="706.4" rx="6.2" ry="5.4" fill="#65574a"/><ellipse cx="1729.1" cy="704.7" rx="6.2" ry="5.4" fill="#cdb68f"/><ellipse cx="1695.0" cy="658.7" rx="6.2" ry="5.0" fill="#65574a"/><ellipse cx="1694.0" cy="657.2" rx="6.2" ry="5.0" fill="#c7af87"/><ellipse cx="1520.9" cy="800.1" rx="16.5" ry="14.5" fill="#65574a"/><ellipse cx="1518.2" cy="795.7" rx="16.5" ry="14.5" fill="#d4bd95"/><path d="M1259.7 622.0 C1269.7 579.6 1301.8 624.1 1319.7 628.2 C1337.6 632.4 1351.7 638.9 1367.3 646.8 C1382.8 654.8 1399.0 664.1 1412.7 675.8 C1426.5 687.5 1441.0 705.4 1450.0 717.2 C1458.9 728.9 1461.3 734.4 1466.5 746.1 C1471.7 757.8 1478.1 775.4 1481.0 787.5 C1483.9 799.5 1486.5 808.1 1484.1 818.5 C1481.7 828.8 1470.5 838.8 1466.5 849.5 C1462.5 860.2 1494.8 877.1 1460.3 882.6 C1425.8 888.1 1293.2 926.0 1259.7 882.6 C1226.3 839.2 1249.7 664.4 1259.7 622.0Z" fill="url(#bigl)"/><path d="M1259.7 622.0 C1269.7 579.6 1301.8 624.1 1319.7 628.2 C1337.6 632.4 1351.7 638.9 1367.3 646.8 C1382.8 654.8 1399.0 664.1 1412.7 675.8 C1426.5 687.5 1441.0 705.4 1450.0 717.2 C1458.9 728.9 1461.3 734.4 1466.5 746.1 C1471.7 757.8 1478.1 775.4 1481.0 787.5 C1483.9 799.5 1486.5 808.1 1484.1 818.5 C1481.7 828.8 1470.5 838.8 1466.5 849.5 C1462.5 860.2 1494.8 877.1 1460.3 882.6 C1425.8 888.1 1293.2 926.0 1259.7 882.6 C1226.3 839.2 1249.7 664.4 1259.7 622.0Z" fill="#fff" filter="url(#grain)"/><path d="M1259.7 622.0 C1269.7 579.6 1301.8 624.1 1319.7 628.2 C1337.6 632.4 1351.7 638.9 1367.3 646.8 C1382.8 654.8 1399.0 664.1 1412.7 675.8 C1426.5 687.5 1441.0 705.4 1450.0 717.2 C1458.9 728.9 1461.3 734.4 1466.5 746.1 C1471.7 757.8 1478.1 775.4 1481.0 787.5 C1483.9 799.5 1486.5 808.1 1484.1 818.5 C1481.7 828.8 1470.5 838.8 1466.5 849.5 C1462.5 860.2 1494.8 877.1 1460.3 882.6 C1425.8 888.1 1293.2 926.0 1259.7 882.6 C1226.3 839.2 1249.7 664.4 1259.7 622.0Z" fill="#fff" filter="url(#grainl)" opacity="0.3"/><polygon points="1421.0,784.4 1454.1,777.1 1481.0,795.7 1483.5,824.7 1463.4,853.6 1454.1,882.6 1400.3,882.6 1416.9,828.8" fill="#928475" /><polygon points="1421.0,784.4 1416.9,828.8 1400.3,882.6 1383.8,882.6 1404.5,837.1 1410.7,797.8" fill="#776a5f" /><polygon points="1425.2,787.5 1454.1,781.3 1474.8,799.9 1450.0,808.1" fill="#9c8e80" /><path d="M1464.4 882.6 C1443.8 874.7 1465.5 845.6 1470.6 835.0 C1475.8 824.4 1483.4 821.2 1495.5 818.9 C1507.5 816.5 1529.9 816.5 1543.0 821.0 C1556.1 825.4 1565.4 835.1 1574.0 845.4 C1582.7 855.6 1613.0 876.4 1594.7 882.6 C1576.5 888.8 1485.1 890.5 1464.4 882.6Z" fill="#b3a28b"/><polygon points="1474.8,841.2 1495.5,822.6 1541.0,823.6 1516.1,835.0" fill="#c4b49c" opacity="0.8"/><path d="M1592.6 882.6 C1580.2 871.2 1592.3 829.9 1596.8 814.3 C1601.3 798.8 1609.9 795.0 1619.5 789.5 C1629.2 784.1 1642.3 779.3 1654.7 781.7 C1667.1 784.1 1684.7 795.1 1694.0 804.0 C1703.3 812.9 1709.1 827.1 1710.5 835.0 C1711.9 842.9 1708.8 843.6 1702.2 851.6 C1695.7 859.5 1689.5 877.4 1671.2 882.6 C1653.0 887.8 1605.1 894.0 1592.6 882.6Z" fill="#b5a38b"/><polygon points="1596.8,816.4 1619.5,791.6 1631.9,808.1 1648.5,870.2 1640.2,882.6 1593.7,882.6" fill="#907e69" opacity="0.85"/><polygon points="1619.5,791.6 1654.7,783.3 1691.9,805.0 1660.9,808.1" fill="#c9b9a2" opacity="0.8"/><path d="M1631.9 882.6 C1615.6 877.8 1633.7 859.8 1640.2 853.6 C1646.8 847.5 1659.2 845.8 1671.2 845.8 C1683.3 845.8 1701.5 847.5 1712.6 853.6 C1723.7 859.8 1751.5 877.8 1738.0 882.6 C1724.6 887.4 1648.2 887.4 1631.9 882.6Z" fill="#c3b5a0"/><path d="M2058.5 742.0 C2059.2 735.4 2070.6 729.2 2079.2 725.4 C2087.8 721.6 2099.9 719.2 2110.2 719.2 C2120.5 719.2 2130.9 721.6 2141.2 725.4 C2151.6 729.2 2163.6 735.1 2172.2 742.0 C2180.9 748.9 2187.8 757.5 2192.9 766.8 C2198.1 776.1 2203.3 786.8 2203.3 797.8 C2203.3 808.8 2205.0 824.7 2192.9 833.0 C2180.9 841.2 2145.0 847.1 2130.9 847.4 C2116.8 847.8 2115.0 845.0 2108.1 835.0 C2101.2 825.0 2095.0 799.2 2089.5 787.5 C2084.0 775.7 2080.2 772.3 2075.1 764.7 C2069.9 757.1 2057.8 748.5 2058.5 742.0Z" fill="url(#b2)"/><path d="M2077.1 765.7 C2082.6 763.7 2101.2 756.4 2110.2 753.3 C2119.2 750.2 2124.0 747.7 2130.9 747.1 C2137.8 746.6 2148.1 749.7 2151.6 750.2" stroke="#7a6856" stroke-width="2.6" fill="none" opacity="0.7"/><path d="M2122.6 882.6 C2113.7 877.1 2121.9 856.0 2126.8 849.5 C2131.6 843.0 2144.0 842.3 2151.6 843.7 C2159.1 845.1 2167.4 851.3 2172.2 857.8 C2177.1 864.2 2188.8 878.4 2180.5 882.6 C2172.2 886.7 2131.6 888.1 2122.6 882.6Z" fill="#b9ab98"/><path d="M1706.4 882.6 C1635.6 871.9 1706.4 834.3 1708.4 818.5 C1710.5 802.6 1713.9 797.3 1718.8 787.5 C1723.7 777.6 1731.4 768.2 1738.0 759.5 C1744.6 750.9 1750.1 744.1 1758.7 735.8 C1767.3 727.4 1779.4 717.2 1789.7 709.3 C1800.0 701.4 1808.0 694.1 1820.7 688.6 C1833.5 683.1 1850.7 678.8 1866.2 676.2 C1881.7 673.6 1897.2 671.6 1913.8 672.9 C1930.3 674.2 1950.0 678.8 1965.5 684.1 C1981.0 689.4 1993.7 696.8 2006.8 704.7 C2019.9 712.7 2033.7 722.7 2044.0 731.6 C2054.4 740.6 2060.6 747.5 2068.9 758.5 C2077.1 769.5 2086.1 784.4 2093.7 797.8 C2101.2 811.2 2107.8 825.0 2114.3 839.2 C2120.9 853.3 2200.9 875.3 2133.0 882.6 C2065.0 889.8 1777.1 893.3 1706.4 882.6Z" fill="url(#dome)"/><path d="M1706.4 882.6 C1635.6 871.9 1706.4 834.3 1708.4 818.5 C1710.5 802.6 1713.9 797.3 1718.8 787.5 C1723.7 777.6 1731.4 768.2 1738.0 759.5 C1744.6 750.9 1750.1 744.1 1758.7 735.8 C1767.3 727.4 1779.4 717.2 1789.7 709.3 C1800.0 701.4 1808.0 694.1 1820.7 688.6 C1833.5 683.1 1850.7 678.8 1866.2 676.2 C1881.7 673.6 1897.2 671.6 1913.8 672.9 C1930.3 674.2 1950.0 678.8 1965.5 684.1 C1981.0 689.4 1993.7 696.8 2006.8 704.7 C2019.9 712.7 2033.7 722.7 2044.0 731.6 C2054.4 740.6 2060.6 747.5 2068.9 758.5 C2077.1 769.5 2086.1 784.4 2093.7 797.8 C2101.2 811.2 2107.8 825.0 2114.3 839.2 C2120.9 853.3 2200.9 875.3 2133.0 882.6 C2065.0 889.8 1777.1 893.3 1706.4 882.6Z" fill="#fff" filter="url(#mott)" opacity="0.6"/><path d="M1706.4 882.6 C1635.6 871.9 1706.4 834.3 1708.4 818.5 C1710.5 802.6 1713.9 797.3 1718.8 787.5 C1723.7 777.6 1731.4 768.2 1738.0 759.5 C1744.6 750.9 1750.1 744.1 1758.7 735.8 C1767.3 727.4 1779.4 717.2 1789.7 709.3 C1800.0 701.4 1808.0 694.1 1820.7 688.6 C1833.5 683.1 1850.7 678.8 1866.2 676.2 C1881.7 673.6 1897.2 671.6 1913.8 672.9 C1930.3 674.2 1950.0 678.8 1965.5 684.1 C1981.0 689.4 1993.7 696.8 2006.8 704.7 C2019.9 712.7 2033.7 722.7 2044.0 731.6 C2054.4 740.6 2060.6 747.5 2068.9 758.5 C2077.1 769.5 2086.1 784.4 2093.7 797.8 C2101.2 811.2 2107.8 825.0 2114.3 839.2 C2120.9 853.3 2200.9 875.3 2133.0 882.6 C2065.0 889.8 1777.1 893.3 1706.4 882.6Z" fill="#fff" filter="url(#grain)" opacity="0.7"/><ellipse cx="1895.2" cy="713.0" rx="14.5" ry="22.7" transform="rotate(-35 1895 713)" fill="#8c7767" opacity="0.3" filter="url(#soft1)"/><ellipse cx="1936.5" cy="746.1" rx="12.4" ry="24.8" transform="rotate(-25 1937 746)" fill="#8c7767" opacity="0.3" filter="url(#soft1)"/><ellipse cx="1963.4" cy="768.9" rx="10.3" ry="12.4" transform="rotate(0 1963 769)" fill="#8c7767" opacity="0.3" filter="url(#soft1)"/><ellipse cx="1996.5" cy="793.7" rx="11.6" ry="14.5" transform="rotate(10 1996 794)" fill="#8c7767" opacity="0.3" filter="url(#soft1)"/><ellipse cx="2017.2" cy="822.6" rx="8.3" ry="16.5" transform="rotate(0 2017 823)" fill="#8c7767" opacity="0.3" filter="url(#soft1)"/><ellipse cx="1779.4" cy="759.5" rx="8.3" ry="7.4" transform="rotate(0 1779 760)" fill="#8c7767" opacity="0.3" filter="url(#soft1)"/><ellipse cx="1780.4" cy="813.3" rx="10.3" ry="10.3" transform="rotate(0 1780 813)" fill="#8c7767" opacity="0.3" filter="url(#soft1)"/><ellipse cx="1862.1" cy="843.3" rx="9.1" ry="12.4" transform="rotate(0 1862 843)" fill="#8c7767" opacity="0.3" filter="url(#soft1)"/><ellipse cx="1913.8" cy="855.7" rx="8.3" ry="10.3" transform="rotate(0 1914 856)" fill="#8c7767" opacity="0.3" filter="url(#soft1)"/><ellipse cx="1969.6" cy="731.6" rx="14.5" ry="8.3" transform="rotate(20 1970 732)" fill="#8c7767" opacity="0.3" filter="url(#soft1)"/><ellipse cx="1880.7" cy="692.3" rx="12.4" ry="5.0" transform="rotate(10 1881 692)" fill="#8c7767" opacity="0.3" filter="url(#soft1)"/><ellipse cx="2044.0" cy="775.1" rx="10.3" ry="6.2" transform="rotate(30 2044 775)" fill="#8c7767" opacity="0.3" filter="url(#soft1)"/><path d="M1917.9 692.3 C1924.1 701.3 1946.2 730.3 1955.1 746.1 C1964.1 762.0 1967.5 773.7 1971.7 787.5 C1975.8 801.2 1977.5 813.0 1979.9 828.8 C1982.3 844.7 1985.1 873.6 1986.1 882.6" stroke="#77655a" stroke-width="1.6" fill="none" opacity="0.75"/><path d="M1760.7 779.2 C1760.1 784.0 1755.9 798.5 1756.6 808.1 C1757.3 817.8 1762.8 824.7 1764.9 837.1 C1766.9 849.5 1768.3 875.0 1769.0 882.6" stroke="#77655a" stroke-width="1.4" fill="none" opacity="0.65"/><polygon points="1944.8,692.3 1986.1,696.5 2004.7,708.9 1977.9,704.7" fill="#cfc0b2" opacity="0.6"/><g filter="url(#soft3)"><ellipse cx="2178" cy="821" rx="42" ry="66" fill="#8b857b"/><ellipse cx="2190" cy="787" rx="26" ry="34" fill="#9c968b"/></g><path d="M2187.9 789.7 l8.6 -7.8" stroke="#bdb8ad" stroke-width="0.7" opacity="0.8"/><path d="M2192.5 812.8 l3.2 7.3" stroke="#bdb8ad" stroke-width="0.7" opacity="0.8"/><path d="M2176.8 805.1 l3.6 -3.2" stroke="#bdb8ad" stroke-width="0.7" opacity="0.8"/><path d="M2162.4 788.6 l6.8 -8.6" stroke="#bdb8ad" stroke-width="0.7" opacity="0.8"/><path d="M2164.8 797.2 l-7.1 8.3" stroke="#bdb8ad" stroke-width="0.7" opacity="0.8"/><path d="M2194.1 809.7 l-3.3 2.4" stroke="#bdb8ad" stroke-width="0.7" opacity="0.8"/><path d="M2190.0 813.8 l0.2 -4.2" stroke="#bdb8ad" stroke-width="0.7" opacity="0.8"/><path d="M2199.3 844.5 l0.9 4.3" stroke="#bdb8ad" stroke-width="0.7" opacity="0.8"/><path d="M2191.6 821.8 l-1.0 -8.3" stroke="#bdb8ad" stroke-width="0.7" opacity="0.8"/><path d="M2183.8 819.7 l-0.4 -2.5" stroke="#bdb8ad" stroke-width="0.7" opacity="0.8"/><path d="M2182.3 821.7 l-7.2 6.3" stroke="#bdb8ad" stroke-width="0.7" opacity="0.8"/><path d="M2198.7 833.7 l8.6 -0.8" stroke="#bdb8ad" stroke-width="0.7" opacity="0.8"/><path d="M2183.1 823.2 l7.9 4.4" stroke="#bdb8ad" stroke-width="0.7" opacity="0.8"/><path d="M2188.0 812.4 l2.4 -2.5" stroke="#bdb8ad" stroke-width="0.7" opacity="0.8"/><path d="M2180.5 836.0 l-0.4 -3.7" stroke="#bdb8ad" stroke-width="0.7" opacity="0.8"/><path d="M2188.7 829.6 l6.9 -0.5" stroke="#bdb8ad" stroke-width="0.7" opacity="0.8"/><path d="M2169.4 826.6 l-5.2 -7.6" stroke="#bdb8ad" stroke-width="0.7" opacity="0.8"/><path d="M2175.0 774.6 l-3.7 4.1" stroke="#bdb8ad" stroke-width="0.7" opacity="0.8"/><path d="M2171.8 785.7 l1.5 5.1" stroke="#bdb8ad" stroke-width="0.7" opacity="0.8"/><path d="M2153.9 799.5 l6.8 -0.7" stroke="#bdb8ad" stroke-width="0.7" opacity="0.8"/><path d="M2184.8 820.7 l-2.9 3.6" stroke="#bdb8ad" stroke-width="0.7" opacity="0.8"/><path d="M2182.0 833.2 l-4.1 1.9" stroke="#bdb8ad" stroke-width="0.7" opacity="0.8"/><path d="M2195.0 833.9 l-3.2 8.2" stroke="#bdb8ad" stroke-width="0.7" opacity="0.8"/><path d="M2175.4 821.7 l1.2 -6.9" stroke="#bdb8ad" stroke-width="0.7" opacity="0.8"/><path d="M2164.0 836.5 l0.5 1.8" stroke="#bdb8ad" stroke-width="0.7" opacity="0.8"/><path d="M2174.9 792.4 l-7.9 -4.0" stroke="#bdb8ad" stroke-width="0.7" opacity="0.8"/><path d="M2186.0 814.2 l-5.4 -8.5" stroke="#bdb8ad" stroke-width="0.7" opacity="0.8"/><path d="M2200.3 807.1 l5.1 -7.7" stroke="#bdb8ad" stroke-width="0.7" opacity="0.8"/><path d="M2186.1 822.7 l-8.8 0.4" stroke="#bdb8ad" stroke-width="0.7" opacity="0.8"/><path d="M2191.3 847.1 l-2.5 6.7" stroke="#bdb8ad" stroke-width="0.7" opacity="0.8"/><path d="M2200.8 846.3 l7.3 -1.7" stroke="#bdb8ad" stroke-width="0.7" opacity="0.8"/><path d="M2189.8 846.9 l-8.5 -5.1" stroke="#bdb8ad" stroke-width="0.7" opacity="0.8"/><path d="M2200.5 830.1 l-0.0 -5.1" stroke="#bdb8ad" stroke-width="0.7" opacity="0.8"/><path d="M2202.9 845.3 l-4.8 -8.0" stroke="#bdb8ad" stroke-width="0.7" opacity="0.8"/><path d="M2200.8 841.5 l-3.3 4.7" stroke="#bdb8ad" stroke-width="0.7" opacity="0.8"/><path d="M2176.3 801.9 l-6.9 -5.6" stroke="#bdb8ad" stroke-width="0.7" opacity="0.8"/><path d="M2211.7 791.8 l3.0 4.9" stroke="#bdb8ad" stroke-width="0.7" opacity="0.8"/><path d="M2157.4 852.0 l-1.3 -7.9" stroke="#bdb8ad" stroke-width="0.7" opacity="0.8"/><path d="M2199.0 798.6 l1.2 3.2" stroke="#bdb8ad" stroke-width="0.7" opacity="0.8"/><path d="M2160.1 844.4 l-7.0 -1.6" stroke="#bdb8ad" stroke-width="0.7" opacity="0.8"/><path d="M2185.0 832.1 l-7.7 -7.8" stroke="#bdb8ad" stroke-width="0.7" opacity="0.8"/><path d="M2180.8 816.2 l3.4 8.0" stroke="#bdb8ad" stroke-width="0.7" opacity="0.8"/><path d="M2206.7 821.8 l-5.5 5.2" stroke="#bdb8ad" stroke-width="0.7" opacity="0.8"/><path d="M2157.4 796.3 l-8.9 -4.1" stroke="#bdb8ad" stroke-width="0.7" opacity="0.8"/><path d="M2206.9 789.0 l5.0 -0.4" stroke="#bdb8ad" stroke-width="0.7" opacity="0.8"/><path d="M2180.1 824.8 l3.8 0.2" stroke="#bdb8ad" stroke-width="0.7" opacity="0.8"/><path d="M2181.7 824.8 l7.1 -8.8" stroke="#bdb8ad" stroke-width="0.7" opacity="0.8"/><path d="M2164.6 865.1 l5.7 6.8" stroke="#bdb8ad" stroke-width="0.7" opacity="0.8"/><path d="M2183.0 819.0 l5.8 2.5" stroke="#bdb8ad" stroke-width="0.7" opacity="0.8"/><path d="M2152.0 821.0 l-3.7 -4.4" stroke="#bdb8ad" stroke-width="0.7" opacity="0.8"/><path d="M2174.8 872.8 l-8.8 5.8" stroke="#bdb8ad" stroke-width="0.7" opacity="0.8"/><path d="M2174.9 822.9 l4.1 -5.3" stroke="#bdb8ad" stroke-width="0.7" opacity="0.8"/><path d="M2171.8 861.3 l3.6 6.9" stroke="#bdb8ad" stroke-width="0.7" opacity="0.8"/><path d="M2187.6 873.1 l-7.5 -5.5" stroke="#bdb8ad" stroke-width="0.7" opacity="0.8"/><path d="M2204.5 799.3 l8.8 0.1" stroke="#bdb8ad" stroke-width="0.7" opacity="0.8"/><path d="M2171.3 846.6 l8.4 2.2" stroke="#bdb8ad" stroke-width="0.7" opacity="0.8"/><path d="M2189.6 837.2 l-7.4 6.5" stroke="#bdb8ad" stroke-width="0.7" opacity="0.8"/><path d="M2169.5 781.2 l-4.3 -2.5" stroke="#bdb8ad" stroke-width="0.7" opacity="0.8"/><path d="M2204.0 837.6 l2.8 3.2" stroke="#bdb8ad" stroke-width="0.7" opacity="0.8"/><path d="M2189.4 847.8 l8.8 -6.7" stroke="#bdb8ad" stroke-width="0.7" opacity="0.8"/><path d="M2178.8 838.4 l-0.1 -7.9" stroke="#bdb8ad" stroke-width="0.7" opacity="0.8"/><path d="M2184.6 819.2 l-3.0 -2.5" stroke="#bdb8ad" stroke-width="0.7" opacity="0.8"/><path d="M2182.7 834.7 l8.4 -6.7" stroke="#bdb8ad" stroke-width="0.7" opacity="0.8"/><path d="M2169.1 857.7 l4.2 -2.3" stroke="#bdb8ad" stroke-width="0.7" opacity="0.8"/><path d="M2183.1 856.2 l5.9 5.0" stroke="#bdb8ad" stroke-width="0.7" opacity="0.8"/><path d="M2182.5 841.6 l-7.1 2.7" stroke="#bdb8ad" stroke-width="0.7" opacity="0.8"/><path d="M2177.7 775.2 l-6.2 0.7" stroke="#bdb8ad" stroke-width="0.7" opacity="0.8"/><path d="M2196.5 798.5 l-4.1 3.8" stroke="#bdb8ad" stroke-width="0.7" opacity="0.8"/><path d="M2189.7 797.2 l2.4 -8.7" stroke="#bdb8ad" stroke-width="0.7" opacity="0.8"/><path d="M2180.9 843.2 l4.6 -1.9" stroke="#bdb8ad" stroke-width="0.7" opacity="0.8"/><g><polygon points="1882.7,601.4 1901.4,601.4 1917.9,611.7 1915.0,657.2 1905.5,657.2 1903.4,622.0 1895.2,611.7 1880.7,636.5 1870.3,628.2" fill="#c9ab8b" /><polygon points="1873.6,562.1 1880.3,553.4 1896.2,551.4 1912.2,555.4 1919.5,572.7 1921.2,602.6 1909.5,609.9 1902.9,596.0 1886.2,599.3 1879.6,602.6 1871.0,599.3" fill="#2e3b31" /><polygon points="1886.2,554.8 1900.2,553.4 1901.5,599.3 1884.9,600.6" fill="#e9e6df" /><polygon points="1872.4,603.4 1882.7,605.5 1880.7,614.2 1873.6,613.3" fill="#efeeeb" /><polygon points="1913.8,607.1 1921.2,608.0 1920.0,618.7 1913.8,617.9" fill="#efeeeb" /><ellipse cx="1897.2" cy="538.8" rx="20.4" ry="16.8" fill="#17120f"/><ellipse cx="1895.6" cy="542.4" rx="5.6" ry="7.6" fill="#8c5e42"/><polygon points="1889.6,550.1 1900.2,548.8 1898.2,555.4 1891.6,554.8" fill="#c8231c" /><polygon points="1905.9,657.2 1915.8,657.2 1918.3,671.7 1908.8,673.3" fill="#7a2a2c" /></g><g><polygon points="1820.7,661.3 1835.2,656.8 1880.7,659.3 1878.6,671.7 1853.8,682.0 1835.2,681.0 1822.8,671.7" fill="#8a5d2c" /><polygon points="1826.9,642.7 1835.2,626.2 1853.8,622.0 1872.4,626.2 1880.7,646.8 1880.7,667.5 1866.2,669.6 1853.8,657.2 1835.2,659.3 1826.9,657.2" fill="#6b6a3e" /><polygon points="1842.6,613.8 1853.8,603.4 1862.1,613.8 1860.4,630.3 1857.1,657.2 1845.5,657.2 1844.7,630.3" fill="#c6c4bf" /><ellipse cx="1846.8" cy="616.2" rx="6.6" ry="8.6" fill="#b98a6c"/><polygon points="1838.5,608.0 1843.5,600.5 1853.8,600.5 1856.3,607.6 1849.7,606.7 1841.4,614.2" fill="#16110f" /><polygon points="1835.2,659.3 1853.8,657.2 1849.7,667.5 1839.3,667.5" fill="#d9d6d0" /><ellipse cx="1832.3" cy="682.0" rx="7.4" ry="4.2" fill="#e9e6e0"/><ellipse cx="1859.6" cy="679.5" rx="7.6" ry="4.8" fill="#eeebe6"/></g><g><polygon points="1679.5,713.0 1722.9,717.2 1738.0,725.4 1750.4,746.1 1760.7,752.3 1746.3,766.8 1738.0,758.5 1731.2,737.8 1700.2,725.4 1689.8,746.1 1679.5,768.9 1669.2,768.9 1673.3,735.8" fill="#5e5a45" /><polygon points="1667.1,768.9 1679.5,768.9 1676.6,787.5 1667.1,792.6 1662.5,787.5" fill="#8a8066" /><polygon points="1738.0,746.1 1758.7,746.1 1761.2,752.3 1746.3,767.2 1738.0,758.9" fill="#7d7050" /><polygon points="1689.8,657.2 1704.3,651.0 1720.9,655.1 1725.0,675.8 1722.9,704.7 1702.2,708.9 1689.8,702.7" fill="#263049" /><polygon points="1678.5,667.5 1691.9,657.2 1694.0,684.1 1691.9,704.7 1702.2,719.2 1694.0,722.3 1679.5,708.9 1676.4,688.2" fill="#5f6b4a" /><polygon points="1720.9,657.2 1729.5,671.7 1727.1,704.7 1716.7,723.4 1708.4,719.2 1722.1,702.7" fill="#5f6b4a" /><ellipse cx="1709.7" cy="646.8" rx="7" ry="8.6" fill="#a37556"/><polygon points="1699.1,638.6 1704.3,630.3 1720.9,630.3 1725.0,640.6 1716.7,636.9 1706.4,638.6 1701.8,644.8" fill="#14100e" /><polygon points="1704.3,715.1 1712.6,713.0 1714.7,721.3 1706.4,723.4" fill="#9c7154" /></g><g><polygon points="1545.1,792.6 1598.9,792.6 1595.8,828.8 1596.8,857.8 1578.2,857.8 1572.0,804.0 1561.6,828.8 1557.5,853.6 1542.0,849.5 1547.2,818.5" fill="#121114" /><polygon points="1554.4,742.0 1603.0,742.0 1603.8,766.8 1598.9,793.7 1553.4,794.1 1552.3,766.8" fill="#c48a20" /><polygon points="1557.5,742.0 1522.3,751.3 1517.2,747.1 1555.4,735.8" fill="#c48a20" /><polygon points="1603.0,746.1 1640.2,773.0 1636.1,777.1 1600.9,758.5" fill="#c48a20" /><polygon points="1553.4,725.4 1574.0,719.6 1598.9,725.4 1615.4,742.0 1642.3,768.9 1640.2,773.0 1603.8,749.2 1554.4,743.0 1520.3,747.1 1521.3,742.0" fill="#2d4a2f" /><polygon points="1577.3,721.3 1591.0,723.4 1586.4,742.0 1578.2,742.0" fill="#5a4738" /><ellipse cx="1593.7" cy="707.8" rx="12" ry="13.4" fill="#1a1512"/><ellipse cx="1583.1" cy="711.0" rx="5.6" ry="7.6" fill="#c29274"/><polygon points="1577.3,704.7 1586.4,700.6 1590.6,708.9 1584.4,704.7" fill="#1a1512" /><ellipse cx="1515.3" cy="746.1" rx="3.4" ry="2.6" fill="#c29274"/><ellipse cx="1642.7" cy="773.4" rx="3.2" ry="2.6" fill="#c29274"/><ellipse cx="1546.1" cy="857.8" rx="7" ry="4.6" fill="#4a3a34"/><ellipse cx="1588.5" cy="860.9" rx="8.6" ry="4.6" fill="#4a3a34"/></g></g><path d="M1320.6 893.2 L1345.6 907.8 L1320.6 922.4Z" fill="#fff" stroke="#fff" stroke-width="1.6" stroke-linejoin="round"/><circle cx="2144.4" cy="907.6" r="2.7" fill="#e4e4e8"/><circle cx="2155.4" cy="907.6" r="2.7" fill="#e4e4e8"/><circle cx="2166.4" cy="907.6" r="2.7" fill="#e4e4e8"/><path d="M1279.6 934.6 Q1280.6 950.6 1296.6 951.6" stroke="#fff" stroke-width="7" stroke-linecap="round" fill="none"/></svg>
<div style="position:absolute;left:1660.60px;top:885.00px;width:154.60px;height:44.00px;background:#000;border-radius:6px"></div>
<div class="t" style="left:1678.4px;top:897.73px;font-size:20.4px;letter-spacing:1.05px;color:#8f8f94">00:<span style="color:#fff">00:29</span>:17</div>
<div style="position:absolute;left:327.00px;top:200.00px;width:1908.50px;height:102.00px;background:linear-gradient(170deg,#232328 40%,#202024 100%)"></div>
<div style="position:absolute;left:327.00px;top:302.00px;width:1908.50px;height:1.20px;background:#323236"></div>
<div class="t " style="left:362.30px;top:208.04px;font-size:17.20px;font-weight:400;color:#f2f2f4;letter-spacing:-0.285px;-webkit-text-stroke:0.38px #f2f2f4;">9:41 AM</div>
<div class="t " style="left:440.30px;top:208.04px;font-size:17.20px;font-weight:400;color:#f2f2f4;letter-spacing:-0.215px;-webkit-text-stroke:0.38px #f2f2f4;">Wed Nov 13</div>
<div class="t " style="left:2113.00px;top:207.84px;font-size:17.20px;font-weight:400;color:#f2f2f4;letter-spacing:-0.331px;-webkit-text-stroke:0.38px #f2f2f4;">100%</div>
<div class="t " style="left:425.40px;top:256.70px;font-size:22.80px;font-weight:400;color:#fff;letter-spacing:0.533px;-webkit-text-stroke:0.8px #fff;">National Parks</div>
<svg style="position:absolute;left:0;top:0" width="2560" height="400" viewBox="0 0 2560 400"><path d="M384.3 256.5 L371.3 268.3 L384.3 280.3" fill="none" stroke="#dcdce0" stroke-width="2.3" stroke-linecap="round" stroke-linejoin="round" stroke-width="2.4"/><g fill="none" stroke="#f2f2f4" stroke-linecap="butt"><path d="M2087.6 213.8 A12.4 12.4 0 0 1 2105.2 213.8" stroke-width="2.8"/><path d="M2091.2 217.8 A7.4 7.4 0 0 1 2101.6 217.8" stroke-width="2.8"/></g><path d="M2096.4 224 L2093.4 220.8 A4.2 4.2 0 0 1 2099.4 220.8 Z" fill="#f2f2f4"/><rect x="2164.4" y="209.2" width="31.6" height="14.6" rx="4.6" fill="none" stroke="#8e8e93" stroke-width="1.3"/><rect x="2166.6" y="211.4" width="27.2" height="10.2" rx="2.8" fill="#fff"/><path d="M2197.8 213.9 a3 3 0 0 1 0 5.2 Z" fill="#8e8e93"/><path d="M1128.3 259 H1125 a4 4 0 0 0 -4 4 V277 a4 4 0 0 0 4 4 H1141 a4 4 0 0 0 4 -4 V263 a4 4 0 0 0 -4 -4 H1137.6" fill="none" stroke="#dcdce0" stroke-width="2.3" stroke-linecap="round" stroke-linejoin="round"/><path d="M1133 250.6 V270.6 M1127.2 265.2 L1133 270.9 L1138.8 265.2" fill="none" stroke="#dcdce0" stroke-width="2.3" stroke-linecap="round" stroke-linejoin="round"/><path d="M1206.8 275.4 H1205 a4.4 4.4 0 0 1 -4.4 -4.4 V258.4 a4.4 4.4 0 0 1 4.4 -4.4 H1220 a4.4 4.4 0 0 1 4.4 4.4 V260" fill="none" stroke="#dcdce0" stroke-width="2.3" stroke-linecap="round" stroke-linejoin="round"/><rect x="1207.4" y="260.6" width="24" height="21" rx="4.6" fill="none" stroke="#dcdce0" stroke-width="2.3" stroke-linecap="round" stroke-linejoin="round"/><path d="M1232.6 267.4 L1241.4 261.8 V280.4 L1232.6 274.8" fill="none" stroke="#dcdce0" stroke-width="2.3" stroke-linecap="round" stroke-linejoin="round"/><rect x="1292.6" y="253" width="10.8" height="19" rx="5.4" fill="none" stroke="#dcdce0" stroke-width="2.3" stroke-linecap="round" stroke-linejoin="round"/><path d="M1288 265.2 a10 10 0 0 0 20 0 M1298 275.4 V282.6 M1291.4 282.8 H1304.6" fill="none" stroke="#dcdce0" stroke-width="2.3" stroke-linecap="round" stroke-linejoin="round"/><circle cx="1368.6" cy="267.8" r="13.6" fill="none" stroke="#dcdce0" stroke-width="2.3" stroke-linecap="round" stroke-linejoin="round"/><path d="M1363.2 280 L1368.6 261.6 L1374 280" fill="none" stroke="#dcdce0" stroke-width="2.3" stroke-linecap="round" stroke-linejoin="round"/><path d="M1366.3 270.2 L1368.6 261.6 L1370.9 270.2 Z" fill="#dcdce0" stroke="#dcdce0" stroke-width="1.6" stroke-linejoin="round"/><path d="M1432 257.6 H1428.6 a4.2 4.2 0 0 0 -4.2 4.2 V274 a4.2 4.2 0 0 0 4.2 4.2 H1445 a4.2 4.2 0 0 0 4.2 -4.2 V261.8 a4.2 4.2 0 0 0 -4.2 -4.2 H1441.4" fill="none" stroke="#dcdce0" stroke-width="2.3" stroke-linecap="round" stroke-linejoin="round"/><path d="M1436.7 267.2 V248 M1431.4 252.6 L1436.7 247.4 L1442 252.6" fill="none" stroke="#dcdce0" stroke-width="2.3" stroke-linecap="round" stroke-linejoin="round"/><path d="M1432 279.4 V281 a4.2 4.2 0 0 0 4.2 4.2 H1452 a4.2 4.2 0 0 0 4.2 -4.2 V268.6 a4.2 4.2 0 0 0 -4.2 -4.2 H1450.4" fill="none" stroke="#dcdce0" stroke-width="2.3" stroke-linecap="round" stroke-linejoin="round"/><circle cx="1745" cy="267.8" r="13.7" fill="none" stroke="#dcdce0" stroke-width="2.3" stroke-linecap="round" stroke-linejoin="round"/><path d="M1738.8 265.3 H1748.6 a4.6 4.6 0 0 1 0 9.2 H1744.4 M1743 260.7 L1738.3 265.3 L1743 269.9" fill="none" stroke="#dcdce0" stroke-width="2.3" stroke-linecap="round" stroke-linejoin="round" stroke-width="2.1"/><circle cx="1814.6" cy="267.8" r="13.7" fill="none" stroke="#3c3c41" stroke-width="2.2" stroke-linecap="round" stroke-linejoin="round"/><path d="M1820.8 265.3 H1811 a4.6 4.6 0 0 0 0 9.2 H1815.2 M1816.6 260.7 L1821.3 265.3 L1816.6 269.9" fill="none" stroke="#3c3c41" stroke-width="2.2" stroke-linecap="round" stroke-linejoin="round"/><rect x="1870.6" y="255.6" width="32" height="24.4" rx="3.4" fill="none" stroke="#dcdce0" stroke-width="2.3" stroke-linecap="round" stroke-linejoin="round" stroke-width="2.6"/><path d="M1876.6 261 H1889.4 M1893.6 261 H1897.2 M1876.6 265.6 H1881.6 M1886 265.6 H1897.2" stroke="#dcdce0" stroke-width="2.5" stroke-linecap="round" fill="none"/><rect x="1929.6" y="245.6" width="122.8" height="44.4" rx="5" fill="#2c2c30"/><rect x="1990.4" y="245.6" width="1.4" height="44.4" fill="#232327"/><rect x="1943.8" y="255.6" width="32.8" height="24.8" rx="3.4" fill="none" stroke="#dcdce0" stroke-width="2.3" stroke-linecap="round" stroke-linejoin="round" stroke-width="2.4"/><circle cx="1954.2" cy="263.6" r="3" fill="#dcdce0"/><path d="M1944.8 277 L1953.4 269.2 L1958.6 273.6 L1966.4 266.4 L1975.6 275 V277.4 a2 2 0 0 1 -2 2 H1946.8 a2 2 0 0 1 -2 -2 Z" fill="#dcdce0"/><path d="M2012.4 273.2 A11.2 11.2 0 1 1 2028 258.8" fill="none" stroke="#dcdce0" stroke-width="2.3" stroke-linecap="round" stroke-linejoin="round"/><rect x="2015.6" y="260.8" width="21.8" height="21.8" rx="3.6" fill="none" stroke="#dcdce0" stroke-width="2.3" stroke-linecap="round" stroke-linejoin="round"/><path d="M2026.4 263.6 l2.1 4.6 5 .5 -3.8 3.3 1.1 4.9 -4.4 -2.6 -4.4 2.6 1.1 -4.9 -3.8 -3.3 5 -.5 Z" fill="#dcdce0"/><circle cx="2039.6" cy="279.4" r="4.8" fill="#7472f2" stroke="#2c2c30" stroke-width="1"/><rect x="2064" y="245.6" width="61" height="44.4" rx="5" fill="#5e5ce6"/><circle cx="2094.2" cy="267.8" r="14.4" fill="none" stroke="#fff" stroke-width="2.5" stroke-dasharray="0.1 3.67" stroke-linecap="round" transform="rotate(7.5 2094.2 267.8)"/><path d="M2079 267.8 H2082.6" stroke="#fff" stroke-width="1.8" stroke-linecap="round"/><path d="M2090.4 263.2 a1.7 1.7 0 0 1 1.7 -1.7 h4.2 a1.7 1.7 0 0 1 1.7 1.7 v7 l-3.8 4 l-3.8 -4 Z" fill="#fff"/><circle cx="2177.6" cy="267.8" r="13.7" fill="none" stroke="#dcdce0" stroke-width="2.3" stroke-linecap="round" stroke-linejoin="round"/><circle cx="2170.6" cy="267.8" r="1.9" fill="#dcdce0"/><circle cx="2177.6" cy="267.8" r="1.9" fill="#dcdce0"/><circle cx="2184.6" cy="267.8" r="1.9" fill="#dcdce0"/></svg>
<div style="position:absolute;left:327.00px;top:1518.30px;width:1908.50px;height:113.00px;background:#1c1c1f"></div>
<div style="position:absolute;left:327.00px;top:1518.30px;width:1908.50px;height:1.20px;background:#313134"></div>
<div style="position:absolute;left:349.00px;top:1529.80px;width:129.00px;height:44.60px;background:#5e5ce6;border-radius:5px"></div>
<div style="position:absolute;left:499.80px;top:1529.80px;width:1.20px;height:44.60px;background:#38383b"></div>
<div style="position:absolute;left:523.40px;top:1529.80px;width:132.20px;height:44.60px;background:#2f2f31;border-radius:5px"></div>
<div style="position:absolute;left:672.40px;top:1528.40px;width:138.20px;height:47.40px;background:#2f2f31;border-radius:5px"></div>
<div style="position:absolute;left:827.60px;top:1529.80px;width:145.20px;height:44.60px;background:#2f2f31;border-radius:5px"></div>
<div class="t " style="left:393.90px;top:1542.88px;font-size:21.40px;font-weight:400;color:#e9e8ff;letter-spacing:0.017px;">Inspect</div>
<div class="t " style="left:572.20px;top:1542.88px;font-size:21.40px;font-weight:400;color:#f2f2f4;letter-spacing:-0.516px;">Volume</div>
<div class="t " style="left:720.00px;top:1542.88px;font-size:21.40px;font-weight:400;color:#f2f2f4;letter-spacing:-0.485px;">Animate</div>
<div class="t " style="left:872.00px;top:1542.88px;font-size:21.40px;font-weight:400;color:#f2f2f4;letter-spacing:0.027px;">Multicam</div>
<div style="position:absolute;left:1042.00px;top:1613.20px;width:478.60px;height:8.20px;background:#fff;border-radius:4.1px"></div>
<svg style="position:absolute;left:0;top:1500px" width="2560" height="140" viewBox="0 1500 2560 140"><rect x="366.2" y="1543.6" width="18" height="7" rx="3.5" fill="none" stroke="#e9e8ff" stroke-width="1.9"/><circle cx="369.9" cy="1547.1" r="2.5" fill="#e9e8ff"/><rect x="365.2" y="1553.8" width="20" height="8.4" rx="4.2" fill="#e9e8ff"/><circle cx="380.8" cy="1558" r="2.4" fill="#5e5ce6"/><path d="M541 1548.4 H545.4 L551.2 1543.8 V1560.8 L545.4 1556.2 H541 Z" fill="none" stroke="#dcdce0" stroke-width="2.1" stroke-linecap="round" stroke-linejoin="round" stroke-width="1.8"/><path d="M555.2 1548.6 a5 5 0 0 1 0 7.4 M558.6 1545.4 a9.4 9.4 0 0 1 0 13.8" fill="none" stroke="#dcdce0" stroke-width="2.1" stroke-linecap="round" stroke-linejoin="round" stroke-width="1.8"/><path d="M704.2 1542.2 L710.8 1552 L704.2 1561.8 L697.6 1552 Z" fill="none" stroke="#dcdce0" stroke-width="2.1" stroke-linecap="round" stroke-linejoin="round" stroke-width="1.9"/><path d="M699.4 1542.2 L692.8 1552 L699.4 1561.8" fill="none" stroke="#dcdce0" stroke-width="2.1" stroke-linecap="round" stroke-linejoin="round" stroke-width="1.3" stroke="#b4b4b9"/><path d="M695 1542.2 L688.4 1552 L695 1561.8" fill="none" stroke="#dcdce0" stroke-width="2.1" stroke-linecap="round" stroke-linejoin="round" stroke-width="0.9" stroke="#808085" stroke-dasharray="2 1"/><rect x="845.2" y="1544.0" width="7.4" height="7.4" rx="1.5" fill="none" stroke="#dcdce0" stroke-width="2.1" stroke-linecap="round" stroke-linejoin="round" stroke-width="1.6"/><rect x="855.2" y="1544.0" width="7.4" height="7.4" rx="1.5" fill="none" stroke="#dcdce0" stroke-width="2.1" stroke-linecap="round" stroke-linejoin="round" stroke-width="1.6"/><rect x="845.2" y="1553.8" width="7.4" height="7.4" rx="1.5" fill="none" stroke="#dcdce0" stroke-width="2.1" stroke-linecap="round" stroke-linejoin="round" stroke-width="1.6"/><rect x="855.2" y="1553.8" width="7.4" height="7.4" rx="1.5" fill="none" stroke="#dcdce0" stroke-width="2.1" stroke-linecap="round" stroke-linejoin="round" stroke-width="1.6"/><path d="M1759 1543.6 H1784.4 M1766.6 1543.4 V1540.4 a2.2 2.2 0 0 1 2.2 -2.2 H1774.6 a2.2 2.2 0 0 1 2.2 2.2 V1543.4" fill="none" stroke="#dcdce0" stroke-width="2.1" stroke-linecap="round" stroke-linejoin="round"/><path d="M1761.4 1544 L1763 1565 a3 3 0 0 0 3 2.8 H1777.4 a3 3 0 0 0 3 -2.8 L1782 1544" fill="none" stroke="#dcdce0" stroke-width="2.1" stroke-linecap="round" stroke-linejoin="round"/><path d="M1767 1548.6 L1767.6 1562.6 M1771.7 1548.6 V1562.6 M1776.4 1548.6 L1775.8 1562.6" fill="none" stroke="#dcdce0" stroke-width="2.1" stroke-linecap="round" stroke-linejoin="round" stroke-width="1.8"/><circle cx="1870" cy="1552.6" r="14.2" fill="none" stroke="#dcdce0" stroke-width="2.1" stroke-linecap="round" stroke-linejoin="round"/><path d="M1863.4 1553.6 L1868 1558.6 L1877 1546.6" fill="none" stroke="#dcdce0" stroke-width="2.1" stroke-linecap="round" stroke-linejoin="round"/><path d="M1968.4 1540.4 H1959.4 a3 3 0 0 0 -3 3 V1561.4 a3 3 0 0 0 3 3 H1968.4 M1976.8 1540.4 H1985.8 a3 3 0 0 1 3 3 V1561.4 a3 3 0 0 1 -3 3 H1976.8" fill="none" stroke="#dcdce0" stroke-width="2.1" stroke-linecap="round" stroke-linejoin="round"/><path d="M1972.6 1535.4 V1541.6 M1972.6 1546.4 V1558.6 M1972.6 1563.4 V1569.6" fill="none" stroke="#dcdce0" stroke-width="2.1" stroke-linecap="round" stroke-linejoin="round"/><path d="M2078 1535.4 V1569.6" fill="none" stroke="#dcdce0" stroke-width="2.1" stroke-linecap="round" stroke-linejoin="round"/><path d="M2078 1540.4 H2091.4 a3 3 0 0 1 3 3 V1561.4 a3 3 0 0 1 -3 3 H2078" fill="none" stroke="#dcdce0" stroke-width="2.1" stroke-linecap="round" stroke-linejoin="round"/><path d="M2072.6 1540.4 H2064.4 a3 3 0 0 0 -3 3 V1561.4 a3 3 0 0 0 3 3 H2072.6" fill="none" stroke="#dcdce0" stroke-width="2.1" stroke-linecap="round" stroke-linejoin="round" stroke-width="1.4" stroke-dasharray="3.6 2.2"/><path d="M2060.6 1552.4 H2073.6 M2069.2 1547.4 L2074 1552.4 L2069.2 1557.4" fill="none" stroke="#dcdce0" stroke-width="2.1" stroke-linecap="round" stroke-linejoin="round" stroke-width="1.9"/><path d="M2182 1535.4 V1569.6" fill="none" stroke="#dcdce0" stroke-width="2.1" stroke-linecap="round" stroke-linejoin="round"/><path d="M2182 1540.4 H2168.6 a3 3 0 0 0 -3 3 V1561.4 a3 3 0 0 0 3 3 H2182" fill="none" stroke="#dcdce0" stroke-width="2.1" stroke-linecap="round" stroke-linejoin="round"/><path d="M2187.4 1540.4 H2195.6 a3 3 0 0 1 3 3 V1561.4 a3 3 0 0 1 -3 3 H2187.4" fill="none" stroke="#dcdce0" stroke-width="2.1" stroke-linecap="round" stroke-linejoin="round" stroke-width="1.4" stroke-dasharray="3.6 2.2"/><path d="M2199.4 1552.4 H2186.4 M2190.8 1547.4 L2186 1552.4 L2190.8 1557.4" fill="none" stroke="#dcdce0" stroke-width="2.1" stroke-linecap="round" stroke-linejoin="round" stroke-width="1.9"/></svg>
</div></body></html>
